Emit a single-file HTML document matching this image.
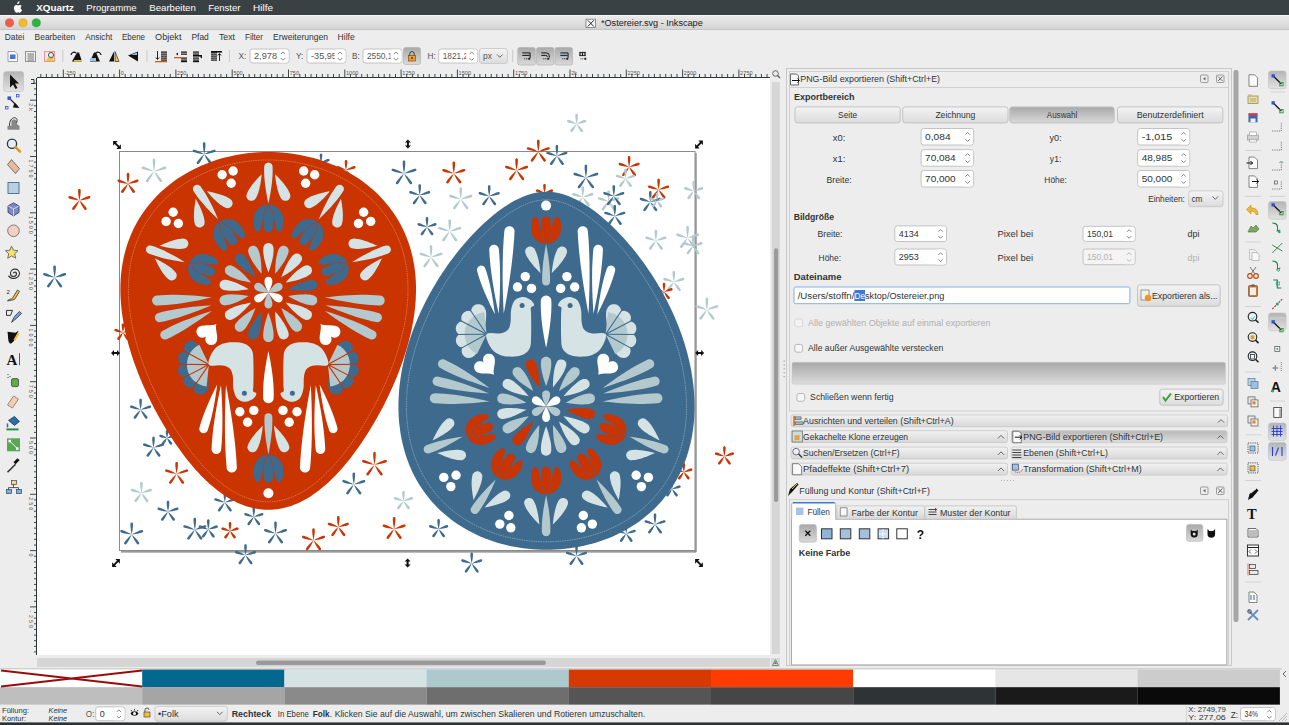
<!DOCTYPE html><html><head><meta charset="utf-8"><style>html,body{margin:0;padding:0;background:#ededed;overflow:hidden}svg{display:block}</style></head><body><svg width="1289" height="725" viewBox="0 0 1289 725" font-family="Liberation Sans">
<defs>
<linearGradient id="gTitle" x1="0" y1="0" x2="0" y2="1"><stop offset="0" stop-color="#ececec"/><stop offset="1" stop-color="#d2d2d2"/></linearGradient>
<linearGradient id="gBtn" x1="0" y1="0" x2="0" y2="1"><stop offset="0" stop-color="#f4f4f4"/><stop offset="1" stop-color="#dcdcdc"/></linearGradient>
<linearGradient id="gBtnP" x1="0" y1="0" x2="0" y2="1"><stop offset="0" stop-color="#a9a9a9"/><stop offset="1" stop-color="#d9d9d9"/></linearGradient>
<linearGradient id="gBar" x1="0" y1="0" x2="0" y2="1"><stop offset="0" stop-color="#f2f2f2"/><stop offset="1" stop-color="#d8d8d8"/></linearGradient>
<linearGradient id="gBarP" x1="0" y1="0" x2="0" y2="1"><stop offset="0" stop-color="#b8b8b8"/><stop offset="1" stop-color="#dedede"/></linearGradient>
<linearGradient id="gProg" x1="0" y1="0" x2="0" y2="1"><stop offset="0" stop-color="#a8a8a8"/><stop offset="1" stop-color="#dcdcdc"/></linearGradient>
<linearGradient id="gTool" x1="0" y1="0" x2="0" y2="1"><stop offset="0" stop-color="#b4b4b4"/><stop offset="1" stop-color="#e2e2e2"/></linearGradient>
<clipPath id="cCanvas"><rect x="37" y="78" width="733" height="577"/></clipPath>
</defs>
<rect x="0" y="0" width="1289" height="725" fill="#ededed" rx="0" />
<rect x="0" y="0" width="1289" height="15" fill="#3a4144" rx="0" />
<path d="M18.6 4.2c.5-.6.8-1.4.7-2.2-.7 0-1.5.5-2 1.1-.4.5-.8 1.3-.7 2.1.8.1 1.5-.4 2-1zm1.9 5.3c0-1.4 1.1-2 1.2-2.1-.7-1-1.7-1.1-2-1.1-.9-.1-1.7.5-2.1.5-.4 0-1.1-.5-1.8-.5-.9 0-1.8.6-2.3 1.4-1 1.7-.3 4.3.7 5.7.5.7 1 1.5 1.8 1.4.7 0 1-.5 1.8-.5s1.1.5 1.8.4c.8 0 1.2-.7 1.7-1.4.5-.8.7-1.6.8-1.6-.1 0-1.6-.6-1.6-2.2z" fill="#fff" transform="translate(2.2,-0.6) scale(0.9)"/>
<text x="36.3" y="10.6" font-size="9.8" font-weight="700" fill="#ffffff" text-anchor="start" textLength="37.6" lengthAdjust="spacingAndGlyphs" >XQuartz</text>
<text x="86.3" y="10.6" font-size="9.8" font-weight="400" fill="#ffffff" text-anchor="start" textLength="50.2" lengthAdjust="spacingAndGlyphs" >Programme</text>
<text x="149.3" y="10.6" font-size="9.8" font-weight="400" fill="#ffffff" text-anchor="start" textLength="46.5" lengthAdjust="spacingAndGlyphs" >Bearbeiten</text>
<text x="208.2" y="10.6" font-size="9.8" font-weight="400" fill="#ffffff" text-anchor="start" textLength="32.3" lengthAdjust="spacingAndGlyphs" >Fenster</text>
<text x="253" y="10.6" font-size="9.8" font-weight="400" fill="#ffffff" text-anchor="start" textLength="20" lengthAdjust="spacingAndGlyphs" >Hilfe</text>
<rect x="0" y="15" width="1289" height="15" fill="url(#gTitle)" rx="0" />
<line x1="0" y1="15.5" x2="1289" y2="15.5" stroke="#f5f5f5" stroke-width="1"/>
<line x1="0" y1="29.5" x2="1289" y2="29.5" stroke="#c4c4c4" stroke-width="1"/>
<circle cx="9.5" cy="22.8" r="4.1" fill="#f05a50" stroke="#d8463e" stroke-width="0.5"/>
<circle cx="23" cy="22.8" r="4.1" fill="#f1bb2c" stroke="#d69b1a" stroke-width="0.5"/>
<circle cx="36.3" cy="22.8" r="4.1" fill="#2db43c" stroke="#229a30" stroke-width="0.5"/>
<rect x="586" y="19.2" width="9.5" height="8.3" fill="#fafafa" rx="0" stroke="#777" stroke-width="0.8" />
<path d="M587.8 20.3 L593.8 26.5 M593.8 20.3 L587.8 26.5" stroke="#222" stroke-width="1"/>
<text x="601" y="26.2" font-size="9.2" font-weight="400" fill="#1a1a1a" text-anchor="start" textLength="101.7" lengthAdjust="spacingAndGlyphs" >*Ostereier.svg - Inkscape</text>
<text x="4.8" y="40" font-size="8.5" font-weight="400" fill="#2e3436" text-anchor="start" textLength="19.5" lengthAdjust="spacingAndGlyphs" >Datei</text>
<text x="34.6" y="40" font-size="8.5" font-weight="400" fill="#2e3436" text-anchor="start" textLength="40.7" lengthAdjust="spacingAndGlyphs" >Bearbeiten</text>
<text x="85.3" y="40" font-size="8.5" font-weight="400" fill="#2e3436" text-anchor="start" textLength="27" lengthAdjust="spacingAndGlyphs" >Ansicht</text>
<text x="122" y="40" font-size="8.5" font-weight="400" fill="#2e3436" text-anchor="start" textLength="23" lengthAdjust="spacingAndGlyphs" >Ebene</text>
<text x="155" y="40" font-size="8.5" font-weight="400" fill="#2e3436" text-anchor="start" textLength="26.5" lengthAdjust="spacingAndGlyphs" >Objekt</text>
<text x="191.5" y="40" font-size="8.5" font-weight="400" fill="#2e3436" text-anchor="start" textLength="17.3" lengthAdjust="spacingAndGlyphs" >Pfad</text>
<text x="219" y="40" font-size="8.5" font-weight="400" fill="#2e3436" text-anchor="start" textLength="16" lengthAdjust="spacingAndGlyphs" >Text</text>
<text x="245" y="40" font-size="8.5" font-weight="400" fill="#2e3436" text-anchor="start" textLength="18" lengthAdjust="spacingAndGlyphs" >Filter</text>
<text x="273" y="40" font-size="8.5" font-weight="400" fill="#2e3436" text-anchor="start" textLength="55" lengthAdjust="spacingAndGlyphs" >Erweiterungen</text>
<text x="337.6" y="40" font-size="8.5" font-weight="400" fill="#2e3436" text-anchor="start" textLength="17.1" lengthAdjust="spacingAndGlyphs" >Hilfe</text>
<path d="M8 51.5h7l2.5 2.5v7.5h-9.5z" fill="#fafafa" stroke="#8a8a8a" stroke-width="0.8"/>
<rect x="10" y="54.5" width="5.5" height="4.5" fill="#3f79c8" rx="0" />
<rect x="25.5" y="51.5" width="10" height="10" fill="none" rx="0" stroke="#222" stroke-width="0.9" stroke-dasharray="1,1"/>
<line x1="27.5" y1="54" x2="34" y2="54" stroke="#555" stroke-width="0.8"/>
<line x1="27.5" y1="56" x2="34" y2="56" stroke="#555" stroke-width="0.8"/>
<line x1="27.5" y1="58" x2="34" y2="58" stroke="#555" stroke-width="0.8"/>
<line x1="27.5" y1="60" x2="34" y2="60" stroke="#555" stroke-width="0.8"/>
<rect x="44.5" y="51.5" width="10" height="10" fill="none" rx="0" stroke="#e03020" stroke-width="0.9" stroke-dasharray="1,1"/>
<path d="M45.5 61 l3-4 h5 v4z" fill="#f0c040"/>
<circle cx="51" cy="55" r="2.6" fill="#dce8f4" stroke="#333" stroke-width="0.8"/>
<line x1="62.8" y1="50" x2="62.8" y2="62" stroke="#c8c8c8" stroke-width="1"/>
<path d="M72 61.5 h10 l-3-9 l-2 0 z" fill="#111"/><path d="M74 60 h8 v1.5 h-8z" fill="#f4c040"/><path d="M71 55 a3 3 0 0 1 5-2" fill="none" stroke="#111" stroke-width="1.2"/>
<path d="M90 61.5 h10 l-4-9 l-2 0 z" fill="#111"/><path d="M90 58 h6 v3 h-6z" fill="#9cc0e0"/><path d="M96 53 a3 3 0 0 1 5 2" fill="none" stroke="#111" stroke-width="1.2"/>
<path d="M109 61.5 h5 v-10 z" fill="#111"/><path d="M115 51.5 v10 h4 z" fill="#f4c040" stroke="#111" stroke-width="0.6"/>
<path d="M128 55.5 l10 -4 v10 z" fill="#111"/><path d="M131 55 l6 -2.5 v2.5z" fill="#9cc0e0"/>
<line x1="147" y1="50" x2="147" y2="62" stroke="#c8c8c8" stroke-width="1"/>
<rect x="161" y="51.5" width="6" height="1.2" fill="#111"/>
<rect x="161" y="53.5" width="6" height="1.2" fill="#111"/>
<rect x="161" y="55.5" width="6" height="1.2" fill="#111"/>
<rect x="161" y="57.5" width="6" height="1.2" fill="#111"/>
<rect x="161" y="59.5" width="6" height="1.2" fill="#111"/>
<path d="M157.5 51 v8 M155.8 57.5 l1.7 2 l1.7 -2" stroke="#111" stroke-width="0.9" fill="none"/>
<rect x="155" y="61" width="12" height="1.3" fill="#c46020" rx="0" />
<rect x="181" y="51.5" width="6" height="1.2" fill="#111"/>
<rect x="181" y="53.5" width="6" height="1.2" fill="#111"/>
<rect x="181" y="57.5" width="6" height="1.2" fill="#111"/>
<rect x="181" y="59.5" width="6" height="1.2" fill="#111"/>
<rect x="181" y="61" width="6" height="1.2" fill="#111"/>
<rect x="174" y="57" width="9" height="1.3" fill="#c46020" rx="0" />
<path d="M176 54 l2-1.5 v3z" fill="#111"/>
<rect x="193" y="51.5" width="6" height="1.2" fill="#111"/>
<rect x="193" y="53.5" width="6" height="1.2" fill="#111"/>
<rect x="193" y="57.5" width="6" height="1.2" fill="#111"/>
<rect x="193" y="59.5" width="6" height="1.2" fill="#111"/>
<rect x="193" y="61" width="6" height="1.2" fill="#111"/>
<rect x="193" y="55" width="9" height="1.6" fill="#111" rx="0" />
<path d="M200 57 l2 -1.5 l0 3z" fill="#111"/>
<rect x="211" y="51.5" width="6" height="1.2" fill="#111"/>
<rect x="211" y="53.5" width="6" height="1.2" fill="#111"/>
<rect x="211" y="55.5" width="6" height="1.2" fill="#111"/>
<rect x="211" y="57.5" width="6" height="1.2" fill="#111"/>
<rect x="211" y="59.5" width="6" height="1.2" fill="#111"/>
<rect x="211" y="51" width="11" height="1.6" fill="#111" rx="0" />
<path d="M219.5 61 v-7 M217.8 55.5 l1.7 -2 l1.7 2" stroke="#111" stroke-width="0.9" fill="none"/>
<line x1="229.5" y1="50" x2="229.5" y2="62" stroke="#c8c8c8" stroke-width="1"/>
<text x="238.5" y="59.3" font-size="8.2" font-weight="400" fill="#555" text-anchor="start" >X:</text>
<rect x="250.0" y="49.0" width="39" height="14" fill="#ffffff" rx="2.5" stroke="#c2c2c2" stroke-width="1" />
<text x="254.0" y="59.1" font-size="8.3" font-weight="400" fill="#555" text-anchor="start" textLength="23" lengthAdjust="spacingAndGlyphs" >2,978</text>
<rect x="277.5" y="49.5" width="11" height="13" fill="#ffffff" rx="2" />
<path d="M280.8 54.2 l2.2 -2.2 l2.2 2.2 M280.8 58.1 l2.2 2.2 l2.2 -2.2" stroke="#666" stroke-width="0.8" fill="none"/>
<text x="296" y="59.3" font-size="8.2" font-weight="400" fill="#555" text-anchor="start" >Y:</text>
<rect x="307.0" y="49.0" width="39" height="14" fill="#ffffff" rx="2.5" stroke="#c2c2c2" stroke-width="1" />
<text x="311.0" y="59.1" font-size="8.3" font-weight="400" fill="#555" text-anchor="start" textLength="31" lengthAdjust="spacingAndGlyphs" >-35,955</text>
<rect x="334.5" y="49.5" width="11" height="13" fill="#ffffff" rx="2" />
<path d="M337.8 54.2 l2.2 -2.2 l2.2 2.2 M337.8 58.1 l2.2 2.2 l2.2 -2.2" stroke="#666" stroke-width="0.8" fill="none"/>
<text x="352" y="59.3" font-size="8.2" font-weight="400" fill="#555" text-anchor="start" >B:</text>
<rect x="363.0" y="49.0" width="39" height="14" fill="#ffffff" rx="2.5" stroke="#c2c2c2" stroke-width="1" />
<text x="367.0" y="59.1" font-size="8.3" font-weight="400" fill="#555" text-anchor="start" textLength="30" lengthAdjust="spacingAndGlyphs" >2550,18</text>
<rect x="390.5" y="49.5" width="11" height="13" fill="#ffffff" rx="2" />
<path d="M393.8 54.2 l2.2 -2.2 l2.2 2.2 M393.8 58.1 l2.2 2.2 l2.2 -2.2" stroke="#666" stroke-width="0.8" fill="none"/>
<rect x="403.5" y="47.5" width="17" height="17" fill="url(#gBtnP)" rx="2" stroke="#b8b8b8" stroke-width="0.8" />
<rect x="408.5" y="55.5" width="7" height="5.5" fill="#e8a020" stroke="#704010" stroke-width="0.6"/><path d="M409.8 55.5 v-1.8 a2.2 2.2 0 0 1 4.4 0 v1.8" fill="none" stroke="#333" stroke-width="0.9"/><rect x="411" y="57" width="2" height="2" fill="#c03010"/>
<text x="427.5" y="59.3" font-size="8.2" font-weight="400" fill="#555" text-anchor="start" >H:</text>
<rect x="438.7" y="49.0" width="39" height="14" fill="#ffffff" rx="2.5" stroke="#c2c2c2" stroke-width="1" />
<text x="442.7" y="59.1" font-size="8.3" font-weight="400" fill="#555" text-anchor="start" textLength="30" lengthAdjust="spacingAndGlyphs" >1821,25</text>
<rect x="466.2" y="49.5" width="11" height="13" fill="#ffffff" rx="2" />
<path d="M469.5 54.2 l2.2 -2.2 l2.2 2.2 M469.5 58.1 l2.2 2.2 l2.2 -2.2" stroke="#666" stroke-width="0.8" fill="none"/>
<rect x="479.5" y="48.5" width="28" height="15" fill="url(#gBtn)" rx="2.5" stroke="#c4c4c4" stroke-width="0.8" />
<text x="483" y="59.3" font-size="8.5" font-weight="400" fill="#555" text-anchor="start" >px</text>
<path d="M497 54.5 l2.8 2.8 l2.8 -2.8" stroke="#555" stroke-width="0.9" fill="none"/>
<line x1="512.7" y1="50" x2="512.7" y2="62" stroke="#c8c8c8" stroke-width="1"/>
<rect x="517.8" y="47.5" width="17.5" height="17.5" fill="url(#gBtnP)" rx="2" stroke="#b8b8b8" stroke-width="0.8" />
<rect x="536.5" y="47.5" width="17.5" height="17.5" fill="url(#gBtnP)" rx="2" stroke="#b8b8b8" stroke-width="0.8" />
<rect x="555" y="47.5" width="17.5" height="17.5" fill="url(#gBtnP)" rx="2" stroke="#b8b8b8" stroke-width="0.8" />
<path d="M522.3 52.9 h7.8 v5 M522.3 55.4 h7.3" stroke="#111" stroke-width="1" fill="none"/>
<path d="M524.3 58.8 h1 M526.0999999999999 58.8 h1 M527.8 58.8 h2.6 M529.1999999999999 57.6 v2.4" stroke="#111" stroke-width="0.9"/>
<path d="M541.3 52.9 h5 a3 3 0 0 1 3 3 v1.6 M541.3 55.4 h4.5 a1.5 1.5 0 0 1 1.5 1.5" stroke="#111" stroke-width="1" fill="none"/>
<path d="M543.3 58.8 h1 M545.0999999999999 58.8 h1 M546.8 58.8 h2.6 M548.1999999999999 57.6 v2.4" stroke="#111" stroke-width="0.9"/>
<rect x="560.3" y="53.2" width="7.5" height="3.5" fill="#8ab4dc"/><path d="M560.3 52.9 h7.8 v5 M560.3 55.4 h7.3" stroke="#111" stroke-width="0.9" fill="none"/>
<path d="M562.3 58.8 h1 M564.0999999999999 58.8 h1 M565.8 58.8 h2.6 M567.1999999999999 57.6 v2.4" stroke="#111" stroke-width="0.9"/>
<path d="M579.3 52.4 h6.5 M579.3 55.6 h6.5" stroke="#111" stroke-width="0.9"/><path d="M580 52.5 v3 M582.5 52.5 v3 M585 52.5 v3" stroke="#111" stroke-width="1.2"/><path d="M580.5 58.8 h1 M582.3 58.8 h1 M584 58.8 h2.4 M585.3 57.6 v2.4" stroke="#111" stroke-width="0.9"/>
<rect x="3.6" y="71.5" width="20" height="20" fill="url(#gTool)" rx="2.5" stroke="#c0c0c0" stroke-width="0.6" />
<path d="M10 74.5 v13 l3-3 l2.5 4.5 l2-1 l-2.5-4.5 h4z" fill="#111"/>
<path d="M9.5 98.4 l8 8" stroke="#111" stroke-width="1.3"/><path d="M14.5 102.4 l5 5.5 l-6.5 -0.5z" fill="#111"/><rect x="7.5" y="96.4" width="3.5" height="3.5" fill="#3050e0"/><rect x="16.5" y="94.4" width="2.5" height="2.5" fill="none" stroke="#3050e0" stroke-width="0.8"/><rect x="5.5" y="106.4" width="2.5" height="2.5" fill="none" stroke="#3050e0" stroke-width="0.8"/>
<path d="M7.5 129.8 h12 v-4 c-2 0 -3 -3 -3 -5 a3 3 0 0 0 -5 0 v5 h-4z" fill="#888"/><path d="M9.5 125.8 c0-5 2-8 5-8 s3 3 2 5" fill="none" stroke="#333" stroke-width="1"/>
<circle cx="12.0" cy="143.7" r="4.6" fill="#e4eef8" stroke="#333" stroke-width="1.3"/><path d="M15.5 147.2 l4.5 4.5" stroke="#d89a20" stroke-width="2.6" stroke-linecap="round"/>
<path d="M7.5 164.6 l4 -5 l8 9 l-4 5z" fill="#e8b8a0" stroke="#555" stroke-width="0.8"/>
<rect x="8.0" y="182.5" width="11" height="11" fill="#b8d0e4" stroke="#4a6a8a" stroke-width="0.9"/>
<path d="M13.5 202.89999999999998 l5.5 3 v6.5 l-5.5 3.5 l-5.5 -3.5 v-6.5z" fill="#7a8cc8" stroke="#334" stroke-width="0.8"/><path d="M8.0 205.89999999999998 l5.5 3 l5.5 -3 M13.5 208.89999999999998 v7" stroke="#eef" stroke-width="0.7" fill="none"/>
<circle cx="13.5" cy="230.79999999999998" r="5.8" fill="#f0d0c4" stroke="#6a5a5a" stroke-width="0.8"/>
<path d="M11.5 246.2 l2 4 l4.5 0.5 l-3.3 3 l1 4.5 l-4 -2.3 l-4 2.3 l1 -4.5 l-3.3 -3 l4.5 -0.5z" fill="#f6e070" stroke="#555" stroke-width="0.8"/>
<path d="M13.5 273.6 a1.5 1.5 0 0 1 3 0 a3 3 0 0 1 -6 0 a4.5 4.5 0 0 1 9 0 a6 6 0 0 1 -11 2" fill="none" stroke="#333" stroke-width="1.1"/>
<path d="M7.5 301.0 c2 -3 4 -1 5 -3 l5 -8 l2 1.5 l-5 8z" fill="#f0c040" stroke="#333" stroke-width="0.8"/><text x="6.5" y="294.0" font-size="6" fill="#222">2</text>
<path d="M6.5 310.4 h6 l-2 5 h-4z" fill="none" stroke="#333" stroke-width="1"/><path d="M11.5 322.4 l3 -6 l5 -5 l2 2 l-5 5z" fill="#7aa0d0" stroke="#333" stroke-width="0.8"/>
<path d="M7.5 331.79999999999995 c1 6 0 10 3 12 c2 -1 5 -4 6 -8 l2 -5 l-3 2 z" fill="#111"/><path d="M13.5 339.79999999999995 l4 -7 l2 1 l-4 7z" fill="#f0c040"/>
<text x="6.5" y="364.7" font-size="15" font-weight="700" font-family="Liberation Serif" fill="#111">A</text><line x1="19.5" y1="353.2" x2="19.5" y2="365.2" stroke="#333" stroke-width="0.8"/>
<rect x="11.5" y="378.59999999999997" width="7" height="8" rx="1.5" fill="#5ab040" stroke="#333" stroke-width="0.7"/><path d="M7.5 374.59999999999997 h1 M9.5 376.59999999999997 h1 M7.5 377.59999999999997 h1" stroke="#333" stroke-width="1"/>
<path d="M7.5 405.0 l6 -9 l5 3 l-6 9z" fill="#f4ccb0" stroke="#777" stroke-width="0.8"/>
<path d="M8.5 420.4 l6 -4 l5 5 l-5 4z" fill="#2a6ea8" stroke="#234" stroke-width="0.8"/><path d="M6.5 429.4 h12" stroke="#2a8a40" stroke-width="2"/><path d="M7.5 423.4 v4" stroke="#2a6ea8" stroke-width="1.5"/>
<rect x="7.0" y="438.29999999999995" width="13" height="13" fill="#58a858"/><path d="M9.5 440.79999999999995 l8 8" stroke="#fff" stroke-width="0.9"/><rect x="8.5" y="439.79999999999995" width="2.5" height="2.5" fill="#fff"/><rect x="16.0" y="447.29999999999995" width="2.5" height="2.5" fill="#fff"/>
<path d="M7.5 472.2 l8 -8" stroke="#333" stroke-width="1.6"/><path d="M14.5 463.2 l4 -4" stroke="#111" stroke-width="3"/>
<rect x="11.5" y="480.59999999999997" width="5" height="4" fill="#f0d890" stroke="#345" stroke-width="0.7"/><rect x="6.5" y="489.59999999999997" width="5" height="4" fill="#7ab0e0" stroke="#345" stroke-width="0.7"/><rect x="16.5" y="489.59999999999997" width="5" height="4" fill="#7ab0e0" stroke="#345" stroke-width="0.7"/><path d="M13.5 484.59999999999997 v3 M8.5 489.59999999999997 v-2 h10 v2" stroke="#333" stroke-width="0.8" fill="none"/>
<rect x="37" y="68" width="735" height="10" fill="#ededed" rx="0" />
<line x1="37" y1="77.5" x2="770" y2="77.5" stroke="#2e3436" stroke-width="1"/>
<line x1="36.5" y1="78" x2="36.5" y2="655" stroke="#2e3436" stroke-width="1"/>
<path d="M40.8 77 v-3 M46.4 77 v-3 M52.0 77 v-3 M57.7 77 v-3 M63.3 77 v-7.5 M68.9 77 v-3 M74.6 77 v-3 M80.2 77 v-3 M85.8 77 v-3 M91.4 77 v-3 M97.1 77 v-3 M102.7 77 v-3 M108.3 77 v-3 M114.0 77 v-3 M119.6 77 v-7.5 M125.2 77 v-3 M130.9 77 v-3 M136.5 77 v-3 M142.1 77 v-3 M147.8 77 v-3 M153.4 77 v-3 M159.0 77 v-3 M164.6 77 v-3 M170.3 77 v-3 M175.9 77 v-7.5 M181.5 77 v-3 M187.2 77 v-3 M192.8 77 v-3 M198.4 77 v-3 M204.1 77 v-3 M209.7 77 v-3 M215.3 77 v-3 M220.9 77 v-3 M226.6 77 v-3 M232.2 77 v-7.5 M237.8 77 v-3 M243.5 77 v-3 M249.1 77 v-3 M254.7 77 v-3 M260.3 77 v-3 M266.0 77 v-3 M271.6 77 v-3 M277.2 77 v-3 M282.9 77 v-3 M288.5 77 v-7.5 M294.1 77 v-3 M299.8 77 v-3 M305.4 77 v-3 M311.0 77 v-3 M316.6 77 v-3 M322.3 77 v-3 M327.9 77 v-3 M333.5 77 v-3 M339.2 77 v-3 M344.8 77 v-7.5 M350.4 77 v-3 M356.1 77 v-3 M361.7 77 v-3 M367.3 77 v-3 M372.9 77 v-3 M378.6 77 v-3 M384.2 77 v-3 M389.8 77 v-3 M395.5 77 v-3 M401.1 77 v-7.5 M406.7 77 v-3 M412.4 77 v-3 M418.0 77 v-3 M423.6 77 v-3 M429.2 77 v-3 M434.9 77 v-3 M440.5 77 v-3 M446.1 77 v-3 M451.8 77 v-3 M457.4 77 v-7.5 M463.0 77 v-3 M468.7 77 v-3 M474.3 77 v-3 M479.9 77 v-3 M485.6 77 v-3 M491.2 77 v-3 M496.8 77 v-3 M502.4 77 v-3 M508.1 77 v-3 M513.7 77 v-7.5 M519.3 77 v-3 M525.0 77 v-3 M530.6 77 v-3 M536.2 77 v-3 M541.9 77 v-3 M547.5 77 v-3 M553.1 77 v-3 M558.7 77 v-3 M564.4 77 v-3 M570.0 77 v-7.5 M575.6 77 v-3 M581.3 77 v-3 M586.9 77 v-3 M592.5 77 v-3 M598.1 77 v-3 M603.8 77 v-3 M609.4 77 v-3 M615.0 77 v-3 M620.7 77 v-3 M626.3 77 v-7.5 M631.9 77 v-3 M637.6 77 v-3 M643.2 77 v-3 M648.8 77 v-3 M654.4 77 v-3 M660.1 77 v-3 M665.7 77 v-3 M671.3 77 v-3 M677.0 77 v-3 M682.6 77 v-7.5 M688.2 77 v-3 M693.9 77 v-3 M699.5 77 v-3 M705.1 77 v-3 M710.7 77 v-3 M716.4 77 v-3 M722.0 77 v-3 M727.6 77 v-3 M733.3 77 v-3 M738.9 77 v-7.5 M744.5 77 v-3 M750.2 77 v-3 M755.8 77 v-3 M761.4 77 v-3 M767.0 77 v-3" stroke="#2e3436" stroke-width="0.9"/>
<text x="64.5" y="74.6" font-size="5.6" font-weight="400" fill="#555" text-anchor="start" >-250</text>
<text x="120.8" y="74.6" font-size="5.6" font-weight="400" fill="#555" text-anchor="start" >0</text>
<text x="177.09999999999997" y="74.6" font-size="5.6" font-weight="400" fill="#555" text-anchor="start" >250</text>
<text x="233.39999999999998" y="74.6" font-size="5.6" font-weight="400" fill="#555" text-anchor="start" >500</text>
<text x="289.7" y="74.6" font-size="5.6" font-weight="400" fill="#555" text-anchor="start" >750</text>
<text x="346.0" y="74.6" font-size="5.6" font-weight="400" fill="#555" text-anchor="start" >1000</text>
<text x="402.29999999999995" y="74.6" font-size="5.6" font-weight="400" fill="#555" text-anchor="start" >1250</text>
<text x="458.59999999999997" y="74.6" font-size="5.6" font-weight="400" fill="#555" text-anchor="start" >1500</text>
<text x="514.9" y="74.6" font-size="5.6" font-weight="400" fill="#555" text-anchor="start" >1750</text>
<text x="571.2" y="74.6" font-size="5.6" font-weight="400" fill="#555" text-anchor="start" >2k</text>
<text x="627.5" y="74.6" font-size="5.6" font-weight="400" fill="#555" text-anchor="start" >2250</text>
<text x="683.8" y="74.6" font-size="5.6" font-weight="400" fill="#555" text-anchor="start" >2500</text>
<text x="740.0999999999999" y="74.6" font-size="5.6" font-weight="400" fill="#555" text-anchor="start" >2750</text>
<path d="M37 83.3 h-3 M37 88.9 h-3 M37 94.6 h-3 M37 100.2 h-7 M37 105.8 h-3 M37 111.5 h-3 M37 117.1 h-3 M37 122.7 h-3 M37 128.3 h-3 M37 134.0 h-3 M37 139.6 h-3 M37 145.2 h-3 M37 150.9 h-3 M37 156.5 h-7 M37 162.1 h-3 M37 167.8 h-3 M37 173.4 h-3 M37 179.0 h-3 M37 184.7 h-3 M37 190.3 h-3 M37 195.9 h-3 M37 201.5 h-3 M37 207.2 h-3 M37 212.8 h-7 M37 218.4 h-3 M37 224.1 h-3 M37 229.7 h-3 M37 235.3 h-3 M37 240.9 h-3 M37 246.6 h-3 M37 252.2 h-3 M37 257.8 h-3 M37 263.5 h-3 M37 269.1 h-7 M37 274.7 h-3 M37 280.4 h-3 M37 286.0 h-3 M37 291.6 h-3 M37 297.2 h-3 M37 302.9 h-3 M37 308.5 h-3 M37 314.1 h-3 M37 319.8 h-3 M37 325.4 h-7 M37 331.0 h-3 M37 336.7 h-3 M37 342.3 h-3 M37 347.9 h-3 M37 353.6 h-3 M37 359.2 h-3 M37 364.8 h-3 M37 370.4 h-3 M37 376.1 h-3 M37 381.7 h-7 M37 387.3 h-3 M37 393.0 h-3 M37 398.6 h-3 M37 404.2 h-3 M37 409.8 h-3 M37 415.5 h-3 M37 421.1 h-3 M37 426.7 h-3 M37 432.4 h-3 M37 438.0 h-7 M37 443.6 h-3 M37 449.3 h-3 M37 454.9 h-3 M37 460.5 h-3 M37 466.1 h-3 M37 471.8 h-3 M37 477.4 h-3 M37 483.0 h-3 M37 488.7 h-3 M37 494.3 h-7 M37 499.9 h-3 M37 505.6 h-3 M37 511.2 h-3 M37 516.8 h-3 M37 522.5 h-3 M37 528.1 h-3 M37 533.7 h-3 M37 539.3 h-3 M37 545.0 h-3 M37 550.6 h-7 M37 556.2 h-3 M37 561.9 h-3 M37 567.5 h-3 M37 573.1 h-3 M37 578.8 h-3 M37 584.4 h-3 M37 590.0 h-3 M37 595.6 h-3 M37 601.3 h-3 M37 606.9 h-7 M37 612.5 h-3 M37 618.2 h-3 M37 623.8 h-3 M37 629.4 h-3 M37 635.1 h-3 M37 640.7 h-3 M37 646.3 h-3 M37 651.9 h-3" stroke="#2e3436" stroke-width="0.9"/>
<text x="30.5" y="106.7" font-size="5.4" font-weight="400" fill="#555" text-anchor="middle" transform="rotate(90 30.5 104.7)">2</text>
<text x="30.5" y="111.7" font-size="5.4" font-weight="400" fill="#555" text-anchor="middle" transform="rotate(90 30.5 109.7)">k</text>
<text x="30.5" y="163.0" font-size="5.4" font-weight="400" fill="#555" text-anchor="middle" transform="rotate(90 30.5 161.0)">1</text>
<text x="30.5" y="168.0" font-size="5.4" font-weight="400" fill="#555" text-anchor="middle" transform="rotate(90 30.5 166.0)">7</text>
<text x="30.5" y="173.0" font-size="5.4" font-weight="400" fill="#555" text-anchor="middle" transform="rotate(90 30.5 171.0)">5</text>
<text x="30.5" y="178.0" font-size="5.4" font-weight="400" fill="#555" text-anchor="middle" transform="rotate(90 30.5 176.0)">0</text>
<text x="30.5" y="219.3" font-size="5.4" font-weight="400" fill="#555" text-anchor="middle" transform="rotate(90 30.5 217.3)">1</text>
<text x="30.5" y="224.3" font-size="5.4" font-weight="400" fill="#555" text-anchor="middle" transform="rotate(90 30.5 222.3)">5</text>
<text x="30.5" y="229.3" font-size="5.4" font-weight="400" fill="#555" text-anchor="middle" transform="rotate(90 30.5 227.3)">0</text>
<text x="30.5" y="234.3" font-size="5.4" font-weight="400" fill="#555" text-anchor="middle" transform="rotate(90 30.5 232.3)">0</text>
<text x="30.5" y="275.59999999999997" font-size="5.4" font-weight="400" fill="#555" text-anchor="middle" transform="rotate(90 30.5 273.59999999999997)">1</text>
<text x="30.5" y="280.59999999999997" font-size="5.4" font-weight="400" fill="#555" text-anchor="middle" transform="rotate(90 30.5 278.59999999999997)">2</text>
<text x="30.5" y="285.59999999999997" font-size="5.4" font-weight="400" fill="#555" text-anchor="middle" transform="rotate(90 30.5 283.59999999999997)">5</text>
<text x="30.5" y="290.59999999999997" font-size="5.4" font-weight="400" fill="#555" text-anchor="middle" transform="rotate(90 30.5 288.59999999999997)">0</text>
<text x="30.5" y="331.9" font-size="5.4" font-weight="400" fill="#555" text-anchor="middle" transform="rotate(90 30.5 329.9)">1</text>
<text x="30.5" y="336.9" font-size="5.4" font-weight="400" fill="#555" text-anchor="middle" transform="rotate(90 30.5 334.9)">0</text>
<text x="30.5" y="341.9" font-size="5.4" font-weight="400" fill="#555" text-anchor="middle" transform="rotate(90 30.5 339.9)">0</text>
<text x="30.5" y="346.9" font-size="5.4" font-weight="400" fill="#555" text-anchor="middle" transform="rotate(90 30.5 344.9)">0</text>
<text x="30.5" y="388.2" font-size="5.4" font-weight="400" fill="#555" text-anchor="middle" transform="rotate(90 30.5 386.2)">7</text>
<text x="30.5" y="393.2" font-size="5.4" font-weight="400" fill="#555" text-anchor="middle" transform="rotate(90 30.5 391.2)">5</text>
<text x="30.5" y="398.2" font-size="5.4" font-weight="400" fill="#555" text-anchor="middle" transform="rotate(90 30.5 396.2)">0</text>
<text x="30.5" y="444.49999999999994" font-size="5.4" font-weight="400" fill="#555" text-anchor="middle" transform="rotate(90 30.5 442.49999999999994)">5</text>
<text x="30.5" y="449.49999999999994" font-size="5.4" font-weight="400" fill="#555" text-anchor="middle" transform="rotate(90 30.5 447.49999999999994)">0</text>
<text x="30.5" y="454.49999999999994" font-size="5.4" font-weight="400" fill="#555" text-anchor="middle" transform="rotate(90 30.5 452.49999999999994)">0</text>
<text x="30.5" y="500.79999999999995" font-size="5.4" font-weight="400" fill="#555" text-anchor="middle" transform="rotate(90 30.5 498.79999999999995)">2</text>
<text x="30.5" y="505.79999999999995" font-size="5.4" font-weight="400" fill="#555" text-anchor="middle" transform="rotate(90 30.5 503.79999999999995)">5</text>
<text x="30.5" y="510.79999999999995" font-size="5.4" font-weight="400" fill="#555" text-anchor="middle" transform="rotate(90 30.5 508.79999999999995)">0</text>
<text x="30.5" y="557.1" font-size="5.4" font-weight="400" fill="#555" text-anchor="middle" transform="rotate(90 30.5 555.1)">0</text>
<text x="30.5" y="613.4" font-size="5.4" font-weight="400" fill="#555" text-anchor="middle" transform="rotate(90 30.5 611.4)">-</text>
<text x="30.5" y="618.4" font-size="5.4" font-weight="400" fill="#555" text-anchor="middle" transform="rotate(90 30.5 616.4)">2</text>
<text x="30.5" y="623.4" font-size="5.4" font-weight="400" fill="#555" text-anchor="middle" transform="rotate(90 30.5 621.4)">5</text>
<text x="30.5" y="628.4" font-size="5.4" font-weight="400" fill="#555" text-anchor="middle" transform="rotate(90 30.5 626.4)">0</text>
<path d="M31 79.5 h3 v4 h-3" stroke="#2e3436" stroke-width="1" fill="none"/>
<circle cx="775.5" cy="73.5" r="2.8" fill="none" stroke="#555" stroke-width="0.9"/><path d="M777.5 75.5 l2.5 2.5" stroke="#555" stroke-width="1.2"/>
<rect x="37" y="78" width="733" height="577" fill="#ffffff" rx="0" />
<g clip-path="url(#cCanvas)">
<rect x="119.5" y="151.5" width="575.5" height="399" fill="none" stroke="#8a8a8a" stroke-width="1"/>
<line x1="696" y1="153" x2="696" y2="552" stroke="#7a7a7a" stroke-width="1.2"/><line x1="121" y1="551.8" x2="696" y2="551.8" stroke="#7a7a7a" stroke-width="1.2"/>
<polygon points="79.40,200.40 79.13,199.16 78.89,197.97 78.68,196.82 78.51,195.72 78.37,194.68 78.26,193.67 78.18,192.72 78.14,191.82 78.13,190.96 78.15,190.15 78.19,189.83 78.32,189.53 78.52,189.27 78.78,189.07 79.08,188.94 79.40,188.90 79.72,188.94 80.03,189.07 80.28,189.27 80.48,189.53 80.61,189.83 80.65,190.15 80.67,190.96 80.66,191.82 80.62,192.72 80.54,193.67 80.43,194.68 80.29,195.72 80.12,196.82 79.91,197.97 79.67,199.16" fill="#c93400"/><polygon points="79.40,200.40 80.50,199.76 81.56,199.16 82.58,198.61 83.57,198.11 84.53,197.65 85.44,197.24 86.33,196.87 87.17,196.55 87.99,196.27 88.76,196.04 89.08,195.98 89.41,196.01 89.72,196.12 89.98,196.30 90.20,196.55 90.34,196.85 90.40,197.17 90.37,197.49 90.26,197.80 90.08,198.07 89.83,198.28 89.53,198.42 88.77,198.69 87.95,198.95 87.08,199.18 86.15,199.41 85.16,199.61 84.12,199.80 83.03,199.98 81.87,200.13 80.66,200.27" fill="#c93400"/><polygon points="79.40,200.40 80.35,201.24 81.24,202.07 82.08,202.87 82.87,203.66 83.60,204.43 84.28,205.17 84.90,205.90 85.46,206.60 85.98,207.29 86.44,207.96 86.59,208.24 86.67,208.56 86.66,208.89 86.57,209.20 86.40,209.48 86.16,209.70 85.87,209.86 85.56,209.94 85.23,209.93 84.92,209.83 84.64,209.66 84.41,209.43 83.92,208.79 83.43,208.09 82.93,207.33 82.43,206.51 81.93,205.64 81.43,204.71 80.92,203.72 80.42,202.67 79.91,201.56" fill="#c93400"/><polygon points="79.40,200.40 78.89,201.56 78.38,202.67 77.88,203.72 77.37,204.71 76.87,205.64 76.37,206.51 75.87,207.33 75.37,208.09 74.88,208.79 74.39,209.43 74.16,209.66 73.88,209.83 73.57,209.93 73.24,209.94 72.93,209.86 72.64,209.70 72.40,209.48 72.23,209.20 72.14,208.89 72.13,208.56 72.21,208.24 72.36,207.96 72.82,207.29 73.34,206.60 73.90,205.90 74.52,205.17 75.20,204.43 75.93,203.66 76.72,202.87 77.56,202.07 78.45,201.24" fill="#c93400"/><polygon points="79.40,200.40 78.14,200.27 76.93,200.13 75.77,199.98 74.68,199.80 73.64,199.61 72.65,199.41 71.72,199.18 70.85,198.95 70.03,198.69 69.27,198.42 68.97,198.28 68.72,198.07 68.54,197.80 68.43,197.49 68.40,197.17 68.46,196.85 68.60,196.55 68.82,196.30 69.08,196.12 69.39,196.01 69.72,195.98 70.04,196.04 70.81,196.27 71.63,196.55 72.47,196.87 73.36,197.24 74.27,197.65 75.23,198.11 76.22,198.61 77.24,199.16 78.30,199.76" fill="#c93400"/>
<polygon points="128.00,183.80 127.73,182.61 127.49,181.47 127.28,180.38 127.11,179.34 126.97,178.34 126.86,177.39 126.78,176.48 126.74,175.62 126.73,174.81 126.75,174.05 126.79,173.73 126.92,173.43 127.12,173.17 127.38,172.97 127.68,172.84 128.00,172.80 128.32,172.84 128.62,172.97 128.88,173.17 129.08,173.43 129.21,173.73 129.25,174.05 129.27,174.81 129.26,175.62 129.22,176.48 129.14,177.39 129.03,178.34 128.89,179.34 128.72,180.38 128.51,181.47 128.27,182.61" fill="#c93400"/><polygon points="128.00,183.80 129.04,183.18 130.05,182.60 131.03,182.06 131.97,181.57 132.88,181.13 133.75,180.73 134.58,180.38 135.39,180.08 136.15,179.81 136.89,179.60 137.21,179.54 137.53,179.56 137.84,179.67 138.11,179.86 138.32,180.11 138.46,180.40 138.52,180.72 138.50,181.05 138.39,181.35 138.20,181.62 137.95,181.84 137.66,181.98 136.94,182.23 136.17,182.47 135.34,182.70 134.45,182.90 133.51,183.09 132.52,183.27 131.47,183.42 130.37,183.57 129.21,183.69" fill="#c93400"/><polygon points="128.00,183.80 128.92,184.60 129.78,185.38 130.59,186.14 131.34,186.89 132.05,187.61 132.69,188.32 133.29,189.01 133.83,189.67 134.31,190.32 134.74,190.95 134.90,191.24 134.97,191.56 134.97,191.88 134.87,192.20 134.70,192.47 134.47,192.70 134.18,192.85 133.86,192.93 133.54,192.92 133.22,192.83 132.94,192.66 132.72,192.42 132.25,191.82 131.79,191.16 131.32,190.44 130.85,189.66 130.38,188.83 129.90,187.93 129.43,186.99 128.95,185.98 128.48,184.92" fill="#c93400"/><polygon points="128.00,183.80 127.52,184.92 127.05,185.98 126.57,186.99 126.10,187.93 125.62,188.83 125.15,189.66 124.68,190.44 124.21,191.16 123.75,191.82 123.28,192.42 123.06,192.66 122.78,192.83 122.46,192.92 122.14,192.93 121.82,192.85 121.53,192.70 121.30,192.47 121.13,192.20 121.03,191.88 121.03,191.56 121.10,191.24 121.26,190.95 121.69,190.32 122.17,189.67 122.71,189.01 123.31,188.32 123.95,187.61 124.66,186.89 125.41,186.14 126.22,185.38 127.08,184.60" fill="#c93400"/><polygon points="128.00,183.80 126.79,183.69 125.63,183.57 124.53,183.42 123.48,183.27 122.49,183.09 121.55,182.90 120.66,182.70 119.83,182.47 119.06,182.23 118.34,181.98 118.05,181.84 117.80,181.62 117.61,181.35 117.50,181.05 117.48,180.72 117.54,180.40 117.68,180.11 117.89,179.86 118.16,179.67 118.47,179.56 118.79,179.54 119.11,179.60 119.85,179.81 120.61,180.08 121.42,180.38 122.25,180.73 123.12,181.13 124.03,181.57 124.97,182.06 125.95,182.60 126.96,183.18" fill="#c93400"/>
<polygon points="154.00,171.40 153.73,170.00 153.49,168.64 153.28,167.34 153.11,166.09 152.97,164.89 152.86,163.74 152.78,162.64 152.74,161.59 152.73,160.60 152.75,159.65 152.79,159.33 152.92,159.03 153.12,158.77 153.38,158.57 153.68,158.44 154.00,158.40 154.32,158.44 154.62,158.57 154.88,158.77 155.08,159.03 155.21,159.33 155.25,159.65 155.27,160.60 155.26,161.59 155.22,162.64 155.14,163.74 155.03,164.89 154.89,166.09 154.72,167.34 154.51,168.64 154.27,170.00" fill="#b3c9cd"/><polygon points="154.00,171.40 155.25,170.71 156.47,170.06 157.64,169.46 158.78,168.91 159.88,168.41 160.93,167.95 161.96,167.54 162.94,167.17 163.88,166.85 164.79,166.58 165.11,166.52 165.43,166.55 165.74,166.66 166.01,166.84 166.22,167.09 166.36,167.38 166.42,167.70 166.40,168.03 166.29,168.34 166.10,168.61 165.86,168.82 165.56,168.96 164.67,169.27 163.72,169.57 162.71,169.85 161.64,170.12 160.51,170.37 159.33,170.60 158.08,170.83 156.78,171.03 155.42,171.22" fill="#b3c9cd"/><polygon points="154.00,171.40 155.04,172.38 156.03,173.33 156.97,174.26 157.84,175.17 158.66,176.06 159.43,176.93 160.13,177.77 160.78,178.59 161.38,179.39 161.92,180.17 162.07,180.46 162.15,180.78 162.14,181.10 162.05,181.41 161.88,181.69 161.64,181.92 161.35,182.07 161.04,182.15 160.71,182.14 160.40,182.05 160.12,181.88 159.90,181.64 159.32,180.89 158.75,180.08 158.17,179.20 157.58,178.27 156.99,177.27 156.40,176.22 155.81,175.11 155.21,173.93 154.61,172.70" fill="#b3c9cd"/><polygon points="154.00,171.40 153.39,172.70 152.79,173.93 152.19,175.11 151.60,176.22 151.01,177.27 150.42,178.27 149.83,179.20 149.25,180.08 148.68,180.89 148.10,181.64 147.88,181.88 147.60,182.05 147.29,182.14 146.96,182.15 146.65,182.07 146.36,181.92 146.12,181.69 145.95,181.41 145.86,181.10 145.85,180.78 145.93,180.46 146.08,180.17 146.62,179.39 147.22,178.59 147.87,177.77 148.57,176.93 149.34,176.06 150.16,175.17 151.03,174.26 151.97,173.33 152.96,172.38" fill="#b3c9cd"/><polygon points="154.00,171.40 152.58,171.22 151.22,171.03 149.92,170.83 148.67,170.60 147.49,170.37 146.36,170.12 145.29,169.85 144.28,169.57 143.33,169.27 142.44,168.96 142.14,168.82 141.90,168.61 141.71,168.34 141.60,168.03 141.58,167.70 141.64,167.38 141.78,167.09 141.99,166.84 142.26,166.66 142.57,166.55 142.89,166.52 143.21,166.58 144.12,166.85 145.06,167.17 146.04,167.54 147.07,167.95 148.12,168.41 149.22,168.91 150.36,169.46 151.53,170.06 152.75,170.71" fill="#b3c9cd"/>
<polygon points="204.20,154.20 203.93,152.90 203.69,151.66 203.48,150.46 203.31,149.31 203.17,148.21 203.06,147.16 202.98,146.16 202.94,145.21 202.93,144.30 202.95,143.45 202.99,143.13 203.12,142.82 203.32,142.57 203.57,142.37 203.88,142.24 204.20,142.20 204.52,142.24 204.82,142.37 205.08,142.57 205.28,142.82 205.41,143.13 205.45,143.45 205.47,144.30 205.46,145.21 205.42,146.16 205.34,147.16 205.23,148.21 205.09,149.31 204.92,150.46 204.71,151.66 204.47,152.90" fill="#3e6a8d"/><polygon points="204.20,154.20 205.35,153.54 206.46,152.93 207.54,152.36 208.57,151.84 209.58,151.37 210.54,150.94 211.47,150.56 212.36,150.22 213.22,149.93 214.04,149.69 214.36,149.63 214.68,149.66 214.99,149.76 215.26,149.95 215.47,150.20 215.61,150.49 215.67,150.81 215.65,151.14 215.54,151.45 215.35,151.71 215.10,151.93 214.81,152.07 214.00,152.35 213.14,152.62 212.22,152.87 211.25,153.11 210.21,153.33 209.12,153.54 207.98,153.73 206.78,153.90 205.52,154.06" fill="#3e6a8d"/><polygon points="204.20,154.20 205.18,155.09 206.11,155.96 206.98,156.80 207.79,157.63 208.55,158.44 209.26,159.22 209.91,159.99 210.50,160.73 211.04,161.46 211.53,162.16 211.69,162.45 211.76,162.77 211.75,163.09 211.66,163.41 211.49,163.68 211.25,163.91 210.97,164.06 210.65,164.14 210.32,164.13 210.01,164.04 209.73,163.87 209.51,163.63 208.99,162.95 208.47,162.22 207.94,161.42 207.41,160.56 206.89,159.65 206.35,158.68 205.82,157.65 205.28,156.56 204.74,155.41" fill="#3e6a8d"/><polygon points="204.20,154.20 203.66,155.41 203.12,156.56 202.58,157.65 202.05,158.68 201.51,159.65 200.99,160.56 200.46,161.42 199.93,162.22 199.41,162.95 198.89,163.63 198.67,163.87 198.39,164.04 198.08,164.13 197.75,164.14 197.43,164.06 197.15,163.91 196.91,163.68 196.74,163.41 196.65,163.09 196.64,162.77 196.71,162.45 196.87,162.16 197.36,161.46 197.90,160.73 198.49,159.99 199.14,159.22 199.85,158.44 200.61,157.63 201.42,156.80 202.29,155.96 203.22,155.09" fill="#3e6a8d"/><polygon points="204.20,154.20 202.88,154.06 201.62,153.90 200.42,153.73 199.28,153.54 198.19,153.33 197.15,153.11 196.18,152.87 195.26,152.62 194.40,152.35 193.59,152.07 193.30,151.93 193.05,151.71 192.86,151.45 192.75,151.14 192.73,150.81 192.79,150.49 192.93,150.20 193.14,149.95 193.41,149.76 193.72,149.66 194.04,149.63 194.36,149.69 195.18,149.93 196.04,150.22 196.93,150.56 197.86,150.94 198.82,151.37 199.83,151.84 200.86,152.36 201.94,152.93 203.05,153.54" fill="#3e6a8d"/>
<polygon points="54.60,277.50 54.33,276.20 54.09,274.96 53.88,273.76 53.71,272.61 53.57,271.51 53.46,270.46 53.38,269.46 53.34,268.51 53.33,267.60 53.35,266.75 53.39,266.43 53.52,266.12 53.72,265.87 53.98,265.67 54.28,265.54 54.60,265.50 54.92,265.54 55.23,265.67 55.48,265.87 55.68,266.12 55.81,266.43 55.85,266.75 55.87,267.60 55.86,268.51 55.82,269.46 55.74,270.46 55.63,271.51 55.49,272.61 55.32,273.76 55.11,274.96 54.87,276.20" fill="#3e6a8d"/><polygon points="54.60,277.50 55.75,276.84 56.86,276.23 57.94,275.66 58.97,275.14 59.98,274.67 60.94,274.24 61.87,273.86 62.76,273.52 63.62,273.23 64.44,272.99 64.76,272.93 65.08,272.96 65.39,273.06 65.66,273.25 65.87,273.50 66.01,273.79 66.07,274.11 66.05,274.44 65.94,274.75 65.75,275.01 65.50,275.23 65.21,275.37 64.40,275.65 63.54,275.92 62.62,276.17 61.65,276.41 60.61,276.63 59.52,276.84 58.38,277.03 57.18,277.20 55.92,277.36" fill="#3e6a8d"/><polygon points="54.60,277.50 55.58,278.39 56.51,279.26 57.38,280.10 58.19,280.93 58.95,281.74 59.66,282.52 60.31,283.29 60.90,284.03 61.44,284.76 61.93,285.46 62.09,285.75 62.16,286.07 62.15,286.39 62.06,286.71 61.89,286.98 61.65,287.21 61.37,287.36 61.05,287.44 60.72,287.43 60.41,287.34 60.13,287.17 59.91,286.93 59.39,286.25 58.87,285.52 58.34,284.72 57.81,283.86 57.29,282.95 56.75,281.98 56.22,280.95 55.68,279.86 55.14,278.71" fill="#3e6a8d"/><polygon points="54.60,277.50 54.06,278.71 53.52,279.86 52.98,280.95 52.45,281.98 51.91,282.95 51.39,283.86 50.86,284.72 50.33,285.52 49.81,286.25 49.29,286.93 49.07,287.17 48.79,287.34 48.48,287.43 48.15,287.44 47.83,287.36 47.55,287.21 47.31,286.98 47.14,286.71 47.05,286.39 47.04,286.07 47.11,285.75 47.27,285.46 47.76,284.76 48.30,284.03 48.89,283.29 49.54,282.52 50.25,281.74 51.01,280.93 51.82,280.10 52.69,279.26 53.62,278.39" fill="#3e6a8d"/><polygon points="54.60,277.50 53.28,277.36 52.02,277.20 50.82,277.03 49.68,276.84 48.59,276.63 47.55,276.41 46.58,276.17 45.66,275.92 44.80,275.65 43.99,275.37 43.70,275.23 43.45,275.01 43.26,274.75 43.15,274.44 43.13,274.11 43.19,273.79 43.33,273.50 43.54,273.25 43.81,273.06 44.12,272.96 44.44,272.93 44.76,272.99 45.58,273.23 46.44,273.52 47.33,273.86 48.26,274.24 49.22,274.67 50.23,275.14 51.26,275.66 52.34,276.23 53.45,276.84" fill="#3e6a8d"/>
<polygon points="123.00,332.50 122.73,331.53 122.49,330.61 122.28,329.72 122.11,328.88 121.97,328.09 121.86,327.33 121.78,326.62 121.74,325.96 121.73,325.33 121.75,324.75 121.79,324.43 121.92,324.12 122.12,323.87 122.38,323.67 122.68,323.54 123.00,323.50 123.32,323.54 123.62,323.67 123.88,323.87 124.08,324.12 124.21,324.43 124.25,324.75 124.27,325.33 124.26,325.96 124.22,326.62 124.14,327.33 124.03,328.09 123.89,328.88 123.72,329.72 123.51,330.61 123.27,331.53" fill="#c93400"/><polygon points="123.00,332.50 123.84,331.94 124.64,331.43 125.42,330.96 126.16,330.54 126.88,330.16 127.56,329.82 128.21,329.53 128.83,329.28 129.42,329.08 129.98,328.92 130.31,328.86 130.63,328.88 130.94,328.99 131.21,329.18 131.42,329.42 131.56,329.72 131.62,330.04 131.59,330.37 131.48,330.67 131.30,330.94 131.05,331.15 130.76,331.29 130.21,331.49 129.61,331.68 128.96,331.84 128.27,331.99 127.52,332.12 126.71,332.23 125.86,332.32 124.96,332.40 124.00,332.46" fill="#c93400"/><polygon points="123.00,332.50 123.79,333.12 124.53,333.73 125.21,334.33 125.85,334.90 126.43,335.46 126.96,336.01 127.44,336.54 127.87,337.05 128.24,337.55 128.57,338.04 128.72,338.32 128.80,338.64 128.79,338.97 128.70,339.28 128.53,339.56 128.29,339.78 128.00,339.94 127.69,340.01 127.36,340.00 127.05,339.91 126.77,339.74 126.54,339.50 126.19,339.05 125.83,338.53 125.47,337.97 125.11,337.35 124.76,336.68 124.41,335.95 124.05,335.17 123.70,334.33 123.35,333.44" fill="#c93400"/><polygon points="123.00,332.50 122.65,333.44 122.30,334.33 121.95,335.17 121.59,335.95 121.24,336.68 120.89,337.35 120.53,337.97 120.17,338.53 119.81,339.05 119.46,339.50 119.23,339.74 118.95,339.91 118.64,340.00 118.31,340.01 118.00,339.94 117.71,339.78 117.47,339.56 117.30,339.28 117.21,338.97 117.20,338.64 117.28,338.32 117.43,338.04 117.76,337.55 118.13,337.05 118.56,336.54 119.04,336.01 119.57,335.46 120.15,334.90 120.79,334.33 121.47,333.73 122.21,333.12" fill="#c93400"/><polygon points="123.00,332.50 122.00,332.46 121.04,332.40 120.14,332.32 119.29,332.23 118.48,332.12 117.73,331.99 117.04,331.84 116.39,331.68 115.79,331.49 115.24,331.29 114.95,331.15 114.70,330.94 114.52,330.67 114.41,330.37 114.38,330.04 114.44,329.72 114.58,329.42 114.79,329.18 115.06,328.99 115.37,328.88 115.69,328.86 116.02,328.92 116.58,329.08 117.17,329.28 117.79,329.53 118.44,329.82 119.12,330.16 119.84,330.54 120.58,330.96 121.36,331.43 122.16,331.94" fill="#c93400"/>
<polygon points="140.60,409.70 140.33,408.51 140.09,407.37 139.88,406.28 139.71,405.24 139.57,404.24 139.46,403.29 139.38,402.38 139.34,401.52 139.33,400.71 139.35,399.95 139.39,399.63 139.52,399.32 139.72,399.07 139.97,398.87 140.28,398.74 140.60,398.70 140.92,398.74 141.22,398.87 141.48,399.07 141.68,399.32 141.81,399.63 141.85,399.95 141.87,400.71 141.86,401.52 141.82,402.38 141.74,403.29 141.63,404.24 141.49,405.24 141.32,406.28 141.11,407.37 140.87,408.51" fill="#3e6a8d"/><polygon points="140.60,409.70 141.64,409.08 142.65,408.50 143.63,407.96 144.57,407.47 145.48,407.03 146.35,406.63 147.18,406.28 147.99,405.98 148.75,405.71 149.49,405.50 149.81,405.44 150.13,405.46 150.44,405.57 150.71,405.76 150.92,406.01 151.06,406.30 151.12,406.62 151.10,406.95 150.99,407.25 150.80,407.52 150.55,407.74 150.26,407.88 149.54,408.13 148.77,408.37 147.94,408.60 147.05,408.80 146.11,408.99 145.12,409.17 144.07,409.32 142.97,409.47 141.81,409.59" fill="#3e6a8d"/><polygon points="140.60,409.70 141.52,410.50 142.38,411.28 143.19,412.04 143.94,412.79 144.65,413.51 145.29,414.22 145.89,414.91 146.43,415.57 146.91,416.22 147.34,416.85 147.50,417.14 147.57,417.46 147.57,417.78 147.47,418.10 147.30,418.37 147.07,418.60 146.78,418.75 146.46,418.83 146.14,418.82 145.82,418.73 145.54,418.56 145.32,418.32 144.85,417.72 144.39,417.06 143.92,416.34 143.45,415.56 142.98,414.73 142.50,413.83 142.03,412.89 141.55,411.88 141.08,410.82" fill="#3e6a8d"/><polygon points="140.60,409.70 140.12,410.82 139.65,411.88 139.17,412.89 138.70,413.83 138.22,414.73 137.75,415.56 137.28,416.34 136.81,417.06 136.35,417.72 135.88,418.32 135.66,418.56 135.38,418.73 135.06,418.82 134.74,418.83 134.42,418.75 134.13,418.60 133.90,418.37 133.73,418.10 133.63,417.78 133.63,417.46 133.70,417.14 133.86,416.85 134.29,416.22 134.77,415.57 135.31,414.91 135.91,414.22 136.55,413.51 137.26,412.79 138.01,412.04 138.82,411.28 139.68,410.50" fill="#3e6a8d"/><polygon points="140.60,409.70 139.39,409.59 138.23,409.47 137.13,409.32 136.08,409.17 135.09,408.99 134.15,408.80 133.26,408.60 132.43,408.37 131.66,408.13 130.94,407.88 130.65,407.74 130.40,407.52 130.21,407.25 130.10,406.95 130.08,406.62 130.14,406.30 130.28,406.01 130.49,405.76 130.76,405.57 131.07,405.46 131.39,405.44 131.71,405.50 132.45,405.71 133.21,405.98 134.02,406.28 134.85,406.63 135.72,407.03 136.63,407.47 137.57,407.96 138.55,408.50 139.56,409.08" fill="#3e6a8d"/>
<polygon points="153.50,447.60 153.23,446.41 152.99,445.27 152.78,444.18 152.61,443.14 152.47,442.14 152.36,441.19 152.28,440.28 152.24,439.42 152.23,438.61 152.25,437.85 152.29,437.53 152.42,437.23 152.62,436.97 152.88,436.77 153.18,436.64 153.50,436.60 153.82,436.64 154.12,436.77 154.38,436.97 154.58,437.23 154.71,437.53 154.75,437.85 154.77,438.61 154.76,439.42 154.72,440.28 154.64,441.19 154.53,442.14 154.39,443.14 154.22,444.18 154.01,445.27 153.77,446.41" fill="#3e6a8d"/><polygon points="153.50,447.60 154.54,446.98 155.55,446.40 156.53,445.86 157.47,445.37 158.38,444.93 159.25,444.53 160.08,444.18 160.89,443.88 161.65,443.61 162.39,443.40 162.71,443.34 163.03,443.36 163.34,443.47 163.61,443.66 163.82,443.91 163.96,444.20 164.02,444.52 164.00,444.85 163.89,445.15 163.70,445.42 163.45,445.64 163.16,445.78 162.44,446.03 161.67,446.27 160.84,446.50 159.95,446.70 159.01,446.89 158.02,447.07 156.97,447.22 155.87,447.37 154.71,447.49" fill="#3e6a8d"/><polygon points="153.50,447.60 154.42,448.40 155.28,449.18 156.09,449.94 156.84,450.69 157.55,451.41 158.19,452.12 158.79,452.81 159.33,453.47 159.81,454.12 160.24,454.75 160.40,455.04 160.47,455.36 160.47,455.68 160.37,456.00 160.20,456.27 159.97,456.50 159.68,456.65 159.36,456.73 159.04,456.72 158.72,456.63 158.44,456.46 158.22,456.22 157.75,455.62 157.29,454.96 156.82,454.24 156.35,453.46 155.88,452.63 155.40,451.73 154.93,450.79 154.45,449.78 153.98,448.72" fill="#3e6a8d"/><polygon points="153.50,447.60 153.02,448.72 152.55,449.78 152.07,450.79 151.60,451.73 151.12,452.63 150.65,453.46 150.18,454.24 149.71,454.96 149.25,455.62 148.78,456.22 148.56,456.46 148.28,456.63 147.96,456.72 147.64,456.73 147.32,456.65 147.03,456.50 146.80,456.27 146.63,456.00 146.53,455.68 146.53,455.36 146.60,455.04 146.76,454.75 147.19,454.12 147.67,453.47 148.21,452.81 148.81,452.12 149.45,451.41 150.16,450.69 150.91,449.94 151.72,449.18 152.58,448.40" fill="#3e6a8d"/><polygon points="153.50,447.60 152.29,447.49 151.13,447.37 150.03,447.22 148.98,447.07 147.99,446.89 147.05,446.70 146.16,446.50 145.33,446.27 144.56,446.03 143.84,445.78 143.55,445.64 143.30,445.42 143.11,445.15 143.00,444.85 142.98,444.52 143.04,444.20 143.18,443.91 143.39,443.66 143.66,443.47 143.97,443.36 144.29,443.34 144.61,443.40 145.35,443.61 146.11,443.88 146.92,444.18 147.75,444.53 148.62,444.93 149.53,445.37 150.47,445.86 151.45,446.40 152.46,446.98" fill="#3e6a8d"/>
<polygon points="167.00,438.00 166.73,437.14 166.49,436.32 166.28,435.54 166.11,434.81 165.97,434.11 165.86,433.46 165.78,432.84 165.74,432.27 165.73,431.74 165.75,431.25 165.79,430.93 165.92,430.62 166.12,430.37 166.38,430.17 166.68,430.04 167.00,430.00 167.32,430.04 167.62,430.17 167.88,430.37 168.08,430.62 168.21,430.93 168.25,431.25 168.27,431.74 168.26,432.27 168.22,432.84 168.14,433.46 168.03,434.11 167.89,434.81 167.72,435.54 167.51,436.32 167.27,437.14" fill="#3e6a8d"/><polygon points="167.00,438.00 167.73,437.48 168.44,437.00 169.11,436.56 169.76,436.17 170.38,435.82 170.97,435.51 171.53,435.25 172.06,435.03 172.56,434.86 173.03,434.73 173.35,434.67 173.68,434.69 173.99,434.80 174.26,434.99 174.47,435.23 174.61,435.53 174.67,435.85 174.64,436.17 174.53,436.48 174.35,436.75 174.10,436.96 173.81,437.10 173.35,437.27 172.84,437.43 172.28,437.56 171.67,437.68 171.02,437.78 170.31,437.86 169.56,437.92 168.75,437.97 167.90,437.99" fill="#3e6a8d"/><polygon points="167.00,438.00 167.72,438.54 168.40,439.06 169.02,439.57 169.60,440.06 170.12,440.54 170.59,441.00 171.01,441.46 171.39,441.89 171.71,442.32 171.98,442.73 172.13,443.01 172.21,443.33 172.20,443.66 172.11,443.97 171.94,444.25 171.70,444.47 171.42,444.63 171.10,444.70 170.77,444.70 170.46,444.60 170.18,444.43 169.96,444.20 169.65,443.81 169.35,443.37 169.05,442.89 168.75,442.34 168.45,441.75 168.16,441.11 167.86,440.41 167.57,439.66 167.29,438.85" fill="#3e6a8d"/><polygon points="167.00,438.00 166.71,438.85 166.43,439.66 166.14,440.41 165.84,441.11 165.55,441.75 165.25,442.34 164.95,442.89 164.65,443.37 164.35,443.81 164.04,444.20 163.82,444.43 163.54,444.60 163.23,444.70 162.90,444.70 162.58,444.63 162.30,444.47 162.06,444.25 161.89,443.97 161.80,443.66 161.79,443.33 161.87,443.01 162.02,442.73 162.29,442.32 162.61,441.89 162.99,441.46 163.41,441.00 163.88,440.54 164.40,440.06 164.98,439.57 165.60,439.06 166.28,438.54" fill="#3e6a8d"/><polygon points="167.00,438.00 166.10,437.99 165.25,437.97 164.44,437.92 163.69,437.86 162.98,437.78 162.33,437.68 161.72,437.56 161.16,437.43 160.65,437.27 160.19,437.10 159.90,436.96 159.65,436.75 159.47,436.48 159.36,436.17 159.33,435.85 159.39,435.53 159.53,435.23 159.74,434.99 160.01,434.80 160.32,434.69 160.65,434.67 160.97,434.73 161.44,434.86 161.94,435.03 162.47,435.25 163.03,435.51 163.62,435.82 164.24,436.17 164.89,436.56 165.56,437.00 166.27,437.48" fill="#3e6a8d"/>
<polygon points="176.60,473.90 176.33,472.60 176.09,471.36 175.88,470.16 175.71,469.01 175.57,467.91 175.46,466.86 175.38,465.86 175.34,464.91 175.33,464.00 175.35,463.15 175.39,462.83 175.52,462.52 175.72,462.27 175.97,462.07 176.28,461.94 176.60,461.90 176.92,461.94 177.22,462.07 177.48,462.27 177.68,462.52 177.81,462.83 177.85,463.15 177.87,464.00 177.86,464.91 177.82,465.86 177.74,466.86 177.63,467.91 177.49,469.01 177.32,470.16 177.11,471.36 176.87,472.60" fill="#c93400"/><polygon points="176.60,473.90 177.75,473.24 178.86,472.63 179.94,472.06 180.97,471.54 181.98,471.07 182.94,470.64 183.87,470.26 184.76,469.92 185.62,469.63 186.44,469.39 186.76,469.33 187.08,469.36 187.39,469.46 187.66,469.65 187.87,469.90 188.01,470.19 188.07,470.51 188.05,470.84 187.94,471.15 187.75,471.41 187.50,471.63 187.21,471.77 186.40,472.05 185.54,472.32 184.62,472.57 183.65,472.81 182.61,473.03 181.52,473.24 180.38,473.43 179.18,473.60 177.92,473.76" fill="#c93400"/><polygon points="176.60,473.90 177.58,474.79 178.51,475.66 179.38,476.50 180.19,477.33 180.95,478.14 181.66,478.92 182.31,479.69 182.90,480.43 183.44,481.16 183.93,481.86 184.09,482.15 184.16,482.47 184.15,482.79 184.06,483.11 183.89,483.38 183.65,483.61 183.37,483.76 183.05,483.84 182.72,483.83 182.41,483.74 182.13,483.57 181.91,483.33 181.39,482.65 180.87,481.92 180.34,481.12 179.81,480.26 179.29,479.35 178.75,478.38 178.22,477.35 177.68,476.26 177.14,475.11" fill="#c93400"/><polygon points="176.60,473.90 176.06,475.11 175.52,476.26 174.98,477.35 174.45,478.38 173.91,479.35 173.39,480.26 172.86,481.12 172.33,481.92 171.81,482.65 171.29,483.33 171.07,483.57 170.79,483.74 170.48,483.83 170.15,483.84 169.83,483.76 169.55,483.61 169.31,483.38 169.14,483.11 169.05,482.79 169.04,482.47 169.11,482.15 169.27,481.86 169.76,481.16 170.30,480.43 170.89,479.69 171.54,478.92 172.25,478.14 173.01,477.33 173.82,476.50 174.69,475.66 175.62,474.79" fill="#c93400"/><polygon points="176.60,473.90 175.28,473.76 174.02,473.60 172.82,473.43 171.68,473.24 170.59,473.03 169.55,472.81 168.58,472.57 167.66,472.32 166.80,472.05 165.99,471.77 165.70,471.63 165.45,471.41 165.26,471.15 165.15,470.84 165.13,470.51 165.19,470.19 165.33,469.90 165.54,469.65 165.81,469.46 166.12,469.36 166.44,469.33 166.76,469.39 167.58,469.63 168.44,469.92 169.33,470.26 170.26,470.64 171.22,471.07 172.23,471.54 173.26,472.06 174.34,472.63 175.45,473.24" fill="#c93400"/>
<polygon points="141.40,493.00 141.13,491.81 140.89,490.67 140.68,489.58 140.51,488.54 140.37,487.54 140.26,486.59 140.18,485.68 140.14,484.82 140.13,484.01 140.15,483.25 140.19,482.93 140.32,482.62 140.52,482.37 140.78,482.17 141.08,482.04 141.40,482.00 141.72,482.04 142.03,482.17 142.28,482.37 142.48,482.62 142.61,482.93 142.65,483.25 142.67,484.01 142.66,484.82 142.62,485.68 142.54,486.59 142.43,487.54 142.29,488.54 142.12,489.58 141.91,490.67 141.67,491.81" fill="#b3c9cd"/><polygon points="141.40,493.00 142.44,492.38 143.45,491.80 144.43,491.26 145.37,490.77 146.28,490.33 147.15,489.93 147.98,489.58 148.79,489.28 149.55,489.01 150.29,488.80 150.61,488.74 150.93,488.76 151.24,488.87 151.51,489.06 151.72,489.31 151.86,489.60 151.92,489.92 151.90,490.25 151.79,490.55 151.60,490.82 151.35,491.04 151.06,491.18 150.34,491.43 149.57,491.67 148.74,491.90 147.85,492.10 146.91,492.29 145.92,492.47 144.87,492.62 143.77,492.77 142.61,492.89" fill="#b3c9cd"/><polygon points="141.40,493.00 142.32,493.80 143.18,494.58 143.99,495.34 144.74,496.09 145.45,496.81 146.09,497.52 146.69,498.21 147.23,498.87 147.71,499.52 148.14,500.15 148.30,500.44 148.37,500.76 148.37,501.08 148.27,501.40 148.10,501.67 147.87,501.90 147.58,502.05 147.26,502.13 146.94,502.12 146.62,502.03 146.34,501.86 146.12,501.62 145.65,501.02 145.19,500.36 144.72,499.64 144.25,498.86 143.78,498.03 143.30,497.13 142.83,496.19 142.35,495.18 141.88,494.12" fill="#b3c9cd"/><polygon points="141.40,493.00 140.92,494.12 140.45,495.18 139.97,496.19 139.50,497.13 139.02,498.03 138.55,498.86 138.08,499.64 137.61,500.36 137.15,501.02 136.68,501.62 136.46,501.86 136.18,502.03 135.86,502.12 135.54,502.13 135.22,502.05 134.93,501.90 134.70,501.67 134.53,501.40 134.43,501.08 134.43,500.76 134.50,500.44 134.66,500.15 135.09,499.52 135.57,498.87 136.11,498.21 136.71,497.52 137.35,496.81 138.06,496.09 138.81,495.34 139.62,494.58 140.48,493.80" fill="#b3c9cd"/><polygon points="141.40,493.00 140.19,492.89 139.03,492.77 137.93,492.62 136.88,492.47 135.89,492.29 134.95,492.10 134.06,491.90 133.23,491.67 132.46,491.43 131.74,491.18 131.45,491.04 131.20,490.82 131.01,490.55 130.90,490.25 130.88,489.92 130.94,489.60 131.08,489.31 131.29,489.06 131.56,488.87 131.87,488.76 132.19,488.74 132.51,488.80 133.25,489.01 134.01,489.28 134.82,489.58 135.65,489.93 136.52,490.33 137.43,490.77 138.37,491.26 139.35,491.80 140.36,492.38" fill="#b3c9cd"/>
<polygon points="168.00,511.70 167.73,510.51 167.49,509.37 167.28,508.28 167.11,507.24 166.97,506.24 166.86,505.29 166.78,504.38 166.74,503.52 166.73,502.71 166.75,501.95 166.79,501.63 166.92,501.32 167.12,501.07 167.38,500.87 167.68,500.74 168.00,500.70 168.32,500.74 168.62,500.87 168.88,501.07 169.08,501.32 169.21,501.63 169.25,501.95 169.27,502.71 169.26,503.52 169.22,504.38 169.14,505.29 169.03,506.24 168.89,507.24 168.72,508.28 168.51,509.37 168.27,510.51" fill="#3e6a8d"/><polygon points="168.00,511.70 169.04,511.08 170.05,510.50 171.03,509.96 171.97,509.47 172.88,509.03 173.75,508.63 174.58,508.28 175.39,507.98 176.15,507.71 176.89,507.50 177.21,507.44 177.53,507.46 177.84,507.57 178.11,507.76 178.32,508.01 178.46,508.30 178.52,508.62 178.50,508.95 178.39,509.25 178.20,509.52 177.95,509.74 177.66,509.88 176.94,510.13 176.17,510.37 175.34,510.60 174.45,510.80 173.51,510.99 172.52,511.17 171.47,511.32 170.37,511.47 169.21,511.59" fill="#3e6a8d"/><polygon points="168.00,511.70 168.92,512.50 169.78,513.28 170.59,514.04 171.34,514.79 172.05,515.51 172.69,516.22 173.29,516.91 173.83,517.57 174.31,518.22 174.74,518.85 174.90,519.14 174.97,519.46 174.97,519.78 174.87,520.10 174.70,520.37 174.47,520.60 174.18,520.75 173.86,520.83 173.54,520.82 173.22,520.73 172.94,520.56 172.72,520.32 172.25,519.72 171.79,519.06 171.32,518.34 170.85,517.56 170.38,516.73 169.90,515.83 169.43,514.89 168.95,513.88 168.48,512.82" fill="#3e6a8d"/><polygon points="168.00,511.70 167.52,512.82 167.05,513.88 166.57,514.89 166.10,515.83 165.62,516.73 165.15,517.56 164.68,518.34 164.21,519.06 163.75,519.72 163.28,520.32 163.06,520.56 162.78,520.73 162.46,520.82 162.14,520.83 161.82,520.75 161.53,520.60 161.30,520.37 161.13,520.10 161.03,519.78 161.03,519.46 161.10,519.14 161.26,518.85 161.69,518.22 162.17,517.57 162.71,516.91 163.31,516.22 163.95,515.51 164.66,514.79 165.41,514.04 166.22,513.28 167.08,512.50" fill="#3e6a8d"/><polygon points="168.00,511.70 166.79,511.59 165.63,511.47 164.53,511.32 163.48,511.17 162.49,510.99 161.55,510.80 160.66,510.60 159.83,510.37 159.06,510.13 158.34,509.88 158.05,509.74 157.80,509.52 157.61,509.25 157.50,508.95 157.48,508.62 157.54,508.30 157.68,508.01 157.89,507.76 158.16,507.57 158.47,507.46 158.79,507.44 159.11,507.50 159.85,507.71 160.61,507.98 161.42,508.28 162.25,508.63 163.12,509.03 164.03,509.47 164.97,509.96 165.95,510.50 166.96,511.08" fill="#3e6a8d"/>
<polygon points="224.80,502.40 224.53,501.21 224.29,500.07 224.08,498.98 223.91,497.94 223.77,496.94 223.66,495.99 223.58,495.08 223.54,494.22 223.53,493.41 223.55,492.65 223.59,492.33 223.72,492.02 223.92,491.77 224.18,491.57 224.48,491.44 224.80,491.40 225.12,491.44 225.43,491.57 225.68,491.77 225.88,492.02 226.01,492.33 226.05,492.65 226.07,493.41 226.06,494.22 226.02,495.08 225.94,495.99 225.83,496.94 225.69,497.94 225.52,498.98 225.31,500.07 225.07,501.21" fill="#3e6a8d"/><polygon points="224.80,502.40 225.84,501.78 226.85,501.20 227.83,500.66 228.77,500.17 229.68,499.73 230.55,499.33 231.38,498.98 232.19,498.68 232.95,498.41 233.69,498.20 234.01,498.14 234.33,498.16 234.64,498.27 234.91,498.46 235.12,498.71 235.26,499.00 235.32,499.32 235.30,499.65 235.19,499.95 235.00,500.22 234.75,500.44 234.46,500.58 233.74,500.83 232.97,501.07 232.14,501.30 231.25,501.50 230.31,501.69 229.32,501.87 228.27,502.02 227.17,502.17 226.01,502.29" fill="#3e6a8d"/><polygon points="224.80,502.40 225.72,503.20 226.58,503.98 227.39,504.74 228.14,505.49 228.85,506.21 229.49,506.92 230.09,507.61 230.63,508.27 231.11,508.92 231.54,509.55 231.70,509.84 231.77,510.16 231.77,510.48 231.67,510.80 231.50,511.07 231.27,511.30 230.98,511.45 230.66,511.53 230.34,511.52 230.02,511.43 229.74,511.26 229.52,511.02 229.05,510.42 228.59,509.76 228.12,509.04 227.65,508.26 227.18,507.43 226.70,506.53 226.23,505.59 225.75,504.58 225.28,503.52" fill="#3e6a8d"/><polygon points="224.80,502.40 224.32,503.52 223.85,504.58 223.37,505.59 222.90,506.53 222.42,507.43 221.95,508.26 221.48,509.04 221.01,509.76 220.55,510.42 220.08,511.02 219.86,511.26 219.58,511.43 219.26,511.52 218.94,511.53 218.62,511.45 218.33,511.30 218.10,511.07 217.93,510.80 217.83,510.48 217.83,510.16 217.90,509.84 218.06,509.55 218.49,508.92 218.97,508.27 219.51,507.61 220.11,506.92 220.75,506.21 221.46,505.49 222.21,504.74 223.02,503.98 223.88,503.20" fill="#3e6a8d"/><polygon points="224.80,502.40 223.59,502.29 222.43,502.17 221.33,502.02 220.28,501.87 219.29,501.69 218.35,501.50 217.46,501.30 216.63,501.07 215.86,500.83 215.14,500.58 214.85,500.44 214.60,500.22 214.41,499.95 214.30,499.65 214.28,499.32 214.34,499.00 214.48,498.71 214.69,498.46 214.96,498.27 215.27,498.16 215.59,498.14 215.91,498.20 216.65,498.41 217.41,498.68 218.22,498.98 219.05,499.33 219.92,499.73 220.83,500.17 221.77,500.66 222.75,501.20 223.76,501.78" fill="#3e6a8d"/>
<polygon points="131.70,534.50 131.43,533.20 131.19,531.96 130.98,530.76 130.81,529.61 130.67,528.51 130.56,527.46 130.48,526.46 130.44,525.51 130.43,524.60 130.45,523.75 130.49,523.43 130.62,523.12 130.82,522.87 131.07,522.67 131.38,522.54 131.70,522.50 132.02,522.54 132.32,522.67 132.58,522.87 132.78,523.12 132.91,523.43 132.95,523.75 132.97,524.60 132.96,525.51 132.92,526.46 132.84,527.46 132.73,528.51 132.59,529.61 132.42,530.76 132.21,531.96 131.97,533.20" fill="#3e6a8d"/><polygon points="131.70,534.50 132.85,533.84 133.96,533.23 135.04,532.66 136.07,532.14 137.08,531.67 138.04,531.24 138.97,530.86 139.86,530.52 140.72,530.23 141.54,529.99 141.86,529.93 142.18,529.96 142.49,530.06 142.76,530.25 142.97,530.50 143.11,530.79 143.17,531.11 143.15,531.44 143.04,531.75 142.85,532.01 142.60,532.23 142.31,532.37 141.50,532.65 140.64,532.92 139.72,533.17 138.75,533.41 137.71,533.63 136.62,533.84 135.48,534.03 134.28,534.20 133.02,534.36" fill="#3e6a8d"/><polygon points="131.70,534.50 132.68,535.39 133.61,536.26 134.48,537.10 135.29,537.93 136.05,538.74 136.76,539.52 137.41,540.29 138.00,541.03 138.54,541.76 139.03,542.46 139.19,542.75 139.26,543.07 139.25,543.39 139.16,543.71 138.99,543.98 138.75,544.21 138.47,544.36 138.15,544.44 137.82,544.43 137.51,544.34 137.23,544.17 137.01,543.93 136.49,543.25 135.97,542.52 135.44,541.72 134.91,540.86 134.39,539.95 133.85,538.98 133.32,537.95 132.78,536.86 132.24,535.71" fill="#3e6a8d"/><polygon points="131.70,534.50 131.16,535.71 130.62,536.86 130.08,537.95 129.55,538.98 129.01,539.95 128.49,540.86 127.96,541.72 127.43,542.52 126.91,543.25 126.39,543.93 126.17,544.17 125.89,544.34 125.58,544.43 125.25,544.44 124.93,544.36 124.65,544.21 124.41,543.98 124.24,543.71 124.15,543.39 124.14,543.07 124.21,542.75 124.37,542.46 124.86,541.76 125.40,541.03 125.99,540.29 126.64,539.52 127.35,538.74 128.11,537.93 128.92,537.10 129.79,536.26 130.72,535.39" fill="#3e6a8d"/><polygon points="131.70,534.50 130.38,534.36 129.12,534.20 127.92,534.03 126.78,533.84 125.69,533.63 124.65,533.41 123.68,533.17 122.76,532.92 121.90,532.65 121.09,532.37 120.80,532.23 120.55,532.01 120.36,531.75 120.25,531.44 120.23,531.11 120.29,530.79 120.43,530.50 120.64,530.25 120.91,530.06 121.22,529.96 121.54,529.93 121.86,529.99 122.68,530.23 123.54,530.52 124.43,530.86 125.36,531.24 126.32,531.67 127.33,532.14 128.36,532.66 129.44,533.23 130.55,533.84" fill="#3e6a8d"/>
<polygon points="194.80,529.70 194.53,528.40 194.29,527.16 194.08,525.96 193.91,524.81 193.77,523.71 193.66,522.66 193.58,521.66 193.54,520.71 193.53,519.80 193.55,518.95 193.59,518.63 193.72,518.33 193.92,518.07 194.18,517.87 194.48,517.74 194.80,517.70 195.12,517.74 195.43,517.87 195.68,518.07 195.88,518.33 196.01,518.63 196.05,518.95 196.07,519.80 196.06,520.71 196.02,521.66 195.94,522.66 195.83,523.71 195.69,524.81 195.52,525.96 195.31,527.16 195.07,528.40" fill="#3e6a8d"/><polygon points="194.80,529.70 195.95,529.04 197.06,528.43 198.14,527.86 199.17,527.34 200.18,526.87 201.14,526.44 202.07,526.06 202.96,525.72 203.82,525.43 204.64,525.19 204.96,525.13 205.28,525.16 205.59,525.26 205.86,525.45 206.07,525.70 206.21,525.99 206.27,526.31 206.25,526.64 206.14,526.95 205.95,527.21 205.70,527.43 205.41,527.57 204.60,527.85 203.74,528.12 202.82,528.37 201.85,528.61 200.81,528.83 199.72,529.04 198.58,529.23 197.38,529.40 196.12,529.56" fill="#3e6a8d"/><polygon points="194.80,529.70 195.78,530.59 196.71,531.46 197.58,532.30 198.39,533.13 199.15,533.94 199.86,534.72 200.51,535.49 201.10,536.23 201.64,536.96 202.13,537.66 202.29,537.95 202.36,538.27 202.35,538.59 202.26,538.91 202.09,539.18 201.85,539.41 201.57,539.56 201.25,539.64 200.92,539.63 200.61,539.54 200.33,539.37 200.11,539.13 199.59,538.45 199.07,537.72 198.54,536.92 198.01,536.06 197.49,535.15 196.95,534.18 196.42,533.15 195.88,532.06 195.34,530.91" fill="#3e6a8d"/><polygon points="194.80,529.70 194.26,530.91 193.72,532.06 193.18,533.15 192.65,534.18 192.11,535.15 191.59,536.06 191.06,536.92 190.53,537.72 190.01,538.45 189.49,539.13 189.27,539.37 188.99,539.54 188.68,539.63 188.35,539.64 188.03,539.56 187.75,539.41 187.51,539.18 187.34,538.91 187.25,538.59 187.24,538.27 187.31,537.95 187.47,537.66 187.96,536.96 188.50,536.23 189.09,535.49 189.74,534.72 190.45,533.94 191.21,533.13 192.02,532.30 192.89,531.46 193.82,530.59" fill="#3e6a8d"/><polygon points="194.80,529.70 193.48,529.56 192.22,529.40 191.02,529.23 189.88,529.04 188.79,528.83 187.75,528.61 186.78,528.37 185.86,528.12 185.00,527.85 184.19,527.57 183.90,527.43 183.65,527.21 183.46,526.95 183.35,526.64 183.33,526.31 183.39,525.99 183.53,525.70 183.74,525.45 184.01,525.26 184.32,525.16 184.64,525.13 184.96,525.19 185.78,525.43 186.64,525.72 187.53,526.06 188.46,526.44 189.42,526.87 190.43,527.34 191.46,527.86 192.54,528.43 193.65,529.04" fill="#3e6a8d"/>
<polygon points="208.30,529.30 208.03,528.22 207.79,527.19 207.58,526.20 207.41,525.26 207.27,524.36 207.16,523.51 207.08,522.70 207.04,521.94 207.03,521.22 207.05,520.55 207.09,520.23 207.22,519.92 207.42,519.67 207.68,519.47 207.98,519.34 208.30,519.30 208.62,519.34 208.93,519.47 209.18,519.67 209.38,519.92 209.51,520.23 209.55,520.55 209.57,521.22 209.56,521.94 209.52,522.70 209.44,523.51 209.33,524.36 209.19,525.26 209.02,526.20 208.81,527.19 208.57,528.22" fill="#3e6a8d"/><polygon points="208.30,529.30 209.24,528.71 210.15,528.16 211.02,527.66 211.87,527.21 212.68,526.79 213.45,526.43 214.20,526.10 214.91,525.83 215.59,525.59 216.24,525.41 216.56,525.35 216.88,525.37 217.19,525.48 217.46,525.67 217.67,525.92 217.81,526.21 217.87,526.53 217.84,526.86 217.74,527.16 217.55,527.43 217.30,527.64 217.01,527.78 216.37,528.01 215.69,528.22 214.95,528.42 214.16,528.59 213.31,528.76 212.42,528.90 211.47,529.02 210.46,529.13 209.41,529.23" fill="#3e6a8d"/><polygon points="208.30,529.30 209.15,530.01 209.95,530.71 210.70,531.38 211.39,532.05 212.04,532.69 212.63,533.31 213.16,533.92 213.65,534.51 214.08,535.09 214.45,535.64 214.61,535.93 214.69,536.25 214.68,536.57 214.59,536.89 214.41,537.17 214.18,537.39 213.89,537.55 213.57,537.62 213.25,537.61 212.93,537.52 212.66,537.35 212.43,537.11 212.02,536.58 211.61,535.99 211.19,535.35 210.78,534.65 210.37,533.90 209.95,533.09 209.54,532.23 209.13,531.31 208.71,530.33" fill="#3e6a8d"/><polygon points="208.30,529.30 207.89,530.33 207.47,531.31 207.06,532.23 206.65,533.09 206.23,533.90 205.82,534.65 205.41,535.35 204.99,535.99 204.58,536.58 204.17,537.11 203.94,537.35 203.67,537.52 203.35,537.61 203.03,537.62 202.71,537.55 202.42,537.39 202.19,537.17 202.01,536.89 201.92,536.57 201.91,536.25 201.99,535.93 202.15,535.64 202.52,535.09 202.95,534.51 203.44,533.92 203.97,533.31 204.56,532.69 205.21,532.05 205.90,531.38 206.65,530.71 207.45,530.01" fill="#3e6a8d"/><polygon points="208.30,529.30 207.19,529.23 206.14,529.13 205.13,529.02 204.18,528.90 203.29,528.76 202.44,528.59 201.65,528.42 200.91,528.22 200.23,528.01 199.59,527.78 199.30,527.64 199.05,527.43 198.86,527.16 198.76,526.86 198.73,526.53 198.79,526.21 198.93,525.92 199.14,525.67 199.41,525.48 199.72,525.37 200.04,525.35 200.36,525.41 201.01,525.59 201.69,525.83 202.40,526.10 203.15,526.43 203.92,526.79 204.73,527.21 205.58,527.66 206.45,528.16 207.36,528.71" fill="#3e6a8d"/>
<polygon points="230.00,531.00 229.73,530.03 229.49,529.11 229.28,528.22 229.11,527.38 228.97,526.59 228.86,525.83 228.78,525.12 228.74,524.46 228.73,523.83 228.75,523.25 228.79,522.93 228.92,522.62 229.12,522.37 229.38,522.17 229.68,522.04 230.00,522.00 230.32,522.04 230.62,522.17 230.88,522.37 231.08,522.62 231.21,522.93 231.25,523.25 231.27,523.83 231.26,524.46 231.22,525.12 231.14,525.83 231.03,526.59 230.89,527.38 230.72,528.22 230.51,529.11 230.27,530.03" fill="#c93400"/><polygon points="230.00,531.00 230.84,530.44 231.64,529.93 232.42,529.46 233.16,529.04 233.88,528.66 234.56,528.32 235.21,528.03 235.83,527.78 236.42,527.58 236.98,527.42 237.31,527.36 237.63,527.38 237.94,527.49 238.21,527.68 238.42,527.92 238.56,528.22 238.62,528.54 238.59,528.87 238.48,529.17 238.30,529.44 238.05,529.65 237.76,529.79 237.21,529.99 236.61,530.18 235.96,530.34 235.27,530.49 234.52,530.62 233.71,530.73 232.86,530.82 231.96,530.90 231.00,530.96" fill="#c93400"/><polygon points="230.00,531.00 230.79,531.62 231.53,532.23 232.21,532.83 232.85,533.40 233.43,533.96 233.96,534.51 234.44,535.04 234.87,535.55 235.24,536.05 235.57,536.54 235.72,536.82 235.80,537.14 235.79,537.47 235.70,537.78 235.53,538.06 235.29,538.28 235.00,538.44 234.69,538.51 234.36,538.50 234.05,538.41 233.77,538.24 233.54,538.00 233.19,537.55 232.83,537.03 232.47,536.47 232.11,535.85 231.76,535.18 231.41,534.45 231.05,533.67 230.70,532.83 230.35,531.94" fill="#c93400"/><polygon points="230.00,531.00 229.65,531.94 229.30,532.83 228.95,533.67 228.59,534.45 228.24,535.18 227.89,535.85 227.53,536.47 227.17,537.03 226.81,537.55 226.46,538.00 226.23,538.24 225.95,538.41 225.64,538.50 225.31,538.51 225.00,538.44 224.71,538.28 224.47,538.06 224.30,537.78 224.21,537.47 224.20,537.14 224.28,536.82 224.43,536.54 224.76,536.05 225.13,535.55 225.56,535.04 226.04,534.51 226.57,533.96 227.15,533.40 227.79,532.83 228.47,532.23 229.21,531.62" fill="#c93400"/><polygon points="230.00,531.00 229.00,530.96 228.04,530.90 227.14,530.82 226.29,530.73 225.48,530.62 224.73,530.49 224.04,530.34 223.39,530.18 222.79,529.99 222.24,529.79 221.95,529.65 221.70,529.44 221.52,529.17 221.41,528.87 221.38,528.54 221.44,528.22 221.58,527.92 221.79,527.68 222.06,527.49 222.37,527.38 222.69,527.36 223.02,527.42 223.58,527.58 224.17,527.78 224.79,528.03 225.44,528.32 226.12,528.66 226.84,529.04 227.58,529.46 228.36,529.93 229.16,530.44" fill="#c93400"/>
<polygon points="253.80,516.90 253.53,515.82 253.29,514.79 253.08,513.80 252.91,512.86 252.77,511.96 252.66,511.11 252.58,510.30 252.54,509.54 252.53,508.82 252.55,508.15 252.59,507.83 252.72,507.52 252.92,507.27 253.18,507.07 253.48,506.94 253.80,506.90 254.12,506.94 254.43,507.07 254.68,507.27 254.88,507.52 255.01,507.83 255.05,508.15 255.07,508.82 255.06,509.54 255.02,510.30 254.94,511.11 254.83,511.96 254.69,512.86 254.52,513.80 254.31,514.79 254.07,515.82" fill="#3e6a8d"/><polygon points="253.80,516.90 254.74,516.31 255.65,515.76 256.52,515.26 257.37,514.81 258.18,514.39 258.95,514.03 259.70,513.70 260.41,513.43 261.09,513.19 261.74,513.01 262.06,512.95 262.38,512.97 262.69,513.08 262.96,513.27 263.17,513.52 263.31,513.81 263.37,514.13 263.34,514.46 263.24,514.76 263.05,515.03 262.80,515.24 262.51,515.38 261.87,515.61 261.19,515.82 260.45,516.02 259.66,516.19 258.81,516.36 257.92,516.50 256.97,516.62 255.96,516.73 254.91,516.83" fill="#3e6a8d"/><polygon points="253.80,516.90 254.65,517.61 255.45,518.31 256.20,518.98 256.89,519.65 257.54,520.29 258.13,520.91 258.66,521.52 259.15,522.11 259.58,522.69 259.95,523.24 260.11,523.53 260.19,523.85 260.18,524.17 260.09,524.49 259.91,524.77 259.68,524.99 259.39,525.15 259.07,525.22 258.75,525.21 258.43,525.12 258.16,524.95 257.93,524.71 257.52,524.18 257.11,523.59 256.69,522.95 256.28,522.25 255.87,521.50 255.45,520.69 255.04,519.83 254.63,518.91 254.21,517.93" fill="#3e6a8d"/><polygon points="253.80,516.90 253.39,517.93 252.97,518.91 252.56,519.83 252.15,520.69 251.73,521.50 251.32,522.25 250.91,522.95 250.49,523.59 250.08,524.18 249.67,524.71 249.44,524.95 249.17,525.12 248.85,525.21 248.53,525.22 248.21,525.15 247.92,524.99 247.69,524.77 247.51,524.49 247.42,524.17 247.41,523.85 247.49,523.53 247.65,523.24 248.02,522.69 248.45,522.11 248.94,521.52 249.47,520.91 250.06,520.29 250.71,519.65 251.40,518.98 252.15,518.31 252.95,517.61" fill="#3e6a8d"/><polygon points="253.80,516.90 252.69,516.83 251.64,516.73 250.63,516.62 249.68,516.50 248.79,516.36 247.94,516.19 247.15,516.02 246.41,515.82 245.73,515.61 245.09,515.38 244.80,515.24 244.55,515.03 244.36,514.76 244.26,514.46 244.23,514.13 244.29,513.81 244.43,513.52 244.64,513.27 244.91,513.08 245.22,512.97 245.54,512.95 245.86,513.01 246.51,513.19 247.19,513.43 247.90,513.70 248.65,514.03 249.42,514.39 250.23,514.81 251.08,515.26 251.95,515.76 252.86,516.31" fill="#3e6a8d"/>
<polygon points="275.50,533.50 275.23,532.20 274.99,530.96 274.78,529.76 274.61,528.61 274.47,527.51 274.36,526.46 274.28,525.46 274.24,524.51 274.23,523.60 274.25,522.75 274.29,522.43 274.42,522.12 274.62,521.87 274.88,521.67 275.18,521.54 275.50,521.50 275.82,521.54 276.12,521.67 276.38,521.87 276.58,522.12 276.71,522.43 276.75,522.75 276.77,523.60 276.76,524.51 276.72,525.46 276.64,526.46 276.53,527.51 276.39,528.61 276.22,529.76 276.01,530.96 275.77,532.20" fill="#3e6a8d"/><polygon points="275.50,533.50 276.65,532.84 277.76,532.23 278.84,531.66 279.87,531.14 280.88,530.67 281.84,530.24 282.77,529.86 283.66,529.52 284.52,529.23 285.34,528.99 285.66,528.93 285.98,528.96 286.29,529.06 286.56,529.25 286.77,529.50 286.91,529.79 286.97,530.11 286.95,530.44 286.84,530.75 286.65,531.01 286.40,531.23 286.11,531.37 285.30,531.65 284.44,531.92 283.52,532.17 282.55,532.41 281.51,532.63 280.42,532.84 279.28,533.03 278.08,533.20 276.82,533.36" fill="#3e6a8d"/><polygon points="275.50,533.50 276.48,534.39 277.41,535.26 278.28,536.10 279.09,536.93 279.85,537.74 280.56,538.52 281.21,539.29 281.80,540.03 282.34,540.76 282.83,541.46 282.99,541.75 283.06,542.07 283.05,542.39 282.96,542.71 282.79,542.98 282.55,543.21 282.27,543.36 281.95,543.44 281.62,543.43 281.31,543.34 281.03,543.17 280.81,542.93 280.29,542.25 279.77,541.52 279.24,540.72 278.71,539.86 278.19,538.95 277.65,537.98 277.12,536.95 276.58,535.86 276.04,534.71" fill="#3e6a8d"/><polygon points="275.50,533.50 274.96,534.71 274.42,535.86 273.88,536.95 273.35,537.98 272.81,538.95 272.29,539.86 271.76,540.72 271.23,541.52 270.71,542.25 270.19,542.93 269.97,543.17 269.69,543.34 269.38,543.43 269.05,543.44 268.73,543.36 268.45,543.21 268.21,542.98 268.04,542.71 267.95,542.39 267.94,542.07 268.01,541.75 268.17,541.46 268.66,540.76 269.20,540.03 269.79,539.29 270.44,538.52 271.15,537.74 271.91,536.93 272.72,536.10 273.59,535.26 274.52,534.39" fill="#3e6a8d"/><polygon points="275.50,533.50 274.18,533.36 272.92,533.20 271.72,533.03 270.58,532.84 269.49,532.63 268.45,532.41 267.48,532.17 266.56,531.92 265.70,531.65 264.89,531.37 264.60,531.23 264.35,531.01 264.16,530.75 264.05,530.44 264.03,530.11 264.09,529.79 264.23,529.50 264.44,529.25 264.71,529.06 265.02,528.96 265.34,528.93 265.66,528.99 266.48,529.23 267.34,529.52 268.23,529.86 269.16,530.24 270.12,530.67 271.13,531.14 272.16,531.66 273.24,532.23 274.35,532.84" fill="#3e6a8d"/>
<polygon points="245.50,555.20 245.23,554.01 244.99,552.87 244.78,551.78 244.61,550.74 244.47,549.74 244.36,548.79 244.28,547.88 244.24,547.02 244.23,546.21 244.25,545.45 244.29,545.13 244.42,544.83 244.62,544.57 244.88,544.37 245.18,544.24 245.50,544.20 245.82,544.24 246.12,544.37 246.38,544.57 246.58,544.83 246.71,545.13 246.75,545.45 246.77,546.21 246.76,547.02 246.72,547.88 246.64,548.79 246.53,549.74 246.39,550.74 246.22,551.78 246.01,552.87 245.77,554.01" fill="#3e6a8d"/><polygon points="245.50,555.20 246.54,554.58 247.55,554.00 248.53,553.46 249.47,552.97 250.38,552.53 251.25,552.13 252.08,551.78 252.89,551.48 253.65,551.21 254.39,551.00 254.71,550.94 255.03,550.96 255.34,551.07 255.61,551.26 255.82,551.51 255.96,551.80 256.02,552.12 256.00,552.45 255.89,552.75 255.70,553.02 255.45,553.24 255.16,553.38 254.44,553.63 253.67,553.87 252.84,554.10 251.95,554.30 251.01,554.49 250.02,554.67 248.97,554.82 247.87,554.97 246.71,555.09" fill="#3e6a8d"/><polygon points="245.50,555.20 246.42,556.00 247.28,556.78 248.09,557.54 248.84,558.29 249.55,559.01 250.19,559.72 250.79,560.41 251.33,561.07 251.81,561.72 252.24,562.35 252.40,562.64 252.47,562.96 252.47,563.28 252.37,563.60 252.20,563.87 251.97,564.10 251.68,564.25 251.36,564.33 251.04,564.32 250.72,564.23 250.44,564.06 250.22,563.82 249.75,563.22 249.29,562.56 248.82,561.84 248.35,561.06 247.88,560.23 247.40,559.33 246.93,558.39 246.45,557.38 245.98,556.32" fill="#3e6a8d"/><polygon points="245.50,555.20 245.02,556.32 244.55,557.38 244.07,558.39 243.60,559.33 243.12,560.23 242.65,561.06 242.18,561.84 241.71,562.56 241.25,563.22 240.78,563.82 240.56,564.06 240.28,564.23 239.96,564.32 239.64,564.33 239.32,564.25 239.03,564.10 238.80,563.87 238.63,563.60 238.53,563.28 238.53,562.96 238.60,562.64 238.76,562.35 239.19,561.72 239.67,561.07 240.21,560.41 240.81,559.72 241.45,559.01 242.16,558.29 242.91,557.54 243.72,556.78 244.58,556.00" fill="#3e6a8d"/><polygon points="245.50,555.20 244.29,555.09 243.13,554.97 242.03,554.82 240.98,554.67 239.99,554.49 239.05,554.30 238.16,554.10 237.33,553.87 236.56,553.63 235.84,553.38 235.55,553.24 235.30,553.02 235.11,552.75 235.00,552.45 234.98,552.12 235.04,551.80 235.18,551.51 235.39,551.26 235.66,551.07 235.97,550.96 236.29,550.94 236.61,551.00 237.35,551.21 238.11,551.48 238.92,551.78 239.75,552.13 240.62,552.53 241.53,552.97 242.47,553.46 243.45,554.00 244.46,554.58" fill="#3e6a8d"/>
<polygon points="374.50,464.80 374.23,463.40 373.99,462.04 373.78,460.74 373.61,459.49 373.47,458.29 373.36,457.14 373.28,456.04 373.24,454.99 373.23,454.00 373.25,453.05 373.29,452.73 373.42,452.43 373.62,452.17 373.88,451.97 374.18,451.84 374.50,451.80 374.82,451.84 375.12,451.97 375.38,452.17 375.58,452.43 375.71,452.73 375.75,453.05 375.77,454.00 375.76,454.99 375.72,456.04 375.64,457.14 375.53,458.29 375.39,459.49 375.22,460.74 375.01,462.04 374.77,463.40" fill="#c93400"/><polygon points="374.50,464.80 375.75,464.11 376.97,463.46 378.14,462.86 379.28,462.31 380.38,461.81 381.43,461.35 382.46,460.94 383.44,460.57 384.38,460.25 385.29,459.98 385.61,459.92 385.93,459.95 386.24,460.06 386.51,460.24 386.72,460.49 386.86,460.78 386.92,461.10 386.90,461.43 386.79,461.74 386.60,462.01 386.36,462.22 386.06,462.36 385.17,462.67 384.22,462.97 383.21,463.25 382.14,463.52 381.01,463.77 379.83,464.00 378.58,464.23 377.28,464.43 375.92,464.62" fill="#c93400"/><polygon points="374.50,464.80 375.54,465.78 376.53,466.73 377.47,467.66 378.34,468.57 379.16,469.46 379.93,470.33 380.63,471.17 381.28,471.99 381.88,472.79 382.42,473.57 382.57,473.86 382.65,474.18 382.64,474.50 382.55,474.81 382.38,475.09 382.14,475.32 381.85,475.47 381.54,475.55 381.21,475.54 380.90,475.45 380.62,475.28 380.40,475.04 379.82,474.29 379.25,473.48 378.67,472.60 378.08,471.67 377.49,470.67 376.90,469.62 376.31,468.51 375.71,467.33 375.11,466.10" fill="#c93400"/><polygon points="374.50,464.80 373.89,466.10 373.29,467.33 372.69,468.51 372.10,469.62 371.51,470.67 370.92,471.67 370.33,472.60 369.75,473.48 369.18,474.29 368.60,475.04 368.38,475.28 368.10,475.45 367.79,475.54 367.46,475.55 367.15,475.47 366.86,475.32 366.62,475.09 366.45,474.81 366.36,474.50 366.35,474.18 366.43,473.86 366.58,473.57 367.12,472.79 367.72,471.99 368.37,471.17 369.07,470.33 369.84,469.46 370.66,468.57 371.53,467.66 372.47,466.73 373.46,465.78" fill="#c93400"/><polygon points="374.50,464.80 373.08,464.62 371.72,464.43 370.42,464.23 369.17,464.00 367.99,463.77 366.86,463.52 365.79,463.25 364.78,462.97 363.83,462.67 362.94,462.36 362.64,462.22 362.40,462.01 362.21,461.74 362.10,461.43 362.08,461.10 362.14,460.78 362.28,460.49 362.49,460.24 362.76,460.06 363.07,459.95 363.39,459.92 363.71,459.98 364.62,460.25 365.56,460.57 366.54,460.94 367.57,461.35 368.62,461.81 369.72,462.31 370.86,462.86 372.03,463.46 373.25,464.11" fill="#c93400"/>
<polygon points="353.80,484.50 353.53,483.20 353.29,481.96 353.08,480.76 352.91,479.61 352.77,478.51 352.66,477.46 352.58,476.46 352.54,475.51 352.53,474.60 352.55,473.75 352.59,473.43 352.72,473.12 352.92,472.87 353.18,472.67 353.48,472.54 353.80,472.50 354.12,472.54 354.43,472.67 354.68,472.87 354.88,473.12 355.01,473.43 355.05,473.75 355.07,474.60 355.06,475.51 355.02,476.46 354.94,477.46 354.83,478.51 354.69,479.61 354.52,480.76 354.31,481.96 354.07,483.20" fill="#3e6a8d"/><polygon points="353.80,484.50 354.95,483.84 356.06,483.23 357.14,482.66 358.17,482.14 359.18,481.67 360.14,481.24 361.07,480.86 361.96,480.52 362.82,480.23 363.64,479.99 363.96,479.93 364.28,479.96 364.59,480.06 364.86,480.25 365.07,480.50 365.21,480.79 365.27,481.11 365.25,481.44 365.14,481.75 364.95,482.01 364.70,482.23 364.41,482.37 363.60,482.65 362.74,482.92 361.82,483.17 360.85,483.41 359.81,483.63 358.72,483.84 357.58,484.03 356.38,484.20 355.12,484.36" fill="#3e6a8d"/><polygon points="353.80,484.50 354.78,485.39 355.71,486.26 356.58,487.10 357.39,487.93 358.15,488.74 358.86,489.52 359.51,490.29 360.10,491.03 360.64,491.76 361.13,492.46 361.29,492.75 361.36,493.07 361.35,493.39 361.26,493.71 361.09,493.98 360.85,494.21 360.57,494.36 360.25,494.44 359.92,494.43 359.61,494.34 359.33,494.17 359.11,493.93 358.59,493.25 358.07,492.52 357.54,491.72 357.01,490.86 356.49,489.95 355.95,488.98 355.42,487.95 354.88,486.86 354.34,485.71" fill="#3e6a8d"/><polygon points="353.80,484.50 353.26,485.71 352.72,486.86 352.18,487.95 351.65,488.98 351.11,489.95 350.59,490.86 350.06,491.72 349.53,492.52 349.01,493.25 348.49,493.93 348.27,494.17 347.99,494.34 347.68,494.43 347.35,494.44 347.03,494.36 346.75,494.21 346.51,493.98 346.34,493.71 346.25,493.39 346.24,493.07 346.31,492.75 346.47,492.46 346.96,491.76 347.50,491.03 348.09,490.29 348.74,489.52 349.45,488.74 350.21,487.93 351.02,487.10 351.89,486.26 352.82,485.39" fill="#3e6a8d"/><polygon points="353.80,484.50 352.48,484.36 351.22,484.20 350.02,484.03 348.88,483.84 347.79,483.63 346.75,483.41 345.78,483.17 344.86,482.92 344.00,482.65 343.19,482.37 342.90,482.23 342.65,482.01 342.46,481.75 342.35,481.44 342.33,481.11 342.39,480.79 342.53,480.50 342.74,480.25 343.01,480.06 343.32,479.96 343.64,479.93 343.96,479.99 344.78,480.23 345.64,480.52 346.53,480.86 347.46,481.24 348.42,481.67 349.43,482.14 350.46,482.66 351.54,483.23 352.65,483.84" fill="#3e6a8d"/>
<polygon points="403.50,501.00 403.23,499.92 402.99,498.89 402.78,497.90 402.61,496.96 402.47,496.06 402.36,495.21 402.28,494.40 402.24,493.64 402.23,492.92 402.25,492.25 402.29,491.93 402.42,491.62 402.62,491.37 402.88,491.17 403.18,491.04 403.50,491.00 403.82,491.04 404.12,491.17 404.38,491.37 404.58,491.62 404.71,491.93 404.75,492.25 404.77,492.92 404.76,493.64 404.72,494.40 404.64,495.21 404.53,496.06 404.39,496.96 404.22,497.90 404.01,498.89 403.77,499.92" fill="#b3c9cd"/><polygon points="403.50,501.00 404.44,500.41 405.35,499.86 406.22,499.36 407.07,498.91 407.88,498.49 408.65,498.13 409.40,497.80 410.11,497.53 410.79,497.29 411.44,497.11 411.76,497.05 412.08,497.07 412.39,497.18 412.66,497.37 412.87,497.62 413.01,497.91 413.07,498.23 413.04,498.56 412.94,498.86 412.75,499.13 412.50,499.34 412.21,499.48 411.57,499.71 410.89,499.92 410.15,500.12 409.36,500.29 408.51,500.46 407.62,500.60 406.67,500.72 405.66,500.83 404.61,500.93" fill="#b3c9cd"/><polygon points="403.50,501.00 404.35,501.71 405.15,502.41 405.90,503.08 406.59,503.75 407.24,504.39 407.83,505.01 408.36,505.62 408.85,506.21 409.28,506.79 409.65,507.34 409.81,507.63 409.89,507.95 409.88,508.27 409.79,508.59 409.61,508.87 409.38,509.09 409.09,509.25 408.77,509.32 408.45,509.31 408.13,509.22 407.86,509.05 407.63,508.81 407.22,508.28 406.81,507.69 406.39,507.05 405.98,506.35 405.57,505.60 405.15,504.79 404.74,503.93 404.33,503.01 403.91,502.03" fill="#b3c9cd"/><polygon points="403.50,501.00 403.09,502.03 402.67,503.01 402.26,503.93 401.85,504.79 401.43,505.60 401.02,506.35 400.61,507.05 400.19,507.69 399.78,508.28 399.37,508.81 399.14,509.05 398.87,509.22 398.55,509.31 398.23,509.32 397.91,509.25 397.62,509.09 397.39,508.87 397.21,508.59 397.12,508.27 397.11,507.95 397.19,507.63 397.35,507.34 397.72,506.79 398.15,506.21 398.64,505.62 399.17,505.01 399.76,504.39 400.41,503.75 401.10,503.08 401.85,502.41 402.65,501.71" fill="#b3c9cd"/><polygon points="403.50,501.00 402.39,500.93 401.34,500.83 400.33,500.72 399.38,500.60 398.49,500.46 397.64,500.29 396.85,500.12 396.11,499.92 395.43,499.71 394.79,499.48 394.50,499.34 394.25,499.13 394.06,498.86 393.96,498.56 393.93,498.23 393.99,497.91 394.13,497.62 394.34,497.37 394.61,497.18 394.92,497.07 395.24,497.05 395.56,497.11 396.21,497.29 396.89,497.53 397.60,497.80 398.35,498.13 399.12,498.49 399.93,498.91 400.78,499.36 401.65,499.86 402.56,500.41" fill="#b3c9cd"/>
<polygon points="313.50,540.30 313.23,539.00 312.99,537.76 312.78,536.56 312.61,535.41 312.47,534.31 312.36,533.26 312.28,532.26 312.24,531.31 312.23,530.40 312.25,529.55 312.29,529.23 312.42,528.92 312.62,528.67 312.88,528.47 313.18,528.34 313.50,528.30 313.82,528.34 314.12,528.47 314.38,528.67 314.58,528.92 314.71,529.23 314.75,529.55 314.77,530.40 314.76,531.31 314.72,532.26 314.64,533.26 314.53,534.31 314.39,535.41 314.22,536.56 314.01,537.76 313.77,539.00" fill="#c93400"/><polygon points="313.50,540.30 314.65,539.64 315.76,539.03 316.84,538.46 317.87,537.94 318.88,537.47 319.84,537.04 320.77,536.66 321.66,536.32 322.52,536.03 323.34,535.79 323.66,535.73 323.98,535.76 324.29,535.86 324.56,536.05 324.77,536.30 324.91,536.59 324.97,536.91 324.95,537.24 324.84,537.55 324.65,537.81 324.40,538.03 324.11,538.17 323.30,538.45 322.44,538.72 321.52,538.97 320.55,539.21 319.51,539.43 318.42,539.64 317.28,539.83 316.08,540.00 314.82,540.16" fill="#c93400"/><polygon points="313.50,540.30 314.48,541.19 315.41,542.06 316.28,542.90 317.09,543.73 317.85,544.54 318.56,545.32 319.21,546.09 319.80,546.83 320.34,547.56 320.83,548.26 320.99,548.55 321.06,548.87 321.05,549.19 320.96,549.51 320.79,549.78 320.55,550.01 320.27,550.16 319.95,550.24 319.62,550.23 319.31,550.14 319.03,549.97 318.81,549.73 318.29,549.05 317.77,548.32 317.24,547.52 316.71,546.66 316.19,545.75 315.65,544.78 315.12,543.75 314.58,542.66 314.04,541.51" fill="#c93400"/><polygon points="313.50,540.30 312.96,541.51 312.42,542.66 311.88,543.75 311.35,544.78 310.81,545.75 310.29,546.66 309.76,547.52 309.23,548.32 308.71,549.05 308.19,549.73 307.97,549.97 307.69,550.14 307.38,550.23 307.05,550.24 306.73,550.16 306.45,550.01 306.21,549.78 306.04,549.51 305.95,549.19 305.94,548.87 306.01,548.55 306.17,548.26 306.66,547.56 307.20,546.83 307.79,546.09 308.44,545.32 309.15,544.54 309.91,543.73 310.72,542.90 311.59,542.06 312.52,541.19" fill="#c93400"/><polygon points="313.50,540.30 312.18,540.16 310.92,540.00 309.72,539.83 308.58,539.64 307.49,539.43 306.45,539.21 305.48,538.97 304.56,538.72 303.70,538.45 302.89,538.17 302.60,538.03 302.35,537.81 302.16,537.55 302.05,537.24 302.03,536.91 302.09,536.59 302.23,536.30 302.44,536.05 302.71,535.86 303.02,535.76 303.34,535.73 303.66,535.79 304.48,536.03 305.34,536.32 306.23,536.66 307.16,537.04 308.12,537.47 309.13,537.94 310.16,538.46 311.24,539.03 312.35,539.64" fill="#c93400"/>
<polygon points="338.30,527.00 338.03,525.81 337.79,524.67 337.58,523.58 337.41,522.54 337.27,521.54 337.16,520.59 337.08,519.68 337.04,518.82 337.03,518.01 337.05,517.25 337.09,516.93 337.22,516.62 337.42,516.37 337.68,516.17 337.98,516.04 338.30,516.00 338.62,516.04 338.93,516.17 339.18,516.37 339.38,516.62 339.51,516.93 339.55,517.25 339.57,518.01 339.56,518.82 339.52,519.68 339.44,520.59 339.33,521.54 339.19,522.54 339.02,523.58 338.81,524.67 338.57,525.81" fill="#c93400"/><polygon points="338.30,527.00 339.34,526.38 340.35,525.80 341.33,525.26 342.27,524.77 343.18,524.33 344.05,523.93 344.88,523.58 345.69,523.28 346.45,523.01 347.19,522.80 347.51,522.74 347.83,522.76 348.14,522.87 348.41,523.06 348.62,523.31 348.76,523.60 348.82,523.92 348.80,524.25 348.69,524.55 348.50,524.82 348.25,525.04 347.96,525.18 347.24,525.43 346.47,525.67 345.64,525.90 344.75,526.10 343.81,526.29 342.82,526.47 341.77,526.62 340.67,526.77 339.51,526.89" fill="#c93400"/><polygon points="338.30,527.00 339.22,527.80 340.08,528.58 340.89,529.34 341.64,530.09 342.35,530.81 342.99,531.52 343.59,532.21 344.13,532.87 344.61,533.52 345.04,534.15 345.20,534.44 345.27,534.76 345.27,535.08 345.17,535.40 345.00,535.67 344.77,535.90 344.48,536.05 344.16,536.13 343.84,536.12 343.52,536.03 343.24,535.86 343.02,535.62 342.55,535.02 342.09,534.36 341.62,533.64 341.15,532.86 340.68,532.03 340.20,531.13 339.73,530.19 339.25,529.18 338.78,528.12" fill="#c93400"/><polygon points="338.30,527.00 337.82,528.12 337.35,529.18 336.87,530.19 336.40,531.13 335.92,532.03 335.45,532.86 334.98,533.64 334.51,534.36 334.05,535.02 333.58,535.62 333.36,535.86 333.08,536.03 332.76,536.12 332.44,536.13 332.12,536.05 331.83,535.90 331.60,535.67 331.43,535.40 331.33,535.08 331.33,534.76 331.40,534.44 331.56,534.15 331.99,533.52 332.47,532.87 333.01,532.21 333.61,531.52 334.25,530.81 334.96,530.09 335.71,529.34 336.52,528.58 337.38,527.80" fill="#c93400"/><polygon points="338.30,527.00 337.09,526.89 335.93,526.77 334.83,526.62 333.78,526.47 332.79,526.29 331.85,526.10 330.96,525.90 330.13,525.67 329.36,525.43 328.64,525.18 328.35,525.04 328.10,524.82 327.91,524.55 327.80,524.25 327.78,523.92 327.84,523.60 327.98,523.31 328.19,523.06 328.46,522.87 328.77,522.76 329.09,522.74 329.41,522.80 330.15,523.01 330.91,523.28 331.72,523.58 332.55,523.93 333.42,524.33 334.33,524.77 335.27,525.26 336.25,525.80 337.26,526.38" fill="#c93400"/>
<polygon points="394.10,529.00 393.83,527.70 393.59,526.46 393.38,525.26 393.21,524.11 393.07,523.01 392.96,521.96 392.88,520.96 392.84,520.01 392.83,519.10 392.85,518.25 392.89,517.93 393.02,517.62 393.22,517.37 393.48,517.17 393.78,517.04 394.10,517.00 394.42,517.04 394.73,517.17 394.98,517.37 395.18,517.62 395.31,517.93 395.35,518.25 395.37,519.10 395.36,520.01 395.32,520.96 395.24,521.96 395.13,523.01 394.99,524.11 394.82,525.26 394.61,526.46 394.37,527.70" fill="#c93400"/><polygon points="394.10,529.00 395.25,528.34 396.36,527.73 397.44,527.16 398.47,526.64 399.48,526.17 400.44,525.74 401.37,525.36 402.26,525.02 403.12,524.73 403.94,524.49 404.26,524.43 404.58,524.46 404.89,524.56 405.16,524.75 405.37,525.00 405.51,525.29 405.57,525.61 405.55,525.94 405.44,526.25 405.25,526.51 405.00,526.73 404.71,526.87 403.90,527.15 403.04,527.42 402.12,527.67 401.15,527.91 400.11,528.13 399.02,528.34 397.88,528.53 396.68,528.70 395.42,528.86" fill="#c93400"/><polygon points="394.10,529.00 395.08,529.89 396.01,530.76 396.88,531.60 397.69,532.43 398.45,533.24 399.16,534.02 399.81,534.79 400.40,535.53 400.94,536.26 401.43,536.96 401.59,537.25 401.66,537.57 401.65,537.89 401.56,538.21 401.39,538.48 401.15,538.71 400.87,538.86 400.55,538.94 400.22,538.93 399.91,538.84 399.63,538.67 399.41,538.43 398.89,537.75 398.37,537.02 397.84,536.22 397.31,535.36 396.79,534.45 396.25,533.48 395.72,532.45 395.18,531.36 394.64,530.21" fill="#c93400"/><polygon points="394.10,529.00 393.56,530.21 393.02,531.36 392.48,532.45 391.95,533.48 391.41,534.45 390.89,535.36 390.36,536.22 389.83,537.02 389.31,537.75 388.79,538.43 388.57,538.67 388.29,538.84 387.98,538.93 387.65,538.94 387.33,538.86 387.05,538.71 386.81,538.48 386.64,538.21 386.55,537.89 386.54,537.57 386.61,537.25 386.77,536.96 387.26,536.26 387.80,535.53 388.39,534.79 389.04,534.02 389.75,533.24 390.51,532.43 391.32,531.60 392.19,530.76 393.12,529.89" fill="#c93400"/><polygon points="394.10,529.00 392.78,528.86 391.52,528.70 390.32,528.53 389.18,528.34 388.09,528.13 387.05,527.91 386.08,527.67 385.16,527.42 384.30,527.15 383.49,526.87 383.20,526.73 382.95,526.51 382.76,526.25 382.65,525.94 382.63,525.61 382.69,525.29 382.83,525.00 383.04,524.75 383.31,524.56 383.62,524.46 383.94,524.43 384.26,524.49 385.08,524.73 385.94,525.02 386.83,525.36 387.76,525.74 388.72,526.17 389.73,526.64 390.76,527.16 391.84,527.73 392.95,528.34" fill="#c93400"/>
<polygon points="438.60,529.00 438.33,527.92 438.09,526.89 437.88,525.90 437.71,524.96 437.57,524.06 437.46,523.21 437.38,522.40 437.34,521.64 437.33,520.92 437.35,520.25 437.39,519.93 437.52,519.62 437.72,519.37 437.98,519.17 438.28,519.04 438.60,519.00 438.92,519.04 439.23,519.17 439.48,519.37 439.68,519.62 439.81,519.93 439.85,520.25 439.87,520.92 439.86,521.64 439.82,522.40 439.74,523.21 439.63,524.06 439.49,524.96 439.32,525.90 439.11,526.89 438.87,527.92" fill="#3e6a8d"/><polygon points="438.60,529.00 439.54,528.41 440.45,527.86 441.32,527.36 442.17,526.91 442.98,526.49 443.75,526.13 444.50,525.80 445.21,525.53 445.89,525.29 446.54,525.11 446.86,525.05 447.18,525.07 447.49,525.18 447.76,525.37 447.97,525.62 448.11,525.91 448.17,526.23 448.14,526.56 448.04,526.86 447.85,527.13 447.60,527.34 447.31,527.48 446.67,527.71 445.99,527.92 445.25,528.12 444.46,528.29 443.61,528.46 442.72,528.60 441.77,528.72 440.76,528.83 439.71,528.93" fill="#3e6a8d"/><polygon points="438.60,529.00 439.45,529.71 440.25,530.41 441.00,531.08 441.69,531.75 442.34,532.39 442.93,533.01 443.46,533.62 443.95,534.21 444.38,534.79 444.75,535.34 444.91,535.63 444.99,535.95 444.98,536.27 444.89,536.59 444.71,536.87 444.48,537.09 444.19,537.25 443.87,537.32 443.55,537.31 443.23,537.22 442.96,537.05 442.73,536.81 442.32,536.28 441.91,535.69 441.49,535.05 441.08,534.35 440.67,533.60 440.25,532.79 439.84,531.93 439.43,531.01 439.01,530.03" fill="#3e6a8d"/><polygon points="438.60,529.00 438.19,530.03 437.77,531.01 437.36,531.93 436.95,532.79 436.53,533.60 436.12,534.35 435.71,535.05 435.29,535.69 434.88,536.28 434.47,536.81 434.24,537.05 433.97,537.22 433.65,537.31 433.33,537.32 433.01,537.25 432.72,537.09 432.49,536.87 432.31,536.59 432.22,536.27 432.21,535.95 432.29,535.63 432.45,535.34 432.82,534.79 433.25,534.21 433.74,533.62 434.27,533.01 434.86,532.39 435.51,531.75 436.20,531.08 436.95,530.41 437.75,529.71" fill="#3e6a8d"/><polygon points="438.60,529.00 437.49,528.93 436.44,528.83 435.43,528.72 434.48,528.60 433.59,528.46 432.74,528.29 431.95,528.12 431.21,527.92 430.53,527.71 429.89,527.48 429.60,527.34 429.35,527.13 429.16,526.86 429.06,526.56 429.03,526.23 429.09,525.91 429.23,525.62 429.44,525.37 429.71,525.18 430.02,525.07 430.34,525.05 430.66,525.11 431.31,525.29 431.99,525.53 432.70,525.80 433.45,526.13 434.22,526.49 435.03,526.91 435.88,527.36 436.75,527.86 437.66,528.41" fill="#3e6a8d"/>
<polygon points="471.70,563.50 471.43,562.31 471.19,561.17 470.98,560.08 470.81,559.04 470.67,558.04 470.56,557.09 470.48,556.18 470.44,555.32 470.43,554.51 470.45,553.75 470.49,553.43 470.62,553.12 470.82,552.87 471.07,552.67 471.38,552.54 471.70,552.50 472.02,552.54 472.32,552.67 472.58,552.87 472.78,553.12 472.91,553.43 472.95,553.75 472.97,554.51 472.96,555.32 472.92,556.18 472.84,557.09 472.73,558.04 472.59,559.04 472.42,560.08 472.21,561.17 471.97,562.31" fill="#3e6a8d"/><polygon points="471.70,563.50 472.74,562.88 473.75,562.30 474.73,561.76 475.67,561.27 476.58,560.83 477.45,560.43 478.28,560.08 479.09,559.78 479.85,559.51 480.59,559.30 480.91,559.24 481.23,559.26 481.54,559.37 481.81,559.56 482.02,559.81 482.16,560.10 482.22,560.42 482.20,560.75 482.09,561.05 481.90,561.32 481.65,561.54 481.36,561.68 480.64,561.93 479.87,562.17 479.04,562.40 478.15,562.60 477.21,562.79 476.22,562.97 475.17,563.12 474.07,563.27 472.91,563.39" fill="#3e6a8d"/><polygon points="471.70,563.50 472.62,564.30 473.48,565.08 474.29,565.84 475.04,566.59 475.75,567.31 476.39,568.02 476.99,568.71 477.53,569.37 478.01,570.02 478.44,570.65 478.60,570.94 478.67,571.26 478.67,571.58 478.57,571.90 478.40,572.17 478.17,572.40 477.88,572.55 477.56,572.63 477.24,572.62 476.92,572.53 476.64,572.36 476.42,572.12 475.95,571.52 475.49,570.86 475.02,570.14 474.55,569.36 474.08,568.53 473.60,567.63 473.13,566.69 472.65,565.68 472.18,564.62" fill="#3e6a8d"/><polygon points="471.70,563.50 471.22,564.62 470.75,565.68 470.27,566.69 469.80,567.63 469.32,568.53 468.85,569.36 468.38,570.14 467.91,570.86 467.45,571.52 466.98,572.12 466.76,572.36 466.48,572.53 466.16,572.62 465.84,572.63 465.52,572.55 465.23,572.40 465.00,572.17 464.83,571.90 464.73,571.58 464.73,571.26 464.80,570.94 464.96,570.65 465.39,570.02 465.87,569.37 466.41,568.71 467.01,568.02 467.65,567.31 468.36,566.59 469.11,565.84 469.92,565.08 470.78,564.30" fill="#3e6a8d"/><polygon points="471.70,563.50 470.49,563.39 469.33,563.27 468.23,563.12 467.18,562.97 466.19,562.79 465.25,562.60 464.36,562.40 463.53,562.17 462.76,561.93 462.04,561.68 461.75,561.54 461.50,561.32 461.31,561.05 461.20,560.75 461.18,560.42 461.24,560.10 461.38,559.81 461.59,559.56 461.86,559.37 462.17,559.26 462.49,559.24 462.81,559.30 463.55,559.51 464.31,559.78 465.12,560.08 465.95,560.43 466.82,560.83 467.73,561.27 468.67,561.76 469.65,562.30 470.66,562.88" fill="#3e6a8d"/>
<polygon points="576.50,555.90 576.23,554.71 575.99,553.57 575.78,552.48 575.61,551.44 575.47,550.44 575.36,549.49 575.28,548.58 575.24,547.72 575.23,546.91 575.25,546.15 575.29,545.83 575.42,545.52 575.62,545.27 575.88,545.07 576.18,544.94 576.50,544.90 576.82,544.94 577.12,545.07 577.38,545.27 577.58,545.52 577.71,545.83 577.75,546.15 577.77,546.91 577.76,547.72 577.72,548.58 577.64,549.49 577.53,550.44 577.39,551.44 577.22,552.48 577.01,553.57 576.77,554.71" fill="#3e6a8d"/><polygon points="576.50,555.90 577.54,555.28 578.55,554.70 579.53,554.16 580.47,553.67 581.38,553.23 582.25,552.83 583.08,552.48 583.89,552.18 584.65,551.91 585.39,551.70 585.71,551.64 586.03,551.66 586.34,551.77 586.61,551.96 586.82,552.21 586.96,552.50 587.02,552.82 587.00,553.15 586.89,553.45 586.70,553.72 586.45,553.94 586.16,554.08 585.44,554.33 584.67,554.57 583.84,554.80 582.95,555.00 582.01,555.19 581.02,555.37 579.97,555.52 578.87,555.67 577.71,555.79" fill="#3e6a8d"/><polygon points="576.50,555.90 577.42,556.70 578.28,557.48 579.09,558.24 579.84,558.99 580.55,559.71 581.19,560.42 581.79,561.11 582.33,561.77 582.81,562.42 583.24,563.05 583.40,563.34 583.47,563.66 583.47,563.98 583.37,564.30 583.20,564.57 582.97,564.80 582.68,564.95 582.36,565.03 582.04,565.02 581.72,564.93 581.44,564.76 581.22,564.52 580.75,563.92 580.29,563.26 579.82,562.54 579.35,561.76 578.88,560.93 578.40,560.03 577.93,559.09 577.45,558.08 576.98,557.02" fill="#3e6a8d"/><polygon points="576.50,555.90 576.02,557.02 575.55,558.08 575.07,559.09 574.60,560.03 574.12,560.93 573.65,561.76 573.18,562.54 572.71,563.26 572.25,563.92 571.78,564.52 571.56,564.76 571.28,564.93 570.96,565.02 570.64,565.03 570.32,564.95 570.03,564.80 569.80,564.57 569.63,564.30 569.53,563.98 569.53,563.66 569.60,563.34 569.76,563.05 570.19,562.42 570.67,561.77 571.21,561.11 571.81,560.42 572.45,559.71 573.16,558.99 573.91,558.24 574.72,557.48 575.58,556.70" fill="#3e6a8d"/><polygon points="576.50,555.90 575.29,555.79 574.13,555.67 573.03,555.52 571.98,555.37 570.99,555.19 570.05,555.00 569.16,554.80 568.33,554.57 567.56,554.33 566.84,554.08 566.55,553.94 566.30,553.72 566.11,553.45 566.00,553.15 565.98,552.82 566.04,552.50 566.18,552.21 566.39,551.96 566.66,551.77 566.97,551.66 567.29,551.64 567.61,551.70 568.35,551.91 569.11,552.18 569.92,552.48 570.75,552.83 571.62,553.23 572.53,553.67 573.47,554.16 574.45,554.70 575.46,555.28" fill="#3e6a8d"/>
<polygon points="724.40,456.30 724.13,455.22 723.89,454.19 723.68,453.20 723.51,452.26 723.37,451.36 723.26,450.51 723.18,449.70 723.14,448.94 723.13,448.22 723.15,447.55 723.19,447.23 723.32,446.93 723.52,446.67 723.77,446.47 724.08,446.34 724.40,446.30 724.72,446.34 725.02,446.47 725.28,446.67 725.48,446.93 725.61,447.23 725.65,447.55 725.67,448.22 725.66,448.94 725.62,449.70 725.54,450.51 725.43,451.36 725.29,452.26 725.12,453.20 724.91,454.19 724.67,455.22" fill="#c93400"/><polygon points="724.40,456.30 725.34,455.71 726.25,455.16 727.12,454.66 727.97,454.21 728.78,453.79 729.55,453.43 730.30,453.10 731.01,452.83 731.69,452.59 732.34,452.41 732.66,452.35 732.98,452.37 733.29,452.48 733.56,452.67 733.77,452.92 733.91,453.21 733.97,453.53 733.94,453.86 733.84,454.16 733.65,454.43 733.40,454.64 733.11,454.78 732.47,455.01 731.79,455.22 731.05,455.42 730.26,455.59 729.41,455.76 728.52,455.90 727.57,456.02 726.56,456.13 725.51,456.23" fill="#c93400"/><polygon points="724.40,456.30 725.25,457.01 726.05,457.71 726.80,458.38 727.49,459.05 728.14,459.69 728.73,460.31 729.26,460.92 729.75,461.51 730.18,462.09 730.55,462.64 730.71,462.93 730.79,463.25 730.78,463.57 730.69,463.89 730.51,464.17 730.28,464.39 729.99,464.55 729.67,464.62 729.35,464.61 729.03,464.52 728.76,464.35 728.53,464.11 728.12,463.58 727.71,462.99 727.29,462.35 726.88,461.65 726.47,460.90 726.05,460.09 725.64,459.23 725.23,458.31 724.81,457.33" fill="#c93400"/><polygon points="724.40,456.30 723.99,457.33 723.57,458.31 723.16,459.23 722.75,460.09 722.33,460.90 721.92,461.65 721.51,462.35 721.09,462.99 720.68,463.58 720.27,464.11 720.04,464.35 719.77,464.52 719.45,464.61 719.13,464.62 718.81,464.55 718.52,464.39 718.29,464.17 718.11,463.89 718.02,463.57 718.01,463.25 718.09,462.93 718.25,462.64 718.62,462.09 719.05,461.51 719.54,460.92 720.07,460.31 720.66,459.69 721.31,459.05 722.00,458.38 722.75,457.71 723.55,457.01" fill="#c93400"/><polygon points="724.40,456.30 723.29,456.23 722.24,456.13 721.23,456.02 720.28,455.90 719.39,455.76 718.54,455.59 717.75,455.42 717.01,455.22 716.33,455.01 715.69,454.78 715.40,454.64 715.15,454.43 714.96,454.16 714.86,453.86 714.83,453.53 714.89,453.21 715.03,452.92 715.24,452.67 715.51,452.48 715.82,452.37 716.14,452.35 716.46,452.41 717.11,452.59 717.79,452.83 718.50,453.10 719.25,453.43 720.02,453.79 720.83,454.21 721.68,454.66 722.55,455.16 723.46,455.71" fill="#c93400"/>
<polygon points="683.80,472.00 683.53,471.03 683.29,470.11 683.08,469.22 682.91,468.38 682.77,467.59 682.66,466.83 682.58,466.12 682.54,465.46 682.53,464.83 682.55,464.25 682.59,463.93 682.72,463.62 682.92,463.37 683.17,463.17 683.48,463.04 683.80,463.00 684.12,463.04 684.42,463.17 684.68,463.37 684.88,463.62 685.01,463.93 685.05,464.25 685.07,464.83 685.06,465.46 685.02,466.12 684.94,466.83 684.83,467.59 684.69,468.38 684.52,469.22 684.31,470.11 684.07,471.03" fill="#c93400"/><polygon points="683.80,472.00 684.64,471.44 685.44,470.93 686.22,470.46 686.96,470.04 687.68,469.66 688.36,469.32 689.01,469.03 689.63,468.78 690.22,468.58 690.78,468.42 691.11,468.36 691.43,468.38 691.74,468.49 692.01,468.68 692.22,468.92 692.36,469.22 692.42,469.54 692.39,469.87 692.28,470.17 692.10,470.44 691.85,470.65 691.56,470.79 691.01,470.99 690.41,471.18 689.76,471.34 689.07,471.49 688.32,471.62 687.51,471.73 686.66,471.82 685.76,471.90 684.80,471.96" fill="#c93400"/><polygon points="683.80,472.00 684.59,472.62 685.33,473.23 686.01,473.83 686.65,474.40 687.23,474.96 687.76,475.51 688.24,476.04 688.67,476.55 689.04,477.05 689.37,477.54 689.52,477.82 689.60,478.14 689.59,478.47 689.50,478.78 689.33,479.06 689.09,479.28 688.80,479.44 688.49,479.51 688.16,479.50 687.85,479.41 687.57,479.24 687.34,479.00 686.99,478.55 686.63,478.03 686.27,477.47 685.91,476.85 685.56,476.18 685.21,475.45 684.85,474.67 684.50,473.83 684.15,472.94" fill="#c93400"/><polygon points="683.80,472.00 683.45,472.94 683.10,473.83 682.75,474.67 682.39,475.45 682.04,476.18 681.69,476.85 681.33,477.47 680.97,478.03 680.61,478.55 680.26,479.00 680.03,479.24 679.75,479.41 679.44,479.50 679.11,479.51 678.80,479.44 678.51,479.28 678.27,479.06 678.10,478.78 678.01,478.47 678.00,478.14 678.08,477.82 678.23,477.54 678.56,477.05 678.93,476.55 679.36,476.04 679.84,475.51 680.37,474.96 680.95,474.40 681.59,473.83 682.27,473.23 683.01,472.62" fill="#c93400"/><polygon points="683.80,472.00 682.80,471.96 681.84,471.90 680.94,471.82 680.09,471.73 679.28,471.62 678.53,471.49 677.84,471.34 677.19,471.18 676.59,470.99 676.04,470.79 675.75,470.65 675.50,470.44 675.32,470.17 675.21,469.87 675.18,469.54 675.24,469.22 675.38,468.92 675.59,468.68 675.86,468.49 676.17,468.38 676.49,468.36 676.82,468.42 677.38,468.58 677.97,468.78 678.59,469.03 679.24,469.32 679.92,469.66 680.64,470.04 681.38,470.46 682.16,470.93 682.96,471.44" fill="#c93400"/>
<polygon points="672.00,489.00 671.73,488.03 671.49,487.11 671.28,486.22 671.11,485.38 670.97,484.59 670.86,483.83 670.78,483.12 670.74,482.46 670.73,481.83 670.75,481.25 670.79,480.93 670.92,480.62 671.12,480.37 671.38,480.17 671.68,480.04 672.00,480.00 672.32,480.04 672.62,480.17 672.88,480.37 673.08,480.62 673.21,480.93 673.25,481.25 673.27,481.83 673.26,482.46 673.22,483.12 673.14,483.83 673.03,484.59 672.89,485.38 672.72,486.22 672.51,487.11 672.27,488.03" fill="#3e6a8d"/><polygon points="672.00,489.00 672.84,488.44 673.64,487.93 674.42,487.46 675.16,487.04 675.88,486.66 676.56,486.32 677.21,486.03 677.83,485.78 678.42,485.58 678.98,485.42 679.31,485.36 679.63,485.38 679.94,485.49 680.21,485.68 680.42,485.92 680.56,486.22 680.62,486.54 680.59,486.87 680.48,487.17 680.30,487.44 680.05,487.65 679.76,487.79 679.21,487.99 678.61,488.18 677.96,488.34 677.27,488.49 676.52,488.62 675.71,488.73 674.86,488.82 673.96,488.90 673.00,488.96" fill="#3e6a8d"/><polygon points="672.00,489.00 672.79,489.62 673.53,490.23 674.21,490.83 674.85,491.40 675.43,491.96 675.96,492.51 676.44,493.04 676.87,493.55 677.24,494.05 677.57,494.54 677.72,494.82 677.80,495.14 677.79,495.47 677.70,495.78 677.53,496.06 677.29,496.28 677.00,496.44 676.69,496.51 676.36,496.50 676.05,496.41 675.77,496.24 675.54,496.00 675.19,495.55 674.83,495.03 674.47,494.47 674.11,493.85 673.76,493.18 673.41,492.45 673.05,491.67 672.70,490.83 672.35,489.94" fill="#3e6a8d"/><polygon points="672.00,489.00 671.65,489.94 671.30,490.83 670.95,491.67 670.59,492.45 670.24,493.18 669.89,493.85 669.53,494.47 669.17,495.03 668.81,495.55 668.46,496.00 668.23,496.24 667.95,496.41 667.64,496.50 667.31,496.51 667.00,496.44 666.71,496.28 666.47,496.06 666.30,495.78 666.21,495.47 666.20,495.14 666.28,494.82 666.43,494.54 666.76,494.05 667.13,493.55 667.56,493.04 668.04,492.51 668.57,491.96 669.15,491.40 669.79,490.83 670.47,490.23 671.21,489.62" fill="#3e6a8d"/><polygon points="672.00,489.00 671.00,488.96 670.04,488.90 669.14,488.82 668.29,488.73 667.48,488.62 666.73,488.49 666.04,488.34 665.39,488.18 664.79,487.99 664.24,487.79 663.95,487.65 663.70,487.44 663.52,487.17 663.41,486.87 663.38,486.54 663.44,486.22 663.58,485.92 663.79,485.68 664.06,485.49 664.37,485.38 664.69,485.36 665.02,485.42 665.58,485.58 666.17,485.78 666.79,486.03 667.44,486.32 668.12,486.66 668.84,487.04 669.58,487.46 670.36,487.93 671.16,488.44" fill="#3e6a8d"/>
<polygon points="655.00,524.40 654.73,523.21 654.49,522.07 654.28,520.98 654.11,519.94 653.97,518.94 653.86,517.99 653.78,517.08 653.74,516.22 653.73,515.41 653.75,514.65 653.79,514.33 653.92,514.02 654.12,513.77 654.38,513.57 654.68,513.44 655.00,513.40 655.32,513.44 655.62,513.57 655.88,513.77 656.08,514.02 656.21,514.33 656.25,514.65 656.27,515.41 656.26,516.22 656.22,517.08 656.14,517.99 656.03,518.94 655.89,519.94 655.72,520.98 655.51,522.07 655.27,523.21" fill="#3e6a8d"/><polygon points="655.00,524.40 656.04,523.78 657.05,523.20 658.03,522.66 658.97,522.17 659.88,521.73 660.75,521.33 661.58,520.98 662.39,520.68 663.15,520.41 663.89,520.20 664.21,520.14 664.53,520.16 664.84,520.27 665.11,520.46 665.32,520.71 665.46,521.00 665.52,521.32 665.50,521.65 665.39,521.95 665.20,522.22 664.95,522.44 664.66,522.58 663.94,522.83 663.17,523.07 662.34,523.30 661.45,523.50 660.51,523.69 659.52,523.87 658.47,524.02 657.37,524.17 656.21,524.29" fill="#3e6a8d"/><polygon points="655.00,524.40 655.92,525.20 656.78,525.98 657.59,526.74 658.34,527.49 659.05,528.21 659.69,528.92 660.29,529.61 660.83,530.27 661.31,530.92 661.74,531.55 661.90,531.84 661.97,532.16 661.97,532.48 661.87,532.80 661.70,533.07 661.47,533.30 661.18,533.45 660.86,533.53 660.54,533.52 660.22,533.43 659.94,533.26 659.72,533.02 659.25,532.42 658.79,531.76 658.32,531.04 657.85,530.26 657.38,529.43 656.90,528.53 656.43,527.59 655.95,526.58 655.48,525.52" fill="#3e6a8d"/><polygon points="655.00,524.40 654.52,525.52 654.05,526.58 653.57,527.59 653.10,528.53 652.62,529.43 652.15,530.26 651.68,531.04 651.21,531.76 650.75,532.42 650.28,533.02 650.06,533.26 649.78,533.43 649.46,533.52 649.14,533.53 648.82,533.45 648.53,533.30 648.30,533.07 648.13,532.80 648.03,532.48 648.03,532.16 648.10,531.84 648.26,531.55 648.69,530.92 649.17,530.27 649.71,529.61 650.31,528.92 650.95,528.21 651.66,527.49 652.41,526.74 653.22,525.98 654.08,525.20" fill="#3e6a8d"/><polygon points="655.00,524.40 653.79,524.29 652.63,524.17 651.53,524.02 650.48,523.87 649.49,523.69 648.55,523.50 647.66,523.30 646.83,523.07 646.06,522.83 645.34,522.58 645.05,522.44 644.80,522.22 644.61,521.95 644.50,521.65 644.48,521.32 644.54,521.00 644.68,520.71 644.89,520.46 645.16,520.27 645.47,520.16 645.79,520.14 646.11,520.20 646.85,520.41 647.61,520.68 648.42,520.98 649.25,521.33 650.12,521.73 651.03,522.17 651.97,522.66 652.95,523.20 653.96,523.78" fill="#3e6a8d"/>
<polygon points="626.20,533.60 625.93,532.52 625.69,531.49 625.48,530.50 625.31,529.56 625.17,528.66 625.06,527.81 624.98,527.00 624.94,526.24 624.93,525.52 624.95,524.85 624.99,524.53 625.12,524.23 625.32,523.97 625.58,523.77 625.88,523.64 626.20,523.60 626.52,523.64 626.83,523.77 627.08,523.97 627.28,524.23 627.41,524.53 627.45,524.85 627.47,525.52 627.46,526.24 627.42,527.00 627.34,527.81 627.23,528.66 627.09,529.56 626.92,530.50 626.71,531.49 626.47,532.52" fill="#3e6a8d"/><polygon points="626.20,533.60 627.14,533.01 628.05,532.46 628.92,531.96 629.77,531.51 630.58,531.09 631.35,530.73 632.10,530.40 632.81,530.13 633.49,529.89 634.14,529.71 634.46,529.65 634.78,529.67 635.09,529.78 635.36,529.97 635.57,530.22 635.71,530.51 635.77,530.83 635.74,531.16 635.64,531.46 635.45,531.73 635.20,531.94 634.91,532.08 634.27,532.31 633.59,532.52 632.85,532.72 632.06,532.89 631.21,533.06 630.32,533.20 629.37,533.32 628.36,533.43 627.31,533.53" fill="#3e6a8d"/><polygon points="626.20,533.60 627.05,534.31 627.85,535.01 628.60,535.68 629.29,536.35 629.94,536.99 630.53,537.61 631.06,538.22 631.55,538.81 631.98,539.39 632.35,539.94 632.51,540.23 632.59,540.55 632.58,540.87 632.49,541.19 632.31,541.47 632.08,541.69 631.79,541.85 631.47,541.92 631.15,541.91 630.83,541.82 630.56,541.65 630.33,541.41 629.92,540.88 629.51,540.29 629.09,539.65 628.68,538.95 628.27,538.20 627.85,537.39 627.44,536.53 627.03,535.61 626.61,534.63" fill="#3e6a8d"/><polygon points="626.20,533.60 625.79,534.63 625.37,535.61 624.96,536.53 624.55,537.39 624.13,538.20 623.72,538.95 623.31,539.65 622.89,540.29 622.48,540.88 622.07,541.41 621.84,541.65 621.57,541.82 621.25,541.91 620.93,541.92 620.61,541.85 620.32,541.69 620.09,541.47 619.91,541.19 619.82,540.87 619.81,540.55 619.89,540.23 620.05,539.94 620.42,539.39 620.85,538.81 621.34,538.22 621.87,537.61 622.46,536.99 623.11,536.35 623.80,535.68 624.55,535.01 625.35,534.31" fill="#3e6a8d"/><polygon points="626.20,533.60 625.09,533.53 624.04,533.43 623.03,533.32 622.08,533.20 621.19,533.06 620.34,532.89 619.55,532.72 618.81,532.52 618.13,532.31 617.49,532.08 617.20,531.94 616.95,531.73 616.76,531.46 616.66,531.16 616.63,530.83 616.69,530.51 616.83,530.22 617.04,529.97 617.31,529.78 617.62,529.67 617.94,529.65 618.26,529.71 618.91,529.89 619.59,530.13 620.30,530.40 621.05,530.73 621.82,531.09 622.63,531.51 623.48,531.96 624.35,532.46 625.26,533.01" fill="#3e6a8d"/>
<polygon points="346.00,170.00 345.73,168.92 345.49,167.89 345.28,166.90 345.11,165.96 344.97,165.06 344.86,164.21 344.78,163.40 344.74,162.64 344.73,161.92 344.75,161.25 344.79,160.93 344.92,160.62 345.12,160.37 345.38,160.17 345.68,160.04 346.00,160.00 346.32,160.04 346.62,160.17 346.88,160.37 347.08,160.62 347.21,160.93 347.25,161.25 347.27,161.92 347.26,162.64 347.22,163.40 347.14,164.21 347.03,165.06 346.89,165.96 346.72,166.90 346.51,167.89 346.27,168.92" fill="#c93400"/><polygon points="346.00,170.00 346.94,169.41 347.85,168.86 348.72,168.36 349.57,167.91 350.38,167.49 351.15,167.13 351.90,166.80 352.61,166.53 353.29,166.29 353.94,166.11 354.26,166.05 354.58,166.07 354.89,166.18 355.16,166.37 355.37,166.62 355.51,166.91 355.57,167.23 355.54,167.56 355.44,167.86 355.25,168.13 355.00,168.34 354.71,168.48 354.07,168.71 353.39,168.92 352.65,169.12 351.86,169.29 351.01,169.46 350.12,169.60 349.17,169.72 348.16,169.83 347.11,169.93" fill="#c93400"/><polygon points="346.00,170.00 346.85,170.71 347.65,171.41 348.40,172.08 349.09,172.75 349.74,173.39 350.33,174.01 350.86,174.62 351.35,175.21 351.78,175.79 352.15,176.34 352.31,176.63 352.39,176.95 352.38,177.27 352.29,177.59 352.11,177.87 351.88,178.09 351.59,178.25 351.27,178.32 350.95,178.31 350.63,178.22 350.36,178.05 350.13,177.81 349.72,177.28 349.31,176.69 348.89,176.05 348.48,175.35 348.07,174.60 347.65,173.79 347.24,172.93 346.83,172.01 346.41,171.03" fill="#c93400"/><polygon points="346.00,170.00 345.59,171.03 345.17,172.01 344.76,172.93 344.35,173.79 343.93,174.60 343.52,175.35 343.11,176.05 342.69,176.69 342.28,177.28 341.87,177.81 341.64,178.05 341.37,178.22 341.05,178.31 340.73,178.32 340.41,178.25 340.12,178.09 339.89,177.87 339.71,177.59 339.62,177.27 339.61,176.95 339.69,176.63 339.85,176.34 340.22,175.79 340.65,175.21 341.14,174.62 341.67,174.01 342.26,173.39 342.91,172.75 343.60,172.08 344.35,171.41 345.15,170.71" fill="#c93400"/><polygon points="346.00,170.00 344.89,169.93 343.84,169.83 342.83,169.72 341.88,169.60 340.99,169.46 340.14,169.29 339.35,169.12 338.61,168.92 337.93,168.71 337.29,168.48 337.00,168.34 336.75,168.13 336.56,167.86 336.46,167.56 336.43,167.23 336.49,166.91 336.63,166.62 336.84,166.37 337.11,166.18 337.42,166.07 337.74,166.05 338.06,166.11 338.71,166.29 339.39,166.53 340.10,166.80 340.85,167.13 341.62,167.49 342.43,167.91 343.28,168.36 344.15,168.86 345.06,169.41" fill="#c93400"/>
<polygon points="404.00,173.50 403.73,172.10 403.49,170.74 403.28,169.44 403.11,168.19 402.97,166.99 402.86,165.84 402.78,164.74 402.74,163.69 402.73,162.70 402.75,161.75 402.79,161.43 402.92,161.12 403.12,160.87 403.38,160.67 403.68,160.54 404.00,160.50 404.32,160.54 404.62,160.67 404.88,160.87 405.08,161.12 405.21,161.43 405.25,161.75 405.27,162.70 405.26,163.69 405.22,164.74 405.14,165.84 405.03,166.99 404.89,168.19 404.72,169.44 404.51,170.74 404.27,172.10" fill="#3e6a8d"/><polygon points="404.00,173.50 405.25,172.81 406.47,172.16 407.64,171.56 408.78,171.01 409.88,170.51 410.93,170.05 411.96,169.64 412.94,169.27 413.88,168.95 414.79,168.68 415.11,168.62 415.43,168.65 415.74,168.76 416.01,168.94 416.22,169.19 416.36,169.48 416.42,169.80 416.40,170.13 416.29,170.44 416.10,170.71 415.86,170.92 415.56,171.06 414.67,171.37 413.72,171.67 412.71,171.95 411.64,172.22 410.51,172.47 409.33,172.70 408.08,172.93 406.78,173.13 405.42,173.32" fill="#3e6a8d"/><polygon points="404.00,173.50 405.04,174.48 406.03,175.43 406.97,176.36 407.84,177.27 408.66,178.16 409.43,179.03 410.13,179.87 410.78,180.69 411.38,181.49 411.92,182.27 412.07,182.56 412.15,182.88 412.14,183.20 412.05,183.51 411.88,183.79 411.64,184.02 411.35,184.17 411.04,184.25 410.71,184.24 410.40,184.15 410.12,183.98 409.90,183.74 409.32,182.99 408.75,182.18 408.17,181.30 407.58,180.37 406.99,179.37 406.40,178.32 405.81,177.21 405.21,176.03 404.61,174.80" fill="#3e6a8d"/><polygon points="404.00,173.50 403.39,174.80 402.79,176.03 402.19,177.21 401.60,178.32 401.01,179.37 400.42,180.37 399.83,181.30 399.25,182.18 398.68,182.99 398.10,183.74 397.88,183.98 397.60,184.15 397.29,184.24 396.96,184.25 396.65,184.17 396.36,184.02 396.12,183.79 395.95,183.51 395.86,183.20 395.85,182.88 395.93,182.56 396.08,182.27 396.62,181.49 397.22,180.69 397.87,179.87 398.57,179.03 399.34,178.16 400.16,177.27 401.03,176.36 401.97,175.43 402.96,174.48" fill="#3e6a8d"/><polygon points="404.00,173.50 402.58,173.32 401.22,173.13 399.92,172.93 398.67,172.70 397.49,172.47 396.36,172.22 395.29,171.95 394.28,171.67 393.33,171.37 392.44,171.06 392.14,170.92 391.90,170.71 391.71,170.44 391.60,170.13 391.58,169.80 391.64,169.48 391.78,169.19 391.99,168.94 392.26,168.76 392.57,168.65 392.89,168.62 393.21,168.68 394.12,168.95 395.06,169.27 396.04,169.64 397.07,170.05 398.12,170.51 399.22,171.01 400.36,171.56 401.53,172.16 402.75,172.81" fill="#3e6a8d"/>
<polygon points="453.80,173.50 453.53,172.20 453.29,170.96 453.08,169.76 452.91,168.61 452.77,167.51 452.66,166.46 452.58,165.46 452.54,164.51 452.53,163.60 452.55,162.75 452.59,162.43 452.72,162.12 452.92,161.87 453.18,161.67 453.48,161.54 453.80,161.50 454.12,161.54 454.43,161.67 454.68,161.87 454.88,162.12 455.01,162.43 455.05,162.75 455.07,163.60 455.06,164.51 455.02,165.46 454.94,166.46 454.83,167.51 454.69,168.61 454.52,169.76 454.31,170.96 454.07,172.20" fill="#c93400"/><polygon points="453.80,173.50 454.95,172.84 456.06,172.23 457.14,171.66 458.17,171.14 459.18,170.67 460.14,170.24 461.07,169.86 461.96,169.52 462.82,169.23 463.64,168.99 463.96,168.93 464.28,168.96 464.59,169.06 464.86,169.25 465.07,169.50 465.21,169.79 465.27,170.11 465.25,170.44 465.14,170.75 464.95,171.01 464.70,171.23 464.41,171.37 463.60,171.65 462.74,171.92 461.82,172.17 460.85,172.41 459.81,172.63 458.72,172.84 457.58,173.03 456.38,173.20 455.12,173.36" fill="#c93400"/><polygon points="453.80,173.50 454.78,174.39 455.71,175.26 456.58,176.10 457.39,176.93 458.15,177.74 458.86,178.52 459.51,179.29 460.10,180.03 460.64,180.76 461.13,181.46 461.29,181.75 461.36,182.07 461.35,182.39 461.26,182.71 461.09,182.98 460.85,183.21 460.57,183.36 460.25,183.44 459.92,183.43 459.61,183.34 459.33,183.17 459.11,182.93 458.59,182.25 458.07,181.52 457.54,180.72 457.01,179.86 456.49,178.95 455.95,177.98 455.42,176.95 454.88,175.86 454.34,174.71" fill="#c93400"/><polygon points="453.80,173.50 453.26,174.71 452.72,175.86 452.18,176.95 451.65,177.98 451.11,178.95 450.59,179.86 450.06,180.72 449.53,181.52 449.01,182.25 448.49,182.93 448.27,183.17 447.99,183.34 447.68,183.43 447.35,183.44 447.03,183.36 446.75,183.21 446.51,182.98 446.34,182.71 446.25,182.39 446.24,182.07 446.31,181.75 446.47,181.46 446.96,180.76 447.50,180.03 448.09,179.29 448.74,178.52 449.45,177.74 450.21,176.93 451.02,176.10 451.89,175.26 452.82,174.39" fill="#c93400"/><polygon points="453.80,173.50 452.48,173.36 451.22,173.20 450.02,173.03 448.88,172.84 447.79,172.63 446.75,172.41 445.78,172.17 444.86,171.92 444.00,171.65 443.19,171.37 442.90,171.23 442.65,171.01 442.46,170.75 442.35,170.44 442.33,170.11 442.39,169.79 442.53,169.50 442.74,169.25 443.01,169.06 443.32,168.96 443.64,168.93 443.96,168.99 444.78,169.23 445.64,169.52 446.53,169.86 447.46,170.24 448.42,170.67 449.43,171.14 450.46,171.66 451.54,172.23 452.65,172.84" fill="#c93400"/>
<polygon points="419.70,195.20 419.43,194.01 419.19,192.87 418.98,191.78 418.81,190.74 418.67,189.74 418.56,188.79 418.48,187.88 418.44,187.02 418.43,186.21 418.45,185.45 418.49,185.13 418.62,184.82 418.82,184.57 419.07,184.37 419.38,184.24 419.70,184.20 420.02,184.24 420.32,184.37 420.58,184.57 420.78,184.82 420.91,185.13 420.95,185.45 420.97,186.21 420.96,187.02 420.92,187.88 420.84,188.79 420.73,189.74 420.59,190.74 420.42,191.78 420.21,192.87 419.97,194.01" fill="#3e6a8d"/><polygon points="419.70,195.20 420.74,194.58 421.75,194.00 422.73,193.46 423.67,192.97 424.58,192.53 425.45,192.13 426.28,191.78 427.09,191.48 427.85,191.21 428.59,191.00 428.91,190.94 429.23,190.96 429.54,191.07 429.81,191.26 430.02,191.51 430.16,191.80 430.22,192.12 430.20,192.45 430.09,192.75 429.90,193.02 429.65,193.24 429.36,193.38 428.64,193.63 427.87,193.87 427.04,194.10 426.15,194.30 425.21,194.49 424.22,194.67 423.17,194.82 422.07,194.97 420.91,195.09" fill="#3e6a8d"/><polygon points="419.70,195.20 420.62,196.00 421.48,196.78 422.29,197.54 423.04,198.29 423.75,199.01 424.39,199.72 424.99,200.41 425.53,201.07 426.01,201.72 426.44,202.35 426.60,202.64 426.67,202.96 426.67,203.28 426.57,203.60 426.40,203.87 426.17,204.10 425.88,204.25 425.56,204.33 425.24,204.32 424.92,204.23 424.64,204.06 424.42,203.82 423.95,203.22 423.49,202.56 423.02,201.84 422.55,201.06 422.08,200.23 421.60,199.33 421.13,198.39 420.65,197.38 420.18,196.32" fill="#3e6a8d"/><polygon points="419.70,195.20 419.22,196.32 418.75,197.38 418.27,198.39 417.80,199.33 417.32,200.23 416.85,201.06 416.38,201.84 415.91,202.56 415.45,203.22 414.98,203.82 414.76,204.06 414.48,204.23 414.16,204.32 413.84,204.33 413.52,204.25 413.23,204.10 413.00,203.87 412.83,203.60 412.73,203.28 412.73,202.96 412.80,202.64 412.96,202.35 413.39,201.72 413.87,201.07 414.41,200.41 415.01,199.72 415.65,199.01 416.36,198.29 417.11,197.54 417.92,196.78 418.78,196.00" fill="#3e6a8d"/><polygon points="419.70,195.20 418.49,195.09 417.33,194.97 416.23,194.82 415.18,194.67 414.19,194.49 413.25,194.30 412.36,194.10 411.53,193.87 410.76,193.63 410.04,193.38 409.75,193.24 409.50,193.02 409.31,192.75 409.20,192.45 409.18,192.12 409.24,191.80 409.38,191.51 409.59,191.26 409.86,191.07 410.17,190.96 410.49,190.94 410.81,191.00 411.55,191.21 412.31,191.48 413.12,191.78 413.95,192.13 414.82,192.53 415.73,192.97 416.67,193.46 417.65,194.00 418.66,194.58" fill="#3e6a8d"/>
<polygon points="427.00,227.00 426.73,225.92 426.49,224.89 426.28,223.90 426.11,222.96 425.97,222.06 425.86,221.21 425.78,220.40 425.74,219.64 425.73,218.92 425.75,218.25 425.79,217.93 425.92,217.62 426.12,217.37 426.38,217.17 426.68,217.04 427.00,217.00 427.32,217.04 427.62,217.17 427.88,217.37 428.08,217.62 428.21,217.93 428.25,218.25 428.27,218.92 428.26,219.64 428.22,220.40 428.14,221.21 428.03,222.06 427.89,222.96 427.72,223.90 427.51,224.89 427.27,225.92" fill="#3e6a8d"/><polygon points="427.00,227.00 427.94,226.41 428.85,225.86 429.72,225.36 430.57,224.91 431.38,224.49 432.15,224.13 432.90,223.80 433.61,223.53 434.29,223.29 434.94,223.11 435.26,223.05 435.58,223.07 435.89,223.18 436.16,223.37 436.37,223.62 436.51,223.91 436.57,224.23 436.54,224.56 436.44,224.86 436.25,225.13 436.00,225.34 435.71,225.48 435.07,225.71 434.39,225.92 433.65,226.12 432.86,226.29 432.01,226.46 431.12,226.60 430.17,226.72 429.16,226.83 428.11,226.93" fill="#3e6a8d"/><polygon points="427.00,227.00 427.85,227.71 428.65,228.41 429.40,229.08 430.09,229.75 430.74,230.39 431.33,231.01 431.86,231.62 432.35,232.21 432.78,232.79 433.15,233.34 433.31,233.63 433.39,233.95 433.38,234.27 433.29,234.59 433.11,234.87 432.88,235.09 432.59,235.25 432.27,235.32 431.95,235.31 431.63,235.22 431.36,235.05 431.13,234.81 430.72,234.28 430.31,233.69 429.89,233.05 429.48,232.35 429.07,231.60 428.65,230.79 428.24,229.93 427.83,229.01 427.41,228.03" fill="#3e6a8d"/><polygon points="427.00,227.00 426.59,228.03 426.17,229.01 425.76,229.93 425.35,230.79 424.93,231.60 424.52,232.35 424.11,233.05 423.69,233.69 423.28,234.28 422.87,234.81 422.64,235.05 422.37,235.22 422.05,235.31 421.73,235.32 421.41,235.25 421.12,235.09 420.89,234.87 420.71,234.59 420.62,234.27 420.61,233.95 420.69,233.63 420.85,233.34 421.22,232.79 421.65,232.21 422.14,231.62 422.67,231.01 423.26,230.39 423.91,229.75 424.60,229.08 425.35,228.41 426.15,227.71" fill="#3e6a8d"/><polygon points="427.00,227.00 425.89,226.93 424.84,226.83 423.83,226.72 422.88,226.60 421.99,226.46 421.14,226.29 420.35,226.12 419.61,225.92 418.93,225.71 418.29,225.48 418.00,225.34 417.75,225.13 417.56,224.86 417.46,224.56 417.43,224.23 417.49,223.91 417.63,223.62 417.84,223.37 418.11,223.18 418.42,223.07 418.74,223.05 419.06,223.11 419.71,223.29 420.39,223.53 421.10,223.80 421.85,224.13 422.62,224.49 423.43,224.91 424.28,225.36 425.15,225.86 426.06,226.41" fill="#3e6a8d"/>
<polygon points="449.70,231.40 449.43,230.10 449.19,228.86 448.98,227.66 448.81,226.51 448.67,225.41 448.56,224.36 448.48,223.36 448.44,222.41 448.43,221.50 448.45,220.65 448.49,220.33 448.62,220.03 448.82,219.77 449.07,219.57 449.38,219.44 449.70,219.40 450.02,219.44 450.32,219.57 450.58,219.77 450.78,220.03 450.91,220.33 450.95,220.65 450.97,221.50 450.96,222.41 450.92,223.36 450.84,224.36 450.73,225.41 450.59,226.51 450.42,227.66 450.21,228.86 449.97,230.10" fill="#b3c9cd"/><polygon points="449.70,231.40 450.85,230.74 451.96,230.13 453.04,229.56 454.07,229.04 455.08,228.57 456.04,228.14 456.97,227.76 457.86,227.42 458.72,227.13 459.54,226.89 459.86,226.83 460.18,226.86 460.49,226.96 460.76,227.15 460.97,227.40 461.11,227.69 461.17,228.01 461.15,228.34 461.04,228.65 460.85,228.91 460.60,229.13 460.31,229.27 459.50,229.55 458.64,229.82 457.72,230.07 456.75,230.31 455.71,230.53 454.62,230.74 453.48,230.93 452.28,231.10 451.02,231.26" fill="#b3c9cd"/><polygon points="449.70,231.40 450.68,232.29 451.61,233.16 452.48,234.00 453.29,234.83 454.05,235.64 454.76,236.42 455.41,237.19 456.00,237.93 456.54,238.66 457.03,239.36 457.19,239.65 457.26,239.97 457.25,240.29 457.16,240.61 456.99,240.88 456.75,241.11 456.47,241.26 456.15,241.34 455.82,241.33 455.51,241.24 455.23,241.07 455.01,240.83 454.49,240.15 453.97,239.42 453.44,238.62 452.91,237.76 452.39,236.85 451.85,235.88 451.32,234.85 450.78,233.76 450.24,232.61" fill="#b3c9cd"/><polygon points="449.70,231.40 449.16,232.61 448.62,233.76 448.08,234.85 447.55,235.88 447.01,236.85 446.49,237.76 445.96,238.62 445.43,239.42 444.91,240.15 444.39,240.83 444.17,241.07 443.89,241.24 443.58,241.33 443.25,241.34 442.93,241.26 442.65,241.11 442.41,240.88 442.24,240.61 442.15,240.29 442.14,239.97 442.21,239.65 442.37,239.36 442.86,238.66 443.40,237.93 443.99,237.19 444.64,236.42 445.35,235.64 446.11,234.83 446.92,234.00 447.79,233.16 448.72,232.29" fill="#b3c9cd"/><polygon points="449.70,231.40 448.38,231.26 447.12,231.10 445.92,230.93 444.78,230.74 443.69,230.53 442.65,230.31 441.68,230.07 440.76,229.82 439.90,229.55 439.09,229.27 438.80,229.13 438.55,228.91 438.36,228.65 438.25,228.34 438.23,228.01 438.29,227.69 438.43,227.40 438.64,227.15 438.91,226.96 439.22,226.86 439.54,226.83 439.86,226.89 440.68,227.13 441.54,227.42 442.43,227.76 443.36,228.14 444.32,228.57 445.33,229.04 446.36,229.56 447.44,230.13 448.55,230.74" fill="#b3c9cd"/>
<polygon points="431.00,257.20 430.73,255.90 430.49,254.66 430.28,253.46 430.11,252.31 429.97,251.21 429.86,250.16 429.78,249.16 429.74,248.21 429.73,247.30 429.75,246.45 429.79,246.13 429.92,245.82 430.12,245.57 430.38,245.37 430.68,245.24 431.00,245.20 431.32,245.24 431.62,245.37 431.88,245.57 432.08,245.82 432.21,246.13 432.25,246.45 432.27,247.30 432.26,248.21 432.22,249.16 432.14,250.16 432.03,251.21 431.89,252.31 431.72,253.46 431.51,254.66 431.27,255.90" fill="#b3c9cd"/><polygon points="431.00,257.20 432.15,256.54 433.26,255.93 434.34,255.36 435.37,254.84 436.38,254.37 437.34,253.94 438.27,253.56 439.16,253.22 440.02,252.93 440.84,252.69 441.16,252.63 441.48,252.66 441.79,252.76 442.06,252.95 442.27,253.20 442.41,253.49 442.47,253.81 442.45,254.14 442.34,254.45 442.15,254.71 441.90,254.93 441.61,255.07 440.80,255.35 439.94,255.62 439.02,255.87 438.05,256.11 437.01,256.33 435.92,256.54 434.78,256.73 433.58,256.90 432.32,257.06" fill="#b3c9cd"/><polygon points="431.00,257.20 431.98,258.09 432.91,258.96 433.78,259.80 434.59,260.63 435.35,261.44 436.06,262.22 436.71,262.99 437.30,263.73 437.84,264.46 438.33,265.16 438.49,265.45 438.56,265.77 438.55,266.09 438.46,266.41 438.29,266.68 438.05,266.91 437.77,267.06 437.45,267.14 437.12,267.13 436.81,267.04 436.53,266.87 436.31,266.63 435.79,265.95 435.27,265.22 434.74,264.42 434.21,263.56 433.69,262.65 433.15,261.68 432.62,260.65 432.08,259.56 431.54,258.41" fill="#b3c9cd"/><polygon points="431.00,257.20 430.46,258.41 429.92,259.56 429.38,260.65 428.85,261.68 428.31,262.65 427.79,263.56 427.26,264.42 426.73,265.22 426.21,265.95 425.69,266.63 425.47,266.87 425.19,267.04 424.88,267.13 424.55,267.14 424.23,267.06 423.95,266.91 423.71,266.68 423.54,266.41 423.45,266.09 423.44,265.77 423.51,265.45 423.67,265.16 424.16,264.46 424.70,263.73 425.29,262.99 425.94,262.22 426.65,261.44 427.41,260.63 428.22,259.80 429.09,258.96 430.02,258.09" fill="#b3c9cd"/><polygon points="431.00,257.20 429.68,257.06 428.42,256.90 427.22,256.73 426.08,256.54 424.99,256.33 423.95,256.11 422.98,255.87 422.06,255.62 421.20,255.35 420.39,255.07 420.10,254.93 419.85,254.71 419.66,254.45 419.55,254.14 419.53,253.81 419.59,253.49 419.73,253.20 419.94,252.95 420.21,252.76 420.52,252.66 420.84,252.63 421.16,252.69 421.98,252.93 422.84,253.22 423.73,253.56 424.66,253.94 425.62,254.37 426.63,254.84 427.66,255.36 428.74,255.93 429.85,256.54" fill="#b3c9cd"/>
<polygon points="460.70,199.30 460.43,198.00 460.19,196.76 459.98,195.56 459.81,194.41 459.67,193.31 459.56,192.26 459.48,191.26 459.44,190.31 459.43,189.40 459.45,188.55 459.49,188.23 459.62,187.93 459.82,187.67 460.07,187.47 460.38,187.34 460.70,187.30 461.02,187.34 461.32,187.47 461.58,187.67 461.78,187.93 461.91,188.23 461.95,188.55 461.97,189.40 461.96,190.31 461.92,191.26 461.84,192.26 461.73,193.31 461.59,194.41 461.42,195.56 461.21,196.76 460.97,198.00" fill="#b3c9cd"/><polygon points="460.70,199.30 461.85,198.64 462.96,198.03 464.04,197.46 465.07,196.94 466.08,196.47 467.04,196.04 467.97,195.66 468.86,195.32 469.72,195.03 470.54,194.79 470.86,194.73 471.18,194.76 471.49,194.86 471.76,195.05 471.97,195.30 472.11,195.59 472.17,195.91 472.15,196.24 472.04,196.55 471.85,196.81 471.60,197.03 471.31,197.17 470.50,197.45 469.64,197.72 468.72,197.97 467.75,198.21 466.71,198.43 465.62,198.64 464.48,198.83 463.28,199.00 462.02,199.16" fill="#b3c9cd"/><polygon points="460.70,199.30 461.68,200.19 462.61,201.06 463.48,201.90 464.29,202.73 465.05,203.54 465.76,204.32 466.41,205.09 467.00,205.83 467.54,206.56 468.03,207.26 468.19,207.55 468.26,207.87 468.25,208.19 468.16,208.51 467.99,208.78 467.75,209.01 467.47,209.16 467.15,209.24 466.82,209.23 466.51,209.14 466.23,208.97 466.01,208.73 465.49,208.05 464.97,207.32 464.44,206.52 463.91,205.66 463.39,204.75 462.85,203.78 462.32,202.75 461.78,201.66 461.24,200.51" fill="#b3c9cd"/><polygon points="460.70,199.30 460.16,200.51 459.62,201.66 459.08,202.75 458.55,203.78 458.01,204.75 457.49,205.66 456.96,206.52 456.43,207.32 455.91,208.05 455.39,208.73 455.17,208.97 454.89,209.14 454.58,209.23 454.25,209.24 453.93,209.16 453.65,209.01 453.41,208.78 453.24,208.51 453.15,208.19 453.14,207.87 453.21,207.55 453.37,207.26 453.86,206.56 454.40,205.83 454.99,205.09 455.64,204.32 456.35,203.54 457.11,202.73 457.92,201.90 458.79,201.06 459.72,200.19" fill="#b3c9cd"/><polygon points="460.70,199.30 459.38,199.16 458.12,199.00 456.92,198.83 455.78,198.64 454.69,198.43 453.65,198.21 452.68,197.97 451.76,197.72 450.90,197.45 450.09,197.17 449.80,197.03 449.55,196.81 449.36,196.55 449.25,196.24 449.23,195.91 449.29,195.59 449.43,195.30 449.64,195.05 449.91,194.86 450.22,194.76 450.54,194.73 450.86,194.79 451.68,195.03 452.54,195.32 453.43,195.66 454.36,196.04 455.32,196.47 456.33,196.94 457.36,197.46 458.44,198.03 459.55,198.64" fill="#b3c9cd"/>
<polygon points="321.00,162.50 320.73,161.53 320.49,160.61 320.28,159.72 320.11,158.88 319.97,158.09 319.86,157.33 319.78,156.62 319.74,155.96 319.73,155.33 319.75,154.75 319.79,154.43 319.92,154.12 320.12,153.87 320.38,153.67 320.68,153.54 321.00,153.50 321.32,153.54 321.62,153.67 321.88,153.87 322.08,154.12 322.21,154.43 322.25,154.75 322.27,155.33 322.26,155.96 322.22,156.62 322.14,157.33 322.03,158.09 321.89,158.88 321.72,159.72 321.51,160.61 321.27,161.53" fill="#3e6a8d"/><polygon points="321.00,162.50 321.84,161.94 322.64,161.43 323.42,160.96 324.16,160.54 324.88,160.16 325.56,159.82 326.21,159.53 326.83,159.28 327.42,159.08 327.98,158.92 328.31,158.86 328.63,158.88 328.94,158.99 329.21,159.18 329.42,159.42 329.56,159.72 329.62,160.04 329.59,160.37 329.48,160.67 329.30,160.94 329.05,161.15 328.76,161.29 328.21,161.49 327.61,161.68 326.96,161.84 326.27,161.99 325.52,162.12 324.71,162.23 323.86,162.32 322.96,162.40 322.00,162.46" fill="#3e6a8d"/><polygon points="321.00,162.50 321.79,163.12 322.53,163.73 323.21,164.33 323.85,164.90 324.43,165.46 324.96,166.01 325.44,166.54 325.87,167.05 326.24,167.55 326.57,168.04 326.72,168.32 326.80,168.64 326.79,168.97 326.70,169.28 326.53,169.56 326.29,169.78 326.00,169.94 325.69,170.01 325.36,170.00 325.05,169.91 324.77,169.74 324.54,169.50 324.19,169.05 323.83,168.53 323.47,167.97 323.11,167.35 322.76,166.68 322.41,165.95 322.05,165.17 321.70,164.33 321.35,163.44" fill="#3e6a8d"/><polygon points="321.00,162.50 320.65,163.44 320.30,164.33 319.95,165.17 319.59,165.95 319.24,166.68 318.89,167.35 318.53,167.97 318.17,168.53 317.81,169.05 317.46,169.50 317.23,169.74 316.95,169.91 316.64,170.00 316.31,170.01 316.00,169.94 315.71,169.78 315.47,169.56 315.30,169.28 315.21,168.97 315.20,168.64 315.28,168.32 315.43,168.04 315.76,167.55 316.13,167.05 316.56,166.54 317.04,166.01 317.57,165.46 318.15,164.90 318.79,164.33 319.47,163.73 320.21,163.12" fill="#3e6a8d"/><polygon points="321.00,162.50 320.00,162.46 319.04,162.40 318.14,162.32 317.29,162.23 316.48,162.12 315.73,161.99 315.04,161.84 314.39,161.68 313.79,161.49 313.24,161.29 312.95,161.15 312.70,160.94 312.52,160.67 312.41,160.37 312.38,160.04 312.44,159.72 312.58,159.42 312.79,159.18 313.06,158.99 313.37,158.88 313.69,158.86 314.02,158.92 314.58,159.08 315.17,159.28 315.79,159.53 316.44,159.82 317.12,160.16 317.84,160.54 318.58,160.96 319.36,161.43 320.16,161.94" fill="#3e6a8d"/>
<polygon points="576.60,123.80 576.33,122.72 576.09,121.69 575.88,120.70 575.71,119.76 575.57,118.86 575.46,118.01 575.38,117.20 575.34,116.44 575.33,115.72 575.35,115.05 575.39,114.73 575.52,114.42 575.72,114.17 575.98,113.97 576.28,113.84 576.60,113.80 576.92,113.84 577.23,113.97 577.48,114.17 577.68,114.42 577.81,114.73 577.85,115.05 577.87,115.72 577.86,116.44 577.82,117.20 577.74,118.01 577.63,118.86 577.49,119.76 577.32,120.70 577.11,121.69 576.87,122.72" fill="#b3c9cd"/><polygon points="576.60,123.80 577.54,123.21 578.45,122.66 579.32,122.16 580.17,121.71 580.98,121.29 581.75,120.93 582.50,120.60 583.21,120.33 583.89,120.09 584.54,119.91 584.86,119.85 585.18,119.87 585.49,119.98 585.76,120.17 585.97,120.42 586.11,120.71 586.17,121.03 586.14,121.36 586.04,121.66 585.85,121.93 585.60,122.14 585.31,122.28 584.67,122.51 583.99,122.72 583.25,122.92 582.46,123.09 581.61,123.26 580.72,123.40 579.77,123.52 578.76,123.63 577.71,123.73" fill="#b3c9cd"/><polygon points="576.60,123.80 577.45,124.51 578.25,125.21 579.00,125.88 579.69,126.55 580.34,127.19 580.93,127.81 581.46,128.42 581.95,129.01 582.38,129.59 582.75,130.14 582.91,130.43 582.99,130.75 582.98,131.07 582.89,131.39 582.71,131.67 582.48,131.89 582.19,132.05 581.87,132.12 581.55,132.11 581.23,132.02 580.96,131.85 580.73,131.61 580.32,131.08 579.91,130.49 579.49,129.85 579.08,129.15 578.67,128.40 578.25,127.59 577.84,126.73 577.43,125.81 577.01,124.83" fill="#b3c9cd"/><polygon points="576.60,123.80 576.19,124.83 575.77,125.81 575.36,126.73 574.95,127.59 574.53,128.40 574.12,129.15 573.71,129.85 573.29,130.49 572.88,131.08 572.47,131.61 572.24,131.85 571.97,132.02 571.65,132.11 571.33,132.12 571.01,132.05 570.72,131.89 570.49,131.67 570.31,131.39 570.22,131.07 570.21,130.75 570.29,130.43 570.45,130.14 570.82,129.59 571.25,129.01 571.74,128.42 572.27,127.81 572.86,127.19 573.51,126.55 574.20,125.88 574.95,125.21 575.75,124.51" fill="#b3c9cd"/><polygon points="576.60,123.80 575.49,123.73 574.44,123.63 573.43,123.52 572.48,123.40 571.59,123.26 570.74,123.09 569.95,122.92 569.21,122.72 568.53,122.51 567.89,122.28 567.60,122.14 567.35,121.93 567.16,121.66 567.06,121.36 567.03,121.03 567.09,120.71 567.23,120.42 567.44,120.17 567.71,119.98 568.02,119.87 568.34,119.85 568.66,119.91 569.31,120.09 569.99,120.33 570.70,120.60 571.45,120.93 572.22,121.29 573.03,121.71 573.88,122.16 574.75,122.66 575.66,123.21" fill="#b3c9cd"/>
<polygon points="538.30,151.70 538.03,150.40 537.79,149.16 537.58,147.96 537.41,146.81 537.27,145.71 537.16,144.66 537.08,143.66 537.04,142.71 537.03,141.80 537.05,140.95 537.09,140.63 537.22,140.32 537.42,140.07 537.67,139.87 537.98,139.74 538.30,139.70 538.62,139.74 538.92,139.87 539.18,140.07 539.38,140.32 539.51,140.63 539.55,140.95 539.57,141.80 539.56,142.71 539.52,143.66 539.44,144.66 539.33,145.71 539.19,146.81 539.02,147.96 538.81,149.16 538.57,150.40" fill="#c93400"/><polygon points="538.30,151.70 539.45,151.04 540.56,150.43 541.64,149.86 542.67,149.34 543.68,148.87 544.64,148.44 545.57,148.06 546.46,147.72 547.32,147.43 548.14,147.19 548.46,147.13 548.78,147.16 549.09,147.26 549.36,147.45 549.57,147.70 549.71,147.99 549.77,148.31 549.75,148.64 549.64,148.95 549.45,149.21 549.20,149.43 548.91,149.57 548.10,149.85 547.24,150.12 546.32,150.37 545.35,150.61 544.31,150.83 543.22,151.04 542.08,151.23 540.88,151.40 539.62,151.56" fill="#c93400"/><polygon points="538.30,151.70 539.28,152.59 540.21,153.46 541.08,154.30 541.89,155.13 542.65,155.94 543.36,156.72 544.01,157.49 544.60,158.23 545.14,158.96 545.63,159.66 545.79,159.95 545.86,160.27 545.85,160.59 545.76,160.91 545.59,161.18 545.35,161.41 545.07,161.56 544.75,161.64 544.42,161.63 544.11,161.54 543.83,161.37 543.61,161.13 543.09,160.45 542.57,159.72 542.04,158.92 541.51,158.06 540.99,157.15 540.45,156.18 539.92,155.15 539.38,154.06 538.84,152.91" fill="#c93400"/><polygon points="538.30,151.70 537.76,152.91 537.22,154.06 536.68,155.15 536.15,156.18 535.61,157.15 535.09,158.06 534.56,158.92 534.03,159.72 533.51,160.45 532.99,161.13 532.77,161.37 532.49,161.54 532.18,161.63 531.85,161.64 531.53,161.56 531.25,161.41 531.01,161.18 530.84,160.91 530.75,160.59 530.74,160.27 530.81,159.95 530.97,159.66 531.46,158.96 532.00,158.23 532.59,157.49 533.24,156.72 533.95,155.94 534.71,155.13 535.52,154.30 536.39,153.46 537.32,152.59" fill="#c93400"/><polygon points="538.30,151.70 536.98,151.56 535.72,151.40 534.52,151.23 533.38,151.04 532.29,150.83 531.25,150.61 530.28,150.37 529.36,150.12 528.50,149.85 527.69,149.57 527.40,149.43 527.15,149.21 526.96,148.95 526.85,148.64 526.83,148.31 526.89,147.99 527.03,147.70 527.24,147.45 527.51,147.26 527.82,147.16 528.14,147.13 528.46,147.19 529.28,147.43 530.14,147.72 531.03,148.06 531.96,148.44 532.92,148.87 533.93,149.34 534.96,149.86 536.04,150.43 537.15,151.04" fill="#c93400"/>
<polygon points="556.90,155.90 556.63,154.71 556.39,153.57 556.18,152.48 556.01,151.44 555.87,150.44 555.76,149.49 555.68,148.58 555.64,147.72 555.63,146.91 555.65,146.15 555.69,145.83 555.82,145.53 556.02,145.27 556.27,145.07 556.58,144.94 556.90,144.90 557.22,144.94 557.52,145.07 557.78,145.27 557.98,145.53 558.11,145.83 558.15,146.15 558.17,146.91 558.16,147.72 558.12,148.58 558.04,149.49 557.93,150.44 557.79,151.44 557.62,152.48 557.41,153.57 557.17,154.71" fill="#3e6a8d"/><polygon points="556.90,155.90 557.94,155.28 558.95,154.70 559.93,154.16 560.87,153.67 561.78,153.23 562.65,152.83 563.48,152.48 564.29,152.18 565.05,151.91 565.79,151.70 566.11,151.64 566.43,151.66 566.74,151.77 567.01,151.96 567.22,152.21 567.36,152.50 567.42,152.82 567.40,153.15 567.29,153.45 567.10,153.72 566.85,153.94 566.56,154.08 565.84,154.33 565.07,154.57 564.24,154.80 563.35,155.00 562.41,155.19 561.42,155.37 560.37,155.52 559.27,155.67 558.11,155.79" fill="#3e6a8d"/><polygon points="556.90,155.90 557.82,156.70 558.68,157.48 559.49,158.24 560.24,158.99 560.95,159.71 561.59,160.42 562.19,161.11 562.73,161.77 563.21,162.42 563.64,163.05 563.80,163.34 563.87,163.66 563.87,163.98 563.77,164.30 563.60,164.57 563.37,164.80 563.08,164.95 562.76,165.03 562.44,165.02 562.12,164.93 561.84,164.76 561.62,164.52 561.15,163.92 560.69,163.26 560.22,162.54 559.75,161.76 559.28,160.93 558.80,160.03 558.33,159.09 557.85,158.08 557.38,157.02" fill="#3e6a8d"/><polygon points="556.90,155.90 556.42,157.02 555.95,158.08 555.47,159.09 555.00,160.03 554.52,160.93 554.05,161.76 553.58,162.54 553.11,163.26 552.65,163.92 552.18,164.52 551.96,164.76 551.68,164.93 551.36,165.02 551.04,165.03 550.72,164.95 550.43,164.80 550.20,164.57 550.03,164.30 549.93,163.98 549.93,163.66 550.00,163.34 550.16,163.05 550.59,162.42 551.07,161.77 551.61,161.11 552.21,160.42 552.85,159.71 553.56,158.99 554.31,158.24 555.12,157.48 555.98,156.70" fill="#3e6a8d"/><polygon points="556.90,155.90 555.69,155.79 554.53,155.67 553.43,155.52 552.38,155.37 551.39,155.19 550.45,155.00 549.56,154.80 548.73,154.57 547.96,154.33 547.24,154.08 546.95,153.94 546.70,153.72 546.51,153.45 546.40,153.15 546.38,152.82 546.44,152.50 546.58,152.21 546.79,151.96 547.06,151.77 547.37,151.66 547.69,151.64 548.01,151.70 548.75,151.91 549.51,152.18 550.32,152.48 551.15,152.83 552.02,153.23 552.93,153.67 553.87,154.16 554.85,154.70 555.86,155.28" fill="#3e6a8d"/>
<polygon points="516.60,170.30 516.33,169.00 516.09,167.76 515.88,166.56 515.71,165.41 515.57,164.31 515.46,163.26 515.38,162.26 515.34,161.31 515.33,160.40 515.35,159.55 515.39,159.23 515.52,158.93 515.72,158.67 515.98,158.47 516.28,158.34 516.60,158.30 516.92,158.34 517.23,158.47 517.48,158.67 517.68,158.93 517.81,159.23 517.85,159.55 517.87,160.40 517.86,161.31 517.82,162.26 517.74,163.26 517.63,164.31 517.49,165.41 517.32,166.56 517.11,167.76 516.87,169.00" fill="#c93400"/><polygon points="516.60,170.30 517.75,169.64 518.86,169.03 519.94,168.46 520.97,167.94 521.98,167.47 522.94,167.04 523.87,166.66 524.76,166.32 525.62,166.03 526.44,165.79 526.76,165.73 527.08,165.76 527.39,165.86 527.66,166.05 527.87,166.30 528.01,166.59 528.07,166.91 528.05,167.24 527.94,167.55 527.75,167.81 527.50,168.03 527.21,168.17 526.40,168.45 525.54,168.72 524.62,168.97 523.65,169.21 522.61,169.43 521.52,169.64 520.38,169.83 519.18,170.00 517.92,170.16" fill="#c93400"/><polygon points="516.60,170.30 517.58,171.19 518.51,172.06 519.38,172.90 520.19,173.73 520.95,174.54 521.66,175.32 522.31,176.09 522.90,176.83 523.44,177.56 523.93,178.26 524.09,178.55 524.16,178.87 524.15,179.19 524.06,179.51 523.89,179.78 523.65,180.01 523.37,180.16 523.05,180.24 522.72,180.23 522.41,180.14 522.13,179.97 521.91,179.73 521.39,179.05 520.87,178.32 520.34,177.52 519.81,176.66 519.29,175.75 518.75,174.78 518.22,173.75 517.68,172.66 517.14,171.51" fill="#c93400"/><polygon points="516.60,170.30 516.06,171.51 515.52,172.66 514.98,173.75 514.45,174.78 513.91,175.75 513.39,176.66 512.86,177.52 512.33,178.32 511.81,179.05 511.29,179.73 511.07,179.97 510.79,180.14 510.48,180.23 510.15,180.24 509.83,180.16 509.55,180.01 509.31,179.78 509.14,179.51 509.05,179.19 509.04,178.87 509.11,178.55 509.27,178.26 509.76,177.56 510.30,176.83 510.89,176.09 511.54,175.32 512.25,174.54 513.01,173.73 513.82,172.90 514.69,172.06 515.62,171.19" fill="#c93400"/><polygon points="516.60,170.30 515.28,170.16 514.02,170.00 512.82,169.83 511.68,169.64 510.59,169.43 509.55,169.21 508.58,168.97 507.66,168.72 506.80,168.45 505.99,168.17 505.70,168.03 505.45,167.81 505.26,167.55 505.15,167.24 505.13,166.91 505.19,166.59 505.33,166.30 505.54,166.05 505.81,165.86 506.12,165.76 506.44,165.73 506.76,165.79 507.58,166.03 508.44,166.32 509.33,166.66 510.26,167.04 511.22,167.47 512.23,167.94 513.26,168.46 514.34,169.03 515.45,169.64" fill="#c93400"/>
<polygon points="585.90,177.60 585.63,176.20 585.39,174.84 585.18,173.54 585.01,172.29 584.87,171.09 584.76,169.94 584.68,168.84 584.64,167.79 584.63,166.80 584.65,165.85 584.69,165.53 584.82,165.22 585.02,164.97 585.27,164.77 585.58,164.64 585.90,164.60 586.22,164.64 586.52,164.77 586.78,164.97 586.98,165.22 587.11,165.53 587.15,165.85 587.17,166.80 587.16,167.79 587.12,168.84 587.04,169.94 586.93,171.09 586.79,172.29 586.62,173.54 586.41,174.84 586.17,176.20" fill="#3e6a8d"/><polygon points="585.90,177.60 587.15,176.91 588.37,176.26 589.54,175.66 590.68,175.11 591.78,174.61 592.83,174.15 593.86,173.74 594.84,173.37 595.78,173.05 596.69,172.78 597.01,172.72 597.33,172.75 597.64,172.86 597.91,173.04 598.12,173.29 598.26,173.58 598.32,173.90 598.30,174.23 598.19,174.54 598.00,174.81 597.76,175.02 597.46,175.16 596.57,175.47 595.62,175.77 594.61,176.05 593.54,176.32 592.41,176.57 591.23,176.80 589.98,177.03 588.68,177.23 587.32,177.42" fill="#3e6a8d"/><polygon points="585.90,177.60 586.94,178.58 587.93,179.53 588.87,180.46 589.74,181.37 590.56,182.26 591.33,183.13 592.03,183.97 592.68,184.79 593.28,185.59 593.82,186.37 593.97,186.66 594.05,186.98 594.04,187.30 593.95,187.61 593.78,187.89 593.54,188.12 593.25,188.27 592.94,188.35 592.61,188.34 592.30,188.25 592.02,188.08 591.80,187.84 591.22,187.09 590.65,186.28 590.07,185.40 589.48,184.47 588.89,183.47 588.30,182.42 587.71,181.31 587.11,180.13 586.51,178.90" fill="#3e6a8d"/><polygon points="585.90,177.60 585.29,178.90 584.69,180.13 584.09,181.31 583.50,182.42 582.91,183.47 582.32,184.47 581.73,185.40 581.15,186.28 580.58,187.09 580.00,187.84 579.78,188.08 579.50,188.25 579.19,188.34 578.86,188.35 578.55,188.27 578.26,188.12 578.02,187.89 577.85,187.61 577.76,187.30 577.75,186.98 577.83,186.66 577.98,186.37 578.52,185.59 579.12,184.79 579.77,183.97 580.47,183.13 581.24,182.26 582.06,181.37 582.93,180.46 583.87,179.53 584.86,178.58" fill="#3e6a8d"/><polygon points="585.90,177.60 584.48,177.42 583.12,177.23 581.82,177.03 580.57,176.80 579.39,176.57 578.26,176.32 577.19,176.05 576.18,175.77 575.23,175.47 574.34,175.16 574.04,175.02 573.80,174.81 573.61,174.54 573.50,174.23 573.48,173.90 573.54,173.58 573.68,173.29 573.89,173.04 574.16,172.86 574.47,172.75 574.79,172.72 575.11,172.78 576.02,173.05 576.96,173.37 577.94,173.74 578.97,174.15 580.02,174.61 581.12,175.11 582.26,175.66 583.43,176.26 584.65,176.91" fill="#3e6a8d"/>
<polygon points="489.20,196.20 488.93,195.01 488.69,193.87 488.48,192.78 488.31,191.74 488.17,190.74 488.06,189.79 487.98,188.88 487.94,188.02 487.93,187.21 487.95,186.45 487.99,186.13 488.12,185.82 488.32,185.57 488.57,185.37 488.88,185.24 489.20,185.20 489.52,185.24 489.82,185.37 490.08,185.57 490.28,185.82 490.41,186.13 490.45,186.45 490.47,187.21 490.46,188.02 490.42,188.88 490.34,189.79 490.23,190.74 490.09,191.74 489.92,192.78 489.71,193.87 489.47,195.01" fill="#3e6a8d"/><polygon points="489.20,196.20 490.24,195.58 491.25,195.00 492.23,194.46 493.17,193.97 494.08,193.53 494.95,193.13 495.78,192.78 496.59,192.48 497.35,192.21 498.09,192.00 498.41,191.94 498.73,191.96 499.04,192.07 499.31,192.26 499.52,192.51 499.66,192.80 499.72,193.12 499.70,193.45 499.59,193.75 499.40,194.02 499.15,194.24 498.86,194.38 498.14,194.63 497.37,194.87 496.54,195.10 495.65,195.30 494.71,195.49 493.72,195.67 492.67,195.82 491.57,195.97 490.41,196.09" fill="#3e6a8d"/><polygon points="489.20,196.20 490.12,197.00 490.98,197.78 491.79,198.54 492.54,199.29 493.25,200.01 493.89,200.72 494.49,201.41 495.03,202.07 495.51,202.72 495.94,203.35 496.10,203.64 496.17,203.96 496.17,204.28 496.07,204.60 495.90,204.87 495.67,205.10 495.38,205.25 495.06,205.33 494.74,205.32 494.42,205.23 494.14,205.06 493.92,204.82 493.45,204.22 492.99,203.56 492.52,202.84 492.05,202.06 491.58,201.23 491.10,200.33 490.63,199.39 490.15,198.38 489.68,197.32" fill="#3e6a8d"/><polygon points="489.20,196.20 488.72,197.32 488.25,198.38 487.77,199.39 487.30,200.33 486.82,201.23 486.35,202.06 485.88,202.84 485.41,203.56 484.95,204.22 484.48,204.82 484.26,205.06 483.98,205.23 483.66,205.32 483.34,205.33 483.02,205.25 482.73,205.10 482.50,204.87 482.33,204.60 482.23,204.28 482.23,203.96 482.30,203.64 482.46,203.35 482.89,202.72 483.37,202.07 483.91,201.41 484.51,200.72 485.15,200.01 485.86,199.29 486.61,198.54 487.42,197.78 488.28,197.00" fill="#3e6a8d"/><polygon points="489.20,196.20 487.99,196.09 486.83,195.97 485.73,195.82 484.68,195.67 483.69,195.49 482.75,195.30 481.86,195.10 481.03,194.87 480.26,194.63 479.54,194.38 479.25,194.24 479.00,194.02 478.81,193.75 478.70,193.45 478.68,193.12 478.74,192.80 478.88,192.51 479.09,192.26 479.36,192.07 479.67,191.96 479.99,191.94 480.31,192.00 481.05,192.21 481.81,192.48 482.62,192.78 483.45,193.13 484.32,193.53 485.23,193.97 486.17,194.46 487.15,195.00 488.16,195.58" fill="#3e6a8d"/>
<polygon points="544.50,193.00 544.23,192.03 543.99,191.11 543.78,190.22 543.61,189.38 543.47,188.59 543.36,187.83 543.28,187.12 543.24,186.46 543.23,185.83 543.25,185.25 543.29,184.93 543.42,184.62 543.62,184.37 543.88,184.17 544.18,184.04 544.50,184.00 544.82,184.04 545.12,184.17 545.38,184.37 545.58,184.62 545.71,184.93 545.75,185.25 545.77,185.83 545.76,186.46 545.72,187.12 545.64,187.83 545.53,188.59 545.39,189.38 545.22,190.22 545.01,191.11 544.77,192.03" fill="#c93400"/><polygon points="544.50,193.00 545.34,192.44 546.14,191.93 546.92,191.46 547.66,191.04 548.38,190.66 549.06,190.32 549.71,190.03 550.33,189.78 550.92,189.58 551.48,189.42 551.81,189.36 552.13,189.38 552.44,189.49 552.71,189.68 552.92,189.92 553.06,190.22 553.12,190.54 553.09,190.87 552.98,191.17 552.80,191.44 552.55,191.65 552.26,191.79 551.71,191.99 551.11,192.18 550.46,192.34 549.77,192.49 549.02,192.62 548.21,192.73 547.36,192.82 546.46,192.90 545.50,192.96" fill="#c93400"/><polygon points="544.50,193.00 545.29,193.62 546.03,194.23 546.71,194.83 547.35,195.40 547.93,195.96 548.46,196.51 548.94,197.04 549.37,197.55 549.74,198.05 550.07,198.54 550.22,198.82 550.30,199.14 550.29,199.47 550.20,199.78 550.03,200.06 549.79,200.28 549.50,200.44 549.19,200.51 548.86,200.50 548.55,200.41 548.27,200.24 548.04,200.00 547.69,199.55 547.33,199.03 546.97,198.47 546.61,197.85 546.26,197.18 545.91,196.45 545.55,195.67 545.20,194.83 544.85,193.94" fill="#c93400"/><polygon points="544.50,193.00 544.15,193.94 543.80,194.83 543.45,195.67 543.09,196.45 542.74,197.18 542.39,197.85 542.03,198.47 541.67,199.03 541.31,199.55 540.96,200.00 540.73,200.24 540.45,200.41 540.14,200.50 539.81,200.51 539.50,200.44 539.21,200.28 538.97,200.06 538.80,199.78 538.71,199.47 538.70,199.14 538.78,198.82 538.93,198.54 539.26,198.05 539.63,197.55 540.06,197.04 540.54,196.51 541.07,195.96 541.65,195.40 542.29,194.83 542.97,194.23 543.71,193.62" fill="#c93400"/><polygon points="544.50,193.00 543.50,192.96 542.54,192.90 541.64,192.82 540.79,192.73 539.98,192.62 539.23,192.49 538.54,192.34 537.89,192.18 537.29,191.99 536.74,191.79 536.45,191.65 536.20,191.44 536.02,191.17 535.91,190.87 535.88,190.54 535.94,190.22 536.08,189.92 536.29,189.68 536.56,189.49 536.87,189.38 537.19,189.36 537.52,189.42 538.08,189.58 538.67,189.78 539.29,190.03 539.94,190.32 540.62,190.66 541.34,191.04 542.08,191.46 542.86,191.93 543.66,192.44" fill="#c93400"/>
<polygon points="582.80,197.20 582.53,196.01 582.29,194.87 582.08,193.78 581.91,192.74 581.77,191.74 581.66,190.79 581.58,189.88 581.54,189.02 581.53,188.21 581.55,187.45 581.59,187.13 581.72,186.82 581.92,186.57 582.17,186.37 582.48,186.24 582.80,186.20 583.12,186.24 583.42,186.37 583.68,186.57 583.88,186.82 584.01,187.13 584.05,187.45 584.07,188.21 584.06,189.02 584.02,189.88 583.94,190.79 583.83,191.74 583.69,192.74 583.52,193.78 583.31,194.87 583.07,196.01" fill="#b3c9cd"/><polygon points="582.80,197.20 583.84,196.58 584.85,196.00 585.83,195.46 586.77,194.97 587.68,194.53 588.55,194.13 589.38,193.78 590.19,193.48 590.95,193.21 591.69,193.00 592.01,192.94 592.33,192.96 592.64,193.07 592.91,193.26 593.12,193.51 593.26,193.80 593.32,194.12 593.30,194.45 593.19,194.75 593.00,195.02 592.75,195.24 592.46,195.38 591.74,195.63 590.97,195.87 590.14,196.10 589.25,196.30 588.31,196.49 587.32,196.67 586.27,196.82 585.17,196.97 584.01,197.09" fill="#b3c9cd"/><polygon points="582.80,197.20 583.72,198.00 584.58,198.78 585.39,199.54 586.14,200.29 586.85,201.01 587.49,201.72 588.09,202.41 588.63,203.07 589.11,203.72 589.54,204.35 589.70,204.64 589.77,204.96 589.77,205.28 589.67,205.60 589.50,205.87 589.27,206.10 588.98,206.25 588.66,206.33 588.34,206.32 588.02,206.23 587.74,206.06 587.52,205.82 587.05,205.22 586.59,204.56 586.12,203.84 585.65,203.06 585.18,202.23 584.70,201.33 584.23,200.39 583.75,199.38 583.28,198.32" fill="#b3c9cd"/><polygon points="582.80,197.20 582.32,198.32 581.85,199.38 581.37,200.39 580.90,201.33 580.42,202.23 579.95,203.06 579.48,203.84 579.01,204.56 578.55,205.22 578.08,205.82 577.86,206.06 577.58,206.23 577.26,206.32 576.94,206.33 576.62,206.25 576.33,206.10 576.10,205.87 575.93,205.60 575.83,205.28 575.83,204.96 575.90,204.64 576.06,204.35 576.49,203.72 576.97,203.07 577.51,202.41 578.11,201.72 578.75,201.01 579.46,200.29 580.21,199.54 581.02,198.78 581.88,198.00" fill="#b3c9cd"/><polygon points="582.80,197.20 581.59,197.09 580.43,196.97 579.33,196.82 578.28,196.67 577.29,196.49 576.35,196.30 575.46,196.10 574.63,195.87 573.86,195.63 573.14,195.38 572.85,195.24 572.60,195.02 572.41,194.75 572.30,194.45 572.28,194.12 572.34,193.80 572.48,193.51 572.69,193.26 572.96,193.07 573.27,192.96 573.59,192.94 573.91,193.00 574.65,193.21 575.41,193.48 576.22,193.78 577.05,194.13 577.92,194.53 578.83,194.97 579.77,195.46 580.75,196.00 581.76,196.58" fill="#b3c9cd"/>
<polygon points="608.60,201.40 608.33,200.21 608.09,199.07 607.88,197.98 607.71,196.94 607.57,195.94 607.46,194.99 607.38,194.08 607.34,193.22 607.33,192.41 607.35,191.65 607.39,191.33 607.52,191.03 607.72,190.77 607.98,190.57 608.28,190.44 608.60,190.40 608.92,190.44 609.23,190.57 609.48,190.77 609.68,191.03 609.81,191.33 609.85,191.65 609.87,192.41 609.86,193.22 609.82,194.08 609.74,194.99 609.63,195.94 609.49,196.94 609.32,197.98 609.11,199.07 608.87,200.21" fill="#b3c9cd"/><polygon points="608.60,201.40 609.64,200.78 610.65,200.20 611.63,199.66 612.57,199.17 613.48,198.73 614.35,198.33 615.18,197.98 615.99,197.68 616.75,197.41 617.49,197.20 617.81,197.14 618.13,197.16 618.44,197.27 618.71,197.46 618.92,197.71 619.06,198.00 619.12,198.32 619.10,198.65 618.99,198.95 618.80,199.22 618.55,199.44 618.26,199.58 617.54,199.83 616.77,200.07 615.94,200.30 615.05,200.50 614.11,200.69 613.12,200.87 612.07,201.02 610.97,201.17 609.81,201.29" fill="#b3c9cd"/><polygon points="608.60,201.40 609.52,202.20 610.38,202.98 611.19,203.74 611.94,204.49 612.65,205.21 613.29,205.92 613.89,206.61 614.43,207.27 614.91,207.92 615.34,208.55 615.50,208.84 615.57,209.16 615.57,209.48 615.47,209.80 615.30,210.07 615.07,210.30 614.78,210.45 614.46,210.53 614.14,210.52 613.82,210.43 613.54,210.26 613.32,210.02 612.85,209.42 612.39,208.76 611.92,208.04 611.45,207.26 610.98,206.43 610.50,205.53 610.03,204.59 609.55,203.58 609.08,202.52" fill="#b3c9cd"/><polygon points="608.60,201.40 608.12,202.52 607.65,203.58 607.17,204.59 606.70,205.53 606.22,206.43 605.75,207.26 605.28,208.04 604.81,208.76 604.35,209.42 603.88,210.02 603.66,210.26 603.38,210.43 603.06,210.52 602.74,210.53 602.42,210.45 602.13,210.30 601.90,210.07 601.73,209.80 601.63,209.48 601.63,209.16 601.70,208.84 601.86,208.55 602.29,207.92 602.77,207.27 603.31,206.61 603.91,205.92 604.55,205.21 605.26,204.49 606.01,203.74 606.82,202.98 607.68,202.20" fill="#b3c9cd"/><polygon points="608.60,201.40 607.39,201.29 606.23,201.17 605.13,201.02 604.08,200.87 603.09,200.69 602.15,200.50 601.26,200.30 600.43,200.07 599.66,199.83 598.94,199.58 598.65,199.44 598.40,199.22 598.21,198.95 598.10,198.65 598.08,198.32 598.14,198.00 598.28,197.71 598.49,197.46 598.76,197.27 599.07,197.16 599.39,197.14 599.71,197.20 600.45,197.41 601.21,197.68 602.02,197.98 602.85,198.33 603.72,198.73 604.63,199.17 605.57,199.66 606.55,200.20 607.56,200.78" fill="#b3c9cd"/>
<polygon points="613.80,196.20 613.53,195.01 613.29,193.87 613.08,192.78 612.91,191.74 612.77,190.74 612.66,189.79 612.58,188.88 612.54,188.02 612.53,187.21 612.55,186.45 612.59,186.13 612.72,185.82 612.92,185.57 613.17,185.37 613.48,185.24 613.80,185.20 614.12,185.24 614.42,185.37 614.68,185.57 614.88,185.82 615.01,186.13 615.05,186.45 615.07,187.21 615.06,188.02 615.02,188.88 614.94,189.79 614.83,190.74 614.69,191.74 614.52,192.78 614.31,193.87 614.07,195.01" fill="#3e6a8d"/><polygon points="613.80,196.20 614.84,195.58 615.85,195.00 616.83,194.46 617.77,193.97 618.68,193.53 619.55,193.13 620.38,192.78 621.19,192.48 621.95,192.21 622.69,192.00 623.01,191.94 623.33,191.96 623.64,192.07 623.91,192.26 624.12,192.51 624.26,192.80 624.32,193.12 624.30,193.45 624.19,193.75 624.00,194.02 623.75,194.24 623.46,194.38 622.74,194.63 621.97,194.87 621.14,195.10 620.25,195.30 619.31,195.49 618.32,195.67 617.27,195.82 616.17,195.97 615.01,196.09" fill="#3e6a8d"/><polygon points="613.80,196.20 614.72,197.00 615.58,197.78 616.39,198.54 617.14,199.29 617.85,200.01 618.49,200.72 619.09,201.41 619.63,202.07 620.11,202.72 620.54,203.35 620.70,203.64 620.77,203.96 620.77,204.28 620.67,204.60 620.50,204.87 620.27,205.10 619.98,205.25 619.66,205.33 619.34,205.32 619.02,205.23 618.74,205.06 618.52,204.82 618.05,204.22 617.59,203.56 617.12,202.84 616.65,202.06 616.18,201.23 615.70,200.33 615.23,199.39 614.75,198.38 614.28,197.32" fill="#3e6a8d"/><polygon points="613.80,196.20 613.32,197.32 612.85,198.38 612.37,199.39 611.90,200.33 611.42,201.23 610.95,202.06 610.48,202.84 610.01,203.56 609.55,204.22 609.08,204.82 608.86,205.06 608.58,205.23 608.26,205.32 607.94,205.33 607.62,205.25 607.33,205.10 607.10,204.87 606.93,204.60 606.83,204.28 606.83,203.96 606.90,203.64 607.06,203.35 607.49,202.72 607.97,202.07 608.51,201.41 609.11,200.72 609.75,200.01 610.46,199.29 611.21,198.54 612.02,197.78 612.88,197.00" fill="#3e6a8d"/><polygon points="613.80,196.20 612.59,196.09 611.43,195.97 610.33,195.82 609.28,195.67 608.29,195.49 607.35,195.30 606.46,195.10 605.63,194.87 604.86,194.63 604.14,194.38 603.85,194.24 603.60,194.02 603.41,193.75 603.30,193.45 603.28,193.12 603.34,192.80 603.48,192.51 603.69,192.26 603.96,192.07 604.27,191.96 604.59,191.94 604.91,192.00 605.65,192.21 606.41,192.48 607.22,192.78 608.05,193.13 608.92,193.53 609.83,193.97 610.77,194.46 611.75,195.00 612.76,195.58" fill="#3e6a8d"/>
<polygon points="614.80,215.90 614.53,214.71 614.29,213.57 614.08,212.48 613.91,211.44 613.77,210.44 613.66,209.49 613.58,208.58 613.54,207.72 613.53,206.91 613.55,206.15 613.59,205.83 613.72,205.53 613.92,205.27 614.17,205.07 614.48,204.94 614.80,204.90 615.12,204.94 615.42,205.07 615.68,205.27 615.88,205.53 616.01,205.83 616.05,206.15 616.07,206.91 616.06,207.72 616.02,208.58 615.94,209.49 615.83,210.44 615.69,211.44 615.52,212.48 615.31,213.57 615.07,214.71" fill="#3e6a8d"/><polygon points="614.80,215.90 615.84,215.28 616.85,214.70 617.83,214.16 618.77,213.67 619.68,213.23 620.55,212.83 621.38,212.48 622.19,212.18 622.95,211.91 623.69,211.70 624.01,211.64 624.33,211.66 624.64,211.77 624.91,211.96 625.12,212.21 625.26,212.50 625.32,212.82 625.30,213.15 625.19,213.45 625.00,213.72 624.75,213.94 624.46,214.08 623.74,214.33 622.97,214.57 622.14,214.80 621.25,215.00 620.31,215.19 619.32,215.37 618.27,215.52 617.17,215.67 616.01,215.79" fill="#3e6a8d"/><polygon points="614.80,215.90 615.72,216.70 616.58,217.48 617.39,218.24 618.14,218.99 618.85,219.71 619.49,220.42 620.09,221.11 620.63,221.77 621.11,222.42 621.54,223.05 621.70,223.34 621.77,223.66 621.77,223.98 621.67,224.30 621.50,224.57 621.27,224.80 620.98,224.95 620.66,225.03 620.34,225.02 620.02,224.93 619.74,224.76 619.52,224.52 619.05,223.92 618.59,223.26 618.12,222.54 617.65,221.76 617.18,220.93 616.70,220.03 616.23,219.09 615.75,218.08 615.28,217.02" fill="#3e6a8d"/><polygon points="614.80,215.90 614.32,217.02 613.85,218.08 613.37,219.09 612.90,220.03 612.42,220.93 611.95,221.76 611.48,222.54 611.01,223.26 610.55,223.92 610.08,224.52 609.86,224.76 609.58,224.93 609.26,225.02 608.94,225.03 608.62,224.95 608.33,224.80 608.10,224.57 607.93,224.30 607.83,223.98 607.83,223.66 607.90,223.34 608.06,223.05 608.49,222.42 608.97,221.77 609.51,221.11 610.11,220.42 610.75,219.71 611.46,218.99 612.21,218.24 613.02,217.48 613.88,216.70" fill="#3e6a8d"/><polygon points="614.80,215.90 613.59,215.79 612.43,215.67 611.33,215.52 610.28,215.37 609.29,215.19 608.35,215.00 607.46,214.80 606.63,214.57 605.86,214.33 605.14,214.08 604.85,213.94 604.60,213.72 604.41,213.45 604.30,213.15 604.28,212.82 604.34,212.50 604.48,212.21 604.69,211.96 604.96,211.77 605.27,211.66 605.59,211.64 605.91,211.70 606.65,211.91 607.41,212.18 608.22,212.48 609.05,212.83 609.92,213.23 610.83,213.67 611.77,214.16 612.75,214.70 613.76,215.28" fill="#3e6a8d"/>
<polygon points="629.10,167.00 628.83,165.81 628.59,164.67 628.38,163.58 628.21,162.54 628.07,161.54 627.96,160.59 627.88,159.68 627.84,158.82 627.83,158.01 627.85,157.25 627.89,156.93 628.02,156.62 628.22,156.37 628.48,156.17 628.78,156.04 629.10,156.00 629.42,156.04 629.73,156.17 629.98,156.37 630.18,156.62 630.31,156.93 630.35,157.25 630.37,158.01 630.36,158.82 630.32,159.68 630.24,160.59 630.13,161.54 629.99,162.54 629.82,163.58 629.61,164.67 629.37,165.81" fill="#c93400"/><polygon points="629.10,167.00 630.14,166.38 631.15,165.80 632.13,165.26 633.07,164.77 633.98,164.33 634.85,163.93 635.68,163.58 636.49,163.28 637.25,163.01 637.99,162.80 638.31,162.74 638.63,162.76 638.94,162.87 639.21,163.06 639.42,163.31 639.56,163.60 639.62,163.92 639.60,164.25 639.49,164.55 639.30,164.82 639.05,165.04 638.76,165.18 638.04,165.43 637.27,165.67 636.44,165.90 635.55,166.10 634.61,166.29 633.62,166.47 632.57,166.62 631.47,166.77 630.31,166.89" fill="#c93400"/><polygon points="629.10,167.00 630.02,167.80 630.88,168.58 631.69,169.34 632.44,170.09 633.15,170.81 633.79,171.52 634.39,172.21 634.93,172.87 635.41,173.52 635.84,174.15 636.00,174.44 636.07,174.76 636.07,175.08 635.97,175.40 635.80,175.67 635.57,175.90 635.28,176.05 634.96,176.13 634.64,176.12 634.32,176.03 634.04,175.86 633.82,175.62 633.35,175.02 632.89,174.36 632.42,173.64 631.95,172.86 631.48,172.03 631.00,171.13 630.53,170.19 630.05,169.18 629.58,168.12" fill="#c93400"/><polygon points="629.10,167.00 628.62,168.12 628.15,169.18 627.67,170.19 627.20,171.13 626.72,172.03 626.25,172.86 625.78,173.64 625.31,174.36 624.85,175.02 624.38,175.62 624.16,175.86 623.88,176.03 623.56,176.12 623.24,176.13 622.92,176.05 622.63,175.90 622.40,175.67 622.23,175.40 622.13,175.08 622.13,174.76 622.20,174.44 622.36,174.15 622.79,173.52 623.27,172.87 623.81,172.21 624.41,171.52 625.05,170.81 625.76,170.09 626.51,169.34 627.32,168.58 628.18,167.80" fill="#c93400"/><polygon points="629.10,167.00 627.89,166.89 626.73,166.77 625.63,166.62 624.58,166.47 623.59,166.29 622.65,166.10 621.76,165.90 620.93,165.67 620.16,165.43 619.44,165.18 619.15,165.04 618.90,164.82 618.71,164.55 618.60,164.25 618.58,163.92 618.64,163.60 618.78,163.31 618.99,163.06 619.26,162.87 619.57,162.76 619.89,162.74 620.21,162.80 620.95,163.01 621.71,163.28 622.52,163.58 623.35,163.93 624.22,164.33 625.13,164.77 626.07,165.26 627.05,165.80 628.06,166.38" fill="#c93400"/>
<polygon points="625.50,178.60 625.23,177.52 624.99,176.49 624.78,175.50 624.61,174.56 624.47,173.66 624.36,172.81 624.28,172.00 624.24,171.24 624.23,170.52 624.25,169.85 624.29,169.53 624.42,169.22 624.62,168.97 624.88,168.77 625.18,168.64 625.50,168.60 625.82,168.64 626.12,168.77 626.38,168.97 626.58,169.22 626.71,169.53 626.75,169.85 626.77,170.52 626.76,171.24 626.72,172.00 626.64,172.81 626.53,173.66 626.39,174.56 626.22,175.50 626.01,176.49 625.77,177.52" fill="#b3c9cd"/><polygon points="625.50,178.60 626.44,178.01 627.35,177.46 628.22,176.96 629.07,176.51 629.88,176.09 630.65,175.73 631.40,175.40 632.11,175.13 632.79,174.89 633.44,174.71 633.76,174.65 634.08,174.67 634.39,174.78 634.66,174.97 634.87,175.22 635.01,175.51 635.07,175.83 635.04,176.16 634.94,176.46 634.75,176.73 634.50,176.94 634.21,177.08 633.57,177.31 632.89,177.52 632.15,177.72 631.36,177.89 630.51,178.06 629.62,178.20 628.67,178.32 627.66,178.43 626.61,178.53" fill="#b3c9cd"/><polygon points="625.50,178.60 626.35,179.31 627.15,180.01 627.90,180.68 628.59,181.35 629.24,181.99 629.83,182.61 630.36,183.22 630.85,183.81 631.28,184.39 631.65,184.94 631.81,185.23 631.89,185.55 631.88,185.87 631.79,186.19 631.61,186.47 631.38,186.69 631.09,186.85 630.77,186.92 630.45,186.91 630.13,186.82 629.86,186.65 629.63,186.41 629.22,185.88 628.81,185.29 628.39,184.65 627.98,183.95 627.57,183.20 627.15,182.39 626.74,181.53 626.33,180.61 625.91,179.63" fill="#b3c9cd"/><polygon points="625.50,178.60 625.09,179.63 624.67,180.61 624.26,181.53 623.85,182.39 623.43,183.20 623.02,183.95 622.61,184.65 622.19,185.29 621.78,185.88 621.37,186.41 621.14,186.65 620.87,186.82 620.55,186.91 620.23,186.92 619.91,186.85 619.62,186.69 619.39,186.47 619.21,186.19 619.12,185.87 619.11,185.55 619.19,185.23 619.35,184.94 619.72,184.39 620.15,183.81 620.64,183.22 621.17,182.61 621.76,181.99 622.41,181.35 623.10,180.68 623.85,180.01 624.65,179.31" fill="#b3c9cd"/><polygon points="625.50,178.60 624.39,178.53 623.34,178.43 622.33,178.32 621.38,178.20 620.49,178.06 619.64,177.89 618.85,177.72 618.11,177.52 617.43,177.31 616.79,177.08 616.50,176.94 616.25,176.73 616.06,176.46 615.96,176.16 615.93,175.83 615.99,175.51 616.13,175.22 616.34,174.97 616.61,174.78 616.92,174.67 617.24,174.65 617.56,174.71 618.21,174.89 618.89,175.13 619.60,175.40 620.35,175.73 621.12,176.09 621.93,176.51 622.78,176.96 623.65,177.46 624.56,178.01" fill="#b3c9cd"/>
<polygon points="658.60,189.70 658.33,188.51 658.09,187.37 657.88,186.28 657.71,185.24 657.57,184.24 657.46,183.29 657.38,182.38 657.34,181.52 657.33,180.71 657.35,179.95 657.39,179.63 657.52,179.32 657.72,179.07 657.98,178.87 658.28,178.74 658.60,178.70 658.92,178.74 659.23,178.87 659.48,179.07 659.68,179.32 659.81,179.63 659.85,179.95 659.87,180.71 659.86,181.52 659.82,182.38 659.74,183.29 659.63,184.24 659.49,185.24 659.32,186.28 659.11,187.37 658.87,188.51" fill="#c93400"/><polygon points="658.60,189.70 659.64,189.08 660.65,188.50 661.63,187.96 662.57,187.47 663.48,187.03 664.35,186.63 665.18,186.28 665.99,185.98 666.75,185.71 667.49,185.50 667.81,185.44 668.13,185.46 668.44,185.57 668.71,185.76 668.92,186.01 669.06,186.30 669.12,186.62 669.10,186.95 668.99,187.25 668.80,187.52 668.55,187.74 668.26,187.88 667.54,188.13 666.77,188.37 665.94,188.60 665.05,188.80 664.11,188.99 663.12,189.17 662.07,189.32 660.97,189.47 659.81,189.59" fill="#c93400"/><polygon points="658.60,189.70 659.52,190.50 660.38,191.28 661.19,192.04 661.94,192.79 662.65,193.51 663.29,194.22 663.89,194.91 664.43,195.57 664.91,196.22 665.34,196.85 665.50,197.14 665.57,197.46 665.57,197.78 665.47,198.10 665.30,198.37 665.07,198.60 664.78,198.75 664.46,198.83 664.14,198.82 663.82,198.73 663.54,198.56 663.32,198.32 662.85,197.72 662.39,197.06 661.92,196.34 661.45,195.56 660.98,194.73 660.50,193.83 660.03,192.89 659.55,191.88 659.08,190.82" fill="#c93400"/><polygon points="658.60,189.70 658.12,190.82 657.65,191.88 657.17,192.89 656.70,193.83 656.22,194.73 655.75,195.56 655.28,196.34 654.81,197.06 654.35,197.72 653.88,198.32 653.66,198.56 653.38,198.73 653.06,198.82 652.74,198.83 652.42,198.75 652.13,198.60 651.90,198.37 651.73,198.10 651.63,197.78 651.63,197.46 651.70,197.14 651.86,196.85 652.29,196.22 652.77,195.57 653.31,194.91 653.91,194.22 654.55,193.51 655.26,192.79 656.01,192.04 656.82,191.28 657.68,190.50" fill="#c93400"/><polygon points="658.60,189.70 657.39,189.59 656.23,189.47 655.13,189.32 654.08,189.17 653.09,188.99 652.15,188.80 651.26,188.60 650.43,188.37 649.66,188.13 648.94,187.88 648.65,187.74 648.40,187.52 648.21,187.25 648.10,186.95 648.08,186.62 648.14,186.30 648.28,186.01 648.49,185.76 648.76,185.57 649.07,185.46 649.39,185.44 649.71,185.50 650.45,185.71 651.21,185.98 652.02,186.28 652.85,186.63 653.72,187.03 654.63,187.47 655.57,187.96 656.55,188.50 657.56,189.08" fill="#c93400"/>
<polygon points="650.30,202.00 650.03,200.81 649.79,199.67 649.58,198.58 649.41,197.54 649.27,196.54 649.16,195.59 649.08,194.68 649.04,193.82 649.03,193.01 649.05,192.25 649.09,191.93 649.22,191.62 649.42,191.37 649.67,191.17 649.98,191.04 650.30,191.00 650.62,191.04 650.92,191.17 651.18,191.37 651.38,191.62 651.51,191.93 651.55,192.25 651.57,193.01 651.56,193.82 651.52,194.68 651.44,195.59 651.33,196.54 651.19,197.54 651.02,198.58 650.81,199.67 650.57,200.81" fill="#3e6a8d"/><polygon points="650.30,202.00 651.34,201.38 652.35,200.80 653.33,200.26 654.27,199.77 655.18,199.33 656.05,198.93 656.88,198.58 657.69,198.28 658.45,198.01 659.19,197.80 659.51,197.74 659.83,197.76 660.14,197.87 660.41,198.06 660.62,198.31 660.76,198.60 660.82,198.92 660.80,199.25 660.69,199.55 660.50,199.82 660.25,200.04 659.96,200.18 659.24,200.43 658.47,200.67 657.64,200.90 656.75,201.10 655.81,201.29 654.82,201.47 653.77,201.62 652.67,201.77 651.51,201.89" fill="#3e6a8d"/><polygon points="650.30,202.00 651.22,202.80 652.08,203.58 652.89,204.34 653.64,205.09 654.35,205.81 654.99,206.52 655.59,207.21 656.13,207.87 656.61,208.52 657.04,209.15 657.20,209.44 657.27,209.76 657.27,210.08 657.17,210.40 657.00,210.67 656.77,210.90 656.48,211.05 656.16,211.13 655.84,211.12 655.52,211.03 655.24,210.86 655.02,210.62 654.55,210.02 654.09,209.36 653.62,208.64 653.15,207.86 652.68,207.03 652.20,206.13 651.73,205.19 651.25,204.18 650.78,203.12" fill="#3e6a8d"/><polygon points="650.30,202.00 649.82,203.12 649.35,204.18 648.87,205.19 648.40,206.13 647.92,207.03 647.45,207.86 646.98,208.64 646.51,209.36 646.05,210.02 645.58,210.62 645.36,210.86 645.08,211.03 644.76,211.12 644.44,211.13 644.12,211.05 643.83,210.90 643.60,210.67 643.43,210.40 643.33,210.08 643.33,209.76 643.40,209.44 643.56,209.15 643.99,208.52 644.47,207.87 645.01,207.21 645.61,206.52 646.25,205.81 646.96,205.09 647.71,204.34 648.52,203.58 649.38,202.80" fill="#3e6a8d"/><polygon points="650.30,202.00 649.09,201.89 647.93,201.77 646.83,201.62 645.78,201.47 644.79,201.29 643.85,201.10 642.96,200.90 642.13,200.67 641.36,200.43 640.64,200.18 640.35,200.04 640.10,199.82 639.91,199.55 639.80,199.25 639.78,198.92 639.84,198.60 639.98,198.31 640.19,198.06 640.46,197.87 640.77,197.76 641.09,197.74 641.41,197.80 642.15,198.01 642.91,198.28 643.72,198.58 644.55,198.93 645.42,199.33 646.33,199.77 647.27,200.26 648.25,200.80 649.26,201.38" fill="#3e6a8d"/>
<polygon points="657.00,200.70 656.73,199.84 656.49,199.02 656.28,198.24 656.11,197.51 655.97,196.81 655.86,196.16 655.78,195.54 655.74,194.97 655.73,194.44 655.75,193.95 655.79,193.63 655.92,193.32 656.12,193.07 656.38,192.87 656.68,192.74 657.00,192.70 657.32,192.74 657.62,192.87 657.88,193.07 658.08,193.32 658.21,193.63 658.25,193.95 658.27,194.44 658.26,194.97 658.22,195.54 658.14,196.16 658.03,196.81 657.89,197.51 657.72,198.24 657.51,199.02 657.27,199.84" fill="#b3c9cd"/><polygon points="657.00,200.70 657.73,200.18 658.44,199.70 659.11,199.26 659.76,198.87 660.38,198.52 660.97,198.21 661.53,197.95 662.06,197.73 662.56,197.56 663.03,197.43 663.35,197.37 663.68,197.39 663.99,197.50 664.26,197.69 664.47,197.93 664.61,198.23 664.67,198.55 664.64,198.87 664.53,199.18 664.35,199.45 664.10,199.66 663.81,199.80 663.35,199.97 662.84,200.13 662.28,200.26 661.67,200.38 661.02,200.48 660.31,200.56 659.56,200.62 658.75,200.67 657.90,200.69" fill="#b3c9cd"/><polygon points="657.00,200.70 657.72,201.24 658.40,201.76 659.02,202.27 659.60,202.76 660.12,203.24 660.59,203.70 661.01,204.16 661.39,204.59 661.71,205.02 661.98,205.43 662.13,205.71 662.21,206.03 662.20,206.36 662.11,206.67 661.94,206.95 661.70,207.17 661.42,207.33 661.10,207.40 660.77,207.40 660.46,207.30 660.18,207.13 659.96,206.90 659.65,206.51 659.35,206.07 659.05,205.59 658.75,205.04 658.45,204.45 658.16,203.81 657.86,203.11 657.57,202.36 657.29,201.55" fill="#b3c9cd"/><polygon points="657.00,200.70 656.71,201.55 656.43,202.36 656.14,203.11 655.84,203.81 655.55,204.45 655.25,205.04 654.95,205.59 654.65,206.07 654.35,206.51 654.04,206.90 653.82,207.13 653.54,207.30 653.23,207.40 652.90,207.40 652.58,207.33 652.30,207.17 652.06,206.95 651.89,206.67 651.80,206.36 651.79,206.03 651.87,205.71 652.02,205.43 652.29,205.02 652.61,204.59 652.99,204.16 653.41,203.70 653.88,203.24 654.40,202.76 654.98,202.27 655.60,201.76 656.28,201.24" fill="#b3c9cd"/><polygon points="657.00,200.70 656.10,200.69 655.25,200.67 654.44,200.62 653.69,200.56 652.98,200.48 652.33,200.38 651.72,200.26 651.16,200.13 650.65,199.97 650.19,199.80 649.90,199.66 649.65,199.45 649.47,199.18 649.36,198.87 649.33,198.55 649.39,198.23 649.53,197.93 649.74,197.69 650.01,197.50 650.32,197.39 650.65,197.37 650.97,197.43 651.44,197.56 651.94,197.73 652.47,197.95 653.03,198.21 653.62,198.52 654.24,198.87 654.89,199.26 655.56,199.70 656.27,200.18" fill="#b3c9cd"/>
<polygon points="693.70,191.00 693.43,189.92 693.19,188.89 692.98,187.90 692.81,186.96 692.67,186.06 692.56,185.21 692.48,184.40 692.44,183.64 692.43,182.92 692.45,182.25 692.49,181.93 692.62,181.62 692.82,181.37 693.08,181.17 693.38,181.04 693.70,181.00 694.02,181.04 694.33,181.17 694.58,181.37 694.78,181.62 694.91,181.93 694.95,182.25 694.97,182.92 694.96,183.64 694.92,184.40 694.84,185.21 694.73,186.06 694.59,186.96 694.42,187.90 694.21,188.89 693.97,189.92" fill="#b3c9cd"/><polygon points="693.70,191.00 694.64,190.41 695.55,189.86 696.42,189.36 697.27,188.91 698.08,188.49 698.85,188.13 699.60,187.80 700.31,187.53 700.99,187.29 701.64,187.11 701.96,187.05 702.28,187.07 702.59,187.18 702.86,187.37 703.07,187.62 703.21,187.91 703.27,188.23 703.24,188.56 703.14,188.86 702.95,189.13 702.70,189.34 702.41,189.48 701.77,189.71 701.09,189.92 700.35,190.12 699.56,190.29 698.71,190.46 697.82,190.60 696.87,190.72 695.86,190.83 694.81,190.93" fill="#b3c9cd"/><polygon points="693.70,191.00 694.55,191.71 695.35,192.41 696.10,193.08 696.79,193.75 697.44,194.39 698.03,195.01 698.56,195.62 699.05,196.21 699.48,196.79 699.85,197.34 700.01,197.63 700.09,197.95 700.08,198.27 699.99,198.59 699.81,198.87 699.58,199.09 699.29,199.25 698.97,199.32 698.65,199.31 698.33,199.22 698.06,199.05 697.83,198.81 697.42,198.28 697.01,197.69 696.59,197.05 696.18,196.35 695.77,195.60 695.35,194.79 694.94,193.93 694.53,193.01 694.11,192.03" fill="#b3c9cd"/><polygon points="693.70,191.00 693.29,192.03 692.87,193.01 692.46,193.93 692.05,194.79 691.63,195.60 691.22,196.35 690.81,197.05 690.39,197.69 689.98,198.28 689.57,198.81 689.34,199.05 689.07,199.22 688.75,199.31 688.43,199.32 688.11,199.25 687.82,199.09 687.59,198.87 687.41,198.59 687.32,198.27 687.31,197.95 687.39,197.63 687.55,197.34 687.92,196.79 688.35,196.21 688.84,195.62 689.37,195.01 689.96,194.39 690.61,193.75 691.30,193.08 692.05,192.41 692.85,191.71" fill="#b3c9cd"/><polygon points="693.70,191.00 692.59,190.93 691.54,190.83 690.53,190.72 689.58,190.60 688.69,190.46 687.84,190.29 687.05,190.12 686.31,189.92 685.63,189.71 684.99,189.48 684.70,189.34 684.45,189.13 684.26,188.86 684.16,188.56 684.13,188.23 684.19,187.91 684.33,187.62 684.54,187.37 684.81,187.18 685.12,187.07 685.44,187.05 685.76,187.11 686.41,187.29 687.09,187.53 687.80,187.80 688.55,188.13 689.32,188.49 690.13,188.91 690.98,189.36 691.85,189.86 692.76,190.41" fill="#b3c9cd"/>
<polygon points="655.90,240.70 655.63,239.51 655.39,238.37 655.18,237.28 655.01,236.24 654.87,235.24 654.76,234.29 654.68,233.38 654.64,232.52 654.63,231.71 654.65,230.95 654.69,230.63 654.82,230.32 655.02,230.07 655.27,229.87 655.58,229.74 655.90,229.70 656.22,229.74 656.52,229.87 656.78,230.07 656.98,230.32 657.11,230.63 657.15,230.95 657.17,231.71 657.16,232.52 657.12,233.38 657.04,234.29 656.93,235.24 656.79,236.24 656.62,237.28 656.41,238.37 656.17,239.51" fill="#b3c9cd"/><polygon points="655.90,240.70 656.94,240.08 657.95,239.50 658.93,238.96 659.87,238.47 660.78,238.03 661.65,237.63 662.48,237.28 663.29,236.98 664.05,236.71 664.79,236.50 665.11,236.44 665.43,236.46 665.74,236.57 666.01,236.76 666.22,237.01 666.36,237.30 666.42,237.62 666.40,237.95 666.29,238.25 666.10,238.52 665.85,238.74 665.56,238.88 664.84,239.13 664.07,239.37 663.24,239.60 662.35,239.80 661.41,239.99 660.42,240.17 659.37,240.32 658.27,240.47 657.11,240.59" fill="#b3c9cd"/><polygon points="655.90,240.70 656.82,241.50 657.68,242.28 658.49,243.04 659.24,243.79 659.95,244.51 660.59,245.22 661.19,245.91 661.73,246.57 662.21,247.22 662.64,247.85 662.80,248.14 662.87,248.46 662.87,248.78 662.77,249.10 662.60,249.37 662.37,249.60 662.08,249.75 661.76,249.83 661.44,249.82 661.12,249.73 660.84,249.56 660.62,249.32 660.15,248.72 659.69,248.06 659.22,247.34 658.75,246.56 658.28,245.73 657.80,244.83 657.33,243.89 656.85,242.88 656.38,241.82" fill="#b3c9cd"/><polygon points="655.90,240.70 655.42,241.82 654.95,242.88 654.47,243.89 654.00,244.83 653.52,245.73 653.05,246.56 652.58,247.34 652.11,248.06 651.65,248.72 651.18,249.32 650.96,249.56 650.68,249.73 650.36,249.82 650.04,249.83 649.72,249.75 649.43,249.60 649.20,249.37 649.03,249.10 648.93,248.78 648.93,248.46 649.00,248.14 649.16,247.85 649.59,247.22 650.07,246.57 650.61,245.91 651.21,245.22 651.85,244.51 652.56,243.79 653.31,243.04 654.12,242.28 654.98,241.50" fill="#b3c9cd"/><polygon points="655.90,240.70 654.69,240.59 653.53,240.47 652.43,240.32 651.38,240.17 650.39,239.99 649.45,239.80 648.56,239.60 647.73,239.37 646.96,239.13 646.24,238.88 645.95,238.74 645.70,238.52 645.51,238.25 645.40,237.95 645.38,237.62 645.44,237.30 645.58,237.01 645.79,236.76 646.06,236.57 646.37,236.46 646.69,236.44 647.01,236.50 647.75,236.71 648.51,236.98 649.32,237.28 650.15,237.63 651.02,238.03 651.93,238.47 652.87,238.96 653.85,239.50 654.86,240.08" fill="#b3c9cd"/>
<polygon points="687.60,238.00 687.33,236.70 687.09,235.46 686.88,234.26 686.71,233.11 686.57,232.01 686.46,230.96 686.38,229.96 686.34,229.01 686.33,228.10 686.35,227.25 686.39,226.93 686.52,226.62 686.72,226.37 686.98,226.17 687.28,226.04 687.60,226.00 687.92,226.04 688.23,226.17 688.48,226.37 688.68,226.62 688.81,226.93 688.85,227.25 688.87,228.10 688.86,229.01 688.82,229.96 688.74,230.96 688.63,232.01 688.49,233.11 688.32,234.26 688.11,235.46 687.87,236.70" fill="#b3c9cd"/><polygon points="687.60,238.00 688.75,237.34 689.86,236.73 690.94,236.16 691.97,235.64 692.98,235.17 693.94,234.74 694.87,234.36 695.76,234.02 696.62,233.73 697.44,233.49 697.76,233.43 698.08,233.46 698.39,233.56 698.66,233.75 698.87,234.00 699.01,234.29 699.07,234.61 699.05,234.94 698.94,235.25 698.75,235.51 698.50,235.73 698.21,235.87 697.40,236.15 696.54,236.42 695.62,236.67 694.65,236.91 693.61,237.13 692.52,237.34 691.38,237.53 690.18,237.70 688.92,237.86" fill="#b3c9cd"/><polygon points="687.60,238.00 688.58,238.89 689.51,239.76 690.38,240.60 691.19,241.43 691.95,242.24 692.66,243.02 693.31,243.79 693.90,244.53 694.44,245.26 694.93,245.96 695.09,246.25 695.16,246.57 695.15,246.89 695.06,247.21 694.89,247.48 694.65,247.71 694.37,247.86 694.05,247.94 693.72,247.93 693.41,247.84 693.13,247.67 692.91,247.43 692.39,246.75 691.87,246.02 691.34,245.22 690.81,244.36 690.29,243.45 689.75,242.48 689.22,241.45 688.68,240.36 688.14,239.21" fill="#b3c9cd"/><polygon points="687.60,238.00 687.06,239.21 686.52,240.36 685.98,241.45 685.45,242.48 684.91,243.45 684.39,244.36 683.86,245.22 683.33,246.02 682.81,246.75 682.29,247.43 682.07,247.67 681.79,247.84 681.48,247.93 681.15,247.94 680.83,247.86 680.55,247.71 680.31,247.48 680.14,247.21 680.05,246.89 680.04,246.57 680.11,246.25 680.27,245.96 680.76,245.26 681.30,244.53 681.89,243.79 682.54,243.02 683.25,242.24 684.01,241.43 684.82,240.60 685.69,239.76 686.62,238.89" fill="#b3c9cd"/><polygon points="687.60,238.00 686.28,237.86 685.02,237.70 683.82,237.53 682.68,237.34 681.59,237.13 680.55,236.91 679.58,236.67 678.66,236.42 677.80,236.15 676.99,235.87 676.70,235.73 676.45,235.51 676.26,235.25 676.15,234.94 676.13,234.61 676.19,234.29 676.33,234.00 676.54,233.75 676.81,233.56 677.12,233.46 677.44,233.43 677.76,233.49 678.58,233.73 679.44,234.02 680.33,234.36 681.26,234.74 682.22,235.17 683.23,235.64 684.26,236.16 685.34,236.73 686.45,237.34" fill="#b3c9cd"/>
<polygon points="693.00,246.00 692.73,244.92 692.49,243.89 692.28,242.90 692.11,241.96 691.97,241.06 691.86,240.21 691.78,239.40 691.74,238.64 691.73,237.92 691.75,237.25 691.79,236.93 691.92,236.62 692.12,236.37 692.38,236.17 692.68,236.04 693.00,236.00 693.32,236.04 693.62,236.17 693.88,236.37 694.08,236.62 694.21,236.93 694.25,237.25 694.27,237.92 694.26,238.64 694.22,239.40 694.14,240.21 694.03,241.06 693.89,241.96 693.72,242.90 693.51,243.89 693.27,244.92" fill="#b3c9cd"/><polygon points="693.00,246.00 693.94,245.41 694.85,244.86 695.72,244.36 696.57,243.91 697.38,243.49 698.15,243.13 698.90,242.80 699.61,242.53 700.29,242.29 700.94,242.11 701.26,242.05 701.58,242.07 701.89,242.18 702.16,242.37 702.37,242.62 702.51,242.91 702.57,243.23 702.54,243.56 702.44,243.86 702.25,244.13 702.00,244.34 701.71,244.48 701.07,244.71 700.39,244.92 699.65,245.12 698.86,245.29 698.01,245.46 697.12,245.60 696.17,245.72 695.16,245.83 694.11,245.93" fill="#b3c9cd"/><polygon points="693.00,246.00 693.85,246.71 694.65,247.41 695.40,248.08 696.09,248.75 696.74,249.39 697.33,250.01 697.86,250.62 698.35,251.21 698.78,251.79 699.15,252.34 699.31,252.63 699.39,252.95 699.38,253.27 699.29,253.59 699.11,253.87 698.88,254.09 698.59,254.25 698.27,254.32 697.95,254.31 697.63,254.22 697.36,254.05 697.13,253.81 696.72,253.28 696.31,252.69 695.89,252.05 695.48,251.35 695.07,250.60 694.65,249.79 694.24,248.93 693.83,248.01 693.41,247.03" fill="#b3c9cd"/><polygon points="693.00,246.00 692.59,247.03 692.17,248.01 691.76,248.93 691.35,249.79 690.93,250.60 690.52,251.35 690.11,252.05 689.69,252.69 689.28,253.28 688.87,253.81 688.64,254.05 688.37,254.22 688.05,254.31 687.73,254.32 687.41,254.25 687.12,254.09 686.89,253.87 686.71,253.59 686.62,253.27 686.61,252.95 686.69,252.63 686.85,252.34 687.22,251.79 687.65,251.21 688.14,250.62 688.67,250.01 689.26,249.39 689.91,248.75 690.60,248.08 691.35,247.41 692.15,246.71" fill="#b3c9cd"/><polygon points="693.00,246.00 691.89,245.93 690.84,245.83 689.83,245.72 688.88,245.60 687.99,245.46 687.14,245.29 686.35,245.12 685.61,244.92 684.93,244.71 684.29,244.48 684.00,244.34 683.75,244.13 683.56,243.86 683.46,243.56 683.43,243.23 683.49,242.91 683.63,242.62 683.84,242.37 684.11,242.18 684.42,242.07 684.74,242.05 685.06,242.11 685.71,242.29 686.39,242.53 687.10,242.80 687.85,243.13 688.62,243.49 689.43,243.91 690.28,244.36 691.15,244.86 692.06,245.41" fill="#b3c9cd"/>
<polygon points="673.80,282.00 673.53,280.81 673.29,279.67 673.08,278.58 672.91,277.54 672.77,276.54 672.66,275.59 672.58,274.68 672.54,273.82 672.53,273.01 672.55,272.25 672.59,271.93 672.72,271.62 672.92,271.37 673.17,271.17 673.48,271.04 673.80,271.00 674.12,271.04 674.42,271.17 674.68,271.37 674.88,271.62 675.01,271.93 675.05,272.25 675.07,273.01 675.06,273.82 675.02,274.68 674.94,275.59 674.83,276.54 674.69,277.54 674.52,278.58 674.31,279.67 674.07,280.81" fill="#b3c9cd"/><polygon points="673.80,282.00 674.84,281.38 675.85,280.80 676.83,280.26 677.77,279.77 678.68,279.33 679.55,278.93 680.38,278.58 681.19,278.28 681.95,278.01 682.69,277.80 683.01,277.74 683.33,277.76 683.64,277.87 683.91,278.06 684.12,278.31 684.26,278.60 684.32,278.92 684.30,279.25 684.19,279.55 684.00,279.82 683.75,280.04 683.46,280.18 682.74,280.43 681.97,280.67 681.14,280.90 680.25,281.10 679.31,281.29 678.32,281.47 677.27,281.62 676.17,281.77 675.01,281.89" fill="#b3c9cd"/><polygon points="673.80,282.00 674.72,282.80 675.58,283.58 676.39,284.34 677.14,285.09 677.85,285.81 678.49,286.52 679.09,287.21 679.63,287.87 680.11,288.52 680.54,289.15 680.70,289.44 680.77,289.76 680.77,290.08 680.67,290.40 680.50,290.67 680.27,290.90 679.98,291.05 679.66,291.13 679.34,291.12 679.02,291.03 678.74,290.86 678.52,290.62 678.05,290.02 677.59,289.36 677.12,288.64 676.65,287.86 676.18,287.03 675.70,286.13 675.23,285.19 674.75,284.18 674.28,283.12" fill="#b3c9cd"/><polygon points="673.80,282.00 673.32,283.12 672.85,284.18 672.37,285.19 671.90,286.13 671.42,287.03 670.95,287.86 670.48,288.64 670.01,289.36 669.55,290.02 669.08,290.62 668.86,290.86 668.58,291.03 668.26,291.12 667.94,291.13 667.62,291.05 667.33,290.90 667.10,290.67 666.93,290.40 666.83,290.08 666.83,289.76 666.90,289.44 667.06,289.15 667.49,288.52 667.97,287.87 668.51,287.21 669.11,286.52 669.75,285.81 670.46,285.09 671.21,284.34 672.02,283.58 672.88,282.80" fill="#b3c9cd"/><polygon points="673.80,282.00 672.59,281.89 671.43,281.77 670.33,281.62 669.28,281.47 668.29,281.29 667.35,281.10 666.46,280.90 665.63,280.67 664.86,280.43 664.14,280.18 663.85,280.04 663.60,279.82 663.41,279.55 663.30,279.25 663.28,278.92 663.34,278.60 663.48,278.31 663.69,278.06 663.96,277.87 664.27,277.76 664.59,277.74 664.91,277.80 665.65,278.01 666.41,278.28 667.22,278.58 668.05,278.93 668.92,279.33 669.83,279.77 670.77,280.26 671.75,280.80 672.76,281.38" fill="#b3c9cd"/>
<polygon points="664.00,291.70 663.73,290.73 663.49,289.81 663.28,288.92 663.11,288.08 662.97,287.29 662.86,286.53 662.78,285.82 662.74,285.16 662.73,284.53 662.75,283.95 662.79,283.63 662.92,283.32 663.12,283.07 663.38,282.87 663.68,282.74 664.00,282.70 664.32,282.74 664.62,282.87 664.88,283.07 665.08,283.32 665.21,283.63 665.25,283.95 665.27,284.53 665.26,285.16 665.22,285.82 665.14,286.53 665.03,287.29 664.89,288.08 664.72,288.92 664.51,289.81 664.27,290.73" fill="#c93400"/><polygon points="664.00,291.70 664.84,291.14 665.64,290.63 666.42,290.16 667.16,289.74 667.88,289.36 668.56,289.02 669.21,288.73 669.83,288.48 670.42,288.28 670.98,288.12 671.31,288.06 671.63,288.08 671.94,288.19 672.21,288.38 672.42,288.62 672.56,288.92 672.62,289.24 672.59,289.57 672.48,289.87 672.30,290.14 672.05,290.35 671.76,290.49 671.21,290.69 670.61,290.88 669.96,291.04 669.27,291.19 668.52,291.32 667.71,291.43 666.86,291.52 665.96,291.60 665.00,291.66" fill="#c93400"/><polygon points="664.00,291.70 664.79,292.32 665.53,292.93 666.21,293.53 666.85,294.10 667.43,294.66 667.96,295.21 668.44,295.74 668.87,296.25 669.24,296.75 669.57,297.24 669.72,297.52 669.80,297.84 669.79,298.17 669.70,298.48 669.53,298.76 669.29,298.98 669.00,299.14 668.69,299.21 668.36,299.20 668.05,299.11 667.77,298.94 667.54,298.70 667.19,298.25 666.83,297.73 666.47,297.17 666.11,296.55 665.76,295.88 665.41,295.15 665.05,294.37 664.70,293.53 664.35,292.64" fill="#c93400"/><polygon points="664.00,291.70 663.65,292.64 663.30,293.53 662.95,294.37 662.59,295.15 662.24,295.88 661.89,296.55 661.53,297.17 661.17,297.73 660.81,298.25 660.46,298.70 660.23,298.94 659.95,299.11 659.64,299.20 659.31,299.21 659.00,299.14 658.71,298.98 658.47,298.76 658.30,298.48 658.21,298.17 658.20,297.84 658.28,297.52 658.43,297.24 658.76,296.75 659.13,296.25 659.56,295.74 660.04,295.21 660.57,294.66 661.15,294.10 661.79,293.53 662.47,292.93 663.21,292.32" fill="#c93400"/><polygon points="664.00,291.70 663.00,291.66 662.04,291.60 661.14,291.52 660.29,291.43 659.48,291.32 658.73,291.19 658.04,291.04 657.39,290.88 656.79,290.69 656.24,290.49 655.95,290.35 655.70,290.14 655.52,289.87 655.41,289.57 655.38,289.24 655.44,288.92 655.58,288.62 655.79,288.38 656.06,288.19 656.37,288.08 656.69,288.06 657.02,288.12 657.58,288.28 658.17,288.48 658.79,288.73 659.44,289.02 660.12,289.36 660.84,289.74 661.58,290.16 662.36,290.63 663.16,291.14" fill="#c93400"/>
<polygon points="706.90,309.70 706.63,308.40 706.39,307.16 706.18,305.96 706.01,304.81 705.87,303.71 705.76,302.66 705.68,301.66 705.64,300.71 705.63,299.80 705.65,298.95 705.69,298.63 705.82,298.32 706.02,298.07 706.27,297.87 706.58,297.74 706.90,297.70 707.22,297.74 707.52,297.87 707.78,298.07 707.98,298.32 708.11,298.63 708.15,298.95 708.17,299.80 708.16,300.71 708.12,301.66 708.04,302.66 707.93,303.71 707.79,304.81 707.62,305.96 707.41,307.16 707.17,308.40" fill="#b3c9cd"/><polygon points="706.90,309.70 708.05,309.04 709.16,308.43 710.24,307.86 711.27,307.34 712.28,306.87 713.24,306.44 714.17,306.06 715.06,305.72 715.92,305.43 716.74,305.19 717.06,305.13 717.38,305.16 717.69,305.26 717.96,305.45 718.17,305.70 718.31,305.99 718.37,306.31 718.35,306.64 718.24,306.95 718.05,307.21 717.80,307.43 717.51,307.57 716.70,307.85 715.84,308.12 714.92,308.37 713.95,308.61 712.91,308.83 711.82,309.04 710.68,309.23 709.48,309.40 708.22,309.56" fill="#b3c9cd"/><polygon points="706.90,309.70 707.88,310.59 708.81,311.46 709.68,312.30 710.49,313.13 711.25,313.94 711.96,314.72 712.61,315.49 713.20,316.23 713.74,316.96 714.23,317.66 714.39,317.95 714.46,318.27 714.45,318.59 714.36,318.91 714.19,319.18 713.95,319.41 713.67,319.56 713.35,319.64 713.02,319.63 712.71,319.54 712.43,319.37 712.21,319.13 711.69,318.45 711.17,317.72 710.64,316.92 710.11,316.06 709.59,315.15 709.05,314.18 708.52,313.15 707.98,312.06 707.44,310.91" fill="#b3c9cd"/><polygon points="706.90,309.70 706.36,310.91 705.82,312.06 705.28,313.15 704.75,314.18 704.21,315.15 703.69,316.06 703.16,316.92 702.63,317.72 702.11,318.45 701.59,319.13 701.37,319.37 701.09,319.54 700.78,319.63 700.45,319.64 700.13,319.56 699.85,319.41 699.61,319.18 699.44,318.91 699.35,318.59 699.34,318.27 699.41,317.95 699.57,317.66 700.06,316.96 700.60,316.23 701.19,315.49 701.84,314.72 702.55,313.94 703.31,313.13 704.12,312.30 704.99,311.46 705.92,310.59" fill="#b3c9cd"/><polygon points="706.90,309.70 705.58,309.56 704.32,309.40 703.12,309.23 701.98,309.04 700.89,308.83 699.85,308.61 698.88,308.37 697.96,308.12 697.10,307.85 696.29,307.57 696.00,307.43 695.75,307.21 695.56,306.95 695.45,306.64 695.43,306.31 695.49,305.99 695.63,305.70 695.84,305.45 696.11,305.26 696.42,305.16 696.74,305.13 697.06,305.19 697.88,305.43 698.74,305.72 699.63,306.06 700.56,306.44 701.52,306.87 702.53,307.34 703.56,307.86 704.64,308.43 705.75,309.04" fill="#b3c9cd"/>
<polygon points="268.20,152.00 272.81,152.06 277.41,152.25 282.01,152.55 286.59,152.98 291.15,153.53 295.69,154.20 300.21,155.00 304.69,155.91 309.14,156.94 313.55,158.10 317.92,159.37 322.23,160.76 326.50,162.26 330.71,163.88 334.86,165.62 338.94,167.47 342.95,169.43 346.89,171.50 350.76,173.68 354.54,175.97 358.24,178.36 361.85,180.86 365.37,183.46 368.79,186.17 372.11,188.97 375.33,191.87 378.44,194.86 381.45,197.95 384.34,201.13 387.12,204.40 389.78,207.75 392.32,211.19 394.74,214.71 397.03,218.31 399.20,221.99 401.24,225.75 403.16,229.57 404.94,233.46 406.59,237.43 408.10,241.45 409.49,245.54 410.74,249.68 411.85,253.88 412.84,258.13 413.68,262.44 414.40,266.79 414.98,271.18 415.44,275.62 415.76,280.09 415.95,284.60 416.02,289.14 415.96,293.70 415.78,298.30 415.48,302.91 415.06,307.55 414.52,312.20 413.88,316.86 413.12,321.54 412.25,326.22 411.28,330.90 410.21,335.58 409.05,340.26 407.79,344.94 406.44,349.60 405.00,354.25 403.48,358.89 401.89,363.50 400.21,368.10 398.47,372.66 396.66,377.20 394.78,381.71 392.85,386.18 390.85,390.62 388.81,395.01 386.71,399.36 384.56,403.67 382.37,407.92 380.14,412.12 377.87,416.26 375.56,420.35 373.22,424.37 370.85,428.34 368.45,432.23 366.03,436.05 363.57,439.81 361.10,443.49 358.60,447.09 356.08,450.61 353.54,454.05 350.98,457.40 348.40,460.67 345.81,463.85 343.20,466.94 340.58,469.93 337.94,472.83 335.28,475.63 332.61,478.34 329.93,480.94 327.24,483.44 324.53,485.83 321.80,488.12 319.07,490.30 316.32,492.37 313.56,494.33 310.79,496.18 308.01,497.92 305.22,499.54 302.41,501.04 299.60,502.43 296.78,503.70 293.94,504.86 291.10,505.89 288.26,506.80 285.41,507.60 282.55,508.27 279.68,508.82 276.82,509.25 273.95,509.55 271.07,509.74 268.20,509.80 265.33,509.74 262.45,509.55 259.58,509.25 256.72,508.82 253.85,508.27 250.99,507.60 248.14,506.80 245.30,505.89 242.46,504.86 239.62,503.70 236.80,502.43 233.99,501.04 231.18,499.54 228.39,497.92 225.61,496.18 222.84,494.33 220.08,492.37 217.33,490.30 214.60,488.12 211.87,485.83 209.16,483.44 206.47,480.94 203.79,478.34 201.12,475.63 198.46,472.83 195.82,469.93 193.20,466.94 190.59,463.85 188.00,460.67 185.42,457.40 182.86,454.05 180.32,450.61 177.80,447.09 175.30,443.49 172.83,439.81 170.37,436.05 167.95,432.23 165.55,428.34 163.18,424.37 160.84,420.35 158.53,416.26 156.26,412.12 154.03,407.92 151.84,403.67 149.69,399.36 147.59,395.01 145.55,390.62 143.55,386.18 141.62,381.71 139.74,377.20 137.93,372.66 136.19,368.10 134.51,363.50 132.92,358.89 131.40,354.25 129.96,349.60 128.61,344.94 127.35,340.26 126.19,335.58 125.12,330.90 124.15,326.22 123.28,321.54 122.52,316.86 121.88,312.20 121.34,307.55 120.92,302.91 120.62,298.30 120.44,293.70 120.38,289.14 120.45,284.60 120.64,280.09 120.96,275.62 121.42,271.18 122.00,266.79 122.72,262.44 123.56,258.13 124.55,253.88 125.66,249.68 126.91,245.54 128.30,241.45 129.81,237.43 131.46,233.46 133.24,229.57 135.16,225.75 137.20,221.99 139.37,218.31 141.66,214.71 144.08,211.19 146.62,207.75 149.28,204.40 152.06,201.13 154.95,197.95 157.96,194.86 161.07,191.87 164.29,188.97 167.61,186.17 171.03,183.46 174.55,180.86 178.16,178.36 181.86,175.97 185.64,173.68 189.51,171.50 193.45,169.43 197.46,167.47 201.54,165.62 205.69,163.88 209.90,162.26 214.17,160.76 218.48,159.37 222.85,158.10 227.26,156.94 231.71,155.91 236.19,155.00 240.71,154.20 245.25,153.53 249.81,152.98 254.39,152.55 258.99,152.25 263.59,152.06" fill="#c93400"/>
<polygon points="268.20,160.00 272.59,160.06 276.99,160.23 281.37,160.53 285.73,160.93 290.09,161.46 294.41,162.10 298.72,162.86 302.99,163.73 307.22,164.71 311.42,165.81 315.57,167.02 319.68,168.34 323.73,169.77 327.73,171.31 331.66,172.95 335.53,174.71 339.34,176.56 343.07,178.52 346.72,180.59 350.30,182.75 353.79,185.01 357.19,187.37 360.51,189.82 363.73,192.36 366.85,195.00 369.88,197.72 372.80,200.54 375.62,203.43 378.33,206.41 380.94,209.48 383.43,212.62 385.81,215.84 388.07,219.13 390.22,222.50 392.24,225.94 394.15,229.45 395.94,233.02 397.61,236.67 399.15,240.37 400.57,244.14 401.87,247.97 403.04,251.86 404.09,255.81 405.01,259.81 405.81,263.86 406.49,267.96 407.04,272.11 407.47,276.31 407.77,280.55 407.96,284.83 408.02,289.14 407.97,293.50 407.79,297.88 407.50,302.29 407.10,306.73 406.59,311.19 405.97,315.67 405.24,320.17 404.40,324.68 403.47,329.20 402.43,333.72 401.30,338.25 400.08,342.78 398.77,347.31 397.38,351.83 395.90,356.33 394.35,360.83 392.72,365.30 391.02,369.75 389.25,374.18 387.42,378.58 385.53,382.95 383.58,387.29 381.58,391.58 379.52,395.84 377.43,400.05 375.28,404.21 373.10,408.32 370.88,412.38 368.62,416.37 366.33,420.31 364.02,424.18 361.67,427.99 359.30,431.72 356.91,435.38 354.49,438.97 352.06,442.48 349.61,445.90 347.14,449.25 344.66,452.50 342.16,455.67 339.65,458.74 337.14,461.72 334.61,464.60 332.07,467.39 329.53,470.07 326.98,472.65 324.43,475.13 321.87,477.51 319.30,479.77 316.74,481.93 314.17,483.98 311.60,485.92 309.02,487.75 306.45,489.46 303.88,491.06 301.31,492.55 298.75,493.93 296.18,495.20 293.62,496.35 291.07,497.39 288.51,498.32 285.96,499.14 283.42,499.85 280.88,500.45 278.34,500.93 275.80,501.31 273.26,501.58 270.73,501.75 268.20,501.80 265.67,501.75 263.14,501.58 260.60,501.31 258.06,500.93 255.52,500.45 252.98,499.85 250.44,499.14 247.89,498.32 245.33,497.39 242.78,496.35 240.22,495.20 237.65,493.93 235.09,492.55 232.52,491.06 229.95,489.46 227.38,487.75 224.80,485.92 222.23,483.98 219.66,481.93 217.10,479.77 214.53,477.51 211.97,475.13 209.42,472.65 206.87,470.07 204.33,467.39 201.79,464.60 199.26,461.72 196.75,458.74 194.24,455.67 191.74,452.50 189.26,449.25 186.79,445.90 184.34,442.48 181.91,438.97 179.49,435.38 177.10,431.72 174.73,427.99 172.38,424.18 170.07,420.31 167.78,416.37 165.52,412.38 163.30,408.32 161.12,404.21 158.97,400.05 156.88,395.84 154.82,391.58 152.82,387.29 150.87,382.95 148.98,378.58 147.15,374.18 145.38,369.75 143.68,365.30 142.05,360.83 140.50,356.33 139.02,351.83 137.63,347.31 136.32,342.78 135.10,338.25 133.97,333.72 132.93,329.20 132.00,324.68 131.16,320.17 130.43,315.67 129.81,311.19 129.30,306.73 128.90,302.29 128.61,297.88 128.43,293.50 128.38,289.14 128.44,284.83 128.63,280.55 128.93,276.31 129.36,272.11 129.91,267.96 130.59,263.86 131.39,259.81 132.31,255.81 133.36,251.86 134.53,247.97 135.83,244.14 137.25,240.37 138.79,236.67 140.46,233.02 142.25,229.45 144.16,225.94 146.18,222.50 148.33,219.13 150.59,215.84 152.97,212.62 155.46,209.48 158.07,206.41 160.78,203.43 163.60,200.54 166.52,197.72 169.55,195.00 172.67,192.36 175.89,189.82 179.21,187.37 182.61,185.01 186.10,182.75 189.68,180.59 193.33,178.52 197.06,176.56 200.87,174.71 204.74,172.95 208.67,171.31 212.67,169.77 216.72,168.34 220.83,167.02 224.98,165.81 229.18,164.71 233.41,163.73 237.68,162.86 241.99,162.10 246.31,161.46 250.67,160.93 255.03,160.53 259.41,160.23 263.81,160.06" fill="none" stroke="#e8a080" stroke-width="0.7" stroke-opacity="0.8" stroke-dasharray="1.6,0.8"/>
<polygon points="546.50,191.80 549.10,191.86 551.69,192.05 554.30,192.35 556.90,192.78 559.52,193.33 562.15,194.00 564.78,194.80 567.43,195.71 570.10,196.75 572.77,197.90 575.47,199.17 578.18,200.56 580.91,202.07 583.66,203.69 586.42,205.43 589.20,207.28 592.00,209.24 594.81,211.31 597.63,213.49 600.47,215.78 603.32,218.18 606.17,220.68 609.04,223.28 611.91,225.99 614.78,228.79 617.65,231.69 620.52,234.69 623.38,237.78 626.23,240.96 629.07,244.23 631.89,247.58 634.69,251.03 637.47,254.55 640.22,258.15 642.95,261.83 645.64,265.59 648.29,269.41 650.90,273.31 653.46,277.27 655.98,281.30 658.45,285.39 660.86,289.54 663.21,293.74 665.50,297.99 667.72,302.30 669.88,306.65 671.96,311.05 673.97,315.49 675.90,319.96 677.75,324.47 679.52,329.01 681.20,333.58 682.79,338.18 684.29,342.80 685.70,347.44 687.01,352.09 688.22,356.76 689.33,361.43 690.34,366.11 691.25,370.80 692.05,375.49 692.74,380.17 693.32,384.84 693.80,389.51 694.16,394.16 694.41,398.80 694.54,403.42 694.56,408.02 694.46,412.59 694.25,417.13 693.91,421.64 693.46,426.11 692.89,430.55 692.19,434.95 691.38,439.30 690.44,443.61 689.39,447.86 688.21,452.06 686.91,456.21 685.49,460.30 683.95,464.33 682.29,468.29 680.50,472.19 678.60,476.01 676.57,479.77 674.43,483.45 672.17,487.05 669.79,490.57 667.30,494.02 664.70,497.37 661.98,500.64 659.15,503.82 656.21,506.91 653.16,509.91 650.01,512.81 646.75,515.61 643.40,518.32 639.94,520.92 636.39,523.42 632.75,525.82 629.03,528.11 625.21,530.29 621.31,532.36 617.34,534.32 613.29,536.17 609.17,537.91 604.98,539.53 600.73,541.04 596.42,542.43 592.06,543.70 587.65,544.85 583.19,545.89 578.69,546.80 574.16,547.60 569.60,548.27 565.01,548.82 560.40,549.25 555.77,549.55 551.14,549.74 546.50,549.80 541.86,549.74 537.23,549.55 532.60,549.25 527.99,548.82 523.40,548.27 518.84,547.60 514.31,546.80 509.81,545.89 505.35,544.85 500.94,543.70 496.58,542.43 492.27,541.04 488.02,539.53 483.83,537.91 479.71,536.17 475.66,534.32 471.69,532.36 467.79,530.29 463.97,528.11 460.25,525.82 456.61,523.42 453.06,520.92 449.60,518.32 446.25,515.61 442.99,512.81 439.84,509.91 436.79,506.91 433.85,503.82 431.02,500.64 428.30,497.37 425.70,494.02 423.21,490.57 420.83,487.05 418.57,483.45 416.43,479.77 414.40,476.01 412.50,472.19 410.71,468.29 409.05,464.33 407.51,460.30 406.09,456.21 404.79,452.06 403.61,447.86 402.56,443.61 401.62,439.30 400.81,434.95 400.11,430.55 399.54,426.11 399.09,421.64 398.75,417.13 398.54,412.59 398.44,408.02 398.46,403.42 398.59,398.80 398.84,394.16 399.20,389.51 399.68,384.84 400.26,380.17 400.95,375.49 401.75,370.80 402.66,366.11 403.67,361.43 404.78,356.76 405.99,352.09 407.30,347.44 408.71,342.80 410.21,338.18 411.80,333.58 413.48,329.01 415.25,324.47 417.10,319.96 419.03,315.49 421.04,311.05 423.12,306.65 425.28,302.30 427.50,297.99 429.79,293.74 432.14,289.54 434.55,285.39 437.02,281.30 439.54,277.27 442.10,273.31 444.71,269.41 447.36,265.59 450.05,261.83 452.78,258.15 455.53,254.55 458.31,251.03 461.11,247.58 463.93,244.23 466.77,240.96 469.62,237.78 472.48,234.69 475.35,231.69 478.22,228.79 481.09,225.99 483.96,223.28 486.83,220.68 489.68,218.18 492.53,215.78 495.37,213.49 498.19,211.31 501.00,209.24 503.80,207.28 506.58,205.43 509.34,203.69 512.09,202.07 514.82,200.56 517.53,199.17 520.23,197.90 522.90,196.75 525.57,195.71 528.22,194.80 530.85,194.00 533.48,193.33 536.10,192.78 538.70,192.35 541.31,192.05 543.90,191.86" fill="#3e6a8d"/>
<polygon points="546.50,199.80 548.72,199.85 550.94,200.01 553.18,200.27 555.43,200.64 557.70,201.12 560.00,201.71 562.32,202.41 564.68,203.22 567.06,204.15 569.48,205.19 571.94,206.35 574.42,207.62 576.94,209.01 579.49,210.52 582.07,212.14 584.68,213.88 587.32,215.73 589.99,217.69 592.67,219.77 595.38,221.96 598.11,224.25 600.85,226.65 603.60,229.15 606.37,231.76 609.14,234.46 611.92,237.27 614.69,240.17 617.46,243.16 620.23,246.25 622.98,249.42 625.72,252.68 628.45,256.03 631.15,259.45 633.83,262.96 636.48,266.54 639.09,270.19 641.68,273.92 644.22,277.71 646.71,281.57 649.16,285.49 651.56,289.46 653.91,293.50 656.20,297.59 658.42,301.73 660.58,305.91 662.68,310.14 664.70,314.41 666.65,318.72 668.53,323.06 670.32,327.44 672.04,331.84 673.66,336.27 675.21,340.72 676.66,345.20 678.02,349.68 679.29,354.18 680.46,358.69 681.53,363.20 682.50,367.72 683.38,372.23 684.15,376.74 684.81,381.25 685.38,385.74 685.83,390.22 686.18,394.69 686.41,399.13 686.54,403.55 686.56,407.95 686.47,412.31 686.26,416.64 685.94,420.94 685.51,425.20 684.97,429.42 684.31,433.59 683.54,437.72 682.65,441.79 681.65,445.82 680.54,449.79 679.32,453.70 677.98,457.56 676.52,461.35 674.96,465.08 673.28,468.74 671.49,472.33 669.60,475.86 667.59,479.31 665.47,482.69 663.24,485.99 660.90,489.21 658.46,492.36 655.91,495.42 653.26,498.41 650.50,501.30 647.64,504.11 644.69,506.84 641.63,509.47 638.48,512.01 635.23,514.46 631.89,516.81 628.46,519.07 624.95,521.23 621.35,523.29 617.67,525.24 613.91,527.10 610.07,528.85 606.17,530.49 602.20,532.03 598.17,533.46 594.07,534.78 589.93,535.99 585.73,537.09 581.49,538.07 577.20,538.94 572.89,539.70 568.54,540.34 564.16,540.86 559.76,541.27 555.35,541.57 550.93,541.74 546.50,541.80 542.07,541.74 537.65,541.57 533.24,541.27 528.84,540.86 524.46,540.34 520.11,539.70 515.80,538.94 511.51,538.07 507.27,537.09 503.07,535.99 498.93,534.78 494.83,533.46 490.80,532.03 486.83,530.49 482.93,528.85 479.09,527.10 475.33,525.24 471.65,523.29 468.05,521.23 464.54,519.07 461.11,516.81 457.77,514.46 454.52,512.01 451.37,509.47 448.31,506.84 445.36,504.11 442.50,501.30 439.74,498.41 437.09,495.42 434.54,492.36 432.10,489.21 429.76,485.99 427.53,482.69 425.41,479.31 423.40,475.86 421.51,472.33 419.72,468.74 418.04,465.08 416.48,461.35 415.02,457.56 413.68,453.70 412.46,449.79 411.35,445.82 410.35,441.79 409.46,437.72 408.69,433.59 408.03,429.42 407.49,425.20 407.06,420.94 406.74,416.64 406.53,412.31 406.44,407.95 406.46,403.55 406.59,399.13 406.82,394.69 407.17,390.22 407.62,385.74 408.19,381.25 408.85,376.74 409.62,372.23 410.50,367.72 411.47,363.20 412.54,358.69 413.71,354.18 414.98,349.68 416.34,345.20 417.79,340.72 419.34,336.27 420.96,331.84 422.68,327.44 424.47,323.06 426.35,318.72 428.30,314.41 430.32,310.14 432.42,305.91 434.58,301.73 436.80,297.59 439.09,293.50 441.44,289.46 443.84,285.49 446.29,281.57 448.78,277.71 451.32,273.92 453.91,270.19 456.52,266.54 459.17,262.96 461.85,259.45 464.55,256.03 467.28,252.68 470.02,249.42 472.77,246.25 475.54,243.16 478.31,240.17 481.08,237.27 483.86,234.46 486.63,231.76 489.40,229.15 492.15,226.65 494.89,224.25 497.62,221.96 500.33,219.77 503.01,217.69 505.68,215.73 508.32,213.88 510.93,212.14 513.51,210.52 516.06,209.01 518.58,207.62 521.06,206.35 523.52,205.19 525.94,204.15 528.32,203.22 530.68,202.41 533.00,201.71 535.30,201.12 537.57,200.64 539.82,200.27 542.06,200.01 544.28,199.85" fill="none" stroke="#a8c4d4" stroke-width="0.7" stroke-opacity="0.8" stroke-dasharray="1.6,0.8"/>
<polygon points="546.10,426.20 547.21,429.36 548.18,432.37 549.02,435.21 549.73,437.89 550.31,440.41 550.75,442.77 551.06,444.97 551.24,447.01 551.29,448.88 551.20,450.60 551.03,451.92 550.52,453.15 549.71,454.21 548.65,455.02 547.42,455.53 546.10,455.70 544.78,455.53 543.55,455.02 542.49,454.21 541.68,453.15 541.17,451.92 541.00,450.60 540.91,448.88 540.96,447.01 541.14,444.97 541.45,442.77 541.89,440.41 542.47,437.89 543.18,435.21 544.02,432.37 544.99,429.36" fill="#d5e3e5"/>
<polygon points="552.94,424.99 555.06,427.59 557.01,430.08 558.77,432.46 560.35,434.74 561.76,436.91 562.98,438.98 564.02,440.94 564.89,442.79 565.57,444.54 566.08,446.18 566.37,447.48 566.31,448.81 565.91,450.08 565.19,451.20 564.21,452.10 563.03,452.71 561.73,453.00 560.40,452.94 559.13,452.54 558.01,451.83 557.11,450.85 556.49,449.67 555.83,448.08 555.23,446.31 554.70,444.33 554.24,442.16 553.85,439.79 553.53,437.22 553.28,434.46 553.09,431.50 552.98,428.35" fill="#b3c9cd"/>
<polygon points="558.96,421.52 561.84,423.23 564.51,424.91 566.99,426.54 569.25,428.14 571.31,429.70 573.17,431.23 574.82,432.71 576.27,434.16 577.51,435.56 578.55,436.93 579.26,438.06 579.66,439.33 579.72,440.66 579.43,441.96 578.82,443.14 577.92,444.12 576.80,444.83 575.53,445.23 574.20,445.29 572.90,445.00 571.71,444.39 570.73,443.49 569.56,442.23 568.39,440.77 567.22,439.09 566.05,437.21 564.87,435.11 563.69,432.81 562.51,430.30 561.33,427.58 560.14,424.66" fill="#d5e3e5"/>
<polygon points="563.42,416.20 566.71,416.82 569.80,417.48 572.68,418.17 575.36,418.90 577.83,419.66 580.10,420.46 582.16,421.29 584.01,422.15 585.66,423.05 587.10,423.98 588.16,424.79 588.97,425.85 589.48,427.08 589.65,428.40 589.48,429.72 588.97,430.95 588.16,432.01 587.10,432.82 585.87,433.33 584.55,433.50 583.23,433.33 582.00,432.82 580.47,432.03 578.87,431.06 577.20,429.88 575.45,428.51 573.63,426.95 571.73,425.19 569.76,423.24 567.72,421.09 565.61,418.74" fill="#d5e3e5"/>
<polygon points="565.80,409.67 569.10,409.13 572.23,408.69 575.18,408.36 577.94,408.13 580.52,408.00 582.92,407.97 585.14,408.05 587.18,408.22 589.04,408.50 590.71,408.89 591.98,409.29 593.10,410.00 594.00,410.98 594.62,412.17 594.91,413.47 594.85,414.80 594.45,416.07 593.73,417.19 592.75,418.09 591.57,418.70 590.27,418.99 588.94,418.93 587.24,418.72 585.40,418.35 583.42,417.82 581.31,417.13 579.06,416.28 576.68,415.28 574.16,414.12 571.51,412.79 568.72,411.31" fill="#c93400"/>
<polygon points="565.80,402.73 568.72,401.09 571.51,399.61 574.16,398.28 576.68,397.12 579.06,396.12 581.31,395.27 583.42,394.58 585.40,394.05 587.24,393.68 588.94,393.47 590.27,393.41 591.57,393.70 592.75,394.31 593.73,395.21 594.45,396.33 594.85,397.60 594.91,398.93 594.62,400.23 594.00,401.42 593.10,402.40 591.98,403.11 590.71,403.51 589.04,403.90 587.18,404.18 585.14,404.35 582.92,404.43 580.52,404.40 577.94,404.27 575.18,404.04 572.23,403.71 569.10,403.27" fill="#b3c9cd"/>
<polygon points="563.42,396.20 565.61,393.66 567.72,391.31 569.76,389.16 571.73,387.21 573.63,385.45 575.45,383.89 577.20,382.52 578.87,381.34 580.47,380.37 582.00,379.58 583.23,379.07 584.55,378.90 585.87,379.07 587.10,379.58 588.16,380.39 588.97,381.45 589.48,382.68 589.65,384.00 589.48,385.32 588.97,386.55 588.16,387.61 587.10,388.42 585.66,389.35 584.01,390.25 582.16,391.11 580.10,391.94 577.83,392.74 575.36,393.50 572.68,394.23 569.80,394.92 566.71,395.58" fill="#d5e3e5"/>
<polygon points="558.96,390.88 560.14,387.74 561.33,384.82 562.51,382.10 563.69,379.59 564.87,377.29 566.05,375.19 567.22,373.31 568.39,371.63 569.56,370.17 570.73,368.91 571.71,368.01 572.90,367.40 574.20,367.11 575.53,367.17 576.80,367.57 577.92,368.28 578.82,369.26 579.43,370.44 579.72,371.74 579.66,373.07 579.26,374.34 578.55,375.47 577.51,376.84 576.27,378.24 574.82,379.69 573.17,381.17 571.31,382.70 569.25,384.26 566.99,385.86 564.51,387.49 561.84,389.17" fill="#b3c9cd"/>
<polygon points="552.94,387.41 552.98,384.05 553.09,380.90 553.28,377.94 553.53,375.18 553.85,372.61 554.24,370.24 554.70,368.07 555.23,366.09 555.83,364.32 556.49,362.73 557.11,361.55 558.01,360.57 559.13,359.86 560.40,359.46 561.73,359.40 563.03,359.69 564.21,360.30 565.19,361.20 565.91,362.32 566.31,363.59 566.37,364.92 566.08,366.22 565.57,367.86 564.89,369.61 564.02,371.46 562.98,373.42 561.76,375.49 560.35,377.66 558.77,379.94 557.01,382.32 555.06,384.81" fill="#d5e3e5"/>
<polygon points="546.10,386.20 544.99,383.04 544.02,380.03 543.18,377.19 542.47,374.51 541.89,371.99 541.45,369.63 541.14,367.43 540.96,365.39 540.91,363.52 541.00,361.80 541.17,360.48 541.68,359.25 542.49,358.19 543.55,357.38 544.78,356.87 546.10,356.70 547.42,356.87 548.65,357.38 549.71,358.19 550.52,359.25 551.03,360.48 551.20,361.80 551.29,363.52 551.24,365.39 551.06,367.43 550.75,369.63 550.31,371.99 549.73,374.51 549.02,377.19 548.18,380.03 547.21,383.04" fill="#b3c9cd"/>
<polygon points="539.26,387.41 537.14,384.81 535.19,382.32 533.43,379.94 531.85,377.66 530.44,375.49 529.22,373.42 528.18,371.46 527.31,369.61 526.63,367.86 526.12,366.22 525.83,364.92 525.89,363.59 526.29,362.32 527.01,361.20 527.99,360.30 529.17,359.69 530.47,359.40 531.80,359.46 533.07,359.86 534.19,360.57 535.09,361.55 535.71,362.73 536.37,364.32 536.97,366.09 537.50,368.07 537.96,370.24 538.35,372.61 538.67,375.18 538.92,377.94 539.11,380.90 539.22,384.05" fill="#c93400"/>
<polygon points="533.24,390.88 530.36,389.17 527.69,387.49 525.21,385.86 522.95,384.26 520.89,382.70 519.03,381.17 517.38,379.69 515.93,378.24 514.69,376.84 513.65,375.47 512.94,374.34 512.54,373.07 512.48,371.74 512.77,370.44 513.38,369.26 514.28,368.28 515.40,367.57 516.67,367.17 518.00,367.11 519.30,367.40 520.49,368.01 521.47,368.91 522.64,370.17 523.81,371.63 524.98,373.31 526.15,375.19 527.33,377.29 528.51,379.59 529.69,382.10 530.87,384.82 532.06,387.74" fill="#b3c9cd"/>
<polygon points="528.78,396.20 525.49,395.58 522.40,394.92 519.52,394.23 516.84,393.50 514.37,392.74 512.10,391.94 510.04,391.11 508.19,390.25 506.54,389.35 505.10,388.42 504.04,387.61 503.23,386.55 502.72,385.32 502.55,384.00 502.72,382.68 503.23,381.45 504.04,380.39 505.10,379.58 506.33,379.07 507.65,378.90 508.97,379.07 510.20,379.58 511.73,380.37 513.33,381.34 515.00,382.52 516.75,383.89 518.57,385.45 520.47,387.21 522.44,389.16 524.48,391.31 526.59,393.66" fill="#d5e3e5"/>
<polygon points="526.40,402.73 523.10,403.27 519.97,403.71 517.02,404.04 514.26,404.27 511.68,404.40 509.28,404.43 507.06,404.35 505.02,404.18 503.16,403.90 501.49,403.51 500.22,403.11 499.10,402.40 498.20,401.42 497.58,400.23 497.29,398.93 497.35,397.60 497.75,396.33 498.47,395.21 499.45,394.31 500.63,393.70 501.93,393.41 503.26,393.47 504.96,393.68 506.80,394.05 508.78,394.58 510.89,395.27 513.14,396.12 515.52,397.12 518.04,398.28 520.69,399.61 523.48,401.09" fill="#b3c9cd"/>
<polygon points="526.40,409.67 523.48,411.31 520.69,412.79 518.04,414.12 515.52,415.28 513.14,416.28 510.89,417.13 508.78,417.82 506.80,418.35 504.96,418.72 503.26,418.93 501.93,418.99 500.63,418.70 499.45,418.09 498.47,417.19 497.75,416.07 497.35,414.80 497.29,413.47 497.58,412.17 498.20,410.98 499.10,410.00 500.22,409.29 501.49,408.89 503.16,408.50 505.02,408.22 507.06,408.05 509.28,407.97 511.68,408.00 514.26,408.13 517.02,408.36 519.97,408.69 523.10,409.13" fill="#d5e3e5"/>
<polygon points="528.78,416.20 526.59,418.74 524.48,421.09 522.44,423.24 520.47,425.19 518.57,426.95 516.75,428.51 515.00,429.88 513.33,431.06 511.73,432.03 510.20,432.82 508.97,433.33 507.65,433.50 506.33,433.33 505.10,432.82 504.04,432.01 503.23,430.95 502.72,429.72 502.55,428.40 502.72,427.08 503.23,425.85 504.04,424.79 505.10,423.98 506.54,423.05 508.19,422.15 510.04,421.29 512.10,420.46 514.37,419.66 516.84,418.90 519.52,418.17 522.40,417.48 525.49,416.82" fill="#b3c9cd"/>
<polygon points="533.24,421.52 532.06,424.66 530.87,427.58 529.69,430.30 528.51,432.81 527.33,435.11 526.15,437.21 524.98,439.09 523.81,440.77 522.64,442.23 521.47,443.49 520.49,444.39 519.30,445.00 518.00,445.29 516.67,445.23 515.40,444.83 514.28,444.12 513.38,443.14 512.77,441.96 512.48,440.66 512.54,439.33 512.94,438.06 513.65,436.93 514.69,435.56 515.93,434.16 517.38,432.71 519.03,431.23 520.89,429.70 522.95,428.14 525.21,426.54 527.69,424.91 530.36,423.23" fill="#c93400"/>
<polygon points="539.26,424.99 539.22,428.35 539.11,431.50 538.92,434.46 538.67,437.22 538.35,439.79 537.96,442.16 537.50,444.33 536.97,446.31 536.37,448.08 535.71,449.67 535.09,450.85 534.19,451.83 533.07,452.54 531.80,452.94 530.47,453.00 529.17,452.71 527.99,452.10 527.01,451.20 526.29,450.08 525.89,448.81 525.83,447.48 526.12,446.18 526.63,444.54 527.31,442.79 528.18,440.94 529.22,438.98 530.44,436.91 531.85,434.74 533.43,432.46 535.19,430.08 537.14,427.59" fill="#b3c9cd"/>
<polygon points="546.10,406.20 546.95,407.88 547.69,409.46 548.33,410.92 548.88,412.28 549.32,413.52 549.66,414.66 549.89,415.68 550.03,416.60 550.07,417.40 550.00,418.10 549.87,419.11 549.48,420.05 548.86,420.86 548.05,421.48 547.11,421.87 546.10,422.00 545.09,421.87 544.15,421.48 543.34,420.86 542.72,420.05 542.33,419.11 542.20,418.10 542.13,417.40 542.17,416.60 542.31,415.68 542.54,414.66 542.88,413.52 543.32,412.28 543.87,410.92 544.51,409.46 545.25,407.88" fill="#ffffff"/>
<polygon points="546.10,406.20 547.98,406.31 549.72,406.45 551.31,406.63 552.75,406.83 554.05,407.07 555.20,407.35 556.21,407.65 557.07,407.99 557.79,408.37 558.36,408.77 559.16,409.39 559.78,410.20 560.17,411.14 560.31,412.15 560.17,413.16 559.78,414.10 559.16,414.91 558.36,415.53 557.42,415.92 556.41,416.05 555.40,415.92 554.46,415.53 553.82,415.24 553.14,414.80 552.41,414.23 551.64,413.51 550.83,412.65 549.97,411.64 549.07,410.50 548.12,409.21 547.13,407.77" fill="#b3c9cd"/>
<polygon points="546.10,406.20 547.13,404.63 548.12,403.19 549.07,401.90 549.97,400.76 550.83,399.75 551.64,398.89 552.41,398.17 553.14,397.60 553.82,397.16 554.46,396.87 555.40,396.48 556.41,396.35 557.42,396.48 558.36,396.87 559.16,397.49 559.78,398.30 560.17,399.24 560.31,400.25 560.17,401.26 559.78,402.20 559.16,403.01 558.36,403.63 557.79,404.03 557.07,404.41 556.21,404.75 555.20,405.05 554.05,405.33 552.75,405.57 551.31,405.77 549.72,405.95 547.98,406.09" fill="#ffffff"/>
<polygon points="546.10,406.20 545.25,404.52 544.51,402.94 543.87,401.48 543.32,400.12 542.88,398.88 542.54,397.74 542.31,396.72 542.17,395.80 542.13,395.00 542.20,394.30 542.33,393.29 542.72,392.35 543.34,391.54 544.15,390.92 545.09,390.53 546.10,390.40 547.11,390.53 548.05,390.92 548.86,391.54 549.48,392.35 549.87,393.29 550.00,394.30 550.07,395.00 550.03,395.80 549.89,396.72 549.66,397.74 549.32,398.88 548.88,400.12 548.33,401.48 547.69,402.94 546.95,404.52" fill="#b3c9cd"/>
<polygon points="546.10,406.20 544.22,406.09 542.48,405.95 540.89,405.77 539.45,405.57 538.15,405.33 537.00,405.05 535.99,404.75 535.13,404.41 534.41,404.03 533.84,403.63 533.04,403.01 532.42,402.20 532.03,401.26 531.89,400.25 532.03,399.24 532.42,398.30 533.04,397.49 533.84,396.87 534.78,396.48 535.79,396.35 536.80,396.48 537.74,396.87 538.38,397.16 539.06,397.60 539.79,398.17 540.56,398.89 541.37,399.75 542.23,400.76 543.13,401.90 544.08,403.19 545.07,404.63" fill="#ffffff"/>
<polygon points="546.10,406.20 545.07,407.77 544.08,409.21 543.13,410.50 542.23,411.64 541.37,412.65 540.56,413.51 539.79,414.23 539.06,414.80 538.38,415.24 537.74,415.53 536.80,415.92 535.79,416.05 534.78,415.92 533.84,415.53 533.04,414.91 532.42,414.10 532.03,413.16 531.89,412.15 532.03,411.14 532.42,410.20 533.04,409.39 533.84,408.77 534.41,408.37 535.13,407.99 535.99,407.65 537.00,407.35 538.15,407.07 539.45,406.83 540.89,406.63 542.48,406.45 544.22,406.31" fill="#b3c9cd"/>
<polygon points="561.10,478.70 560.72,482.17 559.61,485.47 557.83,488.43 555.45,490.90 552.61,492.76 549.44,493.91 546.10,494.30 542.76,493.91 539.59,492.76 536.75,490.90 534.37,488.43 532.59,485.47 531.48,482.17 531.10,478.70 531.10,478.70 531.13,477.68 531.16,476.22 531.23,474.62 531.40,473.20 531.67,471.98 532.02,470.82 532.44,469.78 532.90,468.90 533.41,468.17 533.98,467.56 534.59,467.15 535.20,467.00 535.85,467.12 536.54,467.47 537.21,468.06 537.80,468.90 538.29,470.02 538.71,471.42 539.10,473.00 539.50,474.70 539.94,476.73 540.41,479.06 540.81,481.21 541.10,482.70 541.10,482.70 541.13,481.19 541.16,479.01 541.22,476.68 541.30,474.70 541.39,473.18 541.50,471.86 541.66,470.70 541.90,469.70 542.25,468.85 542.69,468.17 543.18,467.63 543.70,467.20 544.26,466.91 544.86,466.76 545.49,466.71 546.10,466.70 546.71,466.71 547.34,466.76 547.94,466.91 548.50,467.20 549.02,467.63 549.51,468.17 549.95,468.85 550.30,469.70 550.54,470.70 550.70,471.86 550.81,473.18 550.90,474.70 550.98,476.68 551.04,479.01 551.07,481.19 551.10,482.70 551.10,482.70 551.39,481.21 551.79,479.06 552.26,476.73 552.70,474.70 553.10,473.00 553.49,471.42 553.91,470.02 554.40,468.90 554.99,468.06 555.66,467.47 556.35,467.12 557.00,467.00 557.61,467.15 558.22,467.56 558.79,468.17 559.30,468.90 559.76,469.78 560.18,470.82 560.53,471.98 560.80,473.20 560.97,474.62 561.04,476.22 561.07,477.68 561.10,478.70" fill="#c93400"/>
<line x1="551.10" y1="482.70" x2="550.77" y2="484.07" stroke="#3e6a8d" stroke-width="0.7"/>
<line x1="550.77" y1="484.07" x2="550.38" y2="485.44" stroke="#3e6a8d" stroke-width="0.7"/>
<line x1="550.38" y1="485.44" x2="549.92" y2="486.80" stroke="#3e6a8d" stroke-width="0.7"/>
<line x1="549.92" y1="486.80" x2="549.40" y2="488.15" stroke="#3e6a8d" stroke-width="0.7"/>
<line x1="549.40" y1="488.15" x2="548.82" y2="489.50" stroke="#3e6a8d" stroke-width="0.7"/>
<line x1="548.82" y1="489.50" x2="548.18" y2="490.84" stroke="#3e6a8d" stroke-width="0.7"/>
<line x1="548.18" y1="490.84" x2="547.47" y2="492.17" stroke="#3e6a8d" stroke-width="0.7"/>
<line x1="547.47" y1="492.17" x2="546.70" y2="493.50" stroke="#3e6a8d" stroke-width="0.7"/>
<line x1="541.10" y1="482.70" x2="541.43" y2="484.07" stroke="#3e6a8d" stroke-width="0.7"/>
<line x1="541.43" y1="484.07" x2="541.83" y2="485.44" stroke="#3e6a8d" stroke-width="0.7"/>
<line x1="541.83" y1="485.44" x2="542.28" y2="486.80" stroke="#3e6a8d" stroke-width="0.7"/>
<line x1="542.28" y1="486.80" x2="542.80" y2="488.15" stroke="#3e6a8d" stroke-width="0.7"/>
<line x1="542.80" y1="488.15" x2="543.38" y2="489.50" stroke="#3e6a8d" stroke-width="0.7"/>
<line x1="543.38" y1="489.50" x2="544.03" y2="490.84" stroke="#3e6a8d" stroke-width="0.7"/>
<line x1="544.03" y1="490.84" x2="544.73" y2="492.17" stroke="#3e6a8d" stroke-width="0.7"/>
<line x1="544.73" y1="492.17" x2="545.50" y2="493.50" stroke="#3e6a8d" stroke-width="0.7"/>
<polygon points="546.10,495.20 547.01,499.63 547.81,503.89 548.51,507.98 549.09,511.91 549.57,515.67 549.93,519.27 550.19,522.70 550.33,525.97 550.37,529.07 550.30,532.00 550.16,533.09 549.74,534.10 549.07,534.97 548.20,535.64 547.19,536.06 546.10,536.20 545.01,536.06 544.00,535.64 543.13,534.97 542.46,534.10 542.04,533.09 541.90,532.00 541.83,529.07 541.87,525.97 542.01,522.70 542.27,519.27 542.63,515.67 543.11,511.91 543.69,507.98 544.39,503.89 545.19,499.63" fill="#b3c9cd"/>
<polygon points="539.40,524.60 537.09,522.25 534.96,519.99 533.02,517.82 531.27,515.74 529.70,513.74 528.31,511.83 527.11,510.01 526.09,508.27 525.26,506.62 524.62,505.06 524.22,503.82 524.16,502.51 524.43,501.24 525.03,500.07 525.90,499.11 527.00,498.40 528.24,498.00 529.55,497.94 530.82,498.21 531.98,498.81 532.95,499.68 533.66,500.78 534.46,502.27 535.21,503.96 535.91,505.84 536.55,507.93 537.15,510.21 537.70,512.69 538.20,515.37 538.65,518.25 539.05,521.33" fill="#d5e3e5"/>
<polygon points="552.80,524.60 553.15,521.33 553.55,518.25 554.00,515.37 554.50,512.69 555.05,510.21 555.65,507.93 556.29,505.84 556.99,503.96 557.74,502.27 558.54,500.78 559.25,499.68 560.22,498.81 561.38,498.21 562.65,497.94 563.96,498.00 565.20,498.40 566.30,499.11 567.17,500.07 567.77,501.24 568.04,502.51 567.98,503.82 567.58,505.06 566.94,506.62 566.11,508.27 565.09,510.01 563.89,511.83 562.50,513.74 560.93,515.74 559.18,517.82 557.24,519.99 555.11,522.25" fill="#d5e3e5"/>
<polygon points="518.53,472.80 516.25,475.44 513.47,477.53 510.32,478.96 506.97,479.65 503.57,479.57 500.30,478.73 497.33,477.16 494.80,474.94 492.84,472.20 491.55,469.06 490.99,465.67 491.20,462.22 492.15,458.88 493.81,455.80 493.81,455.80 494.40,454.98 495.26,453.79 496.23,452.52 497.17,451.44 498.08,450.59 499.03,449.84 499.96,449.21 500.84,448.75 501.68,448.43 502.49,448.26 503.22,448.26 503.81,448.48 504.28,448.95 504.65,449.63 504.86,450.50 504.88,451.52 504.65,452.73 504.20,454.12 503.63,455.64 502.99,457.27 502.21,459.19 501.27,461.37 500.39,463.38 499.78,464.77 499.78,464.77 500.66,463.54 501.92,461.76 503.29,459.87 504.48,458.29 505.42,457.09 506.25,456.06 507.04,455.19 507.80,454.50 508.57,454.01 509.32,453.69 510.03,453.52 510.70,453.46 511.33,453.54 511.91,453.76 512.45,454.07 512.97,454.41 513.47,454.77 513.95,455.16 514.36,455.63 514.66,456.18 514.85,456.83 514.95,457.55 514.92,458.36 514.73,459.26 514.36,460.23 513.84,461.27 513.17,462.42 512.39,463.72 511.34,465.40 510.06,467.36 508.86,469.17 508.02,470.43 508.02,470.43 509.10,469.36 510.66,467.82 512.36,466.17 513.87,464.74 515.16,463.57 516.38,462.48 517.52,461.57 518.56,460.93 519.52,460.57 520.41,460.46 521.18,460.56 521.78,460.83 522.20,461.31 522.46,461.99 522.59,462.81 522.60,463.70 522.48,464.68 522.23,465.78 521.86,466.94 521.40,468.09 520.73,469.36 519.89,470.72 519.08,471.94 518.53,472.80" fill="#c93400"/>
<line x1="508.02" y1="470.43" x2="506.97" y2="471.37" stroke="#3e6a8d" stroke-width="0.7"/>
<line x1="506.97" y1="471.37" x2="505.88" y2="472.27" stroke="#3e6a8d" stroke-width="0.7"/>
<line x1="505.88" y1="472.27" x2="504.73" y2="473.14" stroke="#3e6a8d" stroke-width="0.7"/>
<line x1="504.73" y1="473.14" x2="503.54" y2="473.96" stroke="#3e6a8d" stroke-width="0.7"/>
<line x1="503.54" y1="473.96" x2="502.29" y2="474.74" stroke="#3e6a8d" stroke-width="0.7"/>
<line x1="502.29" y1="474.74" x2="501.00" y2="475.48" stroke="#3e6a8d" stroke-width="0.7"/>
<line x1="501.00" y1="475.48" x2="499.67" y2="476.18" stroke="#3e6a8d" stroke-width="0.7"/>
<line x1="499.67" y1="476.18" x2="498.28" y2="476.84" stroke="#3e6a8d" stroke-width="0.7"/>
<line x1="499.78" y1="464.77" x2="499.28" y2="466.08" stroke="#3e6a8d" stroke-width="0.7"/>
<line x1="499.28" y1="466.08" x2="498.83" y2="467.43" stroke="#3e6a8d" stroke-width="0.7"/>
<line x1="498.83" y1="467.43" x2="498.44" y2="468.81" stroke="#3e6a8d" stroke-width="0.7"/>
<line x1="498.44" y1="468.81" x2="498.10" y2="470.22" stroke="#3e6a8d" stroke-width="0.7"/>
<line x1="498.10" y1="470.22" x2="497.81" y2="471.66" stroke="#3e6a8d" stroke-width="0.7"/>
<line x1="497.81" y1="471.66" x2="497.58" y2="473.13" stroke="#3e6a8d" stroke-width="0.7"/>
<line x1="497.58" y1="473.13" x2="497.41" y2="474.63" stroke="#3e6a8d" stroke-width="0.7"/>
<line x1="497.41" y1="474.63" x2="497.29" y2="476.16" stroke="#3e6a8d" stroke-width="0.7"/>
<polygon points="495.69,479.55 493.93,483.71 492.18,487.68 490.43,491.45 488.69,495.01 486.95,498.38 485.21,501.56 483.48,504.53 481.75,507.30 480.03,509.88 478.31,512.25 477.57,513.07 476.65,513.67 475.61,514.00 474.52,514.06 473.44,513.83 472.47,513.34 471.65,512.60 471.06,511.68 470.72,510.64 470.66,509.55 470.89,508.47 471.38,507.50 472.99,505.04 474.77,502.51 476.74,499.90 478.90,497.22 481.24,494.46 483.76,491.63 486.47,488.72 489.36,485.74 492.43,482.68" fill="#b3c9cd"/>
<polygon points="473.52,499.98 472.94,496.74 472.47,493.67 472.10,490.78 471.83,488.07 471.67,485.53 471.61,483.18 471.65,480.99 471.80,478.99 472.05,477.16 472.40,475.51 472.78,474.25 473.46,473.14 474.41,472.25 475.56,471.63 476.83,471.33 478.14,471.37 479.39,471.74 480.50,472.43 481.39,473.38 482.01,474.52 482.31,475.79 482.28,477.10 482.09,478.78 481.75,480.59 481.26,482.54 480.61,484.63 479.81,486.85 478.86,489.21 477.76,491.70 476.50,494.32 475.08,497.08" fill="#d5e3e5"/>
<polygon points="484.56,507.57 486.70,505.07 488.77,502.76 490.77,500.64 492.70,498.72 494.56,496.99 496.35,495.44 498.06,494.09 499.71,492.93 501.28,491.97 502.78,491.19 503.99,490.69 505.28,490.52 506.58,490.68 507.78,491.18 508.82,491.97 509.62,493.00 510.12,494.21 510.30,495.50 510.13,496.80 509.63,498.00 508.84,499.04 507.81,499.84 506.39,500.76 504.77,501.65 502.95,502.50 500.93,503.33 498.71,504.12 496.28,504.87 493.65,505.60 490.82,506.29 487.79,506.95" fill="#d5e3e5"/>
<polygon points="598.39,455.80 600.05,458.88 601.00,462.22 601.21,465.67 600.65,469.06 599.36,472.20 597.40,474.94 594.87,477.16 591.90,478.73 588.63,479.57 585.23,479.65 581.88,478.96 578.73,477.53 575.95,475.44 573.67,472.80 573.67,472.80 573.12,471.94 572.31,470.72 571.47,469.36 570.80,468.09 570.34,466.94 569.97,465.78 569.72,464.68 569.60,463.70 569.61,462.81 569.74,461.99 570.00,461.31 570.42,460.83 571.02,460.56 571.79,460.46 572.68,460.57 573.64,460.93 574.68,461.57 575.82,462.48 577.04,463.57 578.33,464.74 579.84,466.17 581.54,467.82 583.10,469.36 584.18,470.43 584.18,470.43 583.34,469.17 582.14,467.36 580.86,465.40 579.81,463.72 579.03,462.42 578.36,461.27 577.84,460.23 577.47,459.26 577.28,458.36 577.25,457.55 577.35,456.83 577.54,456.18 577.84,455.63 578.25,455.16 578.73,454.77 579.23,454.41 579.75,454.07 580.29,453.76 580.87,453.54 581.50,453.46 582.17,453.52 582.88,453.69 583.63,454.01 584.40,454.50 585.16,455.19 585.95,456.06 586.78,457.09 587.72,458.29 588.91,459.87 590.28,461.76 591.54,463.54 592.42,464.77 592.42,464.77 591.81,463.38 590.93,461.37 589.99,459.19 589.21,457.27 588.57,455.64 588.00,454.12 587.55,452.73 587.32,451.52 587.34,450.50 587.55,449.63 587.92,448.95 588.39,448.48 588.98,448.26 589.71,448.26 590.52,448.43 591.36,448.75 592.24,449.21 593.17,449.84 594.12,450.59 595.03,451.44 595.97,452.52 596.94,453.79 597.80,454.98 598.39,455.80" fill="#c93400"/>
<line x1="592.42" y1="464.77" x2="592.92" y2="466.08" stroke="#3e6a8d" stroke-width="0.7"/>
<line x1="592.92" y1="466.08" x2="593.37" y2="467.43" stroke="#3e6a8d" stroke-width="0.7"/>
<line x1="593.37" y1="467.43" x2="593.76" y2="468.81" stroke="#3e6a8d" stroke-width="0.7"/>
<line x1="593.76" y1="468.81" x2="594.10" y2="470.22" stroke="#3e6a8d" stroke-width="0.7"/>
<line x1="594.10" y1="470.22" x2="594.39" y2="471.66" stroke="#3e6a8d" stroke-width="0.7"/>
<line x1="594.39" y1="471.66" x2="594.62" y2="473.13" stroke="#3e6a8d" stroke-width="0.7"/>
<line x1="594.62" y1="473.13" x2="594.79" y2="474.63" stroke="#3e6a8d" stroke-width="0.7"/>
<line x1="594.79" y1="474.63" x2="594.91" y2="476.16" stroke="#3e6a8d" stroke-width="0.7"/>
<line x1="584.18" y1="470.43" x2="585.23" y2="471.37" stroke="#3e6a8d" stroke-width="0.7"/>
<line x1="585.23" y1="471.37" x2="586.32" y2="472.27" stroke="#3e6a8d" stroke-width="0.7"/>
<line x1="586.32" y1="472.27" x2="587.47" y2="473.14" stroke="#3e6a8d" stroke-width="0.7"/>
<line x1="587.47" y1="473.14" x2="588.66" y2="473.96" stroke="#3e6a8d" stroke-width="0.7"/>
<line x1="588.66" y1="473.96" x2="589.91" y2="474.74" stroke="#3e6a8d" stroke-width="0.7"/>
<line x1="589.91" y1="474.74" x2="591.20" y2="475.48" stroke="#3e6a8d" stroke-width="0.7"/>
<line x1="591.20" y1="475.48" x2="592.53" y2="476.18" stroke="#3e6a8d" stroke-width="0.7"/>
<line x1="592.53" y1="476.18" x2="593.92" y2="476.84" stroke="#3e6a8d" stroke-width="0.7"/>
<polygon points="596.51,479.55 599.77,482.68 602.84,485.74 605.73,488.72 608.44,491.63 610.96,494.46 613.30,497.22 615.46,499.90 617.43,502.51 619.21,505.04 620.82,507.50 621.31,508.47 621.54,509.55 621.48,510.64 621.14,511.68 620.55,512.60 619.73,513.34 618.76,513.83 617.68,514.06 616.59,514.00 615.55,513.67 614.63,513.07 613.89,512.25 612.17,509.88 610.45,507.30 608.72,504.53 606.99,501.56 605.25,498.38 603.51,495.01 601.77,491.45 600.02,487.68 598.27,483.71" fill="#b3c9cd"/>
<polygon points="607.64,507.57 604.41,506.95 601.38,506.29 598.55,505.60 595.92,504.87 593.49,504.12 591.27,503.33 589.25,502.50 587.43,501.65 585.81,500.76 584.39,499.84 583.36,499.04 582.57,498.00 582.07,496.80 581.90,495.50 582.08,494.21 582.58,493.00 583.38,491.97 584.42,491.18 585.62,490.68 586.92,490.52 588.21,490.69 589.42,491.19 590.92,491.97 592.49,492.93 594.14,494.09 595.85,495.44 597.64,496.99 599.50,498.72 601.43,500.64 603.43,502.76 605.50,505.07" fill="#d5e3e5"/>
<polygon points="618.68,499.98 617.12,497.08 615.70,494.32 614.44,491.70 613.34,489.21 612.39,486.85 611.59,484.63 610.94,482.54 610.45,480.59 610.11,478.78 609.92,477.10 609.89,475.79 610.19,474.52 610.81,473.38 611.70,472.43 612.81,471.74 614.06,471.37 615.37,471.33 616.64,471.63 617.79,472.25 618.74,473.14 619.42,474.25 619.80,475.51 620.15,477.16 620.40,478.99 620.55,480.99 620.59,483.18 620.53,485.53 620.37,488.07 620.10,490.78 619.73,493.67 619.26,496.74" fill="#d5e3e5"/>
<polygon points="486.39,443.89 483.00,444.73 479.52,444.81 476.13,444.15 473.00,442.76 470.28,440.72 468.11,438.14 466.60,435.13 465.83,431.86 465.83,428.49 466.60,425.18 468.11,422.11 470.28,419.41 473.00,417.24 476.13,415.70 476.13,415.70 477.09,415.38 478.48,414.91 480.01,414.43 481.40,414.10 482.64,413.94 483.85,413.88 484.97,413.91 485.96,414.04 486.82,414.27 487.58,414.60 488.17,415.03 488.53,415.56 488.64,416.21 488.54,416.97 488.22,417.80 487.63,418.65 486.74,419.49 485.58,420.37 484.22,421.28 482.76,422.23 481.00,423.34 478.97,424.57 477.09,425.69 475.79,426.47 475.79,426.47 477.22,425.98 479.28,425.27 481.49,424.52 483.38,423.92 484.84,423.49 486.12,423.14 487.26,422.89 488.28,422.77 489.20,422.81 489.99,422.99 490.67,423.27 491.25,423.61 491.71,424.04 492.06,424.55 492.32,425.12 492.54,425.70 492.74,426.27 492.90,426.88 492.97,427.50 492.89,428.12 492.67,428.76 492.32,429.40 491.83,430.05 491.15,430.67 490.29,431.24 489.27,431.78 488.06,432.33 486.66,432.94 484.83,433.70 482.66,434.55 480.62,435.33 479.21,435.87 479.21,435.87 480.71,435.62 482.87,435.27 485.22,434.91 487.28,434.63 489.01,434.43 490.63,434.25 492.08,434.17 493.31,434.25 494.30,434.52 495.09,434.94 495.65,435.47 495.98,436.04 496.05,436.67 495.87,437.38 495.50,438.12 494.98,438.85 494.32,439.58 493.48,440.33 492.51,441.06 491.46,441.73 490.18,442.37 488.70,442.99 487.34,443.52 486.39,443.89" fill="#c93400"/>
<line x1="479.21" y1="435.87" x2="477.81" y2="436.02" stroke="#3e6a8d" stroke-width="0.7"/>
<line x1="477.81" y1="436.02" x2="476.39" y2="436.12" stroke="#3e6a8d" stroke-width="0.7"/>
<line x1="476.39" y1="436.12" x2="474.96" y2="436.16" stroke="#3e6a8d" stroke-width="0.7"/>
<line x1="474.96" y1="436.16" x2="473.51" y2="436.13" stroke="#3e6a8d" stroke-width="0.7"/>
<line x1="473.51" y1="436.13" x2="472.05" y2="436.05" stroke="#3e6a8d" stroke-width="0.7"/>
<line x1="472.05" y1="436.05" x2="470.57" y2="435.90" stroke="#3e6a8d" stroke-width="0.7"/>
<line x1="470.57" y1="435.90" x2="469.07" y2="435.69" stroke="#3e6a8d" stroke-width="0.7"/>
<line x1="469.07" y1="435.69" x2="467.56" y2="435.43" stroke="#3e6a8d" stroke-width="0.7"/>
<line x1="475.79" y1="426.47" x2="474.62" y2="427.25" stroke="#3e6a8d" stroke-width="0.7"/>
<line x1="474.62" y1="427.25" x2="473.47" y2="428.09" stroke="#3e6a8d" stroke-width="0.7"/>
<line x1="473.47" y1="428.09" x2="472.35" y2="428.98" stroke="#3e6a8d" stroke-width="0.7"/>
<line x1="472.35" y1="428.98" x2="471.25" y2="429.93" stroke="#3e6a8d" stroke-width="0.7"/>
<line x1="471.25" y1="429.93" x2="470.19" y2="430.94" stroke="#3e6a8d" stroke-width="0.7"/>
<line x1="470.19" y1="430.94" x2="469.15" y2="432.00" stroke="#3e6a8d" stroke-width="0.7"/>
<line x1="469.15" y1="432.00" x2="468.13" y2="433.12" stroke="#3e6a8d" stroke-width="0.7"/>
<line x1="468.13" y1="433.12" x2="467.15" y2="434.30" stroke="#3e6a8d" stroke-width="0.7"/>
<polygon points="462.47,436.64 458.62,439.01 454.89,441.22 451.28,443.27 447.79,445.17 444.41,446.90 441.16,448.47 438.02,449.89 435.00,451.14 432.10,452.24 429.32,453.17 428.25,453.41 427.16,453.36 426.11,453.03 425.19,452.44 424.45,451.64 423.94,450.66 423.70,449.59 423.75,448.50 424.08,447.45 424.67,446.53 425.48,445.79 426.45,445.28 429.18,444.21 432.11,443.18 435.23,442.21 438.54,441.27 442.04,440.39 445.74,439.55 449.63,438.75 453.72,438.00 458.00,437.30" fill="#b3c9cd"/>
<polygon points="432.55,440.40 433.96,437.43 435.36,434.65 436.74,432.09 438.10,429.73 439.44,427.57 440.76,425.61 442.06,423.86 443.34,422.31 444.61,420.97 445.86,419.83 446.89,419.03 448.09,418.52 449.38,418.34 450.68,418.50 451.89,419.00 452.93,419.79 453.73,420.82 454.23,422.02 454.41,423.31 454.25,424.61 453.76,425.82 452.97,426.86 451.84,428.12 450.51,429.40 448.98,430.70 447.24,432.02 445.30,433.37 443.16,434.73 440.81,436.12 438.26,437.52 435.51,438.95" fill="#d5e3e5"/>
<polygon points="437.13,452.99 440.33,452.20 443.36,451.52 446.21,450.96 448.90,450.51 451.42,450.18 453.77,449.96 455.95,449.86 457.96,449.87 459.81,450.00 461.48,450.24 462.75,450.53 463.91,451.14 464.86,452.03 465.56,453.13 465.94,454.38 465.99,455.68 465.70,456.96 465.09,458.11 464.21,459.07 463.10,459.76 461.85,460.15 460.55,460.20 458.86,460.12 457.03,459.91 455.05,459.55 452.93,459.04 450.66,458.40 448.24,457.60 445.68,456.67 442.98,455.59 440.13,454.36" fill="#d5e3e5"/>
<polygon points="616.07,415.70 619.20,417.24 621.92,419.41 624.09,422.11 625.60,425.18 626.37,428.49 626.37,431.86 625.60,435.13 624.09,438.14 621.92,440.72 619.20,442.76 616.07,444.15 612.68,444.81 609.20,444.73 605.81,443.89 605.81,443.89 604.86,443.52 603.50,442.99 602.02,442.37 600.74,441.73 599.69,441.06 598.72,440.33 597.88,439.58 597.22,438.85 596.70,438.12 596.33,437.38 596.15,436.67 596.22,436.04 596.55,435.47 597.11,434.94 597.90,434.52 598.89,434.25 600.12,434.17 601.57,434.25 603.19,434.43 604.92,434.63 606.98,434.91 609.33,435.27 611.49,435.62 612.99,435.87 612.99,435.87 611.58,435.33 609.54,434.55 607.37,433.70 605.54,432.94 604.14,432.33 602.93,431.78 601.91,431.24 601.05,430.67 600.37,430.05 599.88,429.40 599.53,428.76 599.31,428.12 599.23,427.50 599.30,426.88 599.46,426.27 599.66,425.70 599.88,425.12 600.14,424.55 600.49,424.04 600.95,423.61 601.53,423.27 602.21,422.99 603.00,422.81 603.92,422.77 604.94,422.89 606.08,423.14 607.36,423.49 608.82,423.92 610.71,424.52 612.92,425.27 614.98,425.98 616.41,426.47 616.41,426.47 615.11,425.69 613.23,424.57 611.20,423.34 609.44,422.23 607.98,421.28 606.62,420.37 605.46,419.49 604.57,418.65 603.98,417.80 603.66,416.97 603.56,416.21 603.67,415.56 604.03,415.03 604.62,414.60 605.38,414.27 606.24,414.04 607.23,413.91 608.35,413.88 609.56,413.94 610.80,414.10 612.19,414.43 613.72,414.91 615.11,415.38 616.07,415.70" fill="#c93400"/>
<line x1="616.41" y1="426.47" x2="617.58" y2="427.25" stroke="#3e6a8d" stroke-width="0.7"/>
<line x1="617.58" y1="427.25" x2="618.73" y2="428.09" stroke="#3e6a8d" stroke-width="0.7"/>
<line x1="618.73" y1="428.09" x2="619.85" y2="428.98" stroke="#3e6a8d" stroke-width="0.7"/>
<line x1="619.85" y1="428.98" x2="620.95" y2="429.93" stroke="#3e6a8d" stroke-width="0.7"/>
<line x1="620.95" y1="429.93" x2="622.01" y2="430.94" stroke="#3e6a8d" stroke-width="0.7"/>
<line x1="622.01" y1="430.94" x2="623.05" y2="432.00" stroke="#3e6a8d" stroke-width="0.7"/>
<line x1="623.05" y1="432.00" x2="624.07" y2="433.12" stroke="#3e6a8d" stroke-width="0.7"/>
<line x1="624.07" y1="433.12" x2="625.05" y2="434.30" stroke="#3e6a8d" stroke-width="0.7"/>
<line x1="612.99" y1="435.87" x2="614.39" y2="436.02" stroke="#3e6a8d" stroke-width="0.7"/>
<line x1="614.39" y1="436.02" x2="615.81" y2="436.12" stroke="#3e6a8d" stroke-width="0.7"/>
<line x1="615.81" y1="436.12" x2="617.24" y2="436.16" stroke="#3e6a8d" stroke-width="0.7"/>
<line x1="617.24" y1="436.16" x2="618.69" y2="436.13" stroke="#3e6a8d" stroke-width="0.7"/>
<line x1="618.69" y1="436.13" x2="620.15" y2="436.05" stroke="#3e6a8d" stroke-width="0.7"/>
<line x1="620.15" y1="436.05" x2="621.63" y2="435.90" stroke="#3e6a8d" stroke-width="0.7"/>
<line x1="621.63" y1="435.90" x2="623.13" y2="435.69" stroke="#3e6a8d" stroke-width="0.7"/>
<line x1="623.13" y1="435.69" x2="624.64" y2="435.43" stroke="#3e6a8d" stroke-width="0.7"/>
<polygon points="629.73,436.64 634.20,437.30 638.48,438.00 642.57,438.75 646.46,439.55 650.16,440.39 653.66,441.27 656.97,442.21 660.09,443.18 663.02,444.21 665.75,445.28 666.72,445.79 667.53,446.53 668.12,447.45 668.45,448.50 668.50,449.59 668.26,450.66 667.75,451.64 667.01,452.44 666.09,453.03 665.04,453.36 663.95,453.41 662.88,453.17 660.10,452.24 657.20,451.14 654.18,449.89 651.04,448.47 647.79,446.90 644.41,445.17 640.92,443.27 637.31,441.22 633.58,439.01" fill="#b3c9cd"/>
<polygon points="655.07,452.99 652.07,454.36 649.22,455.59 646.52,456.67 643.96,457.60 641.54,458.40 639.27,459.04 637.15,459.55 635.17,459.91 633.34,460.12 631.65,460.20 630.35,460.15 629.10,459.76 627.99,459.07 627.11,458.11 626.50,456.96 626.21,455.68 626.26,454.38 626.64,453.13 627.34,452.03 628.29,451.14 629.45,450.53 630.72,450.24 632.39,450.00 634.24,449.87 636.25,449.86 638.43,449.96 640.78,450.18 643.30,450.51 645.99,450.96 648.84,451.52 651.87,452.20" fill="#d5e3e5"/>
<polygon points="659.65,440.40 656.69,438.95 653.94,437.52 651.39,436.12 649.04,434.73 646.90,433.37 644.96,432.02 643.22,430.70 641.69,429.40 640.36,428.12 639.23,426.86 638.44,425.82 637.95,424.61 637.79,423.31 637.97,422.02 638.47,420.82 639.27,419.79 640.31,419.00 641.52,418.50 642.82,418.34 644.11,418.52 645.31,419.03 646.34,419.83 647.59,420.97 648.86,422.31 650.14,423.86 651.44,425.61 652.76,427.57 654.10,429.73 655.46,432.09 656.84,434.65 658.24,437.43" fill="#d5e3e5"/>
<circle cx="508.88" cy="515.54" r="4.7" fill="#ffffff"/>
<circle cx="499.84" cy="524.08" r="4.7" fill="#ffffff"/>
<circle cx="510.82" cy="527.82" r="4.7" fill="#ffffff"/>
<circle cx="583.32" cy="515.54" r="4.7" fill="#ffffff"/>
<circle cx="581.38" cy="527.82" r="4.7" fill="#ffffff"/>
<circle cx="592.36" cy="524.08" r="4.7" fill="#ffffff"/>
<circle cx="456.05" cy="475.29" r="4.7" fill="#ffffff"/>
<circle cx="443.80" cy="477.39" r="4.7" fill="#ffffff"/>
<circle cx="450.86" cy="486.59" r="4.7" fill="#ffffff"/>
<circle cx="636.15" cy="475.29" r="4.7" fill="#ffffff"/>
<circle cx="641.34" cy="486.59" r="4.7" fill="#ffffff"/>
<circle cx="648.40" cy="477.39" r="4.7" fill="#ffffff"/>
<polygon points="489.60,401.40 483.07,402.12 476.77,402.71 470.69,403.19 464.84,403.56 459.22,403.80 453.82,403.93 448.65,403.94 443.71,403.84 439.00,403.62 434.51,403.28 433.23,403.03 432.05,402.47 431.06,401.61 430.33,400.53 429.90,399.30 429.80,398.00 430.04,396.72 430.61,395.54 431.46,394.55 432.54,393.82 433.77,393.39 435.08,393.29 439.57,393.46 444.28,393.78 449.21,394.23 454.34,394.83 459.69,395.57 465.25,396.45 471.02,397.47 477.00,398.64 483.19,399.95" fill="#b3c9cd"/>
<polygon points="489.10,393.50 482.76,393.05 476.66,392.54 470.79,391.95 465.15,391.29 459.74,390.56 454.57,389.76 449.63,388.89 444.92,387.95 440.44,386.94 436.20,385.85 435.05,385.42 434.05,384.70 433.28,383.75 432.77,382.63 432.58,381.42 432.70,380.20 433.14,379.05 433.85,378.06 434.80,377.28 435.92,376.78 437.13,376.58 438.35,376.70 442.63,377.63 447.09,378.73 451.73,379.99 456.54,381.42 461.52,383.01 466.69,384.78 472.03,386.71 477.54,388.80 483.23,391.07" fill="#b3c9cd"/>
<polygon points="489.60,387.90 483.61,385.98 477.86,384.06 472.35,382.11 467.08,380.16 462.06,378.19 457.27,376.20 452.73,374.20 448.43,372.19 444.37,370.16 440.55,368.12 439.54,367.43 438.74,366.49 438.21,365.39 437.99,364.18 438.09,362.96 438.50,361.80 439.20,360.79 440.13,359.99 441.24,359.47 442.44,359.24 443.67,359.34 444.82,359.75 448.71,361.65 452.74,363.75 456.89,366.06 461.17,368.57 465.58,371.28 470.13,374.20 474.80,377.32 479.60,380.64 484.54,384.17" fill="#b3c9cd"/>
<polygon points="602.60,401.40 609.01,399.95 615.20,398.64 621.18,397.47 626.95,396.45 632.51,395.57 637.86,394.83 642.99,394.23 647.92,393.78 652.63,393.46 657.12,393.29 658.43,393.39 659.66,393.82 660.74,394.55 661.59,395.54 662.16,396.72 662.40,398.00 662.30,399.30 661.87,400.53 661.14,401.61 660.15,402.47 658.97,403.03 657.69,403.28 653.20,403.62 648.49,403.84 643.55,403.94 638.38,403.93 632.98,403.80 627.36,403.56 621.51,403.19 615.43,402.71 609.13,402.12" fill="#b3c9cd"/>
<polygon points="603.10,393.50 608.97,391.07 614.66,388.80 620.17,386.71 625.51,384.78 630.68,383.01 635.66,381.42 640.47,379.99 645.11,378.73 649.57,377.63 653.85,376.70 655.07,376.58 656.28,376.78 657.40,377.28 658.35,378.06 659.06,379.05 659.50,380.20 659.62,381.42 659.43,382.63 658.92,383.75 658.15,384.70 657.15,385.42 656.00,385.85 651.76,386.94 647.28,387.95 642.57,388.89 637.63,389.76 632.46,390.56 627.05,391.29 621.41,391.95 615.54,392.54 609.44,393.05" fill="#b3c9cd"/>
<polygon points="602.60,387.90 607.66,384.17 612.60,380.64 617.40,377.32 622.07,374.20 626.62,371.28 631.03,368.57 635.31,366.06 639.46,363.75 643.49,361.65 647.38,359.75 648.53,359.34 649.76,359.24 650.96,359.47 652.07,359.99 653.00,360.79 653.70,361.80 654.11,362.96 654.21,364.18 653.99,365.39 653.46,366.49 652.66,367.43 651.65,368.12 647.83,370.16 643.77,372.19 639.47,374.20 634.93,376.20 630.14,378.19 625.12,380.16 619.85,382.11 614.34,384.06 608.59,385.98" fill="#b3c9cd"/>
<circle cx="546.10" cy="205.60" r="5" fill="#ffffff"/>
<polygon points="561.10,228.40 560.72,231.87 559.61,235.17 557.83,238.13 555.45,240.60 552.61,242.46 549.44,243.61 546.10,244.00 542.76,243.61 539.59,242.46 536.75,240.60 534.37,238.13 532.59,235.17 531.48,231.87 531.10,228.40 531.10,228.40 531.13,227.38 531.16,225.92 531.23,224.32 531.40,222.90 531.67,221.68 532.02,220.52 532.44,219.48 532.90,218.60 533.41,217.87 533.98,217.26 534.59,216.85 535.20,216.70 535.85,216.82 536.54,217.17 537.21,217.76 537.80,218.60 538.29,219.72 538.71,221.12 539.10,222.70 539.50,224.40 539.94,226.43 540.41,228.76 540.81,230.91 541.10,232.40 541.10,232.40 541.13,230.89 541.16,228.71 541.22,226.38 541.30,224.40 541.39,222.88 541.50,221.56 541.66,220.40 541.90,219.40 542.25,218.55 542.69,217.87 543.18,217.33 543.70,216.90 544.26,216.61 544.86,216.46 545.49,216.41 546.10,216.40 546.71,216.41 547.34,216.46 547.94,216.61 548.50,216.90 549.02,217.33 549.51,217.87 549.95,218.55 550.30,219.40 550.54,220.40 550.70,221.56 550.81,222.88 550.90,224.40 550.98,226.38 551.04,228.71 551.07,230.89 551.10,232.40 551.10,232.40 551.39,230.91 551.79,228.76 552.26,226.43 552.70,224.40 553.10,222.70 553.49,221.12 553.91,219.72 554.40,218.60 554.99,217.76 555.66,217.17 556.35,216.82 557.00,216.70 557.61,216.85 558.22,217.26 558.79,217.87 559.30,218.60 559.76,219.48 560.18,220.52 560.53,221.68 560.80,222.90 560.97,224.32 561.04,225.92 561.07,227.38 561.10,228.40" fill="#c93400"/>
<line x1="551.10" y1="232.40" x2="550.77" y2="233.77" stroke="#3e6a8d" stroke-width="0.7"/>
<line x1="550.77" y1="233.77" x2="550.38" y2="235.14" stroke="#3e6a8d" stroke-width="0.7"/>
<line x1="550.38" y1="235.14" x2="549.92" y2="236.50" stroke="#3e6a8d" stroke-width="0.7"/>
<line x1="549.92" y1="236.50" x2="549.40" y2="237.85" stroke="#3e6a8d" stroke-width="0.7"/>
<line x1="549.40" y1="237.85" x2="548.82" y2="239.20" stroke="#3e6a8d" stroke-width="0.7"/>
<line x1="548.82" y1="239.20" x2="548.18" y2="240.54" stroke="#3e6a8d" stroke-width="0.7"/>
<line x1="548.18" y1="240.54" x2="547.47" y2="241.87" stroke="#3e6a8d" stroke-width="0.7"/>
<line x1="547.47" y1="241.87" x2="546.70" y2="243.20" stroke="#3e6a8d" stroke-width="0.7"/>
<line x1="541.10" y1="232.40" x2="541.43" y2="233.77" stroke="#3e6a8d" stroke-width="0.7"/>
<line x1="541.43" y1="233.77" x2="541.83" y2="235.14" stroke="#3e6a8d" stroke-width="0.7"/>
<line x1="541.83" y1="235.14" x2="542.28" y2="236.50" stroke="#3e6a8d" stroke-width="0.7"/>
<line x1="542.28" y1="236.50" x2="542.80" y2="237.85" stroke="#3e6a8d" stroke-width="0.7"/>
<line x1="542.80" y1="237.85" x2="543.38" y2="239.20" stroke="#3e6a8d" stroke-width="0.7"/>
<line x1="543.38" y1="239.20" x2="544.02" y2="240.54" stroke="#3e6a8d" stroke-width="0.7"/>
<line x1="544.02" y1="240.54" x2="544.73" y2="241.87" stroke="#3e6a8d" stroke-width="0.7"/>
<line x1="544.73" y1="241.87" x2="545.50" y2="243.20" stroke="#3e6a8d" stroke-width="0.7"/>
<polygon points="546.10,244.20 546.95,248.67 547.69,252.99 548.33,257.14 548.88,261.13 549.32,264.96 549.66,268.63 549.89,272.14 550.03,275.49 550.07,278.67 550.00,281.70 549.87,282.71 549.48,283.65 548.86,284.46 548.05,285.08 547.11,285.47 546.10,285.60 545.09,285.47 544.15,285.08 543.34,284.46 542.72,283.65 542.33,282.71 542.20,281.70 542.13,278.67 542.17,275.49 542.31,272.14 542.54,268.63 542.88,264.96 543.32,261.13 543.87,257.14 544.51,252.99 545.25,248.67" fill="#b3c9cd"/>
<polygon points="551.70,273.20 552.06,269.92 552.47,266.84 552.93,263.96 553.44,261.28 554.00,258.80 554.61,256.51 555.27,254.43 555.97,252.54 556.73,250.85 557.53,249.36 558.25,248.27 559.22,247.39 560.38,246.80 561.66,246.53 562.96,246.60 564.20,247.00 565.29,247.71 566.17,248.68 566.76,249.84 567.03,251.12 566.96,252.42 566.56,253.67 565.91,255.23 565.07,256.88 564.05,258.62 562.84,260.44 561.45,262.35 559.87,264.35 558.10,266.43 556.16,268.60 554.02,270.86" fill="#d5e3e5"/>
<polygon points="540.50,273.20 538.18,270.86 536.04,268.60 534.10,266.43 532.33,264.35 530.75,262.35 529.36,260.44 528.15,258.62 527.13,256.88 526.29,255.23 525.64,253.67 525.24,252.42 525.17,251.12 525.44,249.84 526.03,248.68 526.91,247.71 528.00,247.00 529.24,246.60 530.54,246.53 531.82,246.80 532.98,247.39 533.95,248.27 534.67,249.36 535.47,250.85 536.23,252.54 536.93,254.43 537.59,256.51 538.20,258.80 538.76,261.28 539.27,263.96 539.73,266.84 540.14,269.92" fill="#d5e3e5"/>
<circle cx="560.70" cy="288.40" r="4.7" fill="#ffffff"/>
<circle cx="566.90" cy="276.60" r="4.7" fill="#ffffff"/>
<circle cx="574.70" cy="287.00" r="4.7" fill="#ffffff"/>
<circle cx="531.50" cy="288.40" r="4.7" fill="#ffffff"/>
<circle cx="525.30" cy="276.60" r="4.7" fill="#ffffff"/>
<circle cx="517.50" cy="287.00" r="4.7" fill="#ffffff"/>
<polygon points="546.10,347.80 544.96,342.16 543.96,336.73 543.09,331.52 542.36,326.51 541.77,321.71 541.31,317.12 540.99,312.74 540.81,308.56 540.76,304.60 540.85,300.85 541.03,299.49 541.55,298.23 542.39,297.14 543.48,296.30 544.74,295.78 546.10,295.60 547.46,295.78 548.73,296.30 549.81,297.14 550.65,298.23 551.17,299.49 551.35,300.85 551.44,304.60 551.39,308.56 551.21,312.74 550.89,317.12 550.43,321.71 549.84,326.51 549.11,331.52 548.24,336.73 547.24,342.16" fill="#ffffff"/>
<polygon points="494.90,314.30 492.40,309.33 490.06,304.50 487.88,299.83 485.86,295.29 484.00,290.91 482.31,286.67 480.78,282.57 479.41,278.63 478.20,274.83 477.15,271.17 476.97,270.07 477.07,268.95 477.46,267.90 478.11,266.98 478.98,266.27 480.00,265.80 481.11,265.61 482.22,265.72 483.28,266.11 484.19,266.76 484.91,267.63 485.37,268.65 486.56,272.26 487.69,276.08 488.78,280.12 489.81,284.36 490.78,288.82 491.71,293.49 492.59,298.38 493.41,303.47 494.18,308.78" fill="#ffffff"/>
<polygon points="498.70,313.80 497.12,306.40 495.68,299.23 494.38,292.28 493.23,285.56 492.21,279.06 491.34,272.78 490.61,266.73 490.02,260.91 489.57,255.31 489.26,249.93 489.33,248.68 489.73,247.49 490.42,246.45 491.35,245.61 492.47,245.05 493.70,244.80 494.95,244.87 496.14,245.27 497.19,245.96 498.02,246.89 498.58,248.01 498.83,249.24 499.30,254.60 499.67,260.21 499.92,266.06 500.07,272.15 500.11,278.49 500.04,285.06 499.87,291.88 499.59,298.95 499.20,306.25" fill="#ffffff"/>
<polygon points="503.70,313.80 503.26,304.23 502.93,294.94 502.71,285.94 502.61,277.22 502.62,268.79 502.74,260.65 502.97,252.79 503.32,245.22 503.78,237.93 504.36,230.93 504.62,229.63 505.22,228.44 506.10,227.44 507.21,226.70 508.47,226.28 509.80,226.20 511.10,226.47 512.30,227.06 513.29,227.94 514.03,229.05 514.45,230.31 514.53,231.64 514.13,238.65 513.58,245.93 512.87,253.48 512.02,261.29 511.01,269.37 509.85,277.72 508.54,286.34 507.08,295.23 505.47,304.38" fill="#ffffff"/>
<polygon points="597.30,314.30 598.02,308.78 598.79,303.47 599.61,298.38 600.49,293.49 601.42,288.82 602.39,284.36 603.42,280.12 604.51,276.08 605.64,272.26 606.83,268.65 607.29,267.63 608.01,266.76 608.92,266.11 609.98,265.72 611.09,265.61 612.20,265.80 613.22,266.27 614.09,266.98 614.74,267.90 615.13,268.95 615.23,270.07 615.05,271.17 614.00,274.83 612.79,278.63 611.42,282.57 609.89,286.67 608.20,290.91 606.34,295.29 604.32,299.83 602.14,304.50 599.80,309.33" fill="#ffffff"/>
<polygon points="593.50,313.80 593.00,306.25 592.61,298.95 592.33,291.88 592.16,285.06 592.09,278.49 592.13,272.15 592.28,266.06 592.53,260.21 592.90,254.60 593.37,249.24 593.62,248.01 594.18,246.89 595.01,245.96 596.06,245.27 597.25,244.87 598.50,244.80 599.73,245.05 600.85,245.61 601.78,246.45 602.47,247.49 602.87,248.68 602.94,249.93 602.63,255.31 602.18,260.91 601.59,266.73 600.86,272.78 599.99,279.06 598.97,285.56 597.82,292.28 596.52,299.23 595.08,306.40" fill="#ffffff"/>
<polygon points="588.50,313.80 586.73,304.38 585.12,295.23 583.66,286.34 582.35,277.72 581.19,269.37 580.18,261.29 579.33,253.48 578.62,245.93 578.07,238.65 577.67,231.64 577.75,230.31 578.17,229.05 578.91,227.94 579.90,227.06 581.10,226.47 582.40,226.20 583.73,226.28 584.99,226.70 586.10,227.44 586.98,228.44 587.58,229.63 587.84,230.93 588.42,237.93 588.88,245.22 589.23,252.79 589.46,260.65 589.58,268.79 589.59,277.22 589.49,285.94 589.27,294.94 588.94,304.23" fill="#ffffff"/>
<polygon points="484.55,328.56 482.14,326.56 479.98,324.67 478.07,322.90 476.40,321.26 474.97,319.73 473.79,318.32 472.85,317.04 472.15,315.87 471.70,314.82 471.49,313.89 471.08,312.04 471.17,310.15 471.74,308.35 472.75,306.75 474.15,305.47 475.83,304.60 477.67,304.19 479.56,304.27 481.37,304.84 482.97,305.86 484.24,307.25 485.12,308.93 485.56,309.78 485.89,310.87 486.10,312.21 486.21,313.80 486.21,315.64 486.10,317.73 485.88,320.06 485.54,322.65 485.10,325.48" fill="#d5e3e5"/>
<polygon points="482.12,330.20 479.06,329.58 476.26,328.94 473.74,328.29 471.49,327.63 469.51,326.96 467.80,326.28 466.36,325.59 465.20,324.89 464.30,324.18 463.68,323.46 462.45,322.03 461.62,320.32 461.27,318.46 461.41,316.58 462.03,314.79 463.10,313.22 464.53,311.99 466.24,311.17 468.10,310.81 469.98,310.95 471.77,311.58 473.34,312.64 474.12,313.18 474.93,313.99 475.75,315.06 476.60,316.41 477.47,318.03 478.36,319.93 479.27,322.09 480.20,324.52 481.15,327.23" fill="#d5e3e5"/>
<polygon points="480.77,332.80 477.77,333.70 475.00,334.46 472.47,335.08 470.18,335.57 468.11,335.91 466.29,336.12 464.70,336.20 463.34,336.13 462.22,335.93 461.33,335.59 459.56,334.91 458.03,333.80 456.84,332.33 456.07,330.60 455.77,328.73 455.97,326.85 456.65,325.08 457.76,323.55 459.23,322.36 460.96,321.59 462.83,321.29 464.71,321.49 465.66,321.59 466.75,321.92 467.99,322.48 469.37,323.26 470.91,324.28 472.59,325.53 474.41,327.00 476.38,328.70 478.50,330.64" fill="#d5e3e5"/>
<polygon points="480.80,335.73 478.58,337.94 476.50,339.92 474.57,341.66 472.78,343.18 471.13,344.46 469.62,345.51 468.25,346.33 467.02,346.91 465.94,347.26 465.00,347.39 463.12,347.62 461.24,347.37 459.50,346.64 458.00,345.48 456.85,343.97 456.14,342.22 455.90,340.34 456.15,338.47 456.89,336.72 458.05,335.23 459.55,334.08 461.30,333.36 462.18,333.00 463.30,332.78 464.66,332.68 466.25,332.72 468.08,332.89 470.15,333.19 472.46,333.63 475.00,334.20 477.78,334.90" fill="#d5e3e5"/>
<polygon points="482.21,338.29 481.31,341.29 480.41,344.01 479.54,346.47 478.67,348.65 477.83,350.56 476.99,352.20 476.17,353.57 475.37,354.66 474.58,355.49 473.81,356.04 472.27,357.14 470.50,357.80 468.61,357.98 466.74,357.67 465.02,356.89 463.56,355.68 462.46,354.14 461.80,352.37 461.62,350.49 461.93,348.62 462.72,346.90 463.92,345.44 464.53,344.70 465.40,343.97 466.55,343.25 467.97,342.53 469.67,341.81 471.63,341.10 473.87,340.39 476.38,339.69 479.16,338.99" fill="#d5e3e5"/>
<polygon points="486.60,334.20 484.30,312.32 481.35,312.84 478.50,313.74 475.80,315.03 473.30,316.68 471.04,318.64 469.08,320.90 467.43,323.40 466.14,326.10 465.24,328.95 464.72,331.90 464.61,334.89 464.91,337.87 465.61,340.78 466.69,343.57 468.15,346.18 469.95,348.58 472.05,350.70 474.43,352.52 477.02,354.01" fill="#b3c9cd"/>
<line x1="486.60" y1="334.20" x2="467.54" y2="306.05" stroke="#3e6a8d" stroke-width="1.1"/>
<line x1="486.60" y1="334.20" x2="456.48" y2="318.42" stroke="#3e6a8d" stroke-width="1.1"/>
<line x1="486.60" y1="334.20" x2="452.60" y2="334.56" stroke="#3e6a8d" stroke-width="1.1"/>
<line x1="486.60" y1="334.20" x2="456.82" y2="350.61" stroke="#3e6a8d" stroke-width="1.1"/>
<polygon points="521.50,297.10 520.15,297.42 518.67,297.90 517.18,298.56 515.78,299.45 514.60,300.60 513.64,302.05 512.82,303.78 512.13,305.73 511.56,307.82 511.10,310.00 510.83,312.40 510.76,315.05 510.77,317.77 510.72,320.36 510.50,322.60 510.14,324.49 509.73,326.17 509.20,327.65 508.51,328.95 507.60,330.10 506.49,331.07 505.22,331.85 503.76,332.48 502.06,332.98 500.10,333.40 497.50,333.50 494.27,333.26 490.99,333.03 488.22,333.16 486.50,334.00 486.05,335.83 486.49,338.42 487.52,341.35 488.82,344.21 490.10,346.60 491.36,348.51 492.82,350.21 494.44,351.70 496.21,353.00 498.10,354.10 500.14,354.98 502.36,355.65 504.69,356.13 507.09,356.44 509.50,356.60 512.02,356.64 514.70,356.53 517.37,356.25 519.89,355.78 522.10,355.10 524.02,354.21 525.76,353.12 527.28,351.84 528.57,350.33 529.60,348.60 530.31,346.71 530.70,344.68 530.90,342.38 530.99,339.73 531.10,336.60 531.20,332.60 531.22,327.80 531.19,322.80 531.14,318.20 531.10,314.60 531.02,312.16 530.87,310.49 530.74,309.33 530.73,308.45 530.90,307.60 531.41,306.89 532.19,306.48 533.05,306.20 533.75,305.90 534.10,305.40 534.05,304.66 533.73,303.77 533.23,302.83 532.59,301.92 531.90,301.10 531.12,300.37 530.21,299.67 529.20,299.02 528.15,298.46 527.10,298.00 526.05,297.61 524.98,297.27 523.87,297.04 522.72,296.96" fill="#d5e3e5"/>
<circle cx="522.10" cy="305.60" r="2.5" fill="#3e6a8d"/>
<polygon points="607.65,328.56 607.10,325.48 606.66,322.65 606.32,320.06 606.10,317.73 605.99,315.64 605.99,313.80 606.10,312.21 606.31,310.87 606.64,309.78 607.08,308.93 607.96,307.25 609.23,305.86 610.83,304.84 612.64,304.27 614.53,304.19 616.37,304.60 618.05,305.47 619.45,306.75 620.46,308.35 621.03,310.15 621.12,312.04 620.71,313.89 620.50,314.82 620.05,315.87 619.35,317.04 618.41,318.32 617.23,319.73 615.80,321.26 614.13,322.90 612.22,324.67 610.06,326.56" fill="#d5e3e5"/>
<polygon points="610.08,330.20 611.05,327.23 612.00,324.52 612.93,322.09 613.84,319.93 614.73,318.03 615.60,316.41 616.45,315.06 617.27,313.99 618.08,313.18 618.86,312.64 620.43,311.58 622.22,310.95 624.10,310.81 625.96,311.17 627.67,311.99 629.10,313.22 630.17,314.79 630.79,316.58 630.93,318.46 630.58,320.32 629.75,322.03 628.52,323.46 627.90,324.18 627.00,324.89 625.84,325.59 624.40,326.28 622.69,326.96 620.71,327.63 618.46,328.29 615.94,328.94 613.14,329.58" fill="#d5e3e5"/>
<polygon points="611.43,332.80 613.70,330.64 615.82,328.70 617.79,327.00 619.61,325.53 621.29,324.28 622.83,323.26 624.21,322.48 625.45,321.92 626.54,321.59 627.49,321.49 629.37,321.29 631.24,321.59 632.97,322.36 634.44,323.55 635.55,325.08 636.23,326.85 636.43,328.73 636.13,330.60 635.36,332.33 634.17,333.80 632.64,334.91 630.87,335.59 629.98,335.93 628.86,336.13 627.50,336.20 625.91,336.12 624.09,335.91 622.02,335.57 619.73,335.08 617.20,334.46 614.43,333.70" fill="#d5e3e5"/>
<polygon points="611.40,335.73 614.42,334.90 617.20,334.20 619.74,333.63 622.05,333.19 624.12,332.89 625.95,332.72 627.54,332.68 628.90,332.78 630.02,333.00 630.90,333.36 632.65,334.08 634.15,335.23 635.31,336.72 636.05,338.47 636.30,340.34 636.06,342.22 635.35,343.97 634.20,345.48 632.70,346.64 630.96,347.37 629.08,347.62 627.20,347.39 626.26,347.26 625.18,346.91 623.95,346.33 622.58,345.51 621.07,344.46 619.42,343.18 617.63,341.66 615.70,339.92 613.62,337.94" fill="#d5e3e5"/>
<polygon points="609.99,338.29 613.04,338.99 615.82,339.69 618.33,340.39 620.57,341.10 622.53,341.81 624.23,342.53 625.65,343.25 626.80,343.97 627.67,344.70 628.28,345.44 629.48,346.90 630.27,348.62 630.58,350.49 630.40,352.37 629.74,354.14 628.64,355.68 627.18,356.89 625.46,357.67 623.59,357.98 621.70,357.80 619.93,357.14 618.39,356.04 617.62,355.49 616.83,354.66 616.03,353.57 615.21,352.20 614.37,350.56 613.53,348.65 612.66,346.47 611.79,344.01 610.89,341.29" fill="#d5e3e5"/>
<polygon points="605.60,334.20 607.90,312.32 610.85,312.84 613.70,313.74 616.40,315.03 618.90,316.68 621.16,318.64 623.12,320.90 624.77,323.40 626.06,326.10 626.96,328.95 627.48,331.90 627.59,334.89 627.29,337.87 626.59,340.78 625.51,343.57 624.05,346.18 622.25,348.58 620.15,350.70 617.77,352.52 615.18,354.01" fill="#b3c9cd"/>
<line x1="605.60" y1="334.20" x2="624.66" y2="306.05" stroke="#3e6a8d" stroke-width="1.1"/>
<line x1="605.60" y1="334.20" x2="635.72" y2="318.42" stroke="#3e6a8d" stroke-width="1.1"/>
<line x1="605.60" y1="334.20" x2="639.60" y2="334.56" stroke="#3e6a8d" stroke-width="1.1"/>
<line x1="605.60" y1="334.20" x2="635.38" y2="350.61" stroke="#3e6a8d" stroke-width="1.1"/>
<polygon points="570.70,297.10 572.05,297.42 573.53,297.90 575.02,298.56 576.42,299.45 577.60,300.60 578.56,302.05 579.38,303.78 580.07,305.73 580.64,307.82 581.10,310.00 581.37,312.40 581.44,315.05 581.43,317.77 581.48,320.36 581.70,322.60 582.06,324.49 582.47,326.17 583.00,327.65 583.69,328.95 584.60,330.10 585.71,331.07 586.98,331.85 588.44,332.48 590.14,332.98 592.10,333.40 594.70,333.50 597.93,333.26 601.21,333.03 603.98,333.16 605.70,334.00 606.15,335.83 605.71,338.42 604.68,341.35 603.38,344.21 602.10,346.60 600.84,348.51 599.38,350.21 597.76,351.70 595.99,353.00 594.10,354.10 592.06,354.98 589.84,355.65 587.51,356.13 585.11,356.44 582.70,356.60 580.18,356.64 577.50,356.53 574.83,356.25 572.31,355.78 570.10,355.10 568.18,354.21 566.44,353.12 564.92,351.84 563.63,350.33 562.60,348.60 561.89,346.71 561.50,344.68 561.30,342.38 561.21,339.73 561.10,336.60 561.00,332.60 560.98,327.80 561.01,322.80 561.06,318.20 561.10,314.60 561.18,312.16 561.33,310.49 561.46,309.33 561.47,308.45 561.30,307.60 560.79,306.89 560.01,306.48 559.15,306.20 558.45,305.90 558.10,305.40 558.15,304.66 558.47,303.77 558.97,302.83 559.61,301.92 560.30,301.10 561.08,300.37 561.99,299.67 563.00,299.02 564.05,298.46 565.10,298.00 566.15,297.61 567.22,297.27 568.33,297.04 569.48,296.96" fill="#d5e3e5"/>
<circle cx="570.10" cy="305.60" r="2.5" fill="#3e6a8d"/>
<polygon points="483.88,362.65 483.68,362.34 483.28,361.39 483.00,359.89 483.16,358.07 483.94,356.25 485.39,354.76 487.36,353.85 489.57,353.68 491.67,354.30 493.36,355.65 494.45,357.61 494.89,360.03 494.81,362.72 494.41,365.51 493.97,368.20 493.68,370.62 493.66,372.59 493.85,374.00 494.13,374.80 494.28,375.04 494.06,374.86 493.32,374.44 491.97,374.00 490.02,373.69 487.60,373.55 484.87,373.52 482.06,373.42 479.39,373.04 477.08,372.19 475.34,370.78 474.30,368.87 474.06,366.69 474.61,364.55 475.85,362.77 477.57,361.60 479.50,361.14 481.32,361.31 482.75,361.84 483.61,362.40" fill="#ffffff"/>
<polygon points="608.32,362.65 608.59,362.40 609.45,361.84 610.88,361.31 612.70,361.14 614.63,361.60 616.35,362.77 617.59,364.55 618.14,366.69 617.90,368.87 616.86,370.78 615.12,372.19 612.81,373.04 610.14,373.42 607.33,373.52 604.60,373.55 602.18,373.69 600.23,374.00 598.88,374.44 598.14,374.86 597.92,375.04 598.07,374.80 598.35,374.00 598.54,372.59 598.52,370.62 598.23,368.20 597.79,365.51 597.39,362.72 597.31,360.03 597.75,357.61 598.84,355.65 600.53,354.30 602.63,353.68 604.84,353.85 606.81,354.76 608.26,356.25 609.04,358.07 609.20,359.89 608.92,361.39 608.52,362.34" fill="#ffffff"/>
<polygon points="268.40,272.60 269.51,269.44 270.48,266.43 271.32,263.59 272.03,260.91 272.61,258.39 273.05,256.03 273.36,253.83 273.54,251.79 273.59,249.92 273.50,248.20 273.33,246.88 272.82,245.65 272.01,244.59 270.95,243.78 269.72,243.27 268.40,243.10 267.08,243.27 265.85,243.78 264.79,244.59 263.98,245.65 263.47,246.88 263.30,248.20 263.21,249.92 263.26,251.79 263.44,253.83 263.75,256.03 264.19,258.39 264.77,260.91 265.48,263.59 266.32,266.43 267.29,269.44" fill="#d5e3e5"/>
<polygon points="275.24,273.81 277.36,271.21 279.31,268.72 281.07,266.34 282.65,264.06 284.06,261.89 285.28,259.82 286.32,257.86 287.19,256.01 287.87,254.26 288.38,252.62 288.67,251.32 288.61,249.99 288.21,248.72 287.49,247.60 286.51,246.70 285.33,246.09 284.03,245.80 282.70,245.86 281.43,246.26 280.31,246.97 279.41,247.95 278.79,249.13 278.13,250.72 277.53,252.49 277.00,254.47 276.54,256.64 276.15,259.01 275.83,261.58 275.58,264.34 275.39,267.30 275.28,270.45" fill="#b3c9cd"/>
<polygon points="281.26,277.28 284.14,275.57 286.81,273.89 289.29,272.26 291.55,270.66 293.61,269.10 295.47,267.57 297.12,266.09 298.57,264.64 299.81,263.24 300.85,261.87 301.56,260.74 301.96,259.47 302.02,258.14 301.73,256.84 301.12,255.66 300.22,254.68 299.10,253.97 297.83,253.57 296.50,253.51 295.20,253.80 294.01,254.41 293.03,255.31 291.86,256.57 290.69,258.03 289.52,259.71 288.35,261.59 287.17,263.69 285.99,265.99 284.81,268.50 283.63,271.22 282.44,274.14" fill="#d5e3e5"/>
<polygon points="285.72,282.60 289.01,281.98 292.10,281.32 294.98,280.63 297.66,279.90 300.13,279.14 302.40,278.34 304.46,277.51 306.31,276.65 307.96,275.75 309.40,274.82 310.46,274.01 311.27,272.95 311.78,271.72 311.95,270.40 311.78,269.08 311.27,267.85 310.46,266.79 309.40,265.98 308.17,265.47 306.85,265.30 305.53,265.47 304.30,265.98 302.77,266.77 301.17,267.74 299.50,268.92 297.75,270.29 295.93,271.85 294.03,273.61 292.06,275.56 290.02,277.71 287.91,280.06" fill="#d5e3e5"/>
<polygon points="288.10,289.13 291.40,289.67 294.53,290.11 297.48,290.44 300.24,290.67 302.82,290.80 305.22,290.83 307.44,290.75 309.48,290.58 311.34,290.30 313.01,289.91 314.28,289.51 315.40,288.80 316.30,287.82 316.92,286.63 317.21,285.33 317.15,284.00 316.75,282.73 316.03,281.61 315.05,280.71 313.87,280.10 312.57,279.81 311.24,279.87 309.54,280.08 307.70,280.45 305.72,280.98 303.61,281.67 301.36,282.52 298.98,283.52 296.46,284.68 293.81,286.01 291.02,287.49" fill="#3e6a8d"/>
<polygon points="288.10,296.07 291.02,297.71 293.81,299.19 296.46,300.52 298.98,301.68 301.36,302.68 303.61,303.53 305.72,304.22 307.70,304.75 309.54,305.12 311.24,305.33 312.57,305.39 313.87,305.10 315.05,304.49 316.03,303.59 316.75,302.47 317.15,301.20 317.21,299.87 316.92,298.57 316.30,297.38 315.40,296.40 314.28,295.69 313.01,295.29 311.34,294.90 309.48,294.62 307.44,294.45 305.22,294.37 302.82,294.40 300.24,294.53 297.48,294.76 294.53,295.09 291.40,295.53" fill="#b3c9cd"/>
<polygon points="285.72,302.60 287.91,305.14 290.02,307.49 292.06,309.64 294.03,311.59 295.93,313.35 297.75,314.91 299.50,316.28 301.17,317.46 302.77,318.43 304.30,319.22 305.53,319.73 306.85,319.90 308.17,319.73 309.40,319.22 310.46,318.41 311.27,317.35 311.78,316.12 311.95,314.80 311.78,313.48 311.27,312.25 310.46,311.19 309.40,310.38 307.96,309.45 306.31,308.55 304.46,307.69 302.40,306.86 300.13,306.06 297.66,305.30 294.98,304.57 292.10,303.88 289.01,303.22" fill="#d5e3e5"/>
<polygon points="281.26,307.92 282.44,311.06 283.63,313.98 284.81,316.70 285.99,319.21 287.17,321.51 288.35,323.61 289.52,325.49 290.69,327.17 291.86,328.63 293.03,329.89 294.01,330.79 295.20,331.40 296.50,331.69 297.83,331.63 299.10,331.23 300.22,330.52 301.12,329.54 301.73,328.36 302.02,327.06 301.96,325.73 301.56,324.46 300.85,323.33 299.81,321.96 298.57,320.56 297.12,319.11 295.47,317.63 293.61,316.10 291.55,314.54 289.29,312.94 286.81,311.31 284.14,309.63" fill="#b3c9cd"/>
<polygon points="275.24,311.39 275.28,314.75 275.39,317.90 275.58,320.86 275.83,323.62 276.15,326.19 276.54,328.56 277.00,330.73 277.53,332.71 278.13,334.48 278.79,336.07 279.41,337.25 280.31,338.23 281.43,338.94 282.70,339.34 284.03,339.40 285.33,339.11 286.51,338.50 287.49,337.60 288.21,336.48 288.61,335.21 288.67,333.88 288.38,332.58 287.87,330.94 287.19,329.19 286.32,327.34 285.28,325.38 284.06,323.31 282.65,321.14 281.07,318.86 279.31,316.48 277.36,313.99" fill="#d5e3e5"/>
<polygon points="268.40,312.60 267.29,315.76 266.32,318.77 265.48,321.61 264.77,324.29 264.19,326.81 263.75,329.17 263.44,331.37 263.26,333.41 263.21,335.28 263.30,337.00 263.47,338.32 263.98,339.55 264.79,340.61 265.85,341.42 267.08,341.93 268.40,342.10 269.72,341.93 270.95,341.42 272.01,340.61 272.82,339.55 273.33,338.32 273.50,337.00 273.59,335.28 273.54,333.41 273.36,331.37 273.05,329.17 272.61,326.81 272.03,324.29 271.32,321.61 270.48,318.77 269.51,315.76" fill="#b3c9cd"/>
<polygon points="261.56,311.39 259.44,313.99 257.49,316.48 255.73,318.86 254.15,321.14 252.74,323.31 251.52,325.38 250.48,327.34 249.61,329.19 248.93,330.94 248.42,332.58 248.13,333.88 248.19,335.21 248.59,336.48 249.31,337.60 250.29,338.50 251.47,339.11 252.77,339.40 254.10,339.34 255.37,338.94 256.49,338.23 257.39,337.25 258.01,336.07 258.67,334.48 259.27,332.71 259.80,330.73 260.26,328.56 260.65,326.19 260.97,323.62 261.22,320.86 261.41,317.90 261.52,314.75" fill="#3e6a8d"/>
<polygon points="255.54,307.92 252.66,309.63 249.99,311.31 247.51,312.94 245.25,314.54 243.19,316.10 241.33,317.63 239.68,319.11 238.23,320.56 236.99,321.96 235.95,323.33 235.24,324.46 234.84,325.73 234.78,327.06 235.07,328.36 235.68,329.54 236.58,330.52 237.70,331.23 238.97,331.63 240.30,331.69 241.60,331.40 242.79,330.79 243.77,329.89 244.94,328.63 246.11,327.17 247.28,325.49 248.45,323.61 249.63,321.51 250.81,319.21 251.99,316.70 253.17,313.98 254.36,311.06" fill="#b3c9cd"/>
<polygon points="251.08,302.60 247.79,303.22 244.70,303.88 241.82,304.57 239.14,305.30 236.67,306.06 234.40,306.86 232.34,307.69 230.49,308.55 228.84,309.45 227.40,310.38 226.34,311.19 225.53,312.25 225.02,313.48 224.85,314.80 225.02,316.12 225.53,317.35 226.34,318.41 227.40,319.22 228.63,319.73 229.95,319.90 231.27,319.73 232.50,319.22 234.03,318.43 235.63,317.46 237.30,316.28 239.05,314.91 240.87,313.35 242.77,311.59 244.74,309.64 246.78,307.49 248.89,305.14" fill="#d5e3e5"/>
<polygon points="248.70,296.07 245.40,295.53 242.27,295.09 239.32,294.76 236.56,294.53 233.98,294.40 231.58,294.37 229.36,294.45 227.32,294.62 225.46,294.90 223.79,295.29 222.52,295.69 221.40,296.40 220.50,297.38 219.88,298.57 219.59,299.87 219.65,301.20 220.05,302.47 220.77,303.59 221.75,304.49 222.93,305.10 224.23,305.39 225.56,305.33 227.26,305.12 229.10,304.75 231.08,304.22 233.19,303.53 235.44,302.68 237.82,301.68 240.34,300.52 242.99,299.19 245.78,297.71" fill="#b3c9cd"/>
<polygon points="248.70,289.13 245.78,287.49 242.99,286.01 240.34,284.68 237.82,283.52 235.44,282.52 233.19,281.67 231.08,280.98 229.10,280.45 227.26,280.08 225.56,279.87 224.23,279.81 222.93,280.10 221.75,280.71 220.77,281.61 220.05,282.73 219.65,284.00 219.59,285.33 219.88,286.63 220.50,287.82 221.40,288.80 222.52,289.51 223.79,289.91 225.46,290.30 227.32,290.58 229.36,290.75 231.58,290.83 233.98,290.80 236.56,290.67 239.32,290.44 242.27,290.11 245.40,289.67" fill="#d5e3e5"/>
<polygon points="251.08,282.60 248.89,280.06 246.78,277.71 244.74,275.56 242.77,273.61 240.87,271.85 239.05,270.29 237.30,268.92 235.63,267.74 234.03,266.77 232.50,265.98 231.27,265.47 229.95,265.30 228.63,265.47 227.40,265.98 226.34,266.79 225.53,267.85 225.02,269.08 224.85,270.40 225.02,271.72 225.53,272.95 226.34,274.01 227.40,274.82 228.84,275.75 230.49,276.65 232.34,277.51 234.40,278.34 236.67,279.14 239.14,279.90 241.82,280.63 244.70,281.32 247.79,281.98" fill="#b3c9cd"/>
<polygon points="255.54,277.28 254.36,274.14 253.17,271.22 251.99,268.50 250.81,265.99 249.63,263.69 248.45,261.59 247.28,259.71 246.11,258.03 244.94,256.57 243.77,255.31 242.79,254.41 241.60,253.80 240.30,253.51 238.97,253.57 237.70,253.97 236.58,254.68 235.68,255.66 235.07,256.84 234.78,258.14 234.84,259.47 235.24,260.74 235.95,261.87 236.99,263.24 238.23,264.64 239.68,266.09 241.33,267.57 243.19,269.10 245.25,270.66 247.51,272.26 249.99,273.89 252.66,275.57" fill="#3e6a8d"/>
<polygon points="261.56,273.81 261.52,270.45 261.41,267.30 261.22,264.34 260.97,261.58 260.65,259.01 260.26,256.64 259.80,254.47 259.27,252.49 258.67,250.72 258.01,249.13 257.39,247.95 256.49,246.97 255.37,246.26 254.10,245.86 252.77,245.80 251.47,246.09 250.29,246.70 249.31,247.60 248.59,248.72 248.19,249.99 248.13,251.32 248.42,252.62 248.93,254.26 249.61,256.01 250.48,257.86 251.52,259.82 252.74,261.89 254.15,264.06 255.73,266.34 257.49,268.72 259.44,271.21" fill="#b3c9cd"/>
<polygon points="268.40,292.60 269.25,290.92 269.99,289.34 270.63,287.88 271.18,286.52 271.62,285.28 271.96,284.14 272.19,283.12 272.33,282.20 272.37,281.40 272.30,280.70 272.17,279.69 271.78,278.75 271.16,277.94 270.35,277.32 269.41,276.93 268.40,276.80 267.39,276.93 266.45,277.32 265.64,277.94 265.02,278.75 264.63,279.69 264.50,280.70 264.43,281.40 264.47,282.20 264.61,283.12 264.84,284.14 265.18,285.28 265.62,286.52 266.17,287.88 266.81,289.34 267.55,290.92" fill="#ffffff"/>
<polygon points="268.40,292.60 270.28,292.49 272.02,292.35 273.61,292.17 275.05,291.97 276.35,291.73 277.50,291.45 278.51,291.15 279.37,290.81 280.09,290.43 280.66,290.03 281.46,289.41 282.08,288.60 282.47,287.66 282.61,286.65 282.47,285.64 282.08,284.70 281.46,283.89 280.66,283.27 279.72,282.88 278.71,282.75 277.70,282.88 276.76,283.27 276.12,283.56 275.44,284.00 274.71,284.57 273.94,285.29 273.13,286.15 272.27,287.16 271.37,288.30 270.42,289.59 269.43,291.03" fill="#b3c9cd"/>
<polygon points="268.40,292.60 269.43,294.17 270.42,295.61 271.37,296.90 272.27,298.04 273.13,299.05 273.94,299.91 274.71,300.63 275.44,301.20 276.12,301.64 276.76,301.93 277.70,302.32 278.71,302.45 279.72,302.32 280.66,301.93 281.46,301.31 282.08,300.50 282.47,299.56 282.61,298.55 282.47,297.54 282.08,296.60 281.46,295.79 280.66,295.17 280.09,294.77 279.37,294.39 278.51,294.05 277.50,293.75 276.35,293.47 275.05,293.23 273.61,293.03 272.02,292.85 270.28,292.71" fill="#ffffff"/>
<polygon points="268.40,292.60 267.55,294.28 266.81,295.86 266.17,297.32 265.62,298.68 265.18,299.92 264.84,301.06 264.61,302.08 264.47,303.00 264.43,303.80 264.50,304.50 264.63,305.51 265.02,306.45 265.64,307.26 266.45,307.88 267.39,308.27 268.40,308.40 269.41,308.27 270.35,307.88 271.16,307.26 271.78,306.45 272.17,305.51 272.30,304.50 272.37,303.80 272.33,303.00 272.19,302.08 271.96,301.06 271.62,299.92 271.18,298.68 270.63,297.32 269.99,295.86 269.25,294.28" fill="#b3c9cd"/>
<polygon points="268.40,292.60 266.52,292.71 264.78,292.85 263.19,293.03 261.75,293.23 260.45,293.47 259.30,293.75 258.29,294.05 257.43,294.39 256.71,294.77 256.14,295.17 255.34,295.79 254.72,296.60 254.33,297.54 254.19,298.55 254.33,299.56 254.72,300.50 255.34,301.31 256.14,301.93 257.08,302.32 258.09,302.45 259.10,302.32 260.04,301.93 260.68,301.64 261.36,301.20 262.09,300.63 262.86,299.91 263.67,299.05 264.53,298.04 265.43,296.90 266.38,295.61 267.37,294.17" fill="#ffffff"/>
<polygon points="268.40,292.60 267.37,291.03 266.38,289.59 265.43,288.30 264.53,287.16 263.67,286.15 262.86,285.29 262.09,284.57 261.36,284.00 260.68,283.56 260.04,283.27 259.10,282.88 258.09,282.75 257.08,282.88 256.14,283.27 255.34,283.89 254.72,284.70 254.33,285.64 254.19,286.65 254.33,287.66 254.72,288.60 255.34,289.41 256.14,290.03 256.71,290.43 257.43,290.81 258.29,291.15 259.30,291.45 260.45,291.73 261.75,291.97 263.19,292.17 264.78,292.35 266.52,292.49" fill="#b3c9cd"/>
<polygon points="283.40,220.10 283.02,216.63 281.91,213.33 280.13,210.37 277.75,207.90 274.91,206.04 271.74,204.89 268.40,204.50 265.06,204.89 261.89,206.04 259.05,207.90 256.67,210.37 254.89,213.33 253.78,216.63 253.40,220.10 253.40,220.10 253.43,221.12 253.46,222.58 253.53,224.18 253.70,225.60 253.97,226.82 254.32,227.98 254.74,229.02 255.20,229.90 255.71,230.63 256.28,231.24 256.89,231.65 257.50,231.80 258.15,231.68 258.84,231.33 259.51,230.74 260.10,229.90 260.59,228.78 261.01,227.38 261.40,225.80 261.80,224.10 262.24,222.07 262.71,219.74 263.11,217.59 263.40,216.10 263.40,216.10 263.43,217.61 263.46,219.79 263.52,222.12 263.60,224.10 263.69,225.62 263.80,226.94 263.96,228.10 264.20,229.10 264.55,229.95 264.99,230.63 265.48,231.17 266.00,231.60 266.56,231.89 267.16,232.04 267.79,232.09 268.40,232.10 269.01,232.09 269.64,232.04 270.24,231.89 270.80,231.60 271.32,231.17 271.81,230.63 272.25,229.95 272.60,229.10 272.84,228.10 273.00,226.94 273.11,225.62 273.20,224.10 273.28,222.12 273.34,219.79 273.37,217.61 273.40,216.10 273.40,216.10 273.69,217.59 274.09,219.74 274.56,222.07 275.00,224.10 275.40,225.80 275.79,227.38 276.21,228.78 276.70,229.90 277.29,230.74 277.96,231.33 278.65,231.68 279.30,231.80 279.91,231.65 280.52,231.24 281.09,230.63 281.60,229.90 282.06,229.02 282.47,227.98 282.83,226.82 283.10,225.60 283.27,224.18 283.34,222.58 283.37,221.12 283.40,220.10" fill="#3e6a8d"/>
<line x1="273.40" y1="216.10" x2="273.07" y2="214.73" stroke="#c93400" stroke-width="0.7"/>
<line x1="273.07" y1="214.73" x2="272.68" y2="213.36" stroke="#c93400" stroke-width="0.7"/>
<line x1="272.68" y1="213.36" x2="272.22" y2="212.00" stroke="#c93400" stroke-width="0.7"/>
<line x1="272.22" y1="212.00" x2="271.70" y2="210.65" stroke="#c93400" stroke-width="0.7"/>
<line x1="271.70" y1="210.65" x2="271.12" y2="209.30" stroke="#c93400" stroke-width="0.7"/>
<line x1="271.12" y1="209.30" x2="270.47" y2="207.96" stroke="#c93400" stroke-width="0.7"/>
<line x1="270.47" y1="207.96" x2="269.77" y2="206.63" stroke="#c93400" stroke-width="0.7"/>
<line x1="269.77" y1="206.63" x2="269.00" y2="205.30" stroke="#c93400" stroke-width="0.7"/>
<line x1="263.40" y1="216.10" x2="263.73" y2="214.73" stroke="#c93400" stroke-width="0.7"/>
<line x1="263.73" y1="214.73" x2="264.12" y2="213.36" stroke="#c93400" stroke-width="0.7"/>
<line x1="264.12" y1="213.36" x2="264.58" y2="212.00" stroke="#c93400" stroke-width="0.7"/>
<line x1="264.58" y1="212.00" x2="265.10" y2="210.65" stroke="#c93400" stroke-width="0.7"/>
<line x1="265.10" y1="210.65" x2="265.68" y2="209.30" stroke="#c93400" stroke-width="0.7"/>
<line x1="265.68" y1="209.30" x2="266.32" y2="207.96" stroke="#c93400" stroke-width="0.7"/>
<line x1="266.32" y1="207.96" x2="267.03" y2="206.63" stroke="#c93400" stroke-width="0.7"/>
<line x1="267.03" y1="206.63" x2="267.80" y2="205.30" stroke="#c93400" stroke-width="0.7"/>
<polygon points="268.40,203.60 269.31,199.17 270.11,194.91 270.81,190.82 271.39,186.89 271.87,183.13 272.23,179.53 272.49,176.10 272.63,172.83 272.67,169.73 272.60,166.80 272.46,165.71 272.04,164.70 271.37,163.83 270.50,163.16 269.49,162.74 268.40,162.60 267.31,162.74 266.30,163.16 265.43,163.83 264.76,164.70 264.34,165.71 264.20,166.80 264.13,169.73 264.17,172.83 264.31,176.10 264.57,179.53 264.94,183.13 265.41,186.89 265.99,190.82 266.69,194.91 267.49,199.17" fill="#d5e3e5"/>
<polygon points="261.70,174.20 259.39,176.55 257.26,178.81 255.32,180.98 253.57,183.06 252.00,185.06 250.61,186.97 249.41,188.79 248.39,190.53 247.56,192.18 246.92,193.74 246.52,194.98 246.46,196.29 246.73,197.56 247.33,198.73 248.20,199.69 249.30,200.40 250.54,200.80 251.85,200.86 253.12,200.59 254.28,199.99 255.25,199.12 255.96,198.02 256.76,196.53 257.51,194.84 258.21,192.96 258.85,190.87 259.45,188.59 260.00,186.11 260.50,183.43 260.95,180.55 261.35,177.47" fill="#d5e3e5"/>
<polygon points="275.10,174.20 275.45,177.47 275.85,180.55 276.30,183.43 276.80,186.11 277.35,188.59 277.95,190.87 278.59,192.96 279.29,194.84 280.04,196.53 280.84,198.02 281.55,199.12 282.52,199.99 283.68,200.59 284.95,200.86 286.26,200.80 287.50,200.40 288.60,199.69 289.47,198.73 290.07,197.56 290.34,196.29 290.28,194.98 289.88,193.74 289.24,192.18 288.41,190.53 287.39,188.79 286.19,186.97 284.80,185.06 283.23,183.06 281.48,180.98 279.54,178.81 277.41,176.55" fill="#d5e3e5"/>
<polygon points="240.83,226.00 238.55,223.36 235.77,221.27 232.62,219.84 229.27,219.15 225.87,219.23 222.60,220.07 219.63,221.64 217.10,223.86 215.14,226.60 213.85,229.74 213.29,233.13 213.50,236.58 214.45,239.92 216.11,243.00 216.11,243.00 216.70,243.82 217.56,245.01 218.53,246.28 219.47,247.36 220.38,248.21 221.33,248.96 222.26,249.59 223.14,250.05 223.98,250.37 224.79,250.54 225.52,250.54 226.11,250.32 226.58,249.85 226.95,249.17 227.16,248.30 227.18,247.28 226.95,246.07 226.50,244.68 225.93,243.16 225.29,241.53 224.51,239.61 223.57,237.43 222.69,235.42 222.08,234.03 222.08,234.03 222.96,235.26 224.22,237.04 225.59,238.93 226.78,240.51 227.72,241.71 228.55,242.74 229.34,243.61 230.10,244.30 230.87,244.79 231.62,245.11 232.33,245.28 233.00,245.34 233.63,245.26 234.21,245.04 234.75,244.73 235.27,244.39 235.77,244.03 236.25,243.64 236.66,243.17 236.96,242.62 237.15,241.97 237.25,241.25 237.22,240.44 237.03,239.54 236.66,238.57 236.14,237.53 235.47,236.38 234.69,235.08 233.64,233.40 232.36,231.44 231.16,229.63 230.32,228.37 230.32,228.37 231.40,229.44 232.96,230.98 234.66,232.63 236.17,234.06 237.46,235.23 238.68,236.32 239.82,237.23 240.86,237.87 241.82,238.23 242.71,238.34 243.48,238.24 244.08,237.97 244.50,237.49 244.76,236.81 244.89,235.99 244.90,235.10 244.78,234.12 244.53,233.02 244.16,231.86 243.70,230.71 243.03,229.44 242.19,228.08 241.38,226.86 240.83,226.00" fill="#3e6a8d"/>
<line x1="230.32" y1="228.37" x2="229.27" y2="227.43" stroke="#c93400" stroke-width="0.7"/>
<line x1="229.27" y1="227.43" x2="228.18" y2="226.53" stroke="#c93400" stroke-width="0.7"/>
<line x1="228.18" y1="226.53" x2="227.03" y2="225.66" stroke="#c93400" stroke-width="0.7"/>
<line x1="227.03" y1="225.66" x2="225.84" y2="224.84" stroke="#c93400" stroke-width="0.7"/>
<line x1="225.84" y1="224.84" x2="224.59" y2="224.06" stroke="#c93400" stroke-width="0.7"/>
<line x1="224.59" y1="224.06" x2="223.30" y2="223.32" stroke="#c93400" stroke-width="0.7"/>
<line x1="223.30" y1="223.32" x2="221.97" y2="222.62" stroke="#c93400" stroke-width="0.7"/>
<line x1="221.97" y1="222.62" x2="220.58" y2="221.96" stroke="#c93400" stroke-width="0.7"/>
<line x1="222.08" y1="234.03" x2="221.58" y2="232.72" stroke="#c93400" stroke-width="0.7"/>
<line x1="221.58" y1="232.72" x2="221.13" y2="231.37" stroke="#c93400" stroke-width="0.7"/>
<line x1="221.13" y1="231.37" x2="220.74" y2="229.99" stroke="#c93400" stroke-width="0.7"/>
<line x1="220.74" y1="229.99" x2="220.40" y2="228.58" stroke="#c93400" stroke-width="0.7"/>
<line x1="220.40" y1="228.58" x2="220.11" y2="227.14" stroke="#c93400" stroke-width="0.7"/>
<line x1="220.11" y1="227.14" x2="219.88" y2="225.67" stroke="#c93400" stroke-width="0.7"/>
<line x1="219.88" y1="225.67" x2="219.71" y2="224.17" stroke="#c93400" stroke-width="0.7"/>
<line x1="219.71" y1="224.17" x2="219.59" y2="222.64" stroke="#c93400" stroke-width="0.7"/>
<polygon points="217.99,219.25 216.23,215.09 214.48,211.12 212.73,207.35 210.99,203.79 209.25,200.42 207.51,197.24 205.78,194.27 204.05,191.50 202.33,188.92 200.61,186.55 199.87,185.73 198.95,185.13 197.91,184.80 196.82,184.74 195.74,184.97 194.77,185.46 193.95,186.20 193.36,187.12 193.02,188.16 192.96,189.25 193.19,190.33 193.68,191.30 195.29,193.76 197.07,196.29 199.04,198.90 201.20,201.58 203.54,204.34 206.06,207.17 208.77,210.08 211.66,213.06 214.73,216.12" fill="#d5e3e5"/>
<polygon points="195.82,198.82 195.24,202.06 194.77,205.13 194.40,208.02 194.13,210.73 193.97,213.27 193.91,215.62 193.95,217.81 194.10,219.81 194.35,221.64 194.70,223.29 195.08,224.55 195.76,225.66 196.71,226.55 197.86,227.17 199.13,227.47 200.44,227.43 201.69,227.06 202.80,226.37 203.69,225.42 204.31,224.28 204.61,223.01 204.58,221.70 204.39,220.02 204.05,218.21 203.56,216.26 202.91,214.17 202.11,211.95 201.16,209.59 200.06,207.10 198.80,204.48 197.38,201.72" fill="#d5e3e5"/>
<polygon points="206.86,191.23 209.00,193.73 211.07,196.04 213.07,198.16 215.00,200.08 216.86,201.81 218.65,203.36 220.36,204.71 222.01,205.87 223.58,206.83 225.08,207.61 226.29,208.11 227.58,208.28 228.88,208.12 230.08,207.62 231.12,206.83 231.92,205.80 232.42,204.59 232.60,203.30 232.43,202.00 231.93,200.80 231.14,199.76 230.11,198.96 228.69,198.04 227.07,197.15 225.25,196.30 223.23,195.47 221.01,194.68 218.58,193.93 215.95,193.20 213.12,192.51 210.09,191.85" fill="#d5e3e5"/>
<polygon points="320.69,243.00 322.35,239.92 323.30,236.58 323.51,233.13 322.95,229.74 321.66,226.60 319.70,223.86 317.17,221.64 314.20,220.07 310.93,219.23 307.53,219.15 304.18,219.84 301.03,221.27 298.25,223.36 295.97,226.00 295.97,226.00 295.42,226.86 294.61,228.08 293.77,229.44 293.10,230.71 292.64,231.86 292.27,233.02 292.02,234.12 291.90,235.10 291.91,235.99 292.04,236.81 292.30,237.49 292.72,237.97 293.32,238.24 294.09,238.34 294.98,238.23 295.94,237.87 296.98,237.23 298.12,236.32 299.34,235.23 300.63,234.06 302.14,232.63 303.84,230.98 305.40,229.44 306.48,228.37 306.48,228.37 305.64,229.63 304.44,231.44 303.16,233.40 302.11,235.08 301.33,236.38 300.66,237.53 300.14,238.57 299.77,239.54 299.58,240.44 299.55,241.25 299.65,241.97 299.84,242.62 300.14,243.17 300.55,243.64 301.03,244.03 301.53,244.39 302.05,244.73 302.59,245.04 303.17,245.26 303.80,245.34 304.47,245.28 305.18,245.11 305.93,244.79 306.70,244.30 307.46,243.61 308.25,242.74 309.08,241.71 310.02,240.51 311.21,238.93 312.58,237.04 313.84,235.26 314.72,234.03 314.72,234.03 314.11,235.42 313.23,237.43 312.29,239.61 311.51,241.53 310.87,243.16 310.30,244.68 309.85,246.07 309.62,247.28 309.64,248.30 309.85,249.17 310.22,249.85 310.69,250.32 311.28,250.54 312.01,250.54 312.82,250.37 313.66,250.05 314.54,249.59 315.47,248.96 316.42,248.21 317.33,247.36 318.27,246.28 319.24,245.01 320.10,243.82 320.69,243.00" fill="#3e6a8d"/>
<line x1="314.72" y1="234.03" x2="315.22" y2="232.72" stroke="#c93400" stroke-width="0.7"/>
<line x1="315.22" y1="232.72" x2="315.67" y2="231.37" stroke="#c93400" stroke-width="0.7"/>
<line x1="315.67" y1="231.37" x2="316.06" y2="229.99" stroke="#c93400" stroke-width="0.7"/>
<line x1="316.06" y1="229.99" x2="316.40" y2="228.58" stroke="#c93400" stroke-width="0.7"/>
<line x1="316.40" y1="228.58" x2="316.69" y2="227.14" stroke="#c93400" stroke-width="0.7"/>
<line x1="316.69" y1="227.14" x2="316.92" y2="225.67" stroke="#c93400" stroke-width="0.7"/>
<line x1="316.92" y1="225.67" x2="317.09" y2="224.17" stroke="#c93400" stroke-width="0.7"/>
<line x1="317.09" y1="224.17" x2="317.21" y2="222.64" stroke="#c93400" stroke-width="0.7"/>
<line x1="306.48" y1="228.37" x2="307.53" y2="227.43" stroke="#c93400" stroke-width="0.7"/>
<line x1="307.53" y1="227.43" x2="308.62" y2="226.53" stroke="#c93400" stroke-width="0.7"/>
<line x1="308.62" y1="226.53" x2="309.77" y2="225.66" stroke="#c93400" stroke-width="0.7"/>
<line x1="309.77" y1="225.66" x2="310.96" y2="224.84" stroke="#c93400" stroke-width="0.7"/>
<line x1="310.96" y1="224.84" x2="312.21" y2="224.06" stroke="#c93400" stroke-width="0.7"/>
<line x1="312.21" y1="224.06" x2="313.50" y2="223.32" stroke="#c93400" stroke-width="0.7"/>
<line x1="313.50" y1="223.32" x2="314.83" y2="222.62" stroke="#c93400" stroke-width="0.7"/>
<line x1="314.83" y1="222.62" x2="316.22" y2="221.96" stroke="#c93400" stroke-width="0.7"/>
<polygon points="318.81,219.25 322.07,216.12 325.14,213.06 328.03,210.08 330.74,207.17 333.26,204.34 335.60,201.58 337.76,198.90 339.73,196.29 341.51,193.76 343.12,191.30 343.61,190.33 343.84,189.25 343.78,188.16 343.44,187.12 342.85,186.20 342.03,185.46 341.06,184.97 339.98,184.74 338.89,184.80 337.85,185.13 336.93,185.73 336.19,186.55 334.47,188.92 332.75,191.50 331.02,194.27 329.29,197.24 327.55,200.42 325.81,203.79 324.07,207.35 322.32,211.12 320.57,215.09" fill="#d5e3e5"/>
<polygon points="329.94,191.23 326.71,191.85 323.68,192.51 320.85,193.20 318.22,193.93 315.79,194.68 313.57,195.47 311.55,196.30 309.73,197.15 308.11,198.04 306.69,198.96 305.66,199.76 304.87,200.80 304.37,202.00 304.20,203.30 304.38,204.59 304.88,205.80 305.68,206.83 306.72,207.62 307.92,208.12 309.22,208.28 310.51,208.11 311.72,207.61 313.22,206.83 314.79,205.87 316.44,204.71 318.15,203.36 319.94,201.81 321.80,200.08 323.73,198.16 325.73,196.04 327.80,193.73" fill="#d5e3e5"/>
<polygon points="340.98,198.82 339.42,201.72 338.00,204.48 336.74,207.10 335.64,209.59 334.69,211.95 333.89,214.17 333.24,216.26 332.75,218.21 332.41,220.02 332.22,221.70 332.19,223.01 332.49,224.28 333.11,225.42 334.00,226.37 335.11,227.06 336.36,227.43 337.67,227.47 338.94,227.17 340.09,226.55 341.04,225.66 341.72,224.55 342.10,223.29 342.45,221.64 342.70,219.81 342.85,217.81 342.89,215.62 342.83,213.27 342.67,210.73 342.40,208.02 342.03,205.13 341.56,202.06" fill="#d5e3e5"/>
<polygon points="208.69,254.91 205.30,254.07 201.82,253.99 198.43,254.65 195.30,256.04 192.58,258.08 190.41,260.66 188.90,263.67 188.13,266.94 188.13,270.31 188.90,273.62 190.41,276.69 192.58,279.39 195.30,281.56 198.43,283.10 198.43,283.10 199.39,283.42 200.78,283.89 202.31,284.37 203.70,284.70 204.94,284.86 206.15,284.92 207.27,284.89 208.26,284.76 209.12,284.53 209.88,284.20 210.47,283.77 210.83,283.24 210.94,282.59 210.84,281.83 210.52,281.00 209.93,280.15 209.04,279.31 207.88,278.43 206.52,277.52 205.06,276.57 203.30,275.46 201.27,274.23 199.39,273.11 198.09,272.33 198.09,272.33 199.52,272.82 201.58,273.53 203.79,274.28 205.68,274.88 207.14,275.31 208.42,275.66 209.56,275.91 210.58,276.03 211.50,275.99 212.29,275.81 212.97,275.53 213.55,275.19 214.01,274.76 214.36,274.25 214.62,273.68 214.84,273.10 215.04,272.53 215.20,271.92 215.27,271.30 215.19,270.68 214.97,270.04 214.62,269.40 214.13,268.75 213.45,268.13 212.59,267.56 211.57,267.02 210.36,266.47 208.96,265.86 207.13,265.10 204.96,264.25 202.92,263.47 201.51,262.93 201.51,262.93 203.01,263.18 205.17,263.53 207.52,263.89 209.58,264.17 211.31,264.37 212.93,264.55 214.38,264.63 215.61,264.55 216.60,264.28 217.39,263.86 217.95,263.33 218.28,262.76 218.35,262.13 218.17,261.42 217.80,260.68 217.28,259.95 216.62,259.22 215.78,258.47 214.81,257.74 213.76,257.07 212.48,256.43 211.00,255.81 209.64,255.28 208.69,254.91" fill="#3e6a8d"/>
<line x1="201.51" y1="262.93" x2="200.11" y2="262.78" stroke="#c93400" stroke-width="0.7"/>
<line x1="200.11" y1="262.78" x2="198.69" y2="262.68" stroke="#c93400" stroke-width="0.7"/>
<line x1="198.69" y1="262.68" x2="197.26" y2="262.64" stroke="#c93400" stroke-width="0.7"/>
<line x1="197.26" y1="262.64" x2="195.81" y2="262.67" stroke="#c93400" stroke-width="0.7"/>
<line x1="195.81" y1="262.67" x2="194.35" y2="262.75" stroke="#c93400" stroke-width="0.7"/>
<line x1="194.35" y1="262.75" x2="192.87" y2="262.90" stroke="#c93400" stroke-width="0.7"/>
<line x1="192.87" y1="262.90" x2="191.37" y2="263.11" stroke="#c93400" stroke-width="0.7"/>
<line x1="191.37" y1="263.11" x2="189.86" y2="263.37" stroke="#c93400" stroke-width="0.7"/>
<line x1="198.09" y1="272.33" x2="196.92" y2="271.55" stroke="#c93400" stroke-width="0.7"/>
<line x1="196.92" y1="271.55" x2="195.77" y2="270.71" stroke="#c93400" stroke-width="0.7"/>
<line x1="195.77" y1="270.71" x2="194.65" y2="269.82" stroke="#c93400" stroke-width="0.7"/>
<line x1="194.65" y1="269.82" x2="193.55" y2="268.87" stroke="#c93400" stroke-width="0.7"/>
<line x1="193.55" y1="268.87" x2="192.49" y2="267.86" stroke="#c93400" stroke-width="0.7"/>
<line x1="192.49" y1="267.86" x2="191.45" y2="266.80" stroke="#c93400" stroke-width="0.7"/>
<line x1="191.45" y1="266.80" x2="190.43" y2="265.68" stroke="#c93400" stroke-width="0.7"/>
<line x1="190.43" y1="265.68" x2="189.45" y2="264.50" stroke="#c93400" stroke-width="0.7"/>
<polygon points="184.77,262.16 180.92,259.79 177.19,257.58 173.58,255.53 170.09,253.63 166.71,251.90 163.46,250.33 160.32,248.91 157.30,247.66 154.40,246.56 151.62,245.63 150.55,245.39 149.46,245.44 148.41,245.77 147.49,246.36 146.75,247.16 146.24,248.14 146.00,249.21 146.05,250.30 146.38,251.35 146.97,252.27 147.78,253.01 148.75,253.52 151.48,254.59 154.41,255.62 157.53,256.59 160.84,257.53 164.34,258.41 168.04,259.25 171.93,260.05 176.02,260.80 180.30,261.50" fill="#d5e3e5"/>
<polygon points="154.85,258.40 156.26,261.37 157.66,264.15 159.04,266.71 160.40,269.07 161.74,271.23 163.06,273.19 164.36,274.94 165.64,276.49 166.91,277.83 168.16,278.97 169.19,279.77 170.39,280.28 171.68,280.46 172.98,280.30 174.19,279.80 175.23,279.01 176.03,277.98 176.53,276.78 176.71,275.49 176.55,274.19 176.06,272.98 175.27,271.94 174.14,270.68 172.81,269.40 171.28,268.10 169.54,266.78 167.60,265.43 165.46,264.07 163.11,262.68 160.56,261.28 157.81,259.85" fill="#d5e3e5"/>
<polygon points="159.43,245.81 162.63,246.60 165.66,247.28 168.51,247.84 171.20,248.29 173.72,248.62 176.07,248.84 178.25,248.94 180.26,248.93 182.11,248.80 183.78,248.56 185.05,248.27 186.21,247.66 187.16,246.77 187.86,245.67 188.24,244.42 188.29,243.12 188.00,241.84 187.39,240.69 186.51,239.73 185.40,239.04 184.15,238.65 182.85,238.60 181.16,238.68 179.33,238.89 177.35,239.25 175.23,239.76 172.96,240.40 170.54,241.20 167.98,242.13 165.28,243.21 162.43,244.44" fill="#d5e3e5"/>
<polygon points="338.37,283.10 341.50,281.56 344.22,279.39 346.39,276.69 347.90,273.62 348.67,270.31 348.67,266.94 347.90,263.67 346.39,260.66 344.22,258.08 341.50,256.04 338.37,254.65 334.98,253.99 331.50,254.07 328.11,254.91 328.11,254.91 327.16,255.28 325.80,255.81 324.32,256.43 323.04,257.07 321.99,257.74 321.02,258.47 320.18,259.22 319.52,259.95 319.00,260.68 318.63,261.42 318.45,262.13 318.52,262.76 318.85,263.33 319.41,263.86 320.20,264.28 321.19,264.55 322.42,264.63 323.87,264.55 325.49,264.37 327.22,264.17 329.28,263.89 331.63,263.53 333.79,263.18 335.29,262.93 335.29,262.93 333.88,263.47 331.84,264.25 329.67,265.10 327.84,265.86 326.44,266.47 325.23,267.02 324.21,267.56 323.35,268.13 322.67,268.75 322.18,269.40 321.83,270.04 321.61,270.68 321.53,271.30 321.60,271.92 321.76,272.53 321.96,273.10 322.18,273.68 322.44,274.25 322.79,274.76 323.25,275.19 323.83,275.53 324.51,275.81 325.30,275.99 326.22,276.03 327.24,275.91 328.38,275.66 329.66,275.31 331.12,274.88 333.01,274.28 335.22,273.53 337.28,272.82 338.71,272.33 338.71,272.33 337.41,273.11 335.53,274.23 333.50,275.46 331.74,276.57 330.28,277.52 328.92,278.43 327.76,279.31 326.87,280.15 326.28,281.00 325.96,281.83 325.86,282.59 325.97,283.24 326.33,283.77 326.92,284.20 327.68,284.53 328.54,284.76 329.53,284.89 330.65,284.92 331.86,284.86 333.10,284.70 334.49,284.37 336.02,283.89 337.41,283.42 338.37,283.10" fill="#3e6a8d"/>
<line x1="338.71" y1="272.33" x2="339.88" y2="271.55" stroke="#c93400" stroke-width="0.7"/>
<line x1="339.88" y1="271.55" x2="341.03" y2="270.71" stroke="#c93400" stroke-width="0.7"/>
<line x1="341.03" y1="270.71" x2="342.15" y2="269.82" stroke="#c93400" stroke-width="0.7"/>
<line x1="342.15" y1="269.82" x2="343.25" y2="268.87" stroke="#c93400" stroke-width="0.7"/>
<line x1="343.25" y1="268.87" x2="344.31" y2="267.86" stroke="#c93400" stroke-width="0.7"/>
<line x1="344.31" y1="267.86" x2="345.35" y2="266.80" stroke="#c93400" stroke-width="0.7"/>
<line x1="345.35" y1="266.80" x2="346.37" y2="265.68" stroke="#c93400" stroke-width="0.7"/>
<line x1="346.37" y1="265.68" x2="347.35" y2="264.50" stroke="#c93400" stroke-width="0.7"/>
<line x1="335.29" y1="262.93" x2="336.69" y2="262.78" stroke="#c93400" stroke-width="0.7"/>
<line x1="336.69" y1="262.78" x2="338.11" y2="262.68" stroke="#c93400" stroke-width="0.7"/>
<line x1="338.11" y1="262.68" x2="339.54" y2="262.64" stroke="#c93400" stroke-width="0.7"/>
<line x1="339.54" y1="262.64" x2="340.99" y2="262.67" stroke="#c93400" stroke-width="0.7"/>
<line x1="340.99" y1="262.67" x2="342.45" y2="262.75" stroke="#c93400" stroke-width="0.7"/>
<line x1="342.45" y1="262.75" x2="343.93" y2="262.90" stroke="#c93400" stroke-width="0.7"/>
<line x1="343.93" y1="262.90" x2="345.43" y2="263.11" stroke="#c93400" stroke-width="0.7"/>
<line x1="345.43" y1="263.11" x2="346.94" y2="263.37" stroke="#c93400" stroke-width="0.7"/>
<polygon points="352.03,262.16 356.50,261.50 360.78,260.80 364.87,260.05 368.76,259.25 372.46,258.41 375.96,257.53 379.27,256.59 382.39,255.62 385.32,254.59 388.05,253.52 389.02,253.01 389.83,252.27 390.42,251.35 390.75,250.30 390.80,249.21 390.56,248.14 390.05,247.16 389.31,246.36 388.39,245.77 387.34,245.44 386.25,245.39 385.18,245.63 382.40,246.56 379.50,247.66 376.48,248.91 373.34,250.33 370.09,251.90 366.71,253.63 363.22,255.53 359.61,257.58 355.88,259.79" fill="#d5e3e5"/>
<polygon points="377.37,245.81 374.37,244.44 371.52,243.21 368.82,242.13 366.26,241.20 363.84,240.40 361.57,239.76 359.45,239.25 357.47,238.89 355.64,238.68 353.95,238.60 352.65,238.65 351.40,239.04 350.29,239.73 349.41,240.69 348.80,241.84 348.51,243.12 348.56,244.42 348.94,245.67 349.64,246.77 350.59,247.66 351.75,248.27 353.02,248.56 354.69,248.80 356.54,248.93 358.55,248.94 360.73,248.84 363.08,248.62 365.60,248.29 368.29,247.84 371.14,247.28 374.17,246.60" fill="#d5e3e5"/>
<polygon points="381.95,258.40 378.99,259.85 376.24,261.28 373.69,262.68 371.34,264.07 369.20,265.43 367.26,266.78 365.52,268.10 363.99,269.40 362.66,270.68 361.53,271.94 360.74,272.98 360.25,274.19 360.09,275.49 360.27,276.78 360.77,277.98 361.57,279.01 362.61,279.80 363.82,280.30 365.12,280.46 366.41,280.28 367.61,279.77 368.64,278.97 369.89,277.83 371.16,276.49 372.44,274.94 373.74,273.19 375.06,271.23 376.40,269.07 377.76,266.71 379.14,264.15 380.54,261.37" fill="#d5e3e5"/>
<circle cx="231.18" cy="183.26" r="4.7" fill="#ffffff"/>
<circle cx="222.14" cy="174.72" r="4.7" fill="#ffffff"/>
<circle cx="233.12" cy="170.98" r="4.7" fill="#ffffff"/>
<circle cx="305.62" cy="183.26" r="4.7" fill="#ffffff"/>
<circle cx="303.68" cy="170.98" r="4.7" fill="#ffffff"/>
<circle cx="314.66" cy="174.72" r="4.7" fill="#ffffff"/>
<circle cx="178.35" cy="223.51" r="4.7" fill="#ffffff"/>
<circle cx="166.10" cy="221.41" r="4.7" fill="#ffffff"/>
<circle cx="173.16" cy="212.21" r="4.7" fill="#ffffff"/>
<circle cx="358.45" cy="223.51" r="4.7" fill="#ffffff"/>
<circle cx="363.64" cy="212.21" r="4.7" fill="#ffffff"/>
<circle cx="370.70" cy="221.41" r="4.7" fill="#ffffff"/>
<polygon points="211.90,297.40 205.37,296.68 199.07,296.09 192.99,295.61 187.14,295.24 181.52,295.00 176.12,294.87 170.95,294.86 166.01,294.96 161.30,295.18 156.81,295.52 155.53,295.77 154.35,296.33 153.36,297.19 152.63,298.27 152.20,299.50 152.10,300.80 152.34,302.08 152.91,303.26 153.76,304.25 154.84,304.98 156.07,305.41 157.38,305.51 161.87,305.34 166.58,305.02 171.51,304.57 176.64,303.97 181.99,303.23 187.55,302.35 193.32,301.33 199.30,300.16 205.49,298.85" fill="#b3c9cd"/>
<polygon points="211.40,305.30 205.06,305.75 198.96,306.26 193.09,306.85 187.45,307.51 182.04,308.24 176.87,309.04 171.93,309.91 167.22,310.85 162.74,311.86 158.50,312.95 157.35,313.38 156.35,314.10 155.58,315.05 155.07,316.17 154.88,317.38 155.00,318.60 155.44,319.75 156.15,320.74 157.10,321.52 158.22,322.02 159.43,322.22 160.65,322.10 164.93,321.17 169.39,320.07 174.03,318.81 178.84,317.38 183.82,315.79 188.99,314.02 194.33,312.09 199.84,310.00 205.53,307.73" fill="#b3c9cd"/>
<polygon points="211.90,310.90 205.91,312.82 200.16,314.74 194.65,316.69 189.38,318.64 184.36,320.61 179.57,322.60 175.03,324.60 170.73,326.61 166.67,328.64 162.85,330.68 161.84,331.37 161.04,332.31 160.51,333.41 160.29,334.62 160.39,335.84 160.80,337.00 161.50,338.01 162.43,338.81 163.54,339.33 164.74,339.56 165.97,339.46 167.12,339.05 171.01,337.15 175.04,335.05 179.19,332.74 183.47,330.23 187.88,327.52 192.43,324.60 197.10,321.48 201.90,318.16 206.84,314.63" fill="#b3c9cd"/>
<polygon points="324.90,297.40 331.31,298.85 337.50,300.16 343.48,301.33 349.25,302.35 354.81,303.23 360.16,303.97 365.29,304.57 370.22,305.02 374.93,305.34 379.42,305.51 380.73,305.41 381.96,304.98 383.04,304.25 383.89,303.26 384.46,302.08 384.70,300.80 384.60,299.50 384.17,298.27 383.44,297.19 382.45,296.33 381.27,295.77 379.99,295.52 375.50,295.18 370.79,294.96 365.85,294.86 360.68,294.87 355.28,295.00 349.66,295.24 343.81,295.61 337.73,296.09 331.43,296.68" fill="#b3c9cd"/>
<polygon points="325.40,305.30 331.27,307.73 336.96,310.00 342.47,312.09 347.81,314.02 352.98,315.79 357.96,317.38 362.77,318.81 367.41,320.07 371.87,321.17 376.15,322.10 377.37,322.22 378.58,322.02 379.70,321.52 380.65,320.74 381.36,319.75 381.80,318.60 381.92,317.38 381.73,316.17 381.22,315.05 380.45,314.10 379.45,313.38 378.30,312.95 374.06,311.86 369.58,310.85 364.87,309.91 359.93,309.04 354.76,308.24 349.35,307.51 343.71,306.85 337.84,306.26 331.74,305.75" fill="#b3c9cd"/>
<polygon points="324.90,310.90 329.96,314.63 334.90,318.16 339.70,321.48 344.37,324.60 348.92,327.52 353.33,330.23 357.61,332.74 361.76,335.05 365.79,337.15 369.68,339.05 370.83,339.46 372.06,339.56 373.26,339.33 374.37,338.81 375.30,338.01 376.00,337.00 376.41,335.84 376.51,334.62 376.29,333.41 375.76,332.31 374.96,331.37 373.95,330.68 370.13,328.64 366.07,326.61 361.77,324.60 357.23,322.60 352.44,320.61 347.42,318.64 342.15,316.69 336.64,314.74 330.89,312.82" fill="#b3c9cd"/>
<circle cx="268.40" cy="493.20" r="5" fill="#ffffff"/>
<polygon points="283.40,470.40 283.02,466.93 281.91,463.63 280.13,460.67 277.75,458.20 274.91,456.34 271.74,455.19 268.40,454.80 265.06,455.19 261.89,456.34 259.05,458.20 256.67,460.67 254.89,463.63 253.78,466.93 253.40,470.40 253.40,470.40 253.43,471.42 253.46,472.88 253.53,474.48 253.70,475.90 253.97,477.12 254.32,478.28 254.74,479.32 255.20,480.20 255.71,480.93 256.28,481.54 256.89,481.95 257.50,482.10 258.15,481.98 258.84,481.63 259.51,481.04 260.10,480.20 260.59,479.08 261.01,477.68 261.40,476.10 261.80,474.40 262.24,472.37 262.71,470.04 263.11,467.89 263.40,466.40 263.40,466.40 263.43,467.91 263.46,470.09 263.52,472.42 263.60,474.40 263.69,475.92 263.80,477.24 263.96,478.40 264.20,479.40 264.55,480.25 264.99,480.93 265.48,481.47 266.00,481.90 266.56,482.19 267.16,482.34 267.79,482.39 268.40,482.40 269.01,482.39 269.64,482.34 270.24,482.19 270.80,481.90 271.32,481.47 271.81,480.93 272.25,480.25 272.60,479.40 272.84,478.40 273.00,477.24 273.11,475.92 273.20,474.40 273.28,472.42 273.34,470.09 273.37,467.91 273.40,466.40 273.40,466.40 273.69,467.89 274.09,470.04 274.56,472.37 275.00,474.40 275.40,476.10 275.79,477.68 276.21,479.08 276.70,480.20 277.29,481.04 277.96,481.63 278.65,481.98 279.30,482.10 279.91,481.95 280.52,481.54 281.09,480.93 281.60,480.20 282.06,479.32 282.47,478.28 282.83,477.12 283.10,475.90 283.27,474.48 283.34,472.88 283.37,471.42 283.40,470.40" fill="#3e6a8d"/>
<line x1="273.40" y1="466.40" x2="273.07" y2="465.03" stroke="#c93400" stroke-width="0.7"/>
<line x1="273.07" y1="465.03" x2="272.67" y2="463.66" stroke="#c93400" stroke-width="0.7"/>
<line x1="272.67" y1="463.66" x2="272.22" y2="462.30" stroke="#c93400" stroke-width="0.7"/>
<line x1="272.22" y1="462.30" x2="271.70" y2="460.95" stroke="#c93400" stroke-width="0.7"/>
<line x1="271.70" y1="460.95" x2="271.12" y2="459.60" stroke="#c93400" stroke-width="0.7"/>
<line x1="271.12" y1="459.60" x2="270.47" y2="458.26" stroke="#c93400" stroke-width="0.7"/>
<line x1="270.47" y1="458.26" x2="269.77" y2="456.93" stroke="#c93400" stroke-width="0.7"/>
<line x1="269.77" y1="456.93" x2="269.00" y2="455.60" stroke="#c93400" stroke-width="0.7"/>
<line x1="263.40" y1="466.40" x2="263.73" y2="465.03" stroke="#c93400" stroke-width="0.7"/>
<line x1="263.73" y1="465.03" x2="264.12" y2="463.66" stroke="#c93400" stroke-width="0.7"/>
<line x1="264.12" y1="463.66" x2="264.58" y2="462.30" stroke="#c93400" stroke-width="0.7"/>
<line x1="264.58" y1="462.30" x2="265.10" y2="460.95" stroke="#c93400" stroke-width="0.7"/>
<line x1="265.10" y1="460.95" x2="265.68" y2="459.60" stroke="#c93400" stroke-width="0.7"/>
<line x1="265.68" y1="459.60" x2="266.32" y2="458.26" stroke="#c93400" stroke-width="0.7"/>
<line x1="266.32" y1="458.26" x2="267.03" y2="456.93" stroke="#c93400" stroke-width="0.7"/>
<line x1="267.03" y1="456.93" x2="267.80" y2="455.60" stroke="#c93400" stroke-width="0.7"/>
<polygon points="268.40,454.60 269.25,450.13 269.99,445.81 270.63,441.66 271.18,437.67 271.62,433.84 271.96,430.17 272.19,426.66 272.33,423.31 272.37,420.13 272.30,417.10 272.17,416.09 271.78,415.15 271.16,414.34 270.35,413.72 269.41,413.33 268.40,413.20 267.39,413.33 266.45,413.72 265.64,414.34 265.02,415.15 264.63,416.09 264.50,417.10 264.43,420.13 264.47,423.31 264.61,426.66 264.84,430.17 265.18,433.84 265.62,437.67 266.17,441.66 266.81,445.81 267.55,450.13" fill="#b3c9cd"/>
<polygon points="274.00,425.60 274.36,428.88 274.77,431.96 275.23,434.84 275.74,437.52 276.30,440.00 276.91,442.29 277.57,444.37 278.27,446.26 279.03,447.95 279.83,449.44 280.55,450.53 281.52,451.41 282.68,452.00 283.96,452.27 285.26,452.20 286.50,451.80 287.59,451.09 288.47,450.12 289.06,448.96 289.33,447.68 289.26,446.38 288.86,445.13 288.21,443.57 287.37,441.92 286.35,440.18 285.14,438.36 283.75,436.45 282.17,434.45 280.40,432.37 278.46,430.20 276.32,427.94" fill="#d5e3e5"/>
<polygon points="262.80,425.60 260.48,427.94 258.34,430.20 256.40,432.37 254.63,434.45 253.05,436.45 251.66,438.36 250.45,440.18 249.43,441.92 248.59,443.57 247.94,445.13 247.54,446.38 247.47,447.68 247.74,448.96 248.33,450.12 249.21,451.09 250.30,451.80 251.54,452.20 252.84,452.27 254.12,452.00 255.28,451.41 256.25,450.53 256.97,449.44 257.77,447.95 258.53,446.26 259.23,444.37 259.89,442.29 260.50,440.00 261.06,437.52 261.57,434.84 262.03,431.96 262.44,428.88" fill="#d5e3e5"/>
<circle cx="283.00" cy="410.40" r="4.7" fill="#ffffff"/>
<circle cx="289.20" cy="422.20" r="4.7" fill="#ffffff"/>
<circle cx="297.00" cy="411.80" r="4.7" fill="#ffffff"/>
<circle cx="253.80" cy="410.40" r="4.7" fill="#ffffff"/>
<circle cx="247.60" cy="422.20" r="4.7" fill="#ffffff"/>
<circle cx="239.80" cy="411.80" r="4.7" fill="#ffffff"/>
<polygon points="268.40,351.00 267.26,356.64 266.26,362.07 265.39,367.28 264.66,372.29 264.07,377.09 263.61,381.68 263.29,386.06 263.11,390.24 263.06,394.20 263.15,397.95 263.33,399.31 263.85,400.58 264.69,401.66 265.77,402.50 267.04,403.02 268.40,403.20 269.76,403.02 271.02,402.50 272.11,401.66 272.95,400.58 273.47,399.31 273.65,397.95 273.74,394.20 273.69,390.24 273.51,386.06 273.19,381.68 272.73,377.09 272.14,372.29 271.41,367.28 270.54,362.07 269.54,356.64" fill="#ffffff"/>
<polygon points="217.20,384.50 214.70,389.47 212.36,394.30 210.18,398.97 208.16,403.51 206.30,407.89 204.61,412.13 203.08,416.23 201.71,420.17 200.50,423.97 199.45,427.63 199.27,428.73 199.37,429.85 199.76,430.90 200.41,431.82 201.28,432.53 202.30,433.00 203.41,433.19 204.52,433.08 205.58,432.69 206.49,432.04 207.21,431.17 207.67,430.15 208.86,426.54 209.99,422.72 211.08,418.68 212.11,414.44 213.08,409.98 214.01,405.31 214.89,400.42 215.71,395.33 216.48,390.02" fill="#ffffff"/>
<polygon points="221.00,385.00 219.42,392.40 217.98,399.57 216.68,406.52 215.53,413.24 214.51,419.74 213.64,426.02 212.91,432.07 212.32,437.89 211.87,443.49 211.56,448.87 211.63,450.12 212.03,451.31 212.72,452.35 213.65,453.19 214.77,453.75 216.00,454.00 217.25,453.93 218.44,453.53 219.49,452.84 220.32,451.91 220.88,450.79 221.13,449.56 221.60,444.20 221.97,438.59 222.22,432.74 222.37,426.65 222.41,420.31 222.34,413.74 222.17,406.92 221.89,399.85 221.50,392.55" fill="#ffffff"/>
<polygon points="226.00,385.00 225.56,394.57 225.23,403.86 225.01,412.86 224.91,421.58 224.92,430.01 225.04,438.15 225.27,446.01 225.62,453.58 226.08,460.87 226.66,467.87 226.92,469.17 227.52,470.36 228.40,471.36 229.51,472.10 230.77,472.52 232.10,472.60 233.40,472.33 234.60,471.74 235.59,470.86 236.33,469.75 236.75,468.49 236.83,467.16 236.43,460.15 235.88,452.87 235.17,445.32 234.32,437.51 233.31,429.43 232.15,421.08 230.84,412.46 229.38,403.57 227.77,394.42" fill="#ffffff"/>
<polygon points="319.60,384.50 320.32,390.02 321.09,395.33 321.91,400.42 322.79,405.31 323.72,409.98 324.69,414.44 325.72,418.68 326.81,422.72 327.94,426.54 329.13,430.15 329.59,431.17 330.31,432.04 331.22,432.69 332.28,433.08 333.39,433.19 334.50,433.00 335.52,432.53 336.39,431.82 337.04,430.90 337.43,429.85 337.53,428.73 337.35,427.63 336.30,423.97 335.09,420.17 333.72,416.23 332.19,412.13 330.50,407.89 328.64,403.51 326.62,398.97 324.44,394.30 322.10,389.47" fill="#ffffff"/>
<polygon points="315.80,385.00 315.30,392.55 314.91,399.85 314.63,406.92 314.46,413.74 314.39,420.31 314.43,426.65 314.58,432.74 314.83,438.59 315.20,444.20 315.67,449.56 315.92,450.79 316.48,451.91 317.31,452.84 318.36,453.53 319.55,453.93 320.80,454.00 322.03,453.75 323.15,453.19 324.08,452.35 324.77,451.31 325.17,450.12 325.24,448.87 324.93,443.49 324.48,437.89 323.89,432.07 323.16,426.02 322.29,419.74 321.27,413.24 320.12,406.52 318.82,399.57 317.38,392.40" fill="#ffffff"/>
<polygon points="310.80,385.00 309.03,394.42 307.42,403.57 305.96,412.46 304.65,421.08 303.49,429.43 302.48,437.51 301.63,445.32 300.92,452.87 300.37,460.15 299.97,467.16 300.05,468.49 300.47,469.75 301.21,470.86 302.20,471.74 303.40,472.33 304.70,472.60 306.03,472.52 307.29,472.10 308.40,471.36 309.28,470.36 309.88,469.17 310.14,467.87 310.72,460.87 311.18,453.58 311.53,446.01 311.76,438.15 311.88,430.01 311.89,421.58 311.79,412.86 311.57,403.86 311.24,394.57" fill="#ffffff"/>
<polygon points="206.85,370.24 204.44,372.24 202.28,374.13 200.37,375.90 198.70,377.54 197.27,379.07 196.09,380.48 195.15,381.76 194.45,382.93 194.00,383.98 193.79,384.91 193.38,386.76 193.47,388.65 194.04,390.45 195.05,392.05 196.45,393.33 198.13,394.20 199.97,394.61 201.86,394.53 203.67,393.96 205.27,392.94 206.54,391.55 207.42,389.87 207.86,389.02 208.19,387.93 208.40,386.59 208.51,385.00 208.51,383.16 208.40,381.07 208.18,378.74 207.84,376.15 207.40,373.32" fill="#3e6a8d"/>
<polygon points="204.42,368.60 201.36,369.22 198.56,369.86 196.04,370.51 193.79,371.17 191.81,371.84 190.10,372.52 188.66,373.21 187.50,373.91 186.60,374.62 185.98,375.34 184.75,376.77 183.92,378.48 183.57,380.34 183.71,382.22 184.33,384.01 185.40,385.58 186.83,386.81 188.54,387.63 190.40,387.99 192.28,387.85 194.07,387.22 195.64,386.16 196.42,385.62 197.23,384.81 198.05,383.74 198.90,382.39 199.77,380.77 200.66,378.87 201.57,376.71 202.50,374.28 203.45,371.57" fill="#3e6a8d"/>
<polygon points="203.07,366.00 200.07,365.10 197.30,364.34 194.77,363.72 192.48,363.23 190.41,362.89 188.59,362.68 187.00,362.60 185.64,362.67 184.52,362.87 183.63,363.21 181.86,363.89 180.33,365.00 179.14,366.47 178.37,368.20 178.07,370.07 178.27,371.95 178.95,373.72 180.06,375.25 181.53,376.44 183.26,377.21 185.13,377.51 187.01,377.31 187.96,377.21 189.05,376.88 190.29,376.32 191.67,375.54 193.21,374.52 194.89,373.27 196.71,371.80 198.68,370.10 200.80,368.16" fill="#3e6a8d"/>
<polygon points="203.10,363.07 200.88,360.86 198.80,358.88 196.87,357.14 195.08,355.62 193.43,354.34 191.92,353.29 190.55,352.47 189.32,351.89 188.24,351.54 187.30,351.41 185.42,351.18 183.54,351.43 181.80,352.16 180.30,353.32 179.15,354.83 178.44,356.58 178.20,358.46 178.45,360.33 179.19,362.08 180.35,363.57 181.85,364.72 183.60,365.44 184.48,365.80 185.60,366.02 186.96,366.12 188.55,366.08 190.38,365.91 192.45,365.61 194.76,365.17 197.30,364.60 200.08,363.90" fill="#3e6a8d"/>
<polygon points="204.51,360.51 203.61,357.51 202.71,354.79 201.84,352.33 200.97,350.15 200.13,348.24 199.29,346.60 198.47,345.23 197.67,344.14 196.88,343.31 196.11,342.76 194.57,341.66 192.80,341.00 190.91,340.82 189.04,341.13 187.32,341.91 185.86,343.12 184.76,344.66 184.10,346.43 183.92,348.31 184.23,350.18 185.02,351.90 186.22,353.36 186.83,354.10 187.70,354.83 188.85,355.55 190.27,356.27 191.97,356.99 193.93,357.70 196.17,358.41 198.68,359.11 201.46,359.81" fill="#3e6a8d"/>
<polygon points="208.90,364.60 206.60,386.48 203.65,385.96 200.80,385.06 198.10,383.77 195.60,382.12 193.34,380.16 191.38,377.90 189.73,375.40 188.44,372.70 187.54,369.85 187.02,366.90 186.91,363.91 187.21,360.93 187.91,358.02 188.99,355.23 190.45,352.62 192.25,350.22 194.35,348.10 196.73,346.28 199.32,344.79" fill="#b3c9cd"/>
<line x1="208.90" y1="364.60" x2="189.84" y2="392.75" stroke="#c93400" stroke-width="1.1"/>
<line x1="208.90" y1="364.60" x2="178.78" y2="380.38" stroke="#c93400" stroke-width="1.1"/>
<line x1="208.90" y1="364.60" x2="174.90" y2="364.24" stroke="#c93400" stroke-width="1.1"/>
<line x1="208.90" y1="364.60" x2="179.12" y2="348.19" stroke="#c93400" stroke-width="1.1"/>
<polygon points="243.80,401.70 242.45,401.38 240.97,400.90 239.48,400.24 238.08,399.35 236.90,398.20 235.94,396.75 235.12,395.02 234.43,393.07 233.86,390.98 233.40,388.80 233.13,386.40 233.06,383.75 233.07,381.03 233.02,378.44 232.80,376.20 232.44,374.31 232.03,372.63 231.50,371.15 230.81,369.85 229.90,368.70 228.79,367.73 227.52,366.95 226.06,366.32 224.36,365.82 222.40,365.40 219.80,365.30 216.57,365.54 213.29,365.77 210.52,365.64 208.80,364.80 208.35,362.97 208.79,360.38 209.82,357.45 211.12,354.59 212.40,352.20 213.66,350.29 215.12,348.59 216.74,347.10 218.51,345.80 220.40,344.70 222.44,343.82 224.66,343.15 226.99,342.67 229.39,342.36 231.80,342.20 234.32,342.16 237.00,342.27 239.67,342.55 242.19,343.02 244.40,343.70 246.32,344.59 248.06,345.68 249.58,346.96 250.87,348.47 251.90,350.20 252.61,352.09 253.00,354.12 253.20,356.42 253.29,359.07 253.40,362.20 253.50,366.20 253.52,371.00 253.49,376.00 253.44,380.60 253.40,384.20 253.32,386.64 253.17,388.31 253.04,389.47 253.03,390.35 253.20,391.20 253.71,391.91 254.49,392.32 255.35,392.60 256.05,392.90 256.40,393.40 256.35,394.14 256.03,395.03 255.53,395.97 254.89,396.88 254.20,397.70 253.42,398.43 252.51,399.13 251.50,399.78 250.45,400.34 249.40,400.80 248.35,401.19 247.28,401.53 246.17,401.76 245.02,401.84" fill="#d5e3e5"/>
<circle cx="244.40" cy="393.20" r="2.5" fill="#3e6a8d"/>
<polygon points="329.95,370.24 329.40,373.32 328.96,376.15 328.62,378.74 328.40,381.07 328.29,383.16 328.29,385.00 328.40,386.59 328.61,387.93 328.94,389.02 329.38,389.87 330.26,391.55 331.53,392.94 333.13,393.96 334.94,394.53 336.83,394.61 338.67,394.20 340.35,393.33 341.75,392.05 342.76,390.45 343.33,388.65 343.42,386.76 343.01,384.91 342.80,383.98 342.35,382.93 341.65,381.76 340.71,380.48 339.53,379.07 338.10,377.54 336.43,375.90 334.52,374.13 332.36,372.24" fill="#3e6a8d"/>
<polygon points="332.38,368.60 333.35,371.57 334.30,374.28 335.23,376.71 336.14,378.87 337.03,380.77 337.90,382.39 338.75,383.74 339.57,384.81 340.38,385.62 341.16,386.16 342.73,387.22 344.52,387.85 346.40,387.99 348.26,387.63 349.97,386.81 351.40,385.58 352.47,384.01 353.09,382.22 353.23,380.34 352.88,378.48 352.05,376.77 350.82,375.34 350.20,374.62 349.30,373.91 348.14,373.21 346.70,372.52 344.99,371.84 343.01,371.17 340.76,370.51 338.24,369.86 335.44,369.22" fill="#3e6a8d"/>
<polygon points="333.73,366.00 336.00,368.16 338.12,370.10 340.09,371.80 341.91,373.27 343.59,374.52 345.13,375.54 346.51,376.32 347.75,376.88 348.84,377.21 349.79,377.31 351.67,377.51 353.54,377.21 355.27,376.44 356.74,375.25 357.85,373.72 358.53,371.95 358.73,370.07 358.43,368.20 357.66,366.47 356.47,365.00 354.94,363.89 353.17,363.21 352.28,362.87 351.16,362.67 349.80,362.60 348.21,362.68 346.39,362.89 344.32,363.23 342.03,363.72 339.50,364.34 336.73,365.10" fill="#3e6a8d"/>
<polygon points="333.70,363.07 336.72,363.90 339.50,364.60 342.04,365.17 344.35,365.61 346.42,365.91 348.25,366.08 349.84,366.12 351.20,366.02 352.32,365.80 353.20,365.44 354.95,364.72 356.45,363.57 357.61,362.08 358.35,360.33 358.60,358.46 358.36,356.58 357.65,354.83 356.50,353.32 355.00,352.16 353.26,351.43 351.38,351.18 349.50,351.41 348.56,351.54 347.48,351.89 346.25,352.47 344.88,353.29 343.37,354.34 341.72,355.62 339.93,357.14 338.00,358.88 335.92,360.86" fill="#3e6a8d"/>
<polygon points="332.29,360.51 335.34,359.81 338.12,359.11 340.63,358.41 342.87,357.70 344.83,356.99 346.53,356.27 347.95,355.55 349.10,354.83 349.97,354.10 350.58,353.36 351.78,351.90 352.57,350.18 352.88,348.31 352.70,346.43 352.04,344.66 350.94,343.12 349.48,341.91 347.76,341.13 345.89,340.82 344.00,341.00 342.23,341.66 340.69,342.76 339.92,343.31 339.13,344.14 338.33,345.23 337.51,346.60 336.67,348.24 335.83,350.15 334.96,352.33 334.09,354.79 333.19,357.51" fill="#3e6a8d"/>
<polygon points="327.90,364.60 330.20,386.48 333.15,385.96 336.00,385.06 338.70,383.77 341.20,382.12 343.46,380.16 345.42,377.90 347.07,375.40 348.36,372.70 349.26,369.85 349.78,366.90 349.89,363.91 349.59,360.93 348.89,358.02 347.81,355.23 346.35,352.62 344.55,350.22 342.45,348.10 340.07,346.28 337.48,344.79" fill="#b3c9cd"/>
<line x1="327.90" y1="364.60" x2="346.96" y2="392.75" stroke="#c93400" stroke-width="1.1"/>
<line x1="327.90" y1="364.60" x2="358.02" y2="380.38" stroke="#c93400" stroke-width="1.1"/>
<line x1="327.90" y1="364.60" x2="361.90" y2="364.24" stroke="#c93400" stroke-width="1.1"/>
<line x1="327.90" y1="364.60" x2="357.68" y2="348.19" stroke="#c93400" stroke-width="1.1"/>
<polygon points="293.00,401.70 294.35,401.38 295.83,400.90 297.32,400.24 298.72,399.35 299.90,398.20 300.86,396.75 301.68,395.02 302.37,393.07 302.94,390.98 303.40,388.80 303.67,386.40 303.74,383.75 303.73,381.03 303.78,378.44 304.00,376.20 304.36,374.31 304.77,372.63 305.30,371.15 305.99,369.85 306.90,368.70 308.01,367.73 309.28,366.95 310.74,366.32 312.44,365.82 314.40,365.40 317.00,365.30 320.23,365.54 323.51,365.77 326.28,365.64 328.00,364.80 328.45,362.97 328.01,360.38 326.98,357.45 325.68,354.59 324.40,352.20 323.14,350.29 321.68,348.59 320.06,347.10 318.29,345.80 316.40,344.70 314.36,343.82 312.14,343.15 309.81,342.67 307.41,342.36 305.00,342.20 302.48,342.16 299.80,342.27 297.13,342.55 294.61,343.02 292.40,343.70 290.48,344.59 288.74,345.68 287.22,346.96 285.93,348.47 284.90,350.20 284.19,352.09 283.80,354.12 283.60,356.42 283.51,359.07 283.40,362.20 283.30,366.20 283.28,371.00 283.31,376.00 283.36,380.60 283.40,384.20 283.48,386.64 283.63,388.31 283.76,389.47 283.77,390.35 283.60,391.20 283.09,391.91 282.31,392.32 281.45,392.60 280.75,392.90 280.40,393.40 280.45,394.14 280.77,395.03 281.27,395.97 281.91,396.88 282.60,397.70 283.38,398.43 284.29,399.13 285.30,399.78 286.35,400.34 287.40,400.80 288.45,401.19 289.52,401.53 290.63,401.76 291.78,401.84" fill="#d5e3e5"/>
<circle cx="292.40" cy="393.20" r="2.5" fill="#3e6a8d"/>
<polygon points="206.18,336.15 205.98,336.46 205.58,337.41 205.30,338.91 205.46,340.73 206.24,342.55 207.69,344.04 209.66,344.95 211.87,345.12 213.97,344.50 215.66,343.15 216.75,341.19 217.19,338.77 217.11,336.08 216.71,333.29 216.27,330.60 215.98,328.18 215.96,326.21 216.15,324.80 216.43,324.00 216.58,323.76 216.36,323.94 215.62,324.36 214.27,324.80 212.32,325.11 209.90,325.25 207.17,325.28 204.36,325.38 201.69,325.76 199.38,326.61 197.64,328.02 196.60,329.93 196.36,332.11 196.91,334.25 198.15,336.03 199.87,337.20 201.80,337.66 203.62,337.49 205.05,336.96 205.91,336.40" fill="#ffffff"/>
<polygon points="330.62,336.15 330.89,336.40 331.75,336.96 333.18,337.49 335.00,337.66 336.93,337.20 338.65,336.03 339.89,334.25 340.44,332.11 340.20,329.93 339.16,328.02 337.42,326.61 335.11,325.76 332.44,325.38 329.63,325.28 326.90,325.25 324.48,325.11 322.53,324.80 321.18,324.36 320.44,323.94 320.22,323.76 320.37,324.00 320.65,324.80 320.84,326.21 320.82,328.18 320.53,330.60 320.09,333.29 319.69,336.08 319.61,338.77 320.05,341.19 321.14,343.15 322.83,344.50 324.93,345.12 327.14,344.95 329.11,344.04 330.56,342.55 331.34,340.73 331.50,338.91 331.22,337.41 330.82,336.46" fill="#ffffff"/>
<g transform="translate(117 145) rotate(45)"><path d="M-5.5 0 l3.2 -3.2 v2.2 h4.6 v-2.2 l3.2 3.2 l-3.2 3.2 v-2.2 h-4.6 v2.2z" fill="#111"/></g>
<g transform="translate(699 563) rotate(45)"><path d="M-5.5 0 l3.2 -3.2 v2.2 h4.6 v-2.2 l3.2 3.2 l-3.2 3.2 v-2.2 h-4.6 v2.2z" fill="#111"/></g>
<g transform="translate(699 144.5) rotate(-45)"><path d="M-5.5 0 l3.2 -3.2 v2.2 h4.6 v-2.2 l3.2 3.2 l-3.2 3.2 v-2.2 h-4.6 v2.2z" fill="#111"/></g>
<g transform="translate(116 563) rotate(-45)"><path d="M-5.5 0 l3.2 -3.2 v2.2 h4.6 v-2.2 l3.2 3.2 l-3.2 3.2 v-2.2 h-4.6 v2.2z" fill="#111"/></g>
<g transform="translate(407.9 144) rotate(90)"><path d="M-4.5 0 l3 -3 v2 h3 v-2 l3 3 l-3 3 v-2 h-3 v2z" fill="#111"/></g>
<g transform="translate(407.6 563) rotate(90)"><path d="M-4.5 0 l3 -3 v2 h3 v-2 l3 3 l-3 3 v-2 h-3 v2z" fill="#111"/></g>
<g transform="translate(115.5 353) rotate(0)"><path d="M-4.5 0 l3 -3 v2 h3 v-2 l3 3 l-3 3 v-2 h-3 v2z" fill="#111"/></g>
<g transform="translate(699.6 353) rotate(0)"><path d="M-4.5 0 l3 -3 v2 h3 v-2 l3 3 l-3 3 v-2 h-3 v2z" fill="#111"/></g>
</g>
<rect x="771.8" y="82" width="8" height="572" fill="#d6d6d6" rx="0" />
<rect x="774" y="248.3" width="4.2" height="253.8" fill="#9a9a9a" rx="2.1" />
<rect x="37" y="658" width="733" height="9" fill="#d6d6d6" rx="0" />
<rect x="256" y="660.5" width="290" height="4.5" fill="#9a9a9a" rx="2.2" />
<rect x="771" y="658" width="9" height="9" fill="#d8d8d8"/><path d="M772.5 665.5 l3 -6 l3 6z" fill="none" stroke="#4a8" stroke-width="1"/><path d="M774 664 l1.5 -3 l1.5 3z" fill="#e44"/>
<rect x="783.6" y="360.5" width="1.1" height="1.1" fill="#8a8a8a" rx="0" />
<rect x="783.6" y="364.4" width="1.1" height="1.1" fill="#8a8a8a" rx="0" />
<rect x="783.6" y="368.3" width="1.1" height="1.1" fill="#8a8a8a" rx="0" />
<rect x="783.6" y="372.2" width="1.1" height="1.1" fill="#8a8a8a" rx="0" />
<rect x="783.6" y="376.1" width="1.1" height="1.1" fill="#8a8a8a" rx="0" />
<rect x="786.5" y="68.5" width="445" height="597" fill="none" stroke="#c8c8c8" stroke-width="1"/>
<rect x="1233.5" y="70" width="5" height="552" fill="#a6a6a6" rx="2" />
<rect x="789.5" y="71.5" width="439" height="16" fill="#ededed" stroke="#cfcfcf" stroke-width="1"/>
<path d="M790.5 74 h6 l2 2 v9 h-8z" fill="#f8f8f8" stroke="#444" stroke-width="0.8"/><path d="M792 80.5 h7 M797.5 78.5 l2 2 l-2 2" stroke="#111" stroke-width="1" fill="none"/>
<text x="800.3" y="81.6" font-size="8.6" font-weight="400" fill="#2e3436" text-anchor="start" textLength="139.7" lengthAdjust="spacingAndGlyphs" >PNG-Bild exportieren (Shift+Ctrl+E)</text>
<rect x="1200.5" y="75" width="7.5" height="7.5" fill="none" stroke="#888" stroke-width="0.8" rx="1"/><path d="M1205.5 77 l-2.5 1.8 l2.5 1.8z" fill="#666"/>
<rect x="1216.5" y="75" width="7.5" height="7.5" fill="none" stroke="#888" stroke-width="0.8" rx="1"/><path d="M1218 76.5 l4.5 4.5 M1222.5 76.5 l-4.5 4.5" stroke="#555" stroke-width="0.9"/>
<rect x="789.5" y="87.5" width="439" height="323.5" fill="none" stroke="#d0d0d0" stroke-width="1"/>
<text x="793.9" y="99.6" font-size="8.8" font-weight="700" fill="#2e3436" text-anchor="start" textLength="60.5" lengthAdjust="spacingAndGlyphs" >Exportbereich</text>
<rect x="795.0" y="106.9" width="105.2" height="16" fill="url(#gBtn)" rx="2.5" stroke="#c2c2c2" stroke-width="1" />
<text x="847.6" y="118.0" font-size="8.6" font-weight="400" fill="#2e3436" text-anchor="middle" textLength="19" lengthAdjust="spacingAndGlyphs" >Seite</text>
<rect x="902.8" y="106.9" width="105.2" height="16" fill="url(#gBtn)" rx="2.5" stroke="#c2c2c2" stroke-width="1" />
<text x="955.4" y="118.0" font-size="8.6" font-weight="400" fill="#2e3436" text-anchor="middle" textLength="40" lengthAdjust="spacingAndGlyphs" >Zeichnung</text>
<rect x="1009.8" y="106.9" width="104.4" height="16" fill="url(#gBtnP)" rx="2.5" stroke="#c2c2c2" stroke-width="1" />
<text x="1062.0" y="118.0" font-size="8.6" font-weight="400" fill="#2e3436" text-anchor="middle" textLength="30.5" lengthAdjust="spacingAndGlyphs" >Auswahl</text>
<rect x="1117.5" y="106.9" width="105.3" height="16" fill="url(#gBtn)" rx="2.5" stroke="#c2c2c2" stroke-width="1" />
<text x="1170.15" y="118.0" font-size="8.6" font-weight="400" fill="#2e3436" text-anchor="middle" textLength="67" lengthAdjust="spacingAndGlyphs" >Benutzerdefiniert</text>
<text x="839.1" y="140.6" font-size="8.6" font-weight="400" fill="#2e3436" text-anchor="middle" textLength="12.5" lengthAdjust="spacingAndGlyphs" >x0:</text>
<rect x="921.1" y="128.5" width="52.5" height="16.5" fill="#ffffff" rx="2.5" stroke="#c2c2c2" stroke-width="1" />
<text x="925.1" y="139.85" font-size="8.6" font-weight="400" fill="#2e3436" text-anchor="start" textLength="25.5" lengthAdjust="spacingAndGlyphs" >0,084</text>
<rect x="962.1" y="129" width="11" height="15.5" fill="#ffffff" rx="2" />
<path d="M965.4 134.65 l2.2 -2.2 l2.2 2.2 M965.4 139.2 l2.2 2.2 l2.2 -2.2" stroke="#666" stroke-width="0.8" fill="none"/>
<text x="1055.6" y="140.6" font-size="8.6" font-weight="400" fill="#2e3436" text-anchor="middle" textLength="12.2" lengthAdjust="spacingAndGlyphs" >y0:</text>
<rect x="1137.7" y="128.5" width="52" height="16.5" fill="#ffffff" rx="2.5" stroke="#c2c2c2" stroke-width="1" />
<text x="1141.7" y="139.85" font-size="8.6" font-weight="400" fill="#2e3436" text-anchor="start" textLength="30.599999999999998" lengthAdjust="spacingAndGlyphs" >-1,015</text>
<rect x="1178.2" y="129" width="11" height="15.5" fill="#ffffff" rx="2" />
<path d="M1181.5 134.65 l2.2 -2.2 l2.2 2.2 M1181.5 139.2 l2.2 2.2 l2.2 -2.2" stroke="#666" stroke-width="0.8" fill="none"/>
<text x="839.1" y="161.79999999999998" font-size="8.6" font-weight="400" fill="#2e3436" text-anchor="middle" textLength="12.5" lengthAdjust="spacingAndGlyphs" >x1:</text>
<rect x="921.1" y="149.7" width="52.5" height="16.5" fill="#ffffff" rx="2.5" stroke="#c2c2c2" stroke-width="1" />
<text x="925.1" y="161.04999999999998" font-size="8.6" font-weight="400" fill="#2e3436" text-anchor="start" textLength="30.599999999999998" lengthAdjust="spacingAndGlyphs" >70,084</text>
<rect x="962.1" y="150.2" width="11" height="15.5" fill="#ffffff" rx="2" />
<path d="M965.4 155.85 l2.2 -2.2 l2.2 2.2 M965.4 160.39999999999998 l2.2 2.2 l2.2 -2.2" stroke="#666" stroke-width="0.8" fill="none"/>
<text x="1055.6" y="161.79999999999998" font-size="8.6" font-weight="400" fill="#2e3436" text-anchor="middle" textLength="11.5" lengthAdjust="spacingAndGlyphs" >y1:</text>
<rect x="1137.7" y="149.7" width="52" height="16.5" fill="#ffffff" rx="2.5" stroke="#c2c2c2" stroke-width="1" />
<text x="1141.7" y="161.04999999999998" font-size="8.6" font-weight="400" fill="#2e3436" text-anchor="start" textLength="30.599999999999998" lengthAdjust="spacingAndGlyphs" >48,985</text>
<rect x="1178.2" y="150.2" width="11" height="15.5" fill="#ffffff" rx="2" />
<path d="M1181.5 155.85 l2.2 -2.2 l2.2 2.2 M1181.5 160.39999999999998 l2.2 2.2 l2.2 -2.2" stroke="#666" stroke-width="0.8" fill="none"/>
<text x="839.1" y="182.6" font-size="8.6" font-weight="400" fill="#2e3436" text-anchor="middle" textLength="25.1" lengthAdjust="spacingAndGlyphs" >Breite:</text>
<rect x="921.1" y="170.5" width="52.5" height="16.5" fill="#ffffff" rx="2.5" stroke="#c2c2c2" stroke-width="1" />
<text x="925.1" y="181.85" font-size="8.6" font-weight="400" fill="#2e3436" text-anchor="start" textLength="30.599999999999998" lengthAdjust="spacingAndGlyphs" >70,000</text>
<rect x="962.1" y="171" width="11" height="15.5" fill="#ffffff" rx="2" />
<path d="M965.4 176.65 l2.2 -2.2 l2.2 2.2 M965.4 181.2 l2.2 2.2 l2.2 -2.2" stroke="#666" stroke-width="0.8" fill="none"/>
<text x="1055.6" y="182.6" font-size="8.6" font-weight="400" fill="#2e3436" text-anchor="middle" textLength="22.5" lengthAdjust="spacingAndGlyphs" >Höhe:</text>
<rect x="1137.7" y="170.5" width="52" height="16.5" fill="#ffffff" rx="2.5" stroke="#c2c2c2" stroke-width="1" />
<text x="1141.7" y="181.85" font-size="8.6" font-weight="400" fill="#2e3436" text-anchor="start" textLength="30.599999999999998" lengthAdjust="spacingAndGlyphs" >50,000</text>
<rect x="1178.2" y="171" width="11" height="15.5" fill="#ffffff" rx="2" />
<path d="M1181.5 176.65 l2.2 -2.2 l2.2 2.2 M1181.5 181.2 l2.2 2.2 l2.2 -2.2" stroke="#666" stroke-width="0.8" fill="none"/>
<text x="1148.2" y="202.3" font-size="8.6" font-weight="400" fill="#2e3436" text-anchor="start" textLength="36.7" lengthAdjust="spacingAndGlyphs" >Einheiten:</text>
<rect x="1188.7" y="190.9" width="34.3" height="15.8" fill="url(#gBtn)" rx="2.5" stroke="#c4c4c4" stroke-width="0.8" />
<text x="1191.5" y="202.3" font-size="8.6" font-weight="400" fill="#2e3436" text-anchor="start" textLength="11" lengthAdjust="spacingAndGlyphs" >cm</text>
<path d="M1212.5 196.5 l2.8 2.8 l2.8 -2.8" stroke="#555" stroke-width="0.9" fill="none"/>
<text x="793.7" y="219.9" font-size="8.8" font-weight="700" fill="#2e3436" text-anchor="start" textLength="40.5" lengthAdjust="spacingAndGlyphs" >Bildgröße</text>
<text x="817.5" y="236.8" font-size="8.6" font-weight="400" fill="#2e3436" text-anchor="start" textLength="25" lengthAdjust="spacingAndGlyphs" >Breite:</text>
<rect x="894.8" y="225.9" width="51.7" height="15.600000000000001" fill="#ffffff" rx="2.5" stroke="#c2c2c2" stroke-width="1" />
<text x="898.8" y="236.8" font-size="8.6" font-weight="400" fill="#2e3436" text-anchor="start" textLength="20" lengthAdjust="spacingAndGlyphs" >4134</text>
<rect x="935.0" y="226.4" width="11" height="14.600000000000001" fill="#ffffff" rx="2" />
<path d="M938.3 231.708 l2.2 -2.2 l2.2 2.2 M938.3 236.024 l2.2 2.2 l2.2 -2.2" stroke="#666" stroke-width="0.8" fill="none"/>
<text x="818.6" y="260.7" font-size="8.6" font-weight="400" fill="#2e3436" text-anchor="start" textLength="22.5" lengthAdjust="spacingAndGlyphs" >Höhe:</text>
<rect x="894.8" y="249.0" width="51.7" height="16" fill="#ffffff" rx="2.5" stroke="#c2c2c2" stroke-width="1" />
<text x="898.8" y="260.1" font-size="8.6" font-weight="400" fill="#2e3436" text-anchor="start" textLength="20" lengthAdjust="spacingAndGlyphs" >2953</text>
<rect x="935.0" y="249.5" width="11" height="15" fill="#ffffff" rx="2" />
<path d="M938.3 254.96 l2.2 -2.2 l2.2 2.2 M938.3 259.38 l2.2 2.2 l2.2 -2.2" stroke="#666" stroke-width="0.8" fill="none"/>
<text x="997.5" y="236.6" font-size="8.6" font-weight="400" fill="#2e3436" text-anchor="start" textLength="35.5" lengthAdjust="spacingAndGlyphs" >Pixel bei</text>
<rect x="1083.0" y="226.3" width="52.1" height="15.100000000000001" fill="#ffffff" rx="2.5" stroke="#c2c2c2" stroke-width="1" />
<text x="1087.0" y="236.95000000000002" font-size="8.6" font-weight="400" fill="#2e3436" text-anchor="start" textLength="26" lengthAdjust="spacingAndGlyphs" >150,01</text>
<rect x="1123.6" y="226.8" width="11" height="14.100000000000001" fill="#ffffff" rx="2" />
<path d="M1126.8999999999999 231.918 l2.2 -2.2 l2.2 2.2 M1126.8999999999999 236.104 l2.2 2.2 l2.2 -2.2" stroke="#666" stroke-width="0.8" fill="none"/>
<text x="1187.5" y="236.6" font-size="8.6" font-weight="400" fill="#2e3436" text-anchor="start" textLength="12" lengthAdjust="spacingAndGlyphs" >dpi</text>
<text x="997.5" y="260.6" font-size="8.6" font-weight="400" fill="#2e3436" text-anchor="start" textLength="35.5" lengthAdjust="spacingAndGlyphs" >Pixel bei</text>
<rect x="1083.0" y="249.0" width="52.1" height="15.7" fill="#f4f4f4" rx="2.5" stroke="#c2c2c2" stroke-width="1" />
<text x="1087.0" y="259.95000000000005" font-size="8.6" font-weight="400" fill="#b0b0b0" text-anchor="start" textLength="26" lengthAdjust="spacingAndGlyphs" >150,01</text>
<rect x="1123.6" y="249.5" width="11" height="14.7" fill="#f4f4f4" rx="2" />
<path d="M1126.8999999999999 254.846 l2.2 -2.2 l2.2 2.2 M1126.8999999999999 259.188 l2.2 2.2 l2.2 -2.2" stroke="#aaa" stroke-width="0.8" fill="none"/>
<text x="1187.5" y="260.6" font-size="8.6" font-weight="400" fill="#b4b4b4" text-anchor="start" textLength="12" lengthAdjust="spacingAndGlyphs" >dpi</text>
<text x="793.7" y="279.9" font-size="8.8" font-weight="700" fill="#2e3436" text-anchor="start" textLength="47.7" lengthAdjust="spacingAndGlyphs" >Dateiname</text>
<rect x="794" y="287" width="335.9" height="16.7" fill="#ffffff" rx="1.5" stroke="#86aee0" stroke-width="1" />
<rect x="854.4" y="290" width="10.6" height="11" fill="#3d78d8" rx="0" />
<text x="797.7" y="298.9" font-size="9.2" font-weight="400" fill="#2e3436" text-anchor="start" textLength="56.7" lengthAdjust="spacingAndGlyphs" >/Users/stoffn/</text>
<text x="854.4" y="298.9" font-size="9.2" font-weight="400" fill="#ffffff" text-anchor="start" textLength="10.6" lengthAdjust="spacingAndGlyphs" >De</text>
<text x="865" y="298.9" font-size="9.2" font-weight="400" fill="#2e3436" text-anchor="start" textLength="79.4" lengthAdjust="spacingAndGlyphs" >sktop/Ostereier.png</text>
<rect x="1137.6" y="284.8" width="82.5" height="21.5" fill="url(#gBtn)" rx="2.5" stroke="#c2c2c2" stroke-width="1" />
<text x="1178.85" y="298.65000000000003" font-size="8.6" font-weight="400" fill="#2e3436" text-anchor="middle" ></text>
<rect x="1141" y="290" width="8" height="10" fill="#f6f0e0" stroke="#777" stroke-width="0.7"/><circle cx="1148" cy="298" r="3.2" fill="#f09030"/>
<text x="1152" y="298.8" font-size="8.6" font-weight="400" fill="#2e3436" text-anchor="start" textLength="65.5" lengthAdjust="spacingAndGlyphs" >Exportieren als...</text>
<rect x="794.8" y="319.0" width="7.8" height="7.8" fill="#f2f2f2" rx="2" stroke="#d2d2d2" stroke-width="0.8" />
<text x="808.0" y="325.5" font-size="8.6" font-weight="400" fill="#b0b0b0" text-anchor="start" textLength="182.5" lengthAdjust="spacingAndGlyphs" >Alle gewählten Objekte auf einmal exportieren</text>
<rect x="794.8" y="344.4" width="7.8" height="7.8" fill="#f6f6f6" rx="2" stroke="#a8a8a8" stroke-width="0.8" />
<text x="808.0" y="350.9" font-size="8.6" font-weight="400" fill="#2e3436" text-anchor="start" textLength="135.3" lengthAdjust="spacingAndGlyphs" >Alle außer Ausgewählte verstecken</text>
<rect x="792" y="362.3" width="433.4" height="21.9" fill="url(#gProg)" rx="1.5" stroke="#c8c8c8" stroke-width="0.6" />
<rect x="796.9" y="393.5" width="7.8" height="7.8" fill="#f6f6f6" rx="2" stroke="#a8a8a8" stroke-width="0.8" />
<text x="810.1" y="400" font-size="8.6" font-weight="400" fill="#2e3436" text-anchor="start" textLength="83.5" lengthAdjust="spacingAndGlyphs" >Schließen wenn fertig</text>
<rect x="1159.8" y="389.2" width="63.3" height="16" fill="url(#gBtn)" rx="2.5" stroke="#c2c2c2" stroke-width="1" />
<text x="1191.45" y="400.3" font-size="8.6" font-weight="400" fill="#2e3436" text-anchor="middle" ></text>
<path d="M1163 397 l2.5 3.5 l5.5 -7" stroke="#3aa040" stroke-width="2" fill="none"/>
<text x="1174.2" y="400" font-size="8.6" font-weight="400" fill="#2e3436" text-anchor="start" textLength="45" lengthAdjust="spacingAndGlyphs" >Exportieren</text>
<rect x="791.1" y="414.9" width="436.4" height="11.8" fill="url(#gBar)" rx="2" stroke="#c6c6c6" stroke-width="0.8" />
<text x="803.1" y="423.9" font-size="8.6" font-weight="400" fill="#2e3436" text-anchor="start" textLength="150.6" lengthAdjust="spacingAndGlyphs" >Ausrichten und verteilen (Shift+Ctrl+A)</text>
<path d="M1218.0 422.59999999999997 l3 -3 l3 3" stroke="#555" stroke-width="0.9" fill="none"/>
<g transform="translate(790.6 414.4)"><rect x="2.5" y="1.5" width="2" height="10" fill="#e08040"/><rect x="4.5" y="2.5" width="6" height="2.5" fill="#9bc" stroke="#333" stroke-width="0.5"/><rect x="4.5" y="7.5" width="8" height="2.5" fill="#9bc" stroke="#333" stroke-width="0.5"/></g>
<rect x="791.1" y="430.7" width="216.4" height="11.8" fill="url(#gBar)" rx="2" stroke="#c6c6c6" stroke-width="0.8" />
<text x="803.1" y="439.7" font-size="8.6" font-weight="400" fill="#2e3436" text-anchor="start" textLength="105" lengthAdjust="spacingAndGlyphs" >Gekachelte Klone erzeugen</text>
<path d="M998.0 438.4 l3 -3 l3 3" stroke="#555" stroke-width="0.9" fill="none"/>
<g transform="translate(790.6 430.2)"><rect x="1.5" y="0.8" width="10.5" height="11" fill="#cdd" stroke="#555" stroke-width="0.6"/><rect x="4" y="5" width="5" height="5" fill="#e8a040"/></g>
<rect x="791.1" y="447.1" width="216.4" height="11.8" fill="url(#gBar)" rx="2" stroke="#c6c6c6" stroke-width="0.8" />
<text x="803.1" y="456.1" font-size="8.6" font-weight="400" fill="#2e3436" text-anchor="start" textLength="96.5" lengthAdjust="spacingAndGlyphs" >Suchen/Ersetzen (Ctrl+F)</text>
<path d="M998.0 454.8 l3 -3 l3 3" stroke="#555" stroke-width="0.9" fill="none"/>
<g transform="translate(790.6 446.6)"><circle cx="5.5" cy="5" r="3.3" fill="#eef" stroke="#555" stroke-width="0.8"/><path d="M8 7.5 l3.5 3.5" stroke="#333" stroke-width="1.4"/></g>
<rect x="791.1" y="463.2" width="216.4" height="11.8" fill="url(#gBar)" rx="2" stroke="#c6c6c6" stroke-width="0.8" />
<text x="803.1" y="472.2" font-size="8.6" font-weight="400" fill="#2e3436" text-anchor="start" textLength="106" lengthAdjust="spacingAndGlyphs" >Pfadeffekte  (Shift+Ctrl+7)</text>
<path d="M998.0 470.9 l3 -3 l3 3" stroke="#555" stroke-width="0.9" fill="none"/>
<g transform="translate(790.6 462.7)"><path d="M2 1 h6 l3 3 v8 h-9z" fill="#fafafa" stroke="#555" stroke-width="0.7"/></g>
<rect x="1011.3" y="430.7" width="215.7" height="12" fill="url(#gBarP)" rx="2" stroke="#c6c6c6" stroke-width="0.8" />
<text x="1023.3" y="439.8" font-size="8.6" font-weight="400" fill="#2e3436" text-anchor="start" textLength="139.7" lengthAdjust="spacingAndGlyphs" >PNG-Bild exportieren (Shift+Ctrl+E)</text>
<path d="M1217.5 438.5 l3 -3 l3 3" stroke="#555" stroke-width="0.9" fill="none"/>
<g transform="translate(1010.8 430.2)"><path d="M2 1 h6 l2.5 2.5 v9 h-8.5z" fill="#fafafa" stroke="#444" stroke-width="0.7"/><path d="M4 7 h7 M9 5 l2 2 l-2 2" stroke="#111" stroke-width="1" fill="none"/></g>
<rect x="1011.3" y="447.0" width="215.7" height="11.9" fill="url(#gBar)" rx="2" stroke="#c6c6c6" stroke-width="0.8" />
<text x="1023.3" y="456.05" font-size="8.6" font-weight="400" fill="#2e3436" text-anchor="start" textLength="84.5" lengthAdjust="spacingAndGlyphs" >Ebenen (Shift+Ctrl+L)</text>
<path d="M1217.5 454.75 l3 -3 l3 3" stroke="#555" stroke-width="0.9" fill="none"/>
<g transform="translate(1010.8 446.5)"><path d="M1.5 3.5 h9 M1.5 6 h9 M1.5 8.5 h9 M1.5 11 h9" stroke="#333" stroke-width="0.9"/></g>
<rect x="1011.3" y="463.1" width="215.7" height="12" fill="url(#gBar)" rx="2" stroke="#c6c6c6" stroke-width="0.8" />
<text x="1023.3" y="472.20000000000005" font-size="8.6" font-weight="400" fill="#2e3436" text-anchor="start" textLength="118.5" lengthAdjust="spacingAndGlyphs" >Transformation (Shift+Ctrl+M)</text>
<path d="M1217.5 470.90000000000003 l3 -3 l3 3" stroke="#555" stroke-width="0.9" fill="none"/>
<g transform="translate(1010.8 462.6)"><rect x="1.5" y="1.5" width="6" height="6" fill="#9cc4e4" stroke="#335" stroke-width="0.6"/><path d="M4 9 a5 4 0 0 0 8 -3" stroke="#e03020" stroke-width="0.9" fill="none" stroke-dasharray="1.2,0.8"/></g>
<path d="M1001 480.5 h1 M1004 480.5 h1 M1007 480.5 h1 M1010 480.5 h1 M1013 480.5 h1" stroke="#b0b0b0" stroke-width="1"/>
<path d="M788 496 l2 -7 l7 -6 l1.5 1.5 l-6 7z" fill="#111"/><path d="M792 489 l5 -5" stroke="#f0c040" stroke-width="1"/>
<text x="799.3" y="494" font-size="8.6" font-weight="400" fill="#2e3436" text-anchor="start" textLength="130.7" lengthAdjust="spacingAndGlyphs" >Füllung und Kontur (Shift+Ctrl+F)</text>
<rect x="1200.5" y="487" width="7.5" height="7.5" fill="none" stroke="#888" stroke-width="0.8" rx="1"/><path d="M1205.5 489 l-2.5 1.8 l2.5 1.8z" fill="#666"/>
<rect x="1216.5" y="487" width="7.5" height="7.5" fill="none" stroke="#888" stroke-width="0.8" rx="1"/><path d="M1218 488.5 l4.5 4.5 M1222.5 488.5 l-4.5 4.5" stroke="#555" stroke-width="0.9"/>
<rect x="789.5" y="499.6" width="439" height="166" fill="none" stroke="#d0d0d0" stroke-width="1"/>
<rect x="791.5" y="519.2" width="435.3" height="145.7" fill="#ffffff" rx="0" stroke="#a8a8a8" stroke-width="1" />
<rect x="837" y="505.9" width="87.5" height="13.3" fill="url(#gBar)" rx="1.5" stroke="#c0c0c0" stroke-width="0.8" />
<rect x="924.8" y="505.9" width="91.6" height="13.3" fill="url(#gBar)" rx="1.5" stroke="#c0c0c0" stroke-width="0.8" />
<path d="M791.7 519.5 v-15 a2 2 0 0 1 2 -2 h40 a2 2 0 0 1 2 2 v15" fill="#ffffff" stroke="#a8a8a8" stroke-width="0.9"/><path d="M793 502.8 h41.5" stroke="#3d78d8" stroke-width="1.4"/>
<rect x="792.2" y="518.5" width="43" height="2" fill="#ffffff" rx="0" />
<rect x="796" y="507.5" width="7.5" height="7.5" fill="#a8c4e4"/>
<text x="807.4" y="514.8" font-size="8.6" font-weight="400" fill="#2e3436" text-anchor="start" textLength="22.5" lengthAdjust="spacingAndGlyphs" >Füllen</text>
<rect x="840.2" y="507.8" width="6.8" height="8.2" fill="#f8f8f8" rx="0" stroke="#666" stroke-width="0.7" />
<text x="851.5" y="515.8" font-size="8.6" font-weight="400" fill="#2e3436" text-anchor="start" textLength="66.3" lengthAdjust="spacingAndGlyphs" >Farbe der Kontur</text>
<path d="M928.5 509.5 h8 M928.5 512 h8 M928.5 514.5 h8" stroke="#333" stroke-width="0.9"/><path d="M935 508 l1.8 1.5 l-1.8 1.5" stroke="#333" stroke-width="0.8" fill="none"/>
<text x="940" y="515.8" font-size="8.6" font-weight="400" fill="#2e3436" text-anchor="start" textLength="70.5" lengthAdjust="spacingAndGlyphs" >Muster der Kontur</text>
<rect x="799.3" y="524.4" width="17.1" height="17.8" fill="url(#gBtnP)" rx="2.5" stroke="#c0c0c0" stroke-width="0.8" />
<path d="M805.3 530.8 l5 5 M810.3 530.8 l-5 5" stroke="#111" stroke-width="1.3"/>
<rect x="821.5" y="528.8" width="10.5" height="10" fill="#8fb4d8" rx="0" stroke="#333" stroke-width="1" />
<rect x="840.3" y="528.8" width="10.5" height="10" fill="#a4c0dc" rx="0" stroke="#333" stroke-width="1" />
<rect x="859.3" y="528.8" width="10.5" height="10" fill="#a4c0dc" rx="0" stroke="#333" stroke-width="1" />
<rect x="878.1" y="528.8" width="10.5" height="10" fill="#c6dcf0" rx="0" stroke="#333" stroke-width="1" />
<rect x="896.8" y="528.8" width="10.5" height="10" fill="#ffffff" rx="0" stroke="#333" stroke-width="1" />
<path d="M879 533.8 h8 M883 529.5 v9" stroke="#fff" stroke-width="1.2" stroke-dasharray="1.5,1"/>
<text x="920.3" y="538.5" font-size="12" font-weight="700" fill="#111" text-anchor="middle" >?</text>
<rect x="1186.5" y="524.4" width="16.3" height="16.9" fill="url(#gBtnP)" rx="2.5" stroke="#c0c0c0" stroke-width="0.8" />
<path d="M1190.7 529.5 v4.5 a3.5 3.5 0 0 0 7 0 v-4.5 l-1.5 1.5 h-4z" fill="#111"/><circle cx="1194.2" cy="534" r="1.5" fill="#ddd"/>
<path d="M1207.5 529 v5 a3.8 3.8 0 0 0 7.6 0 v-5 l-2 2 h-3.6z" fill="#111"/>
<text x="798.7" y="556.4" font-size="8.8" font-weight="700" fill="#2e3436" text-anchor="start" textLength="51.6" lengthAdjust="spacingAndGlyphs" >Keine Farbe</text>
<rect x="1240" y="68" width="49" height="600" fill="#ededed" rx="0" />
<path d="M1249 74.8 h5.5 l3 3 v8.5 h-8.5z" fill="#fafafa" stroke="#555" stroke-width="0.7"/>
<rect x="1248" y="96" width="10" height="7.5" fill="#e6dca0" stroke="#8a8050" stroke-width="0.7"/><rect x="1248" y="94.5" width="4" height="2" fill="#c8bc80"/><path d="M1250 99 h6 M1250 101 h6" stroke="#a09050" stroke-width="0.6"/>
<rect x="1248.5" y="113.3" width="9" height="9" fill="#3a68b0"/><rect x="1248.5" y="113.3" width="9" height="2.2" fill="#e04040"/><rect x="1250.5" y="118.5" width="5" height="3.8" fill="#f4f4f4"/>
<rect x="1247.5" y="135" width="11" height="5" fill="#d0d0d0" stroke="#999" stroke-width="0.7"/><rect x="1249.5" y="132" width="7" height="3.5" fill="#fafafa" stroke="#999" stroke-width="0.6"/><rect x="1249.5" y="139.5" width="7" height="2.5" fill="#fafafa" stroke="#999" stroke-width="0.6"/>
<path d="M1249 157.1 h5.5 l3 3 v8.5 h-8.5z" fill="#fafafa" stroke="#555" stroke-width="0.7"/><path d="M1246.5 163 h6.5 M1250.5 161 l2 2 l-2 2" stroke="#111" stroke-width="1" fill="none"/>
<path d="M1249 175.9 h5.5 l3 3 v8.5 h-8.5z" fill="#fafafa" stroke="#555" stroke-width="0.7"/><path d="M1252 181.5 h6.5 M1256.5 179.5 l2 2 l-2 2" stroke="#111" stroke-width="1" fill="none"/>
<path d="M1258 214.5 c0 -5 -3 -7 -7 -6.5 v-3 l-4.5 4.5 l4.5 4.5 v-3 c2.5 0 4.5 1.5 5 3.5z" fill="#f0b830" stroke="#b08010" stroke-width="0.5"/>
<path d="M1248 232 l3 -6 l2 2 l3 -3 l3 4 l-3 3z" fill="#7aa860" stroke="#4a6a30" stroke-width="0.6"/>
<path d="M1249.5 249.5 h5 l2.5 2.5 v7.5 h-7.5z" fill="#f0f0f0" stroke="#aaa" stroke-width="0.6"/><path d="M1252 252.5 h5 l2 2 v6 h-7z" fill="#f8f8f8" stroke="#999" stroke-width="0.6"/>
<circle cx="1250" cy="276" r="2.3" fill="none" stroke="#c05010" stroke-width="1.2"/><circle cx="1256" cy="276" r="2.3" fill="none" stroke="#c05010" stroke-width="1.2"/><path d="M1251 274 l5 -7 M1255 274 l-5 -7" stroke="#777" stroke-width="1"/>
<rect x="1248.5" y="285.5" width="9" height="11" rx="1" fill="#c87840" stroke="#704020" stroke-width="0.6"/><rect x="1250" y="287.5" width="6" height="7.5" fill="#f6f0e4"/><rect x="1251.5" y="284.5" width="3" height="2" fill="#555"/>
<circle cx="1252.5" cy="316.7" r="4.3" fill="#e8f0f8" stroke="#222" stroke-width="1.1"/><path d="M1255.5 319.7 l3 3" stroke="#222" stroke-width="1.6"/>
<circle cx="1252.5" cy="337.1" r="4.3" fill="#e8f0f8" stroke="#222" stroke-width="1.1"/><path d="M1255.5 340.1 l3 3" stroke="#222" stroke-width="1.6"/>
<circle cx="1252.5" cy="356.2" r="4.3" fill="#e8f0f8" stroke="#222" stroke-width="1.1"/><path d="M1255.5 359.2 l3 3" stroke="#222" stroke-width="1.6"/>
<path d="M1250.5 318 l2 1.5 l2 -3" stroke="#2a8" stroke-width="0.8" fill="none"/><rect x="1250.5" y="335.3" width="4" height="4" fill="#e0a030"/><rect x="1250.5" y="354.5" width="4" height="4.5" fill="none" stroke="#333" stroke-width="0.8"/>
<rect x="1248" y="378.5" width="7" height="7" fill="#b8d4ec" stroke="#5a7a9a" stroke-width="0.7"/><rect x="1251" y="381.5" width="7" height="7" fill="#a0c0e0" stroke="#5a7a9a" stroke-width="0.7"/>
<rect x="1248" y="396.9" width="7" height="7" fill="#e8e8e8" stroke="#555" stroke-width="0.7"/><rect x="1251" y="399.9" width="7" height="7" fill="#f4f0e0" stroke="#555" stroke-width="0.7"/><rect x="1252.5" y="401.4" width="3" height="3" fill="#e08030"/>
<rect x="1248" y="416.0" width="7" height="7" fill="#e8e8e8" stroke="#555" stroke-width="0.7"/><rect x="1251" y="419.0" width="7" height="7" fill="#f4f0e0" stroke="#555" stroke-width="0.7"/><rect x="1252.5" y="420.5" width="3" height="3" fill="#e08030"/>
<rect x="1248" y="443" width="10" height="10" fill="none" stroke="#333" stroke-width="0.8" stroke-dasharray="1.2,1"/><rect x="1250" y="446" width="5" height="5" fill="#9cc4e4" stroke="#345" stroke-width="0.6"/>
<rect x="1248" y="462.9" width="10" height="10" fill="none" stroke="#333" stroke-width="0.8" stroke-dasharray="1.2,1"/><rect x="1250" y="465.9" width="5" height="5" fill="#f0c040" stroke="#345" stroke-width="0.6"/>
<path d="M1248 500 l1.5 -6 l7 -5.5 l2 2 l-6 7z" fill="#111"/><path d="M1251 493 l5 -4" stroke="#f4f4f4" stroke-width="0.8"/>
<text x="1247" y="518.5" font-size="14.5" font-weight="700" font-family="Liberation Serif" fill="#111">T</text>
<path d="M1248 528.5 h8 l2 2 v6.5 h-10z" fill="#fafafa" stroke="#333" stroke-width="0.7"/><path d="M1249 531 h8 M1249 533 h8 M1249 535 h8" stroke="#333" stroke-width="0.6"/>
<rect x="1247.5" y="545" width="11" height="11" fill="#fafafa" stroke="#222" stroke-width="0.9"/><path d="M1247.5 547.5 h11" stroke="#222" stroke-width="1"/><path d="M1251 549.5 l-2 2 l2 2 M1255 549.5 l2 2 l-2 2" stroke="#222" stroke-width="0.7" fill="none"/>
<path d="M1248 563.5 v12" stroke="#e08050" stroke-width="1.1"/><rect x="1249.5" y="564.5" width="6" height="4" fill="#e8e8e8" stroke="#333" stroke-width="0.7"/><rect x="1249.5" y="570.5" width="8.5" height="4" fill="#e8e8e8" stroke="#333" stroke-width="0.7"/>
<path d="M1249 592 h5 l3 3 v7.5 h-8z" fill="#fafafa" stroke="#555" stroke-width="0.7"/><path d="M1251 595 v5 M1254 595 v5" stroke="#2a6ea8" stroke-width="1"/>
<path d="M1248 610 l10 10 M1258 610 l-10 10" stroke="#6a90b8" stroke-width="1.8"/><circle cx="1249.5" cy="611.5" r="1.8" fill="none" stroke="#335" stroke-width="0.8"/>
<line x1="1245" y1="150.5" x2="1261" y2="150.5" stroke="#d2d2d2" stroke-width="1"/>
<line x1="1245" y1="196.4" x2="1261" y2="196.4" stroke="#d2d2d2" stroke-width="1"/>
<line x1="1245" y1="242" x2="1261" y2="242" stroke="#d2d2d2" stroke-width="1"/>
<line x1="1245" y1="306.5" x2="1261" y2="306.5" stroke="#d2d2d2" stroke-width="1"/>
<line x1="1245" y1="372" x2="1261" y2="372" stroke="#d2d2d2" stroke-width="1"/>
<line x1="1245" y1="434.8" x2="1261" y2="434.8" stroke="#d2d2d2" stroke-width="1"/>
<line x1="1245" y1="480.5" x2="1261" y2="480.5" stroke="#d2d2d2" stroke-width="1"/>
<line x1="1245" y1="582" x2="1261" y2="582" stroke="#d2d2d2" stroke-width="1"/>
<rect x="1268.5" y="71" width="17.6" height="17.7" fill="url(#gTool)" rx="2.5" stroke="#c0c0c0" stroke-width="0.6" />
<rect x="1268.5" y="201.5" width="17.6" height="17.7" fill="url(#gTool)" rx="2.5" stroke="#c0c0c0" stroke-width="0.6" />
<rect x="1268.5" y="313" width="17.6" height="17.7" fill="url(#gTool)" rx="2.5" stroke="#c0c0c0" stroke-width="0.6" />
<path d="M1273.3 76 l8 8" stroke="#111" stroke-width="1.2"/><rect x="1271.5" y="74.2" width="3.3" height="3.3" fill="#3050d0"/><rect x="1279.8" y="82.5" width="3.3" height="3.3" fill="none" stroke="#30a040" stroke-width="1"/>
<path d="M1273.3 103 l8 8" stroke="#111" stroke-width="1.2"/><rect x="1271.5" y="101.2" width="3.3" height="3.3" fill="#3050d0"/><rect x="1279.8" y="109.5" width="3.3" height="3.3" fill="none" stroke="#30a040" stroke-width="1"/>
<path d="M1273.3 205 l8 8" stroke="#111" stroke-width="1.2"/><rect x="1271.5" y="203.2" width="3.3" height="3.3" fill="#3050d0"/><rect x="1279.8" y="211.5" width="3.3" height="3.3" fill="none" stroke="#30a040" stroke-width="1"/>
<path d="M1273.3 322 l8 8" stroke="#111" stroke-width="1.2"/><rect x="1271.5" y="320.2" width="3.3" height="3.3" fill="#3050d0"/><rect x="1279.8" y="328.5" width="3.3" height="3.3" fill="none" stroke="#30a040" stroke-width="1"/>
<path d="M1272.3 131 h9 M1281.3 131 v-9" stroke="#555" stroke-width="0.9" stroke-dasharray="1,1.2"/>
<path d="M1272.3 150 h9 M1281.3 150 v-9" stroke="#555" stroke-width="0.9" stroke-dasharray="1,1.2"/>
<path d="M1272.3 170 h9 M1281.3 170 v-8" stroke="#555" stroke-width="0.9" stroke-dasharray="1,1.2"/><path d="M1279.3 163 l2 -2 l2 2" stroke="#2a8" stroke-width="0.8" fill="none"/>
<path d="M1272.3 189 h9 M1281.3 189 v-8" stroke="#555" stroke-width="0.9" stroke-dasharray="1,1.2"/><rect x="1274.3" y="181" width="3" height="3" fill="none" stroke="#555" stroke-width="0.7"/>
<path d="M1272.3 223 c5 0 6 3 5 8 l3 -1" stroke="#208040" stroke-width="1.1" fill="none"/><circle cx="1279.3" cy="232" r="1.3" fill="#2a8"/>
<path d="M1272.3 253 l10 -10 M1272.3 245 l10 6" stroke="#208040" stroke-width="0.9"/>
<path d="M1272.3 261 c5 0 6 3 5 8 l3 -1" stroke="#208040" stroke-width="1.1" fill="none"/><circle cx="1278.3" cy="270" r="1.3" fill="none" stroke="#2a8" stroke-width="0.8"/>
<path d="M1273.3 280 h4 v8 h4" stroke="#208040" stroke-width="1.1" fill="none"/><rect x="1276.3" y="282" width="3" height="3" fill="none" stroke="#2a8" stroke-width="0.8"/>
<path d="M1272.3 309 l10 -10" stroke="#e03020" stroke-width="1.2" stroke-dasharray="2,1"/><circle cx="1277.3" cy="304" r="1.5" fill="#2a8"/>
<rect x="1274.8" y="346.5" width="5" height="5" fill="none" stroke="#555" stroke-width="0.7"/><circle cx="1277.3" cy="349" r="0.9" fill="#2a8"/>
<path d="M1272.3 368 h6 M1275.3 365 v6" stroke="#555" stroke-width="0.8"/><path d="M1281.3 362 v10" stroke="#555" stroke-width="0.8" stroke-dasharray="1,1"/>
<text x="1270.8" y="391.5" font-size="14" font-weight="700" fill="#111">A</text><circle cx="1272.8" cy="391" r="1.4" fill="#2a8"/>
<rect x="1273.8" y="407.5" width="7.5" height="10" fill="#fafafa" stroke="#333" stroke-width="0.8"/><rect x="1279.3" y="408.5" width="1.5" height="9" fill="#999"/>
<rect x="1268.5" y="423" width="17.6" height="17.4" fill="url(#gTool)" rx="2.5" stroke="#b8c0d0" stroke-width="0.6" />
<rect x="1268.5" y="442.4" width="17.6" height="17.9" fill="url(#gTool)" rx="2.5" stroke="#b8c0d0" stroke-width="0.6" />
<path d="M1271.5 428.5 h11 M1271.5 431.5 h11 M1271.5 434.5 h11 M1273.5 425.5 v11 M1277 425.5 v11 M1280.5 425.5 v11" stroke="#2040e0" stroke-width="0.9"/>
<path d="M1272.5 456 v-9 M1282 456 v-9 M1275.5 455.5 l3 -8" stroke="#2040e0" stroke-width="1.1"/>
<line x1="1270" y1="92" x2="1285" y2="92" stroke="#d2d2d2" stroke-width="1"/>
<line x1="1270" y1="196.4" x2="1285" y2="196.4" stroke="#d2d2d2" stroke-width="1"/>
<line x1="1270" y1="318" x2="1285" y2="318" stroke="#d2d2d2" stroke-width="1"/>
<line x1="1270" y1="401" x2="1285" y2="401" stroke="#d2d2d2" stroke-width="1"/>
<rect x="1282" y="669" width="7" height="36" fill="#ededed" rx="0" />
<path d="M1286 671 l-3 3 l3 3" stroke="#555" stroke-width="0.9" fill="none"/>
<rect x="0" y="668" width="1282" height="1.5" fill="#d0d0d0" rx="0" />
<rect x="0.0" y="669.6" width="142.3" height="17.7" fill="#ffffff" rx="0" />
<rect x="0.0" y="687.2" width="142.3" height="17.6" fill="#bebebe" rx="0" />
<rect x="142.2" y="669.6" width="142.3" height="17.7" fill="#03678f" rx="0" />
<rect x="142.2" y="687.2" width="142.3" height="17.6" fill="#a5a5a5" rx="0" />
<rect x="284.4" y="669.6" width="142.3" height="17.7" fill="#d5e3e4" rx="0" />
<rect x="284.4" y="687.2" width="142.3" height="17.6" fill="#8a8a8a" rx="0" />
<rect x="426.59999999999997" y="669.6" width="142.3" height="17.7" fill="#adc9cd" rx="0" />
<rect x="426.59999999999997" y="687.2" width="142.3" height="17.6" fill="#6e6e6e" rx="0" />
<rect x="568.8" y="669.6" width="142.3" height="17.7" fill="#d63a00" rx="0" />
<rect x="568.8" y="687.2" width="142.3" height="17.6" fill="#555555" rx="0" />
<rect x="711.0" y="669.6" width="142.3" height="17.7" fill="#ff3b00" rx="0" />
<rect x="711.0" y="687.2" width="142.3" height="17.6" fill="#464646" rx="0" />
<rect x="853.1999999999999" y="669.6" width="142.3" height="17.7" fill="#ffffff" rx="0" />
<rect x="853.1999999999999" y="687.2" width="142.3" height="17.6" fill="#2e3436" rx="0" />
<rect x="995.3999999999999" y="669.6" width="142.3" height="17.7" fill="#e6e6e6" rx="0" />
<rect x="995.3999999999999" y="687.2" width="142.3" height="17.6" fill="#1a1a1a" rx="0" />
<rect x="1137.6" y="669.6" width="142.3" height="17.7" fill="#cccccc" rx="0" />
<rect x="1137.6" y="687.2" width="142.3" height="17.6" fill="#0a0a0a" rx="0" />
<path d="M1 670.5 L142 686.5 M1 686.5 L142 670.5" stroke="#9a0c0c" stroke-width="2"/>
<rect x="0" y="704.8" width="1289" height="17.6" fill="#ededed" rx="0" />
<text x="2" y="712.8" font-size="8" font-weight="400" fill="#2e3436" text-anchor="start" textLength="27" lengthAdjust="spacingAndGlyphs" >Füllung:</text>
<text x="2" y="720.5" font-size="8" font-weight="400" fill="#2e3436" text-anchor="start" textLength="24" lengthAdjust="spacingAndGlyphs" >Kontur:</text>
<text x="48.6" y="712.8" font-size="8" font-weight="400" fill="#2e3436" text-anchor="start" textLength="18.5" lengthAdjust="spacingAndGlyphs" font-style="italic" >Keine</text>
<text x="48.6" y="720.5" font-size="8" font-weight="400" fill="#2e3436" text-anchor="start" textLength="18.5" lengthAdjust="spacingAndGlyphs" font-style="italic" >Keine</text>
<text x="85.8" y="717" font-size="8.2" font-weight="400" fill="#555" text-anchor="start" >O:</text>
<rect x="95.7" y="706.9" width="29.2" height="13.8" fill="#ffffff" rx="2.5" stroke="#c2c2c2" stroke-width="1" />
<text x="99.7" y="716.9" font-size="8.4" font-weight="400" fill="#2e3436" text-anchor="start" textLength="5" lengthAdjust="spacingAndGlyphs" >0</text>
<rect x="113.4" y="707.4" width="11" height="12.8" fill="#ffffff" rx="2" />
<path d="M116.7 712.024 l2.2 -2.2 l2.2 2.2 M116.7 715.872 l2.2 2.2 l2.2 -2.2" stroke="#666" stroke-width="0.8" fill="none"/>
<path d="M130.5 713.5 c2-3 6-3 8 0 c-2 3 -6 3 -8 0z" fill="#111"/><circle cx="134.5" cy="713.5" r="1.5" fill="#fff"/><path d="M131 710 l1 1.5 M138 710 l-1 1.5 M134.5 709 v1.5" stroke="#111" stroke-width="0.8"/>
<rect x="144" y="712" width="6" height="5" fill="#f4c030" stroke="#333" stroke-width="0.6"/><path d="M145 712 v-2 a2 2 0 0 1 4 0" fill="none" stroke="#333" stroke-width="0.8"/>
<rect x="154.9" y="706.4" width="72.4" height="14.8" fill="url(#gBtn)" rx="2.5" stroke="#c4c4c4" stroke-width="0.8" />
<text x="158" y="717" font-size="8.4" font-weight="400" fill="#2e3436" text-anchor="start" textLength="20.5" lengthAdjust="spacingAndGlyphs" >•Folk</text>
<path d="M217 711.8 l2.8 2.8 l2.8 -2.8" stroke="#555" stroke-width="0.9" fill="none"/>
<text x="231.7" y="716.8" font-size="8.8" font-weight="700" fill="#2e3436" text-anchor="start" textLength="39.5" lengthAdjust="spacingAndGlyphs" >Rechteck</text>
<text x="277.8" y="716.8" font-size="8.6" font-weight="400" fill="#2e3436" text-anchor="start" textLength="31" lengthAdjust="spacingAndGlyphs" >In Ebene</text>
<text x="312.8" y="716.8" font-size="8.8" font-weight="700" fill="#2e3436" text-anchor="start" textLength="16.8" lengthAdjust="spacingAndGlyphs" >Folk</text>
<text x="329.8" y="716.8" font-size="8.6" font-weight="400" fill="#2e3436" text-anchor="start" textLength="315.4" lengthAdjust="spacingAndGlyphs" >. Klicken Sie auf die Auswahl, um zwischen Skalieren und Rotieren umzuschalten.</text>
<line x1="1186.5" y1="706" x2="1186.5" y2="722" stroke="#d4d4d4" stroke-width="1"/>
<text x="1188.3" y="712" font-size="8" font-weight="400" fill="#2e3436" text-anchor="start" textLength="37.5" lengthAdjust="spacingAndGlyphs" >X: 2749,79</text>
<text x="1188.3" y="720.3" font-size="8" font-weight="400" fill="#2e3436" text-anchor="start" textLength="37.5" lengthAdjust="spacingAndGlyphs" >Y:   277,06</text>
<text x="1230.7" y="717.5" font-size="8.2" font-weight="400" fill="#2e3436" text-anchor="start" >Z:</text>
<rect x="1240.5" y="707.6" width="34.8" height="13.1" fill="#ffffff" rx="2.5" stroke="#c2c2c2" stroke-width="1" />
<text x="1244.5" y="717.25" font-size="8.4" font-weight="400" fill="#2e3436" text-anchor="start" textLength="13.5" lengthAdjust="spacingAndGlyphs" >34%</text>
<rect x="1263.8" y="708.1" width="11" height="12.1" fill="#ffffff" rx="2" />
<path d="M1267.1 712.458 l2.2 -2.2 l2.2 2.2 M1267.1 716.124 l2.2 2.2 l2.2 -2.2" stroke="#666" stroke-width="0.8" fill="none"/>
<path d="M1279 721 l8 -8 M1282 721 l5 -5 M1285 721 l2 -2" stroke="#aaa" stroke-width="0.8"/>
<rect x="0" y="722.4" width="1289" height="2.6" fill="#2c3335" rx="0" />
</svg></body></html>
